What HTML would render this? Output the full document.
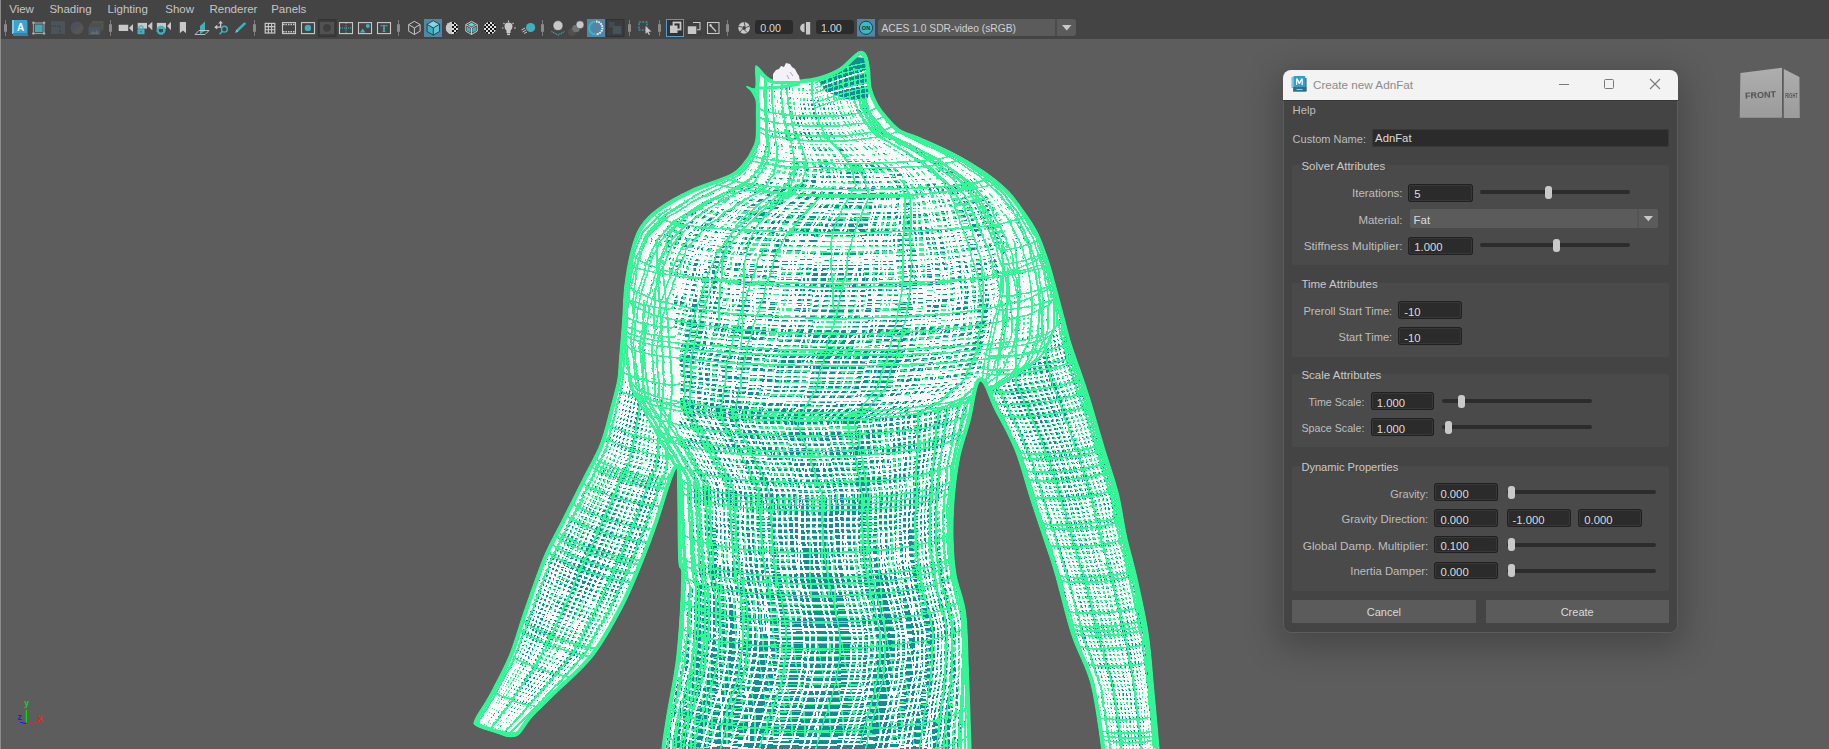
<!DOCTYPE html>
<html><head><meta charset="utf-8"><style>
html,body{margin:0;padding:0;width:1829px;height:749px;overflow:hidden;background:#5d5d5d;}
.b{position:absolute;}
.t{position:absolute;white-space:nowrap;font-family:"Liberation Sans", sans-serif;line-height:1;}
</style></head><body>
<div class="b" style="left:0.0px;top:38.0px;width:1829.0px;height:711.0px;background:#5d5d5d"></div><svg class="b" style="left:0;top:0" width="1829" height="749" viewBox="0 0 1829 749"><defs><clipPath id="bc"><path d="M755.6,88.0 C754.1,91.0 747.6,86.1 746.8,86.5 C746.0,86.9 749.5,88.2 751.0,90.5 C752.5,92.8 755.1,96.4 756.0,100.0 C756.9,103.6 756.4,105.5 756.4,112.0 C756.4,118.5 756.9,132.3 756.0,139.0 C755.1,145.7 752.5,148.5 750.8,152.0 C749.1,155.5 749.2,156.3 746.0,160.0 C742.8,163.7 740.7,169.0 731.5,174.0 C722.3,179.0 702.8,184.3 690.7,190.0 C678.6,195.7 667.3,202.0 659.0,208.0 C650.7,214.0 645.3,219.2 640.8,226.0 C636.2,232.8 634.3,239.0 631.7,248.8 C629.1,258.6 626.5,273.0 625.0,285.0 C623.5,297.0 623.6,308.5 622.7,321.0 C621.8,333.5 620.3,350.2 619.5,360.0 C618.7,369.8 619.3,371.7 617.8,380.0 C616.3,388.3 613.3,398.9 610.4,409.6 C607.5,420.3 605.0,432.5 600.5,444.0 C596.0,455.5 589.9,465.4 583.3,478.5 C576.7,491.6 567.6,509.7 561.0,522.8 C554.4,535.9 550.0,542.5 543.9,557.3 C537.8,572.1 530.0,595.1 524.2,611.5 C518.5,627.9 515.1,641.8 509.4,655.8 C503.6,669.8 495.3,684.7 489.7,695.2 C484.1,705.7 477.6,713.9 475.5,719.0 C473.4,724.1 472.9,723.5 477.0,726.0 C481.1,728.5 494.8,732.2 500.0,734.0 C505.2,735.8 504.9,736.4 508.0,736.5 C511.1,736.6 514.5,737.9 518.5,734.5 C522.5,731.1 526.4,722.9 532.3,716.4 C538.2,709.9 543.6,705.3 553.7,695.2 C563.8,685.1 581.6,670.6 593.1,655.8 C604.6,641.0 614.5,622.2 622.7,606.6 C630.9,591.0 636.6,576.2 642.4,562.2 C648.1,548.2 652.8,535.6 657.2,522.8 C661.7,510.0 665.9,494.6 669.1,485.5 C672.3,476.4 675.2,468.0 676.6,468.0 C678.0,468.0 677.3,470.2 677.7,485.5 C678.1,500.8 678.1,544.8 678.8,560.0 C679.5,575.2 682.1,561.0 681.8,577.0 C681.5,593.0 679.4,632.8 676.9,655.8 C674.4,678.8 669.5,699.4 667.0,714.9 C664.5,730.4 662.8,741.5 662.0,749.0 C661.2,756.5 610.5,758.2 662.0,760.0 C713.5,761.8 919.5,761.8 971.0,760.0 C1022.5,758.2 971.5,764.5 971.0,749.0 C970.5,733.5 969.1,690.0 968.2,667.3 C967.3,644.6 967.5,628.1 965.5,612.7 C963.5,597.3 958.1,587.1 956.0,575.0 C953.9,562.9 953.3,552.5 953.0,540.0 C952.7,527.5 952.9,513.8 954.0,500.0 C955.1,486.2 957.0,470.2 959.7,457.0 C962.4,443.8 966.6,433.5 970.0,420.8 C973.4,408.1 975.9,382.9 980.0,381.0 C984.1,379.1 989.0,397.8 994.9,409.4 C1000.8,420.9 1009.3,435.2 1015.3,450.3 C1021.3,465.4 1025.9,484.2 1031.0,500.0 C1036.1,515.8 1041.9,532.6 1046.0,545.0 C1050.1,557.4 1051.2,559.6 1055.5,574.5 C1059.8,589.4 1065.9,616.3 1071.8,634.5 C1077.7,652.7 1086.0,664.5 1091.0,683.6 C1096.0,702.7 1100.0,736.3 1101.8,749.0 C1103.6,761.7 1092.5,758.2 1102.0,760.0 C1111.5,761.8 1149.5,761.8 1159.0,760.0 C1168.5,758.2 1159.9,760.8 1159.0,749.0 C1158.1,737.2 1155.4,708.1 1153.6,689.0 C1151.8,669.9 1150.9,652.7 1148.2,634.5 C1145.5,616.3 1140.9,596.4 1137.3,580.0 C1133.7,563.6 1129.6,550.9 1126.4,536.4 C1123.2,521.9 1121.7,507.3 1118.0,492.7 C1114.3,478.1 1109.2,464.4 1104.5,449.0 C1099.8,433.6 1094.1,413.2 1090.0,400.0 C1085.9,386.8 1083.2,379.3 1080.0,370.0 C1076.8,360.7 1073.7,352.7 1071.0,344.0 C1068.3,335.3 1066.5,327.3 1064.0,318.0 C1061.5,308.7 1058.7,297.7 1056.0,288.0 C1053.3,278.3 1051.2,269.3 1048.0,260.0 C1044.8,250.7 1041.5,240.8 1037.0,232.0 C1032.5,223.2 1025.7,214.0 1020.7,207.0 C1015.7,200.0 1013.0,195.8 1007.0,190.0 C1001.0,184.2 993.7,178.0 985.0,172.0 C976.3,166.0 965.8,159.7 955.0,154.0 C944.2,148.3 929.7,142.1 920.5,138.0 C911.3,133.9 905.6,133.2 900.0,129.7 C894.4,126.2 890.8,121.3 887.0,117.0 C883.2,112.7 880.1,108.8 877.4,104.0 C874.7,99.2 872.3,93.9 871.0,88.0 C869.7,82.1 870.2,74.3 869.4,68.8 C868.6,63.3 867.8,58.1 866.2,55.2 C864.6,52.3 862.2,51.1 859.8,51.5 C857.4,51.9 855.3,54.7 851.8,57.6 C848.3,60.5 844.4,65.6 839.0,68.8 C833.6,72.0 826.1,75.0 819.7,76.9 C813.3,78.8 808.4,79.5 800.5,80.0 C792.6,80.5 779.6,82.1 772.5,80.0 C765.4,77.9 760.8,69.1 758.0,67.2 C755.2,65.3 756.0,65.3 755.6,68.8 C755.2,72.3 757.1,85.0 755.6,88.0 Z"/></clipPath><linearGradient id="vg" x1="0" y1="0" x2="0" y2="1" gradientUnits="userSpaceOnUse" x2b="0"></linearGradient></defs><g clip-path="url(#bc)"><rect x="450" y="40" width="750" height="720" fill="#108e96"/><g shape-rendering="crispEdges" fill="none"><path d="M758 50l2-2 5-3 8-1 11-2 12-1 13 0 13 0 12 1 11 2 8 1 5 3 2 2 M758 64l2-3 5-2 9-2 12-2 13-1 14 0 14 0 14 1 11 2 9 2 5 2 2 3 M758 68l2-2 5-3 9-2 12-1 13-1 15-1 14 1 13 1 12 1 9 2 5 3 2 2 M756 105l2-3 6-2 10-3 13-1 14-1 16-1 16 1 15 1 12 1 10 3 6 2 2 3 M756 110l2-3 7-3 10-2 13-2 15-1 16 0 16 0 15 1 13 2 10 2 7 3 2 3 M756 133l3-4 7-3 12-3 16-2 18-1 20-1 19 1 19 1 15 2 13 3 7 3 3 4 M731 174l4-6 13-5 20-5 27-4 31-2 33-1 34 1 31 2 26 4 21 5 12 5 5 6 M707 184l5-7 15-7 23-5 30-4 35-3 38-1 38 1 35 3 30 4 24 5 14 7 5 7 M695 188l5-7 16-7 24-5 32-5 38-3 40-1 40 1 37 3 33 5 24 5 16 7 5 7 M660 207l7-8 18-8 28-7 38-5 43-3 47-1 46 1 44 3 37 5 29 7 18 8 6 8 M630 260l7-9 21-9 33-8 43-6 51-4 54-1 54 1 50 4 44 6 33 8 21 9 7 9 M625 295l7-10 21-9 35-8 45-6 52-4 56-1 55 1 52 4 45 6 35 8 21 9 7 10 M624 300l8-10 21-9 35-8 44-6 53-4 56-1 56 1 52 4 44 6 35 8 21 9 8 10 M624 306l7-11 22-9 34-8 45-6 53-4 56-1 56 1 52 4 45 6 34 8 22 9 7 11 M624 316l7-10 22-10 34-8 45-6 53-4 56-1 56 1 52 4 45 6 35 8 21 10 8 10 M624 337l7-10 21-10 34-8 45-6 51-4 55-1 56 1 51 4 44 6 34 8 22 10 7 10 M625 342l7-10 21-9 34-8 44-6 51-4 55-1 54 1 52 4 43 6 34 8 21 9 8 10 M682 578l4-7 14-6 22-5 28-4 34-2 35-1 36 1 33 2 28 4 22 5 14 6 5 7 M681 597l4-7 14-6 23-5 29-4 34-2 36-1 36 1 34 2 29 4 23 5 14 6 5 7 M677 656l5-7 14-6 23-6 31-4 35-2 37-1 38 1 35 2 30 4 23 6 15 6 5 7 M667 718l5-7 15-7 24-6 31-4 37-3 39-1 39 1 37 3 31 4 24 6 15 7 6 7 M662 767l6-7 15-7 24-6 32-4 38-3 40-1 40 1 37 3 32 4 24 6 16 7 5 7 M927 139l10 4 10 5 9 4 8 5 7 4 8 5 7 4 5 5 6 4 5 4 5 5 4 5 3 4 4 5 3 5 3 4 4 5 3 5 3 5 3 5 1 5 3 5 2 5 2 5 2 5 1 5 2 6 1 5 2 5 1 5 2 6 0 5 1 5 0 6 0 5 1 6 0 5-3 5-2 6-2 5-3 5-2 5-4 6-8 5-7 5-8 5-7 6-11 5-10 5-11 6-2 5-2 5-2 5-2 6-1 5-2 6-2 5-2 6-2 5-1 6-2 5-1 6-2 6 0 5-1 6-1 6-1 6 0 6-1 5 0 6-1 6 0 6 0 6-1 6 0 6 0 6 0 6 1 6 0 6 0 6 1 6 1 7 1 6 2 6 1 6 2 7 1 6 1 7 0 6 1 7 0 6 0 7 1 7 1 7 0 7 1 7 1 7 0 7 0 7 1 7 0 8 0 7 1 7 0 7 0 8 1 7 0 7 0 7 0 7 0 7 M939 153l5 4 3 3 3 4 3 3 2 4 2 4 2 4 3 4 1 4 3 5 2 4 2 4 3 5 2 5 3 4 2 5 2 5 3 5 2 5 2 5 3 5 2 5 2 5 2 5 2 5 2 5 1 6 1 5 1 5 1 6 1 5-2 5-1 6-2 5-1 6-3 5-4 6-6 5-7 6-7 6-7 6-10 5-10 6-9 6-3 6-2 6-2 5-1 6-3 6-2 5-1 6-2 6-1 6-2 6-1 6-2 6 0 6-1 6-1 5-1 6-1 6-1 6-1 6 0 6-1 6 0 6-1 6 0 6-1 6 0 6 0 6-1 6 1 6-1 6 1 7 0 6 0 6 1 6 1 6 1 6 1 7 1 6 0 7 1 6 0 7 1 7 1 6 1 7 1 7 2 7 1 7 1 7 1 7 2 7 1 7 2 7 0 7 2 7 1 7 0 7 1 7 0 7 1 7 0 7 M838 43l4 4 2 4 0 5 1 4 0 5 1 4 0 5 0 4 1 5 2 4 1 5 2 4 3 5 2 4 4 4 4 5 3 4 8 4 9 3 8 4 8 4 7 4 7 4 6 3 5 4 5 4 5 4 2 3 3 4 2 3 2 4 1 4 2 3 2 4 1 5 2 4 2 4 3 4 3 5 2 5 2 4 2 5 2 5 3 5 2 5 3 5 1 5 3 5 2 5 3 5 1 5 2 5 2 5 0 6 2 5 1 5 0 5-1 6-1 5-1 6-2 5-2 6-4 5-7 6-6 6-7 6-7 5-9 6-10 6-10 7-2 5-1 6-2 6-2 5-2 6-2 6-2 6-1 5-2 6-1 6-1 6-2 6 0 6-1 6-1 6-1 6-1 6-1 6 0 6-1 6 0 5-1 6-1 6 0 6-1 7 0 6 0 6-1 6 0 6 0 6 0 6 1 6 0 7 1 6 1 6 1 6 1 7 0 6 0 6 1 7 1 7 1 6 0 7 2 7 1 6 1 7 2 7 1 7 1 7 2 7 1 7 1 7 1 7 1 7 1 8 1 7 1 7 0 7 1 7 0 7 M935 192l3 4 2 4 2 5 2 5 2 4 2 5 3 5 2 5 2 5 2 5 3 5 2 5 2 5 3 5 1 5 1 5 2 5 1 6 1 5 1 5-1 6-2 5-1 6-1 5-2 5-4 6-6 6-6 6-6 6-7 6-9 6-9 6-9 6-2 6-2 5-2 6-1 6-2 6-2 6-1 5-2 6-1 6-1 6-1 6-1 6-1 6 0 6-1 6-1 6-1 6-1 6 0 6-2 6 0 6-1 6 0 6 0 6-1 6-1 6 0 6 0 6-1 6 0 6 1 7 0 6 0 6 1 6 0 6 M916 167l0 3 1 4 1 4 1 4 1 4 1 4 2 5 2 4 2 5 2 4 2 5 2 5 2 4 3 5 2 5 2 5 2 5 3 5 3 5 1 5 2 5 1 5 2 6 1 5 2 5 0 5-1 6-1 5-1 6-1 5-2 6-4 5-5 6-6 6-7 6-6 6-8 6-10 6-8 7-2 5-2 6-1 6-2 6-2 5-1 6-2 6-1 6-1 6-1 6-1 6-1 6 0 6 0 6-1 6-1 6-1 6-1 6-1 6-1 6 0 6-1 6 0 6-1 6 0 6-1 6 0 6 0 6-1 6 0 6 0 7 0 6 1 6 0 6 1 6 1 7 0 6 0 6 1 7 0 6 1 7 1 7 1 6 1 7 2 7 1 6 1 7 1 7 2 7 1 7 2 7 1 7 2 7 1 7 1 7 1 7 0 7 1 7 0 7 1 7 M860 127l5 3 6 4 5 3 3 4 3 4 3 3 2 4-1 3-1 3-1 3 0 4-1 3 0 4-1 4 0 4 1 4 1 4 0 4 3 4 1 5 1 5 2 4 2 5 2 4 2 5 3 5 2 5 2 5 2 5 2 5 2 5 2 5 2 5 2 5 1 5 1 5 1 6-1 5-1 5-1 6-1 5-1 6-3 6-5 6-6 6-5 6-6 6-7 6-8 6-8 7-1 5-1 6-2 6-1 6-1 6-1 6-2 6-1 6 0 6-1 6-1 6 0 6 0 6 0 6-1 6-1 6 0 6-1 6-1 6 0 6-1 6-1 6 0 6-1 6-1 6 0 6-1 6 0 7 0 6-1 6 1 6 0 7 0 6 0 6 1 6 0 6 1 7 0 6 0 6 1 7 0 6 1 7 1 7 1 6 1 7 2 7 1 6 2 7 1 7 1 7 2 7 1 7 1 7 1 7 2 7 1 7 1 7 0 7 0 7 0 7 M850 164l-2 3-2 4-1 4-1 4 0 4 0 4 0 4 1 4 2 5 1 4 1 5 2 4 2 5 1 5 2 5 3 4 1 5 3 5 2 5 2 5 2 5 1 5 2 5 1 5 1 5 1 5 0 6-1 5 0 6-1 5-1 6-2 5-5 6-5 7-4 6-6 6-6 6-7 6-6 7-1 6-1 6-1 6 0 6-1 6-1 6 0 6-1 6 0 6-1 6 0 6 0 6 0 6 1 6-1 6 0 6-1 6-1 6 0 6-1 6-1 6 0 6-1 6-1 6 0 7-1 6 0 6-1 6 M845 151l-5 3-3 3-4 4-3 3-3 4-3 3-2 4-1 4-1 4 0 4-1 4 1 4 1 5 1 4 1 5 2 4 1 5 2 5 2 4 2 5 2 5 1 5 2 5 3 5 1 5 2 5 1 5 2 5 1 5 1 5 0 5-1 6 0 5 0 6-1 5-3 6-4 6-4 6-4 6-5 6-5 7-7 6-5 7 0 6-1 6 0 6-1 5-1 7 0 6 0 6 0 6 0 6 0 6 0 6 0 6 1 6 0 7 0 5-1 6 0 6-1 6-1 6-1 6 0 6 0 6-1 7-1 6-1 6 0 6 0 6-1 6 0 6-1 7 1 6 0 6 0 7 0 6 0 6-1 6 1 7 0 6 0 6 0 7 1 6 1 7 1 6 1 7 1 7 1 6 1 7 1 7 2 6 0 7 2 7 1 7 2 7 1 6 1 7 1 7 0 7 1 7 0 7 0 7 M789 42l2 4 1 4 0 5 0 4 0 5 0 4-1 5 0 4 1 5 0 4 1 5 1 4 1 4 1 5 1 4 2 4 2 4 2 4 4 4 2 3 3 4 2 4 1 3 0 4 0 4-1 3-1 4-6 3-6 3-6 3-5 4-4 3-4 4-4 4-2 4-2 4-1 4-2 4 0 4 1 5 0 4 1 5 0 4 2 5 2 4 1 5 1 5 2 4 2 5 1 5 2 5 1 5 2 5 1 5 2 5 1 5 1 5 0 5 0 5 0 6 0 5-1 6-2 6-3 6-2 6-4 6-3 6-4 6-6 7-3 7 0 6 0 5 0 6 0 7 0 6 0 6 1 6 0 6 1 6 1 6 0 6 1 6 2 7 1 6 0 6-1 6-1 6 0 6-1 6 0 6-1 6 0 6-1 6 0 6-1 6 0 6-1 7 0 6 0 6-1 6 0 7 1 6-1 6 0 6 0 7 0 6 0 6 0 7 0 6 0 7 0 6 1 7 1 6 0 7 2 6 0 7 1 6 1 7 1 7 1 6 1 7 1 7 1 7 1 6 1 7 1 7 0 7 1 7 0 7-1 7 M782 158l-8 4-8 3-6 3-5 4-6 4-5 4-3 4-2 4-3 4-2 4 0 5 0 4 0 4 0 5 0 4 1 5 1 5 2 4 0 5 2 4 1 5 1 5 2 5 1 5 1 4 2 5 1 5 1 5 1 5 0 6 0 5 0 5 0 6 0 5-1 6-2 6-3 6-2 6-2 6-4 7-3 6-2 7 1 6 0 6 0 6 1 6 1 6 0 6 2 6 1 6 1 6 1 6 1 6 2 7 2 6 1 6 0 6-1 6 0 6-1 6 0 6 0 6-1 6 0 6-1 6 0 6 0 7-1 6-1 6 0 6 0 6 0 7 0 6 1 7-1 6 0 6-1 6 0 7 0 6 0 6 0 7 0 6 0 7 0 6 1 7 1 6 0 7 0 6 1 7 1 6 0 7 2 7 0 6 1 7 0 7 1 7 1 6 1 7 0 7 0 7 0 7 0 7 M720 202l0 5 0 4 0 5 0 4 0 5 1 4 1 5 1 4 1 5 2 5 1 4 1 5 1 5 1 5 2 5 1 5 1 5 1 5 0 5 0 5 0 6 0 5 0 6-1 5-1 6-2 6-3 7-1 6-3 6-3 6-2 7 1 6 1 6 0 6 1 6 1 6 1 6 1 6 2 6 1 6 2 7 1 6 2 6 2 6 1 6 0 6-1 6 0 6 0 6-1 6 0 6 0 6-1 6 0 6-1 7 0 6-1 6 1 6-1 6-1 7 1 6 0 6 0 7 0 6 0 6-1 7 M779 139l0 4-2 3-2 4-3 4-4 4-9 3-9 4-10 4-6 3-7 4-6 4-6 4-4 4-3 4-3 5-3 4-1 4-1 5 0 4 0 4-1 5 1 5 0 4 2 5 0 4 1 5 1 5 0 4 2 5 1 5 1 5 1 5 1 5 1 4 1 6 0 5 0 5 1 5-1 6 1 5-1 6-1 6-1 6-2 6-2 6-2 6-2 7-1 6 1 6 1 6 2 6 1 6 1 6 1 6 2 6 1 6 2 6 2 7 1 6 2 6 3 6 2 6-1 6 0 6 0 6-1 6 0 6 0 6 0 6-1 6 0 6 0 7-1 6 0 6 0 6-1 6-1 7 1 6 1 7 0 6-1 6 0 7-1 6 0 6-1 7 0 6 0 6 0 7 0 6 1 7 0 6 0 7 0 6 1 7 0 6 0 7 1 6 0 7 0 7 1 6 1 7 0 7 1 6 0 7 0 7 0 7 0 7 0 7 M761 47l0 4 0 5 0 5 0 4-1 5 0 4-1 5 0 4 0 5 0 5 0 4 1 5 0 4 0 5 0 4 0 4 0 5 0 4 1 4-1 5-1 4-1 4-3 4-2 4-5 5-4 4-5 4-11 4-11 4-11 4-10 4-8 5-7 4-8 4-5 5-4 4-5 4-3 5-2 4-1 5-1 4-2 5-1 5 0 4 0 5-1 4 0 5 0 4 0 5 1 5 0 4 1 5 0 5 0 5 1 5 1 5 0 5 0 5 0 5 1 5 1 6 0 5 0 6 0 5 0 6 0 6-1 6 0 6 0 6 1 6 2 6 2 6 3 6 2 6 2 6 3 6 2 6 3 6 2 6 3 6 2 6 3 6 3 6 2 6 1 6-1 6 1 6 0 6-1 6 0 6 0 6 0 6 0 6 0 6 0 6 0 7-1 6 0 6 0 6 1 7 1 6 0 7 0 6-1 7 0 6-1 6 0 7 0 6-1 7 0 6 0 7 0 6 0 7 0 6-1 7-1 6 0 6 0 7-1 6 0 7-1 7 0 6 0 7 0 7 0 6 0 7-1 7 0 7 0 7-1 7 M759 48l0 5 0 5 0 4 0 5-1 4 0 5-1 5 0 4 0 5 0 4 0 5 0 4 0 5 0 4 0 5 0 4 0 5 1 4 0 5-1 4-2 4-2 5-3 4-2 5-5 4-5 4-5 5-12 4-11 4-12 5-9 4-9 5-7 4-8 4-6 5-4 4-5 5-4 4-2 5-2 5-1 4-2 5-1 4-1 5 0 5-1 4 0 5 0 4-1 5 0 5 0 4 0 5 1 5 0 5 0 5 0 5 0 5 1 5 0 5 1 5 0 5 1 6 0 5 0 6 1 5 0 6 0 6 0 6 0 6 2 6 3 6 2 5 3 6 2 6 3 6 3 6 3 6 2 6 3 6 3 6 3 6 3 6 3 6 3 6 0 6 1 6 0 6-1 6 0 6 0 6 0 6 1 6-1 6 0 6 0 6 0 7 0 6 0 6 0 6 1 7 1 6 0 7 0 6 0 7-1 6 0 7 0 6-1 6 0 7-1 6 0 7 0 6 0 7-1 6 0 7-2 6 0 7-1 6 0 7-1 6-1 7-1 6 0 7 0 7-1 7 0 6 0 7 0 7-1 7-1 7 M758 71l2-2 5-1 9-1 12-1 13-1 15 0 14 0 14 1 11 1 9 1 6 1 2 2 M757 80l2-2 5-1 9-1 12-1 14-1 15 0 14 0 14 1 12 1 9 1 5 1 2 2 M754 144l3-2 9-2 14-2 19-2 22 0 23-1 23 1 22 0 19 2 14 2 9 2 3 2 M752 149l3-3 10-2 15-2 20-1 23-1 25-1 25 1 23 1 20 1 15 2 10 2 3 3 M725 177l4-4 14-3 21-3 27-2 32-1 35-1 34 1 32 1 28 2 21 3 13 3 5 4 M681 195l6-4 16-4 27-3 34-3 40-2 42 0 43 0 40 2 34 3 26 3 17 4 5 4 M657 210l7-5 18-5 29-3 38-3 44-2 47-1 47 1 44 2 38 3 29 3 18 5 6 5 M643 224l7-5 19-5 31-4 40-3 47-2 50-1 51 1 47 2 40 3 31 4 19 5 7 5 M626 278l8-6 21-5 34-4 44-4 51-2 56-1 55 1 51 2 45 4 33 4 22 5 7 6 M625 293l7-6 22-5 34-4 45-4 52-2 55-1 56 1 52 2 45 4 34 4 22 5 7 6 M628 366l6-5 20-5 31-4 41-3 48-2 51-1 51 1 48 2 41 3 32 4 19 5 7 5 M860 52l7 5 1 4 1 5 0 5 1 4 1 5 0 4 1 5 2 5 1 4 2 5 3 4 4 5 3 4 4 5 5 5 6 4 11 5 11 4 10 5 10 5 10 4 8 5 8 4 7 5 8 5 6 4 6 5 5 4 5 5 4 5 4 5 4 4 3 5 4 5 3 5 2 4 4 5 3 5 1 5 3 5 1 4 2 5 2 5 1 5 2 5 2 5 1 5 2 5 1 5 0 5 0 5 M861 52l5 4 1 5 2 5 0 4 1 5 0 4 0 5 1 5 2 4 2 5 2 4 3 5 3 5 3 4 5 5 5 4 6 5 11 4 11 5 10 4 9 5 10 5 8 4 8 5 8 4 7 5 6 4 6 5 5 5 6 4 4 5 3 4 4 5 3 5 3 5 4 4 3 5 3 5 3 5 1 4 2 5 2 5 2 5 2 5 2 5 1 5 2 5 1 5 1 5 2 5 0 5 1 5 0 5 1 5 0 5 M860 51l6 5 1 5 1 4 1 5 0 4 1 5 0 5 0 4 3 5 1 4 2 5 3 5 3 4 4 5 5 4 4 5 6 4 11 5 11 4 10 5 10 4 10 5 7 4 8 5 8 4 7 5 6 5 6 4 5 5 5 4 5 5 3 4 4 5 3 5 3 4 3 5 3 5 4 5 2 4 2 5 2 5 2 5 2 5 2 5 1 5 2 5 1 4 1 5 2 5 2 5-1 5 1 6 M858 51l7 4 0 5 1 5 1 4 1 5 0 4 1 5 0 4 2 5 2 5 2 4 3 5 3 4 3 5 4 4 5 5 6 4 12 5 10 4 9 5 10 4 10 5 8 4 7 5 8 4 7 4 5 5 6 4 5 5 5 4 4 5 3 4 4 5 3 4 3 5 3 5 3 4 3 5 3 5 2 5 1 5 2 4 2 5 2 5 2 5 1 5 1 5 2 5 1 5 1 5 1 5 0 5 0 5 1 5 0 5 0 5-1 6-2 5-3 5 M856 50l6 5 1 4 1 5 1 4 0 5 0 5 1 4 1 5 1 4 2 5 2 5 3 4 3 5 3 4 5 5 5 4 5 5 11 4 10 4 10 5 9 4 9 4 8 5 7 4 7 5 8 4 5 4 5 5 5 4 4 4 4 5 3 4 4 5 2 4 3 5 3 5 3 4 3 5 2 5 2 4 2 5 2 5 1 5 2 5 1 5 2 4 1 5 2 5 1 5 1 5 1 5 0 5 0 5 0 6 M851 49l6 5 1 4 1 5 1 5 0 4 0 5 1 4 0 5 2 4 2 5 1 5 3 4 4 5 3 4 4 5 4 4 6 4 10 5 9 4 9 4 10 5 8 4 7 4 7 4 7 5 6 4 5 4 4 4 4 5 4 4 3 4 3 4 2 5 3 4 2 5 2 4 3 5 2 5 3 4 2 5 1 5 1 5 3 4 1 5 2 5 1 5 1 5 1 5 1 5 2 5 0 5 0 5 M850 49l5 5 1 4 1 5 1 4 0 5 1 4 0 5 0 5 2 4 2 5 2 4 2 5 3 4 3 5 5 4 3 5 6 4 10 4 10 5 8 4 9 4 9 4 6 5 7 4 6 4 7 4 4 4 4 5 3 4 4 4 2 4 3 5 3 4 2 4 3 5 2 4 2 5 2 5 2 4 2 5 2 5 1 5 2 4 1 5 2 5 1 5 1 5 1 5 2 5 M843 48l5 5 1 4 1 5 1 5 0 4 0 5 0 4 1 5 2 4 1 5 2 4 2 5 3 4 2 5 4 4 5 5 4 4 10 4 9 4 7 5 9 4 7 4 7 4 5 4 6 4 6 5 3 4 2 4 3 4 3 4 1 4 2 4 2 5 1 4 2 4 2 5 2 4 2 5 2 5 1 4 1 5 2 5 1 4 1 5 2 5 0 5 2 5 1 5 1 5 1 5 0 5 1 5 0 5 0 5 0 5 0 5-1 5-2 6 M781 48l1 4 0 5 0 5 0 4 0 5 0 4-1 5 1 4 0 5 0 4 1 5 0 4 1 5 1 4 1 5 1 4 1 4 2 5 2 4 1 4 1 4 1 4-1 4-1 4-2 4-3 5-5 4-8 4-8 4-8 4-5 4-6 4-6 4-5 4-3 5-3 4-3 5-2 4-1 5-1 5-1 4-1 5 0 5-1 5 0 5-1 4 0 5 0 5 0 5-1 5 0 5 0 5 0 5 0 5 0 5 0 5-1 6-1 5 M775 48l2 5 0 4 0 5 0 5-1 4 0 5 0 4 0 5 0 4 0 5 1 4 0 5 1 4 0 5 1 4 1 5 1 4 2 4 1 4 1 5-1 4 1 4-2 4-1 4-3 4-3 5-6 4-9 4-9 4-9 4-6 4-6 4-6 5-6 4-3 4-4 5-3 4-2 5-2 5-1 4-1 5-1 5-1 4 0 5-1 5 0 5-1 5 0 5-1 5 0 5-1 5 0 5 M771 49l0 4 0 5 1 4-1 5 0 5 0 4 0 5 0 4 0 5 0 4 0 5 1 4 0 5 1 4 0 5 1 4 0 5 2 4 1 4 0 4-1 5 0 4-2 4-3 4-3 4-3 5-7 4-10 4-10 4-9 4-6 4-7 5-7 4-6 4-4 5-4 5-3 4-3 5-1 4-2 5-1 5-2 5-1 4 0 5-1 5 0 5-1 5-1 5 0 5 0 5-1 5 0 5 0 5 0 5 0 5 0 5-1 5 M760 51l0 4 0 5 0 5 0 4-1 5 0 4-1 5 0 4 0 5 0 5 1 4 0 5 0 4 0 5 0 4 0 5 0 4 0 5 0 4-2 5-1 4-2 5-3 4-3 5-5 4-5 4-8 5-12 4-11 5-11 4-8 5-8 4-8 5-7 4-5 5-5 5-4 4-4 5-1 5-2 5-2 5-2 4-1 5 0 5-2 5 0 5-1 5-1 5-1 5 0 5-1 5 0 5 0 5-1 5 0 5 0 5 M759 51l0 5 0 4 1 5-1 4-1 5 0 5 0 4 0 5 0 4-1 5 1 5 0 4 0 5 0 4 0 5 0 4 0 5 0 4 0 5-2 4-2 5-1 4-3 5-4 4-5 5-5 4-8 5-12 4-11 5-12 4-8 5-8 4-8 5-7 5-5 4-5 5-4 5-3 4-3 5-1 5-2 5-2 5-1 5-1 4-1 5-1 5-1 5 0 5-2 5 0 5 0 5 0 5-1 5 0 5 M634 243l1-1 1 0 3 0 3 1 4 1 4 1 4 1 4 1 3 1 2 1 1 1 1 1 M625 287l1 0 2-1 4 0 5 1 6 1 6 1 6 2 6 1 4 2 4 2 2 1 1 1 M624 301l1-1 3 0 4 0 5 1 6 1 6 1 7 2 6 1 5 2 3 2 3 1 0 1 M624 306l1-1 2-1 5 1 5 0 6 1 7 2 6 1 6 2 5 2 4 1 2 2 1 1 M623 315l1-1 3 0 4 0 6 0 6 1 7 2 6 1 7 2 5 2 4 2 2 1 1 1 M622 328l1-1 3 0 5 0 5 1 7 1 7 1 7 2 6 2 6 2 4 2 2 1 1 2 M621 342l1-1 3 0 5 0 6 0 7 2 7 1 7 2 7 2 6 2 4 2 3 2 0 1 M616 387l1-1 4 0 5 0 7 1 7 1 9 2 8 2 7 2 6 3 5 2 3 2 1 1 M610 409l2-1 4 0 5 0 7 1 9 2 8 2 9 2 8 3 7 2 5 3 3 2 1 1 M604 431l2-1 4 0 6 0 8 1 9 2 9 2 9 3 9 3 7 2 6 3 3 2 1 2 M600 444l2-1 4 0 7 0 8 1 9 2 10 3 10 2 9 3 8 3 5 3 4 2 1 2 M594 456l2-1 4 0 7 0 8 2 10 2 10 2 10 3 9 3 8 3 6 3 4 3 0 2 M590 465l2-2 4 0 7 1 8 1 10 2 10 3 10 3 10 3 7 3 6 3 4 3 1 2 M582 481l2-1 4-1 7 1 9 2 10 2 10 3 11 3 9 3 8 4 6 3 4 3 1 2 M576 493l2-1 4 0 7 0 9 2 10 2 11 3 11 4 10 4 8 3 6 4 4 2 1 2 M566 513l2-1 4 0 8 1 9 2 10 2 11 4 11 3 10 4 9 4 6 4 4 3 0 2 M560 526l2-2 4 0 8 1 9 2 10 3 12 3 11 4 10 4 8 4 7 4 4 3 0 2 M549 546l3-1 4 0 8 1 9 2 11 3 11 4 11 4 11 4 8 4 7 4 3 3 1 2 M547 550l3-1 4 0 8 1 9 2 11 3 11 4 11 4 11 4 8 4 7 4 3 3 1 2 M544 558l2-1 4 0 8 1 9 2 11 3 11 4 11 4 11 5 8 4 7 4 4 3 0 2 M540 567l2-1 5 0 8 1 9 2 11 3 11 4 11 4 10 4 9 5 6 4 4 3 1 2 M533 588l2-1 4 0 7 1 9 3 10 3 11 3 11 4 10 5 8 4 6 4 4 3 0 2 M525 610l2-1 4 0 7 1 8 2 10 3 10 4 10 4 9 4 8 4 6 3 3 3 1 2 M523 614l2-1 5 0 6 1 9 2 9 3 10 4 10 4 9 4 8 4 6 3 3 3 1 2 M515 640l1-1 4 0 6 1 7 2 9 3 9 3 9 3 8 4 7 3 5 3 3 3 0 2 M513 644l2-1 4 0 5 1 8 2 8 3 8 3 9 3 8 4 6 3 5 3 3 2 1 2 M488 698l1-1 3 0 4 0 5 1 6 2 6 2 6 2 6 2 5 2 3 2 2 2 1 1 M479 713l1 0 2 0 4 0 5 1 5 1 6 1 5 2 5 2 5 2 3 2 2 1 0 1 M666 260l1 5 1 4 0 5 1 5 1 4 1 5 0 5 1 5 0 4 1 5 0 5 1 4 0 5 0 5 1 5 1 4 0 5 0 5 1 5 1 4 0 5 0 5 1 5 1 4 0 5 0 5-1 5 0 4 0 5 0 5-1 5 0 4 0 5 0 5 0 5-1 4 0 5 0 5 0 5 0 4 0 5-1 5 0 5 0 4-2 5-2 4-1 4-2 5-1 4-2 5-2 4-1 5-2 4-1 5-2 5-1 4-2 4-1 5-2 4-1 5-2 4-2 5-1 4-2 5-2 4-2 4-2 5-2 4-2 5-2 4-1 4-2 5-2 4-2 4-3 5-2 4-2 4-3 4-2 4-3 4-2 4-2 4-3 4-2 5-3 4-2 4-3 4-3 3-3 4-4 3-3 3-4 4-3 3-3 4-3 3-4 3-4 4-3 3-3 3-3 4-4 3-3 4-3 3-4 3-4 4-3 3-3 3-4 4-3 3-4 3-3 4 M656 260l1 4 0 5 0 4 0 5 1 4 0 5 0 5 1 4 0 5 0 4 0 5 1 5 0 4 0 5 1 5-1 4 1 5 0 4 1 5-1 5 1 4 0 5 0 5 0 4 0 5 0 5 0 4-1 5 0 4 0 5-1 5-1 4 0 5 0 4-1 5 0 5-1 4 0 5-1 4 0 5-1 4 0 5-1 4-2 5-1 4-3 4-2 4-1 5-1 4-2 5-2 4-1 4-2 5-2 4-1 4-2 5-2 4-2 4-1 5-2 4-2 4-2 5-1 4-2 4-2 4-2 5-2 4-2 4-2 5-1 4-3 4-1 5-2 4-2 4-2 4-2 5-2 4-3 4-2 4-2 5-2 4-2 4-3 4-2 4-2 5-2 4-3 4-3 3-3 4-3 4-2 4-3 4-3 3-3 4-3 4-3 3-3 4-3 4-3 3-4 4-2 4-4 3-3 4-2 4-4 3-3 4-3 3-3 4-3 4-2 4 M656 295l0 5 0 5 1 4 0 5 0 5 0 4 1 5 0 4 0 5 0 5 0 4 0 5 0 4 1 5 0 5 0 4 0 5 0 5 0 4-1 5 0 4-1 5-1 5 0 4-1 5 0 4-1 5 0 4-1 5 0 4-1 5 0 5 0 4-1 5-1 4-2 4-2 5-2 4-2 4-2 4-1 5-2 4-1 4-2 5-2 4-1 4-2 5-2 4-1 4-2 5-2 4-2 4-2 4-1 5-2 4-2 4-1 5-3 4-2 4-1 4-2 5-2 4-2 4-2 5-2 4-2 4-2 5-2 4-2 4-2 4-2 4-2 5-3 4-2 4-2 4-2 5-2 4-2 4-3 4-3 4-2 4-3 3-3 4-2 4-3 4-3 4-3 3-3 4-3 4-3 4-3 3-3 4-3 4-3 3-3 4-3 4-3 3-3 4-3 3-3 4-3 4-2 4 M644 261l-1 5 0 4 0 4 0 5-1 4 0 5 0 4 1 5-1 4 0 5 0 5 0 4 0 5 0 4 0 5 0 4 0 5 0 4 0 5 0 5 0 4 0 5 0 4 0 5-1 4 0 5 0 5-2 4 0 5-1 4-1 4-1 5 0 4-1 5-1 4-1 5-1 4-1 5 0 4-1 4-1 5-1 4-2 4-3 4-1 5-2 4-2 4-2 4-2 4-1 5-2 4-2 4-2 4-2 4-2 5-1 4-2 4-2 4-2 4-2 4-2 5-2 4-2 4-1 4-2 4-3 5-2 4-2 4-1 4-2 4-2 5-2 4-1 4-2 5-2 4-2 4-1 5-2 4-2 4-2 4-2 5-2 4-2 4-1 5-2 4-3 4-2 4-2 4-2 4-2 4-3 5-2 4-2 4-3 3-3 4-2 4-3 4-2 4-3 4-3 4-2 4-3 4-2 3-3 4-3 4-3 4-3 4-1 4-1 4 M633 255l-1 5-1 4-1 5 0 4-1 4-1 5-1 4 1 5 0 4-1 5-1 5 0 4 0 5 0 4 0 5-1 4 0 5 0 4-1 5 0 4 0 5-1 4 0 5 0 4-1 5 0 4 0 5-1 4-1 5-1 4-1 5-1 4-1 4-1 5-1 4-2 5-1 4-1 4-1 5-1 4-2 4-1 5-2 4-2 4-2 4-2 4-2 4-2 4-2 4-2 4-2 4-2 5-2 4-2 4-2 4-2 4-2 4-2 4-2 4-2 4-2 4-2 4-2 4-2 4-2 5-2 4-2 4-2 4-2 4-2 4-1 4-2 5-2 4-1 4-2 5-1 4-2 4-2 4-1 5-2 4-1 4-2 5-2 4-1 4-2 5-1 4-2 4-1 5-2 4-1 4-2 5-2 4-1 4-2 4-2 4-3 4-2 5-2 4-2 4-2 4-2 4-2 4-3 4-2 4-3 4-2 4-2 4-3 4 0 4 0 4 M632 255l-1 5-1 4 0 5-2 4 0 5-1 4 0 5-1 4 0 5 0 4 0 5-1 4 0 5-1 4 0 5 0 4 0 5-1 4 0 5 0 4 0 5-1 4-1 5 0 4 0 5 0 5-1 4-1 5-1 4-1 4-1 5-1 4-1 5-1 4-1 4-2 5-1 4-1 4-1 5-1 4-1 5-2 4-2 4-2 4-2 4-2 4-2 4-2 4-2 4-2 4-2 5-2 4-2 4-2 4-2 4-2 4-2 4-2 4-2 4-2 4-2 4-2 4-2 4-2 4-2 5-2 4-2 4-2 4-2 4-2 4-1 4-2 5-2 4-1 4-2 5-1 4-2 4-2 4-1 5-2 4-1 4-2 5-1 4-2 4-2 5-1 4-2 4-1 5-2 4-1 4-2 5-1 4-2 4-2 4-2 4-2 4-2 5-2 4-2 4-2 4-3 4-2 4-2 4-2 4-3 4-2 4-2 4-3 4 0 4 0 4 M1040 239l-1-1-2 0-4 0-4 1-5 1-5 1-5 1-5 2-4 1-3 2-2 1 0 1 M1054 283l-1-1-3-1-4 1-6 0-7 1-7 2-7 1-7 2-6 2-4 2-3 2 0 1 M1056 287l-1-1-4 0-4 0-7 0-7 2-7 1-8 2-7 2-6 2-4 1-3 2 0 2 M1058 296l-1-1-4 0-5 0-6 0-8 1-8 2-8 1-8 2-6 2-5 2-3 2-1 1 M1064 319l-1-2-4 0-6-1-8 1-9 1-10 1-10 2-8 2-8 2-6 2-3 2-1 2 M1067 327l-2-1-4-1-7 0-8 0-10 1-10 2-10 2-10 2-8 2-6 2-3 2-1 2 M1079 367l-2-1-5-2-8 0-11 0-12 1-12 2-13 2-12 2-10 3-8 2-5 3-1 2 M1083 380l-1-1-5-1-8-1-11 0-11 1-13 1-13 2-11 3-10 2-8 3-4 2-2 2 M1089 398l-1-2-5-1-8 0-10 0-11 0-13 2-12 1-11 2-10 3-7 2-5 2-1 2 M1091 403l-2-2-5-1-8-1-9 0-12 1-12 1-12 2-11 2-10 2-7 2-5 3-1 2 M1099 429l-2-1-5-2-7 0-9 0-11 0-12 1-11 1-11 2-9 2-7 2-4 2-2 2 M1101 438l-1-1-5-2-7 0-9 0-11 0-11 1-12 1-10 2-9 2-7 2-4 2-2 2 M1107 456l-2-2-5-1-7-1-9 0-10 1-11 0-12 2-10 1-9 2-7 2-4 2-1 2 M1111 469l-2-1-4-2-7 0-10 0-10 0-11 1-12 1-10 2-9 1-7 2-4 2-1 2 M1122 514l-1-1-5-2-7 0-8-1-11 1-10 0-11 1-10 2-9 2-7 2-4 1-1 2 M1125 528l-2-2-4-1-7-1-8 0-10 0-11 1-11 1-9 1-9 2-6 2-4 2-2 1 M1132 559l-1-1-4-1-7-1-8 0-10 0-10 0-10 1-10 1-8 2-6 2-4 1-2 2 M1133 564l-1-2-4-1-7-1-8 0-10 0-10 1-10 1-10 1-8 1-6 2-4 2-1 1 M1140 596l-1-2-4-1-6-1-8 0-10 0-10 0-10 1-9 1-8 2-6 1-4 2-1 2 M1145 618l-1-1-4-1-6-1-8-1-10 0-10 1-9 1-10 1-7 1-6 2-4 1-1 2 M1149 646l-1-2-4-1-5-1-8 0-9 0-9 0-9 1-9 1-7 1-6 1-3 2-1 1 M1150 650l-1-1-4-1-6-1-7 0-9-1-9 1-9 0-8 1-8 1-5 2-4 1-1 1 M1151 664l-1-1-3-1-6-1-7-1-8 0-8 0-9 1-8 0-7 1-5 2-4 1-1 1 M1161 766l-1-1-3-1-5-1-5-1-7 0-8-1-7 1-7 0-6 1-5 1-3 1-1 1 M1162 775l-1-1-3-1-4-1-6-1-7 0-8 0-8 0-7 0-6 1-4 1-3 1-1 1 M1001 252l0 5 0 4 0 5 0 4 0 5 0 5 0 4 0 5-1 4-1 5-1 4-1 4-1 5-1 4-1 5-1 4-1 5-2 4 0 4-1 5-2 4 0 5-1 4-1 5 0 4-1 5-1 4 0 5 1 4 3 4 2 4 2 4 2 4 3 5 2 4 1 4 2 4 2 4 2 4 2 4 3 5 2 4 2 4 2 4 2 4 1 5 2 4 1 5 2 4 1 4 1 5 2 4 1 5 1 4 2 4 1 5 1 4 2 5 1 4 2 4 2 5 1 4 1 5 2 4 1 4 2 5 1 4 1 5 2 4 2 4 1 5 1 4 1 5 2 4 1 5 1 4 1 5 2 4 1 4 1 5 1 4 1 5 2 4 1 5 1 4 1 5 2 4 1 5 2 4 2 4 1 5 2 4 2 4 1 5 2 4 1 4 2 5 2 4 1 5 1 4 0 5 1 4 1 5 0 4 1 5 1 5 0 4 1 5 1 4 1 5 1 4 0 5 1 5 0 4 1 5 0 4 0 5 1 5 M1005 232l0 4 0 5 0 4 1 5 0 4 1 5 0 4 0 5 0 4 0 5 1 4 0 5-1 4-1 4-1 5-1 4 0 4-1 5-1 4 0 5-1 4-1 4-1 5 0 4-1 4-1 5 0 4-1 5 0 4 0 4-1 5 0 4 2 4 2 5 2 4 2 4 2 4 2 4 2 4 2 5 2 4 2 4 2 4 2 5 2 4 2 4 2 4 2 4 2 5 1 4 1 5 2 4 1 4 1 5 2 4 1 5 2 4 1 4 2 5 1 4 1 5 2 4 1 5 1 4 2 4 2 5 0 4 2 5 1 4 2 5 1 4 2 5 1 4 1 4 2 5 1 4 2 5 1 4 1 5 1 4 1 5 2 4 0 5 2 4 1 5 1 4 1 5 1 4 1 5 2 4 1 4 2 5 1 4 2 5 1 4 2 5 1 4 2 4 1 5 2 4 1 5 2 4 0 5 1 4 1 5 0 4 1 5 1 5 1 4 0 5 1 4 1 5 0 4 1 5 1 5 0 4 1 5 1 4 0 5 0 5 1 4 0 5 M1030 261l1 5 1 4 0 4 1 5 1 4 0 4 0 5 1 4 0 4 1 5 0 4 0 4 1 5 0 4 0 4 1 5 0 4 1 4 0 5 1 4 1 4 0 4 1 5 1 4 2 4 1 5 2 4 1 4 2 5 2 4 2 4 1 5 2 4 2 4 1 5 2 4 2 5 1 4 2 4 2 5 1 4 2 5 0 4 2 5 2 4 1 4 1 5 1 4 2 5 1 4 1 4 2 5 1 4 1 5 1 4 2 5 0 5 2 4 1 5 1 4 1 5 1 4 1 5 2 4 1 5 1 4 1 5 2 4 1 5 1 4 1 5 1 4 1 5 1 4 2 5 0 4 1 5 2 4 0 5 2 4 1 5 0 5 1 4 2 5 1 4 1 5 1 4 0 5 1 5 1 4 1 5 1 4 1 5 1 5 0 4 1 5 1 4 0 5 0 5 1 4 1 5 0 5 1 4 0 5 1 4 0 5 1 5 0 4 1 5 1 4 0 5 0 5 1 4 0 5 M1021 207l2 4 3 4 2 3 3 4 2 4 3 4 2 4 2 4 1 5 2 4 1 4 2 5 2 4 1 4 2 5 1 4 1 5 1 4 1 5 2 4 1 5 1 4 1 5 2 4 0 4 1 5 2 4 1 5 1 4 2 5 1 4 1 5 1 4 2 4 2 5 1 4 2 4 1 5 1 4 2 5 1 4 2 4 2 5 1 4 1 5 2 4 1 5 1 4 1 5 2 4 1 4 2 5 1 4 2 5 0 4 2 5 1 4 2 5 1 4 1 4 2 5 1 4 2 5 1 4 1 5 1 4 1 5 1 4 1 5 1 4 0 5 1 4 2 5 0 5 1 4 1 5 1 4 2 5 1 4 1 5 1 4 1 5 1 4 1 5 1 4 1 5 1 4 1 5 1 4 1 5 1 5 1 4 1 5 1 4 1 5 0 4 1 5 0 4 1 5 1 5 0 4 1 5 0 5 1 4 0 5 0 4 1 5 0 5 1 4 0 5 0 5 1 4 0 5 1 4 0 5 0 5 1 4 0 5 1 5 0 4 1 5 0 4 1 5 0 5 1 4 0 5 1 4" stroke="#fafafb" stroke-width="1.6"/><path d="M758 55l2-3 5-2 9-2 11-2 13-1 14 0 13 0 13 1 11 2 9 2 5 2 2 3 M758 59l2-2 5-3 9-2 11-1 13-1 15-1 14 1 13 1 11 1 9 2 5 3 2 2 M757 73l2-3 6-2 9-2 12-2 13-1 15 0 14 0 14 1 11 2 9 2 6 2 2 3 M757 78l2-3 6-2 9-3 11-1 14-1 15-1 14 1 14 1 12 1 9 3 5 2 2 3 M757 82l1-2 6-3 9-2 12-2 14-1 15 0 14 0 14 1 12 2 9 2 6 3 2 2 M756 87l2-3 6-2 9-3 12-1 14-1 15-1 14 1 14 1 12 1 9 3 6 2 2 3 M756 91l2-2 6-3 9-2 12-2 14-1 15 0 15 0 14 1 12 2 10 2 5 3 2 2 M756 96l2-3 6-2 9-3 13-1 14-1 15-1 15 1 15 1 12 1 9 3 6 2 2 3 M756 101l2-3 6-3 10-2 12-2 15-1 15 0 16 0 14 1 12 2 10 2 6 3 2 3 M756 114l3-3 6-2 10-3 14-2 15-1 17 0 16 0 16 1 13 2 10 3 7 2 2 3 M756 119l3-3 6-3 11-2 13-2 16-2 18 0 17 0 16 2 14 2 10 2 7 3 2 3 M756 124l3-4 6-3 11-2 15-2 16-1 18-1 18 1 16 1 15 2 11 2 6 3 3 4 M756 128l3-3 7-3 11-3 15-2 17-1 18-1 19 1 17 1 15 2 11 3 7 3 2 3 M756 137l3-3 8-4 13-3 17-2 19-2 22 0 21 0 19 2 17 2 13 3 8 4 3 3 M755 142l3-4 8-4 14-3 18-3 21-1 23-1 23 1 21 1 18 3 13 3 9 4 3 4 M753 147l3-5 9-4 15-3 19-3 23-2 24 0 24 0 23 2 19 3 15 3 9 4 3 5 M751 151l3-4 10-5 16-3 21-3 23-2 26-1 26 1 24 2 20 3 16 3 10 5 3 4 M749 156l3-5 11-5 16-4 22-3 25-1 27-1 27 1 26 1 21 3 17 4 10 5 4 5 M746 160l3-5 11-4 18-5 23-3 26-2 29 0 28 0 27 2 22 3 18 5 11 4 4 5 M741 165l4-5 11-5 19-5 24-3 28-2 30-1 30 1 28 2 24 3 19 5 11 5 4 5 M736 170l4-6 12-5 20-5 25-3 30-3 32 0 31 0 30 3 25 3 20 5 12 5 4 6 M719 179l5-6 13-6 22-6 29-3 33-3 35-1 36 1 33 3 28 3 22 6 14 6 5 6 M685 193l6-8 16-7 26-6 33-4 39-3 42-1 42 1 39 3 34 4 26 6 16 7 5 8 M677 198l6-8 17-7 26-7 35-4 41-4 43-1 44 1 40 4 35 4 27 7 16 7 6 8 M669 202l6-8 17-7 28-7 36-5 42-3 45-1 45 1 42 3 36 5 28 7 17 7 6 8 M655 212l6-9 19-8 29-7 38-5 45-3 47-1 48 1 45 3 38 5 29 7 19 8 6 9 M650 217l7-9 18-8 30-7 39-6 46-3 49-1 48 1 46 3 39 6 30 7 19 8 6 9 M645 221l7-8 19-9 31-7 40-5 46-4 50-1 50 1 46 4 40 5 30 7 20 9 6 8 M641 226l6-9 20-8 31-8 41-5 47-4 51-1 51 1 47 4 41 5 31 8 20 8 6 9 M639 231l7-9 19-9 32-7 41-6 48-3 52-2 51 2 48 3 41 6 32 7 20 9 6 9 M637 236l7-9 20-9 32-8 41-5 49-4 52-1 52 1 48 4 42 5 32 8 20 9 7 9 M635 241l7-10 20-8 32-8 42-6 49-3 53-2 52 2 49 3 42 6 32 8 21 8 6 10 M633 246l7-10 20-9 33-7 42-6 50-4 53-1 53 1 49 4 42 6 33 7 20 9 7 10 M631 251l7-10 21-9 33-8 43-6 49-3 54-2 53 2 50 3 43 6 33 8 20 9 7 10 M630 255l8-9 20-9 33-8 43-6 51-4 53-1 54 1 50 4 43 6 33 8 21 9 7 9 M629 265l7-9 21-10 33-7 44-6 51-4 54-2 55 2 50 4 44 6 33 7 21 10 8 9 M628 270l7-10 21-9 34-8 44-6 51-3 54-2 55 2 51 3 44 6 34 8 21 9 7 10 M627 275l7-10 21-9 34-8 44-6 52-4 55-1 55 1 51 4 44 6 34 8 21 9 7 10 M626 280l7-10 22-9 34-8 44-6 51-4 56-1 55 1 52 4 44 6 34 8 22 9 7 10 M625 285l7-10 22-9 34-8 45-6 51-4 56-1 56 1 52 4 44 6 34 8 22 9 7 10 M625 290l7-10 22-9 34-8 45-6 52-4 55-1 56 1 52 4 45 6 34 8 22 9 7 10 M624 311l7-10 22-10 34-8 45-6 53-4 56-1 56 1 52 4 45 6 34 8 22 10 7 10 M623 321l8-10 21-10 35-8 45-6 52-4 56-1 57 1 52 4 45 6 34 8 22 10 8 10 M623 326l8-10 21-9 34-8 45-7 52-3 56-2 56 2 52 3 45 7 34 8 22 9 7 10 M623 331l7-10 22-9 34-8 45-6 51-4 56-1 56 1 52 4 44 6 34 8 22 9 7 10 M625 347l7-10 21-9 34-8 43-6 51-4 55-1 54 1 51 4 44 6 33 8 21 9 7 10 M626 352l7-9 21-9 33-8 43-6 50-4 54-1 54 1 50 4 43 6 33 8 21 9 7 9 M627 358l6-10 21-9 32-7 42-6 50-4 52-1 53 1 49 4 43 6 32 7 20 9 7 10 M627 363l7-9 20-9 32-7 41-6 48-4 52-1 52 1 48 4 41 6 32 7 20 9 7 9 M628 368l7-9 19-8 31-8 41-5 47-4 51-1 50 1 47 4 41 5 31 8 20 8 6 9 M629 374l6-9 19-9 31-7 39-5 47-4 49-1 50 1 46 4 40 5 30 7 19 9 7 9 M629 379l7-9 18-8 30-7 38-5 45-3 49-1 48 1 45 3 38 5 30 7 18 8 7 9 M630 385l6-9 18-8 29-6 37-6 44-3 46-1 47 1 44 3 37 6 29 6 18 8 6 9 M633 390l6-8 17-8 28-6 36-5 41-3 45-1 45 1 42 3 36 5 28 6 17 8 6 8 M636 395l6-8 17-7 27-6 35-5 42-3 44-1 44 1 42 3 35 5 27 6 17 7 6 8 M639 401l6-8 16-7 27-7 35-4 41-3 44-1 43 1 41 3 35 4 27 7 17 7 5 8 M642 406l6-7 16-8 27-6 34-4 40-3 43-1 43 1 40 3 35 4 26 6 17 8 6 7 M645 412l6-8 16-7 26-6 34-5 40-3 42-1 42 1 40 3 34 5 26 6 16 7 6 8 M648 418l6-8 16-7 25-6 34-5 39-3 42-1 41 1 39 3 34 5 25 6 17 7 5 8 M651 423l6-7 16-7 25-6 33-5 38-3 41 0 41 0 39 3 33 5 25 6 16 7 5 7 M654 429l6-8 15-6 25-6 33-5 37-2 41-1 41 1 37 2 33 5 25 6 15 6 6 8 M658 434l5-7 15-6 25-6 32-5 37-2 40-1 40 1 37 2 32 5 24 6 16 6 5 7 M661 440l5-7 15-7 24-5 32-5 36-2 40-1 39 1 37 2 31 5 24 5 15 7 6 7 M664 446l5-7 15-7 24-5 31-5 36-2 38-1 39 1 36 2 31 5 24 5 15 7 5 7 M667 451l5-6 15-7 23-5 31-4 35-3 38-1 38 1 36 3 30 4 24 5 14 7 5 6 M670 457l5-7 15-6 23-5 30-4 35-3 37-1 37 1 35 3 30 4 23 5 15 6 5 7 M674 463l5-7 14-6 23-5 29-4 34-3 37-1 37 1 35 3 29 4 23 5 14 6 5 7 M677 469l4-7 15-6 22-5 29-4 34-3 36-1 37 1 34 3 29 4 22 5 14 6 5 7 M677 475l5-7 14-6 22-5 29-4 34-3 36-1 36 1 34 3 29 4 23 5 14 6 4 7 M677 480l5-6 14-6 22-5 29-4 34-3 36-1 36 1 34 3 29 4 22 5 14 6 5 6 M678 486l4-6 14-6 22-5 29-4 34-3 36-1 36 1 33 3 29 4 22 5 14 6 5 6 M678 492l5-6 13-6 22-5 29-4 34-3 35-1 36 1 34 3 28 4 22 5 14 6 5 6 M678 498l5-6 13-6 22-5 29-4 33-3 36-1 36 1 33 3 29 4 22 5 14 6 4 6 M678 504l5-6 13-6 22-5 29-4 33-3 36-1 36 1 33 3 28 4 22 5 14 6 5 6 M678 510l5-6 14-6 21-5 29-4 33-3 36-1 36 1 33 3 28 4 22 5 14 6 5 6 M678 516l5-6 14-6 21-5 29-4 33-3 36-1 36 1 33 3 28 4 22 5 14 6 5 6 M678 522l5-6 14-6 22-5 28-4 33-3 36-1 35 1 34 3 28 4 22 5 14 6 4 6 M678 528l5-6 14-6 22-5 28-4 33-3 36-1 35 1 34 3 28 4 22 5 14 6 4 6 M678 534l5-6 14-6 22-5 28-4 33-3 36 0 35 0 33 3 29 4 22 5 13 6 5 6 M679 540l4-6 14-6 22-5 28-4 33-2 36-1 35 1 33 2 29 4 22 5 13 6 5 6 M679 547l4-7 14-6 22-5 28-4 34-2 35-1 36 1 33 2 28 4 22 5 14 6 5 7 M679 553l4-7 14-6 22-5 29-4 33-2 35-1 36 1 33 2 29 4 22 5 13 6 5 7 M679 559l4-6 14-6 22-6 29-3 33-3 36-1 35 1 34 3 28 3 22 6 14 6 5 6 M680 565l4-6 14-6 22-5 29-4 33-3 35-1 36 1 33 3 29 4 22 5 13 6 5 6 M681 572l5-7 13-6 22-5 29-4 33-2 35-1 36 1 33 2 28 4 22 5 14 6 5 7 M681 584l5-6 14-6 22-5 29-4 33-3 36-1 36 1 33 3 29 4 22 5 14 6 4 6 M681 591l5-7 14-6 22-5 29-4 33-3 36-1 37 1 33 3 29 4 22 5 14 6 5 7 M680 603l5-6 14-6 23-6 29-4 34-2 37-1 36 1 34 2 30 4 22 6 14 6 5 6 M680 610l5-7 14-6 22-5 30-4 34-3 37-1 37 1 35 3 29 4 23 5 14 6 5 7 M679 616l5-6 15-7 22-5 30-4 34-3 38 0 37 0 34 3 30 4 22 5 15 7 5 6 M679 623l5-7 14-6 23-5 30-5 34-2 37-1 38 1 34 2 30 5 23 5 14 6 5 7 M679 629l4-6 15-7 23-5 29-4 35-3 37 0 38 0 34 3 30 4 23 5 14 7 5 6 M678 636l5-7 14-6 23-5 30-4 35-3 37-1 38 1 35 3 29 4 23 5 15 6 5 7 M678 643l5-7 14-6 23-6 30-4 35-3 37 0 38 0 35 3 30 4 23 6 14 6 5 7 M677 649l5-6 15-7 23-5 30-4 35-3 37-1 38 1 35 3 30 4 23 5 14 7 5 6 M676 663l5-7 14-6 24-6 30-4 35-3 38-1 38 1 35 3 30 4 23 6 15 6 5 7 M675 669l5-6 14-7 24-5 30-4 35-3 38-1 38 1 36 3 30 4 24 5 14 7 5 6 M673 676l5-7 15-6 24-6 30-4 36-2 38-1 38 1 36 2 30 4 24 6 14 6 5 7 M672 683l5-7 15-6 24-6 30-4 36-3 38-1 39 1 36 3 30 4 24 6 15 6 5 7 M671 690l5-7 15-6 24-6 31-4 35-3 39-1 39 1 35 3 31 4 24 6 15 6 5 7 M670 697l5-7 15-7 24-5 31-4 36-3 39-1 38 1 36 3 31 4 24 5 15 7 5 7 M669 704l5-7 15-7 24-5 31-5 36-2 39-1 39 1 36 2 31 5 24 5 15 7 5 7 M668 711l5-7 15-7 24-5 31-5 36-2 40-1 39 1 36 2 31 5 24 5 15 7 5 7 M666 725l5-7 15-7 25-6 31-4 37-3 39-1 39 1 37 3 31 4 24 6 16 7 5 7 M665 732l6-7 15-7 24-6 32-4 36-3 40-1 39 1 37 3 31 4 25 6 15 7 5 7 M665 739l5-7 15-7 25-6 31-4 37-3 39-1 40 1 37 3 31 4 25 6 15 7 5 7 M664 746l5-7 16-7 24-6 32-4 37-3 39-1 40 1 37 3 32 4 24 6 15 7 5 7 M664 753l5-7 15-7 25-6 31-4 37-3 40-1 40 1 37 3 32 4 24 6 15 7 6 7 M663 760l5-7 16-7 24-6 32-4 37-3 40-1 40 1 37 3 32 4 24 6 15 7 6 7 M758 51l0 4 0 5 0 5 0 4-1 5 0 5 0 4-1 5 0 4 0 5 1 5 0 4-1 5 0 4 0 5 0 5 0 4 0 5 0 4-1 5-2 5-2 4-2 5-3 5-5 4-5 5-5 5-12 4-12 5-12 5-9 4-9 5-8 5-8 5-6 4-4 5-5 5-5 4-2 5-2 5-2 4-2 5-1 5-2 4 0 5-1 5-1 4-1 5-1 5-1 4 0 5 0 5 0 5 0 4 0 5 0 5-1 5 0 5 0 5 1 5 1 6 1 5 0 5 1 6 1 5 0 6 1 5 0 6 1 6 2 6 3 5 3 6 3 6 3 6 4 5 3 6 2 6 4 6 3 6 3 5 3 6 3 6 4 6 3 6 0 6 1 6 0 6 0 6 0 6 0 6 0 6 0 6 0 6 0 6 0 6 1 7 0 6 0 6 0 7 1 6 1 6 1 7 0 6-1 7 0 6 0 7 0 6-1 7 0 6-1 7 0 6-1 7 0 6-1 7-1 6-1 7-1 6-2 7-1 6-1 7-1 7-1 6-1 7-1 7 0 6-1 7-1 7 0 7-1 7 0 7 M678 200l-8 5-9 5-5 5-5 4-5 5-5 5-2 4-2 5-2 5-2 5-1 4-1 5-1 5-1 4-1 5-1 5-1 4-1 5 0 5 0 4 0 5-1 5 0 5 0 5 0 5 0 5 0 5 0 5 1 5 1 6 1 5 0 5 1 6 0 5 1 6 0 5 1 6 3 6 3 6 3 5 3 6 3 6 3 6 3 5 4 6 2 6 4 6 3 6 3 5 4 6 3 6 3 6 0 6 1 6 0 6 0 6 0 6 0 6 0 6 1 6 0 6 0 6 0 7 0 6 0 6 1 6 0 7 1 6 1 7 1 6 0 6-1 7 0 6-1 7 0 6 0 7 0 7-1 6-1 6 0 7-1 6 0 7-2 6-1 7-1 6-2 7-1 6-1 7-1 7-1 6-1 7-1 7-1 7 0 6-1 7-1 7 0 7-1 7 M749 158l-2 5-5 5-5 5-5 4-12 5-12 5-12 5-9 5-8 5-9 4-8 5-6 5-5 5-4 4-5 5-2 5-2 5-2 4-2 5-2 5-1 4-1 5-1 5-1 4-1 5-1 5-1 5 0 4 0 5-1 5 0 5 0 5 0 4 0 5-1 5 0 6 1 5 1 5 0 5 1 5 0 6 1 5 1 6 0 5 1 6 1 5 3 6 3 6 3 6 3 5 3 6 3 6 3 6 4 5 3 6 3 6 3 6 4 6 3 5 3 6 3 6 1 6 0 6 0 6 0 6 1 6 0 6 0 6 0 6 0 6 0 6 1 7 0 6 0 6 0 6 0 7 1 6 2 7 0 6 1 6-1 7 0 6 0 7-1 7 0 6-1 7 0 6-1 7 0 6-1 7 0 6-2 7-1 6-1 7-2 6-1 7-2 6-1 7-1 6-1 7 0 7-1 7-1 6-1 7 0 7-1 7-1 7 M1017 200l3 5 3 5 3 5 3 4 4 5 2 5 2 5 2 5 2 5 2 5 3 6 1 5 2 5 1 5 2 5 2 6 1 5 0 5 1 6 0 5 1 6 0 5 0 5-2 6-2 5-2 5-3 6-2 5-5 5-7 5-8 6-7 5-8 5-10 6-11 5-10 5-2 6-3 5-2 5-1 6-2 5-2 5-1 6-3 5-1 6-2 6-2 5-1 6-1 6-1 5-1 6-1 6 0 6-1 6-1 5 0 6-1 6 0 6 0 6-1 6 0 6 M858 47l5 5 2 4 1 5 1 4 0 5 0 5 1 4 1 5 1 4 2 5 1 4 2 5 4 5 4 4 4 5 4 4 4 5 10 4 11 4 10 5 10 4 9 4 9 5 8 4 7 5 8 4 7 4 5 5 5 4 6 4 4 5 4 4 4 5 3 4 3 5 3 4 4 5 3 5 3 5 2 5 3 5 1 5 3 5 2 5 2 5 2 5 1 5 2 6 2 5 2 5 1 6 0 5 1 5 0 6 1 5 0 5 0 6-2 5-2 5-2 6-3 5-2 5-4 6-8 5-8 5-7 6-8 5-9 5-11 6-11 5-3 5-1 6-2 5-2 5-2 6-2 5-2 6-2 5-2 6-1 5-2 6-2 6 0 6-1 5-1 6-1 6-1 6 0 6-1 5-1 6 0 6-1 6 0 6 0 6 0 6 0 6 0 6 0 6 0 6 1 6 0 6 1 7 1 6 1 6 2 6 2 7 1 6 1 6 0 7 1 7 0 6 1 7 0 7 1 7 0 7 1 7 1 7 0 7 1 7 1 7 0 7 1 8 0 7 0 7 1 7 1 8-1 7 1 7 0 7 0 7 M982 167l5 5 6 4 5 4 4 4 4 5 4 4 3 5 3 4 4 5 2 5 4 5 3 4 2 5 2 5 2 5 3 5 2 5 2 5 2 6 1 5 3 5 1 5 2 6 1 5 1 5 0 6 1 5 0 5 1 6 0 5-2 5-2 6-2 5-3 5-2 6-4 5-8 5-8 6-7 5-8 5-10 6-11 5-10 6-2 5-2 5-2 6-2 5-2 6-2 5-2 6-2 5-1 6-2 5-2 6-2 6-1 6-1 5 0 6-1 6-1 6-1 6-1 5 0 6-1 6 0 6 0 6 0 6-1 6 0 6 0 6 0 6 1 6 0 6 0 6 1 7 1 6 2 6 1 6 2 7 1 6 1 6 0 7 0 7 1 6 1 7 1 7 0 7 1 7 1 7 0 7 1 7 0 7 1 7 1 7 0 8 1 7 0 7 M959 154l7 4 8 4 6 4 5 5 6 4 5 4 4 4 4 5 3 4 4 5 3 4 3 5 3 4 3 5 3 5 3 5 2 5 2 5 2 5 3 5 2 5 1 5 3 5 1 5 2 6 2 5 2 5 0 6 1 5 0 5 1 6 0 5 1 5-2 6-3 5-2 5-2 6-2 5-5 5-7 6-8 5-7 6-8 5-10 5-11 6-11 5-2 6-2 5-2 5-2 6-2 5-2 6-2 5-2 6-1 6-2 5-2 6-2 6 0 5-1 6-1 6-1 6-1 6-1 6-1 5 0 6-1 6 1 6-1 6-1 6 0 6 0 6 0 6 1 6 0 6 0 6 0 7 1 6 2 6 0 6 2 6 1 7 2 6 1 6 0 7 0 7 1 6 1 7 0 7 1 7 1 7 1 7 0 7 1 7 1 7 0 7 1 7 1 7 0 8 1 7 1 7 0 7 0 7 0 8 1 7 0 7 M994 178l4 4 3 4 4 5 3 4 3 5 3 4 3 5 3 5 4 5 2 4 2 5 2 5 3 5 2 5 2 5 2 6 2 5 2 5 2 5 2 5 1 6 1 5 0 5 1 6 1 5 0 5 0 6-2 5-2 6-1 5-3 5-2 6-5 5-7 5-8 6-7 5-8 6-10 5-11 6-10 5-3 5-2 6-2 5-2 6-2 5-2 6-1 5-2 6-2 6-2 5-2 6-1 6-1 5-1 6-1 6-1 6-1 6-1 6-1 5 0 6 0 6-1 6 0 6-1 6 0 6 0 6 0 6 0 6 0 6 1 6 0 7 1 6 1 6 1 6 1 6 2 7 2 6 1 6 0 7 0 7 0 6 1 7 1 7 1 7 0 7 1 7 1 7 1 7 1 7 0 7 1 7 1 7 1 8 0 7 1 7 M855 46l4 4 2 5 1 4 1 5 1 4 0 5 0 5 1 4 1 5 2 4 2 5 2 4 3 5 3 4 4 5 5 4 5 5 8 4 11 4 10 4 9 4 9 5 9 4 7 4 8 4 7 4 6 5 5 4 5 4 5 4 4 4 3 4 4 5 4 4 2 5 3 4 3 5 3 4 4 5 2 5 2 5 2 5 3 5 2 5 2 5 3 5 1 5 2 5 2 6 2 5 1 5 1 6 1 5 1 5 0 6 1 5 0 5-2 6-2 5-2 5-2 6-2 5-5 5-7 6-8 5-7 6-8 5-10 6-11 5-11 6-2 5-2 6-2 5-2 6-2 5-2 6-2 5-2 6-1 5-2 6-2 6-1 6-1 5-1 6-1 6-1 6-1 6-1 6-1 5 0 6 0 6-1 6 0 6-1 6 0 6-1 6 1 6 0 6 0 6 0 6 1 7 0 6 1 6 2 6 1 6 2 7 1 6 0 6 1 7 1 7 0 6 1 7 0 7 2 7 0 7 1 6 1 8 1 7 0 7 1 7 1 7 1 7 1 8 0 7 1 7 0 7 1 7 0 7 1 7 0 7 M1008 202l3 4 3 5 3 5 3 5 2 5 2 4 2 5 2 5 3 5 2 6 2 5 2 5 2 5 2 5 1 6 1 5 1 5 1 6 1 5 0 5 0 6-2 5-1 5-2 6-3 5-2 6-4 5-7 5-8 6-8 5-7 6-10 5-11 6-11 6-2 5-2 5-2 6-2 5-2 6-2 5-2 6-2 6-2 5-1 6-2 6-2 6 0 5-1 6-2 6 0 6-1 6-1 6-1 5-1 6 0 6 0 6-1 6 0 6 0 6-1 6 0 6 1 6-1 6 M908 130l9 4 10 4 9 4 8 4 7 5 7 4 7 4 6 4 5 4 5 4 4 4 4 4 3 4 3 4 3 5 3 4 4 5 2 4 3 5 3 4 3 5 2 5 2 5 3 5 2 5 3 5 2 5 1 5 3 5 1 6 3 5 1 5 1 5 1 6 1 5 0 5 1 6 0 5-1 5-3 6-1 5-3 6-2 5-4 5-7 6-7 5-8 6-8 5-10 6-11 6-10 5-2 6-3 5-1 6-3 5-2 6-2 5-2 6-1 6-2 5-2 6-2 6-1 6-1 5-1 6-1 6-1 6-1 6-1 6-1 6 0 5-1 6 0 6 0 6 0 6-1 6-1 6 1 6 0 6 0 6 0 7 0 6 1 6 1 6 1 6 1 7 2 6 1 6 0 7 1 6 1 7 0 6 1 7 1 7 0 7 1 7 1 7 2 7 1 7 0 7 1 7 1 7 1 7 1 7 0 8 1 7 1 7 0 7 1 7 0 7 0 7 M982 174l3 4 3 4 4 4 3 4 3 5 2 4 3 5 3 4 3 5 3 5 2 5 2 5 3 5 2 5 3 5 2 5 1 5 2 5 3 5 1 5 2 6 1 5 1 5 1 6 1 5 1 5 0 6-2 5-2 5-2 6-2 5-2 6-4 5-8 6-7 5-7 6-8 5-10 6-10 5-11 6-2 6-2 5-3 6-2 5-2 6-1 5-2 6-2 6-2 5-2 6-2 6-1 6-1 6-1 5-1 6-1 6 0 6-2 6-1 6 0 6 0 5-1 6 0 6-1 6 0 6 0 6 0 6 0 7 0 6 0 6 0 6 1 6 1 6 1 6 1 7 1 6 1 6 1 7 1 6 0 7 1 6 1 7 0 7 1 7 1 7 1 7 2 7 0 7 1 7 1 7 2 7 0 7 1 7 1 8 1 7 0 7 1 7 M850 45l5 4 2 4 0 5 1 4 1 5 0 5 0 4 1 5 1 4 2 5 1 4 3 5 3 4 3 5 4 4 4 4 4 5 9 4 10 4 9 4 9 4 9 4 9 4 7 4 6 4 7 4 6 4 4 4 4 4 4 4 4 4 3 4 3 4 3 4 2 5 3 4 3 5 3 4 3 5 2 5 2 4 3 5 2 5 2 5 3 5 2 5 2 5 3 6 1 5 3 5 1 5 1 5 1 6 1 5 1 5 1 6 0 5-1 5-2 6-2 5-2 6-2 5-5 6-7 5-7 6-8 5-7 6-10 5-10 6-11 6-3 5-2 6-2 5-1 6-3 6-2 5-1 6-2 6-2 5-2 6-1 6-2 6-1 6-1 5-1 6-1 6-1 6-1 6-1 6 0 6 0 6-1 6 0 6-1 6 0 6-1 6 1 6-1 6 0 6 1 6 0 6 0 6 1 6 2 7 1 6 1 6 1 6 1 7 0 6 1 7 1 7 0 6 1 7 1 7 1 7 1 7 1 7 1 7 1 7 1 7 1 7 1 7 1 7 1 8 1 7 1 7 0 7 0 7 1 7 0 7 M978 176l3 4 3 4 3 4 2 5 3 4 2 4 3 5 4 5 2 4 2 5 2 5 3 5 2 5 2 5 3 5 2 5 2 5 2 5 2 6 2 5 1 5 1 5 1 6 1 5 1 5 0 6-2 5-2 5-1 6-2 5-2 6-4 5-8 6-7 5-8 6-7 5-10 6-10 6-11 6-2 5-2 6-2 5-2 6-2 6-2 5-2 6-2 6-2 5-1 6-2 6-2 6 0 6-1 6-1 5-1 6-1 6-1 6-1 6 0 6 M959 160l4 3 4 4 4 4 3 4 2 4 3 4 3 4 2 4 3 5 2 4 4 5 2 4 3 5 2 5 3 5 1 5 3 5 3 5 2 5 2 5 2 5 2 5 2 5 2 5 2 6 0 5 1 5 1 6 1 5 1 5-2 6-2 5-1 5-3 6-2 5-4 6-7 5-7 6-7 6-7 5-11 6-10 6-11 6-2 5-1 6-3 5-2 6-2 6-2 5-2 6-1 6-2 5-2 6-1 6-2 6-1 6-1 6-1 6-1 5-1 6-1 6 0 6-1 6 0 6-1 6 0 6 0 6-1 6-1 6 1 6-1 6 0 6 0 6 0 6 1 7 1 6 1 6 1 6 2 6 1 7 1 6 0 7 0 6 1 7 0 7 2 6 0 7 1 7 2 7 1 7 1 7 1 7 1 7 1 7 1 7 1 7 1 8 1 7 1 7 0 7 1 7 0 7 1 7 M950 155l6 4 3 4 4 3 4 4 3 4 2 4 3 4 2 4 2 4 3 5 3 4 2 5 3 4 3 5 2 5 2 5 3 4 2 5 3 5 2 5 2 5 2 6 2 5 2 5 2 5 1 5 2 6 1 5 1 5 1 5 0 6-2 5-1 6-2 5-2 5-2 6-4 5-7 6-7 6-8 5-7 6-10 6-10 6-10 6-2 5-2 6-3 5-2 6-1 6-3 5-1 6-2 6-2 5-2 6-1 6-2 6 0 6-1 6-1 6-1 6-1 5-1 6-1 6 0 6 0 6-1 6-1 6 0 6-1 6 0 6 0 6-1 6 1 6 0 6 0 7 0 6 1 6 1 6 1 6 1 7 2 6 0 6 0 7 M845 43l4 5 2 4 1 5 1 4-1 5 1 4 0 5 0 4 2 5 1 4 2 5 2 4 3 5 3 4 4 5 3 4 4 4 9 4 9 4 9 4 9 4 8 4 7 4 6 4 7 3 6 4 5 4 3 4 4 3 3 4 3 4 2 4 3 4 2 4 2 4 3 5 2 4 3 4 3 5 2 5 3 5 2 4 2 5 3 5 2 5 2 5 2 5 3 5 2 5 2 6 2 5 1 5 1 5 1 6 1 5 1 5 1 5-2 6-1 5-2 6-2 5-2 6-4 5-7 6-7 5-7 6-8 6-9 6-11 5-10 6-1 6-3 6-2 5-2 6-2 6-2 5-1 6-2 6-2 6-1 5-2 6-2 6 0 6-1 6-1 6-1 6-1 6-1 6 0 5-1 6-1 6 0 6 0 6-1 6-1 6 0 6 0 6 0 6 0 7 0 6 0 6 0 6 1 6 1 6 1 7 1 6 1 6 1 7 0 6 1 7 0 6 1 7 1 7 1 7 2 6 1 7 1 7 1 7 1 7 1 7 1 7 2 7 1 8 1 7 1 7 0 7 1 7 0 7 1 7 1 7 M974 197l2 4 3 5 3 5 2 4 2 5 2 5 3 5 2 5 3 5 1 5 2 5 3 5 2 5 2 5 1 6 2 5 1 5 1 6 1 5 1 5-2 6-1 5-2 5-2 6-2 5-4 6-7 6-7 5-7 6-7 6-10 5-10 6-10 6-2 6-2 6-2 5-2 6-2 6-2 5-2 6-1 6-2 6-1 6-2 5-2 6 0 6-1 6-1 6-1 6-1 6-1 6 0 6-1 6-1 6 0 6 M956 182l1 4 3 5 2 4 2 4 3 5 2 5 2 4 3 5 2 5 2 5 3 5 2 5 2 5 2 5 3 5 2 5 2 5 2 5 1 6 1 5 1 5 1 5 1 6-2 5-1 5-2 6-1 5-2 6-4 5-7 6-7 6-6 6-7 5-10 6-10 6-10 6-1 6-3 6-1 5-2 6-2 6-2 6-2 5-1 6-2 6-1 6-2 6-1 6 0 6-1 6-1 6-1 6-1 5-1 6-1 6 0 6-1 6 0 6 M949 193l2 5 3 4 2 5 2 4 2 5 3 5 2 5 2 5 3 5 2 5 2 5 3 5 1 5 3 5 1 5 2 5 1 6 1 5 2 5 0 5-1 6-1 5-2 6-2 5-1 6-5 5-6 6-6 6-7 6-7 5-9 6-10 6-9 7-2 5-2 6-1 6-2 5-2 6-2 6-1 6-2 6-2 6-1 6-1 5-1 6-1 6-1 6-1 6 0 6-1 6-1 6-1 6-1 6 0 6-1 6 0 6-1 6 0 6-1 6 0 6 0 6-1 6 0 6 0 7 1 6 0 6 1 6 M923 151l4 4 2 3 1 3 2 4 1 3 2 4 1 4 1 4 2 4 2 4 1 4 3 5 2 4 2 5 2 5 2 4 2 5 3 5 3 5 2 5 2 5 2 5 3 5 2 5 2 5 1 5 2 5 1 5 1 6 2 5 0 5-1 6-1 5-2 6-1 5-2 5-4 6-6 6-7 6-6 6-7 5-9 6-9 7-9 6-2 5-2 6-2 6-2 6-1 5-3 6-1 6-1 6-2 6-1 6-1 6-1 6-1 6 0 6-1 6-1 6-1 6-1 5-1 6 0 6-1 6-1 6 0 6-1 6 0 6-1 6 0 7 0 6-1 6 1 6-1 6 1 6 1 7 0 6 0 6 1 6 2 6 0 7 0 6 1 7 0 6 1 7 1 7 2 6 1 7 1 7 1 7 2 7 1 7 2 7 1 7 1 7 2 7 0 7 2 7 1 7 0 7 1 7 0 7 1 7 M831 42l3 4 2 4 0 5 1 4 0 5 1 4 0 5 0 4 1 5 1 4 1 5 2 4 3 5 3 4 2 4 4 4 4 5 6 4 8 3 8 4 7 4 6 3 6 4 5 4 4 3 5 4 3 4 2 3 1 3 1 4 0 3 2 4 0 4 1 3 1 5 2 4 2 4 1 4 3 5 2 4 2 5 2 5 2 4 2 5 3 5 2 5 2 5 3 5 2 5 2 5 2 5 2 5 1 5 2 5 1 6 1 5 1 5-1 6-2 5-1 6-1 5-2 6-3 5-7 6-5 6-7 6-6 6-9 6-9 6-9 6-2 6-1 6-2 5-2 6-2 6-1 6-2 6-1 6-2 6-1 6-1 6-1 6 0 6 0 6-1 6-1 5-1 6-1 6-1 6 0 6-1 6 0 6-1 6-1 6 0 6-1 6 0 6 0 7-1 6 0 6 1 6 0 6 0 7 1 6 0 6 1 6 1 6 0 7 1 6 0 7 1 6 1 7 1 7 1 6 1 7 1 7 2 7 1 7 1 7 2 7 1 6 2 8 1 7 1 7 1 7 1 7 1 7 1 7 0 7 0 7 M887 135l5 3 4 4 5 4 3 3 4 4 0 3 1 3 0 4 0 3 1 4 0 4 1 3 0 4 2 5 1 4 2 4 2 4 2 5 1 5 2 4 2 5 3 5 3 5 1 4 3 5 2 5 2 5 2 5 2 5 2 5 2 6 1 5 1 5 2 5 0 5 0 6-2 5 0 6-2 5-1 6-4 5-6 6-5 6-7 6-6 6-8 6-9 6-9 7-1 6-2 5-1 6-2 6-1 6-2 6-1 6-1 6-2 6-1 6-1 6 0 6 0 6 0 6-2 6 0 6-1 5-2 6 0 6-1 6-1 6 0 6 0 6-1 6-1 6 0 7 0 6-1 6 0 6 0 6 0 6 0 7 1 6 0 6 0 6 1 6 0 7 1 6 0 6 1 7 1 7 0 6 2 7 0 7 2 6 1 7 1 7 2 7 1 7 2 6 1 7 2 7 1 7 1 8 1 7 1 7 1 7 1 7 0 7 0 7 M903 153l0 3 0 3 0 3 0 4 0 3 0 4 0 4 1 4 2 4 0 4 2 4 2 5 2 4 2 5 2 5 2 4 2 5 2 5 3 5 2 5 2 5 2 4 2 5 2 5 2 6 2 5 1 5 2 5 1 5 1 6-1 5-1 5-1 6-2 5-1 6-3 6-6 6-6 5-6 6-6 6-8 7-9 6-8 6-1 6-2 6-2 6-1 5-1 6-2 6-1 6-1 6-1 6-1 6-1 6-1 6 0 6 0 6-1 6-1 6 0 6-2 6 0 6-1 6 0 6-1 6-1 6 0 6-1 6-1 6 0 6-1 6 0 7 0 6 0 6 0 6 1 6 0 7 1 6 0 6 1 6 0 7 0 6 1 7 1 6 1 7 0 6 2 7 1 7 1 7 2 6 1 7 2 7 1 7 2 7 1 7 M823 41l3 4 2 5 0 4 1 5-1 4 1 5 0 4-1 5 2 4 1 5 1 4 1 5 3 4 2 4 3 5 3 4 3 4 6 4 8 3 6 4 6 4 6 3 5 4 4 3 4 4 3 4 3 3-1 3 0 4 0 3 0 3-1 4 1 4-1 3 1 4 1 5 1 4 1 4 2 4 2 5 2 4 2 5 2 5 2 4 2 5 2 5 2 5 3 5 2 5 2 5 2 5 2 5 2 5 1 5 2 5 1 6 1 5-1 5-1 6-1 5-1 6-2 5-3 6-5 6-6 6-6 6-6 6-8 6-9 6-8 7-1 5-1 6-2 6-1 6-2 6-1 6-1 6-1 6-1 6-1 6-1 6-1 6 0 6 0 6 0 6-1 6-1 6-1 6-1 6-1 6 0 6-1 6 0 6-1 6-1 6 0 6 0 6-1 6 0 6 0 6 0 7 0 6 0 6 1 6 0 6 0 7 1 6 1 6 0 7 0 6 1 7 1 7 1 6 1 7 1 7 2 6 1 7 1 7 2 7 1 7 1 7 2 6 2 8 1 7 1 7 1 7 0 7 1 7 0 7 1 6 M890 172l-1 4 1 4 0 4 2 4 1 4 1 5 2 4 2 5 1 5 2 4 3 5 2 5 2 5 2 4 2 5 3 5 2 5 2 5 2 5 1 5 2 6 1 5 1 5 1 5-1 6 0 5-1 6-2 5-1 6-3 5-5 6-6 6-6 6-6 6-7 6-8 7-8 6-2 6-1 6-1 6-1 5-2 6-1 6-1 6-1 6-1 6-1 6 0 6-1 6 0 7 0 6-1 6-1 5-1 6 0 6-1 6-1 6-1 6 0 6-1 6 M881 155l-2 3-1 3-1 3-1 4-1 4 0 3 0 4 0 4 1 5 1 4 1 4 2 5 1 4 2 5 2 4 2 5 2 5 2 5 2 4 3 5 2 5 2 5 2 5 2 5 1 5 2 5 1 6 2 5 0 5 0 5-1 6-1 5-1 6-1 5-3 6-5 6-5 6-6 6-5 6-7 6-9 7-7 6-1 6-1 6-1 6-1 6-2 6-1 6-1 6-1 6 0 6-1 6-1 6 0 6 1 6 0 6-1 6-1 6-1 6 M815 41l2 4 2 4 0 5 0 4 0 5 0 4 0 5 0 5 1 4 1 4 1 5 1 4 3 5 2 4 2 4 3 4 2 4 6 4 6 4 5 3 6 4 5 4 4 3 3 4 2 3 3 4 1 3-1 3-2 4-2 3-1 3-1 4-1 3-1 4 0 4 0 4 1 4 0 4 2 5 2 4 1 5 1 4 2 5 2 5 2 4 3 5 2 5 2 5 2 5 2 5 2 5 2 5 1 5 2 5 2 5 1 5 1 5-1 6-1 5 0 6-2 5 0 6-3 6-5 6-5 6-6 6-5 6-7 6-8 6-7 7-1 6-1 6-1 5-1 6-1 6-1 6-1 6-1 6 0 6-1 6-1 7 0 6 1 6 0 6-1 6-1 6 0 6-2 6 0 6-1 6 0 6-1 6 0 6-1 6-1 6-1 6 0 6 0 6-1 6 0 7 1 6 0 6-1 6 1 7 0 6 0 6 1 6 0 7 0 6 0 7 1 6 1 7 1 6 1 7 1 7 2 6 1 7 2 7 0 7 2 6 2 7 1 7 1 7 1 7 2 7 0 7 1 7 1 7 0 7 0 7 M870 148l1 3-2 3-2 3-2 4-1 3-2 4-1 3-1 4-1 4 1 4 0 4 0 4 2 5 1 4 2 5 1 4 2 5 2 4 2 5 2 5 2 5 2 5 2 4 2 5 2 5 2 5 2 5 2 6 1 5 1 5 1 5 0 5-1 6-1 5-1 6-1 5-3 6-5 6-5 6-5 6-5 6-7 7-7 6-7 7-1 5-1 6-1 6-1 6-1 6-1 6 0 6-1 6-1 6 0 6-1 6 0 6 1 7 0 6-1 6-1 6 0 5-1 6-1 6-1 6 0 6-1 6-1 7 0 6 0 6-2 6 1 6-1 6 0 6-1 7 0 6 1 6 0 6 0 6 0 7 0 6 1 6 0 7 0 6 M835 119l5 4 5 3 5 4 4 3 4 4 3 4 2 3 2 4 1 3-2 3-3 3-2 3-2 4-2 4-1 3-2 4-1 4 1 4 0 4 0 4 1 4 2 5 1 4 2 5 1 5 2 4 2 5 2 5 2 5 2 4 3 5 1 5 3 5 1 5 2 5 2 5 1 5 2 5 0 6-1 5 0 6-1 5-1 6-1 5-2 6-5 6-5 6-4 6-5 6-7 6-7 7-7 6-1 6-1 6-1 6 0 6-1 6-1 6-1 6 0 6-1 6 0 6-1 6 0 6 0 6 1 7-1 5-1 6-1 6 0 6-1 6-1 6 0 6 0 6-1 6-1 7 0 6-1 6 0 6-1 6-1 6 1 6 0 7 0 6 0 6 0 6 0 7 0 6 1 6 0 7 0 6 1 7 0 6 1 7 1 6 1 7 1 6 2 7 0 7 2 6 1 7 2 7 1 7 2 7 1 7 1 7 1 7 1 7 1 7 0 7 1 6 0 7 M806 41l3 4 0 4 1 5 0 4 0 5 0 4-1 5 0 4 1 5 1 4 1 5 1 4 2 5 2 4 2 4 2 4 3 4 4 4 6 4 4 3 4 4 4 3 3 4 2 4 2 3 1 4 1 3-3 3-3 3-3 3-3 4-2 3-2 4-2 4-1 4 0 4 0 4-1 4 2 4 1 5 1 4 1 5 2 4 2 5 2 5 2 4 1 5 2 5 3 5 1 5 3 5 2 5 1 5 2 5 1 5 1 5 1 5 0 6-1 5-1 5 0 6-1 5-3 6-4 6-4 6-5 6-4 6-7 7-6 6-6 7-1 6-1 6-1 6 0 6-1 6-1 6 0 6 0 6-1 6 0 6 0 6 0 6 1 6 0 6-1 6 0 6-1 6-1 6-1 6 0 6 0 6-1 6 0 6-1 6-1 7 0 6-1 6 0 6-1 6 0 6 0 7 0 6 0 6 0 6 0 7 0 6 1 6 0 7 0 6 0 7 1 6 1 7 1 6 1 7 1 6 1 7 2 7 1 6 1 7 1 7 2 7 1 7 1 7 1 6 2 7 0 7 1 7 0 7 1 7 0 7 M850 148l0 3-4 3-4 3-3 3-3 4-2 4-2 3-3 4-1 4 0 4 0 4-1 4 2 4 1 5 1 4 1 5 1 4 2 5 2 5 2 4 2 5 1 5 3 5 2 5 2 5 1 5 2 5 2 5 1 5 1 5 1 5 0 5-1 6 0 5-1 6-1 5-2 6-4 6-4 6-5 6-4 6-7 7-6 6-5 7-1 6-1 6 0 6-1 6-1 6-1 6 0 6 0 6 0 6 0 6 0 6 0 6 1 6 0 6 0 6-1 6-1 6 0 6-1 6-1 6 M812 183l-1 4 0 4 1 5 1 4 1 5 1 4 1 5 2 4 2 5 1 5 2 4 2 5 1 5 2 5 3 5 1 5 2 5 1 5 2 5 1 5 1 5-1 5 0 6 0 5 0 6-1 5-2 6-4 6-4 6-4 6-5 6-5 7-6 6-5 7-1 6 0 6-1 6 0 6 0 6-1 6 0 6 0 6 0 6 0 6 1 6 0 6 1 6 1 7-1 6-1 5 0 6-1 6-1 6 0 6-1 7 0 6-1 6 0 6-1 6-1 6 0 6 M798 41l2 4 0 5 0 4 1 5-1 4 0 5 0 4 0 5 0 4 1 5 1 4 1 5 2 4 1 4 2 4 2 5 2 4 3 3 5 4 4 4 3 3 3 4 2 3 1 4 1 4 0 3 0 4-5 3-5 3-4 3-4 3-3 4-3 4-3 3-1 4-1 4-1 4-1 5 1 4 0 4 1 5 1 4 2 5 1 4 2 5 1 5 2 4 2 5 2 5 2 5 2 5 1 5 2 5 1 5 2 5 1 5 1 5 0 5-1 6 0 5 0 6-1 5-2 6-4 6-4 6-3 6-5 6-5 7-5 6-5 7 0 6-1 6-1 6 0 6 0 6 0 6 0 6 0 6 0 6 0 6 1 6 0 6 1 7 0 6 0 6-1 6 0 6-1 6 0 6-1 6 0 6-1 6 0 6-1 6-1 6 0 6-1 6 0 7-1 6 1 6 0 6 0 7 0 6-1 6 0 6 0 7 0 6 0 6 0 7 1 6 0 7 1 6 1 7 1 6 1 7 1 7 1 6 1 7 1 7 1 6 2 7 1 7 1 7 1 7 1 6 1 7 0 7 1 7 0 7 0 7 M829 148l-1 4-5 3-4 3-6 3-4 4-3 3-3 4-4 4-1 4-1 4-1 4-1 4 1 4 0 5 1 4 1 5 1 4 1 5 2 4 2 5 2 5 1 4 2 5 2 5 2 5 1 5 2 5 2 5 1 5 1 5 1 5-1 5 0 6 0 5 0 6-1 5-2 6-3 6-4 6-4 6-3 6-6 7-5 6-5 7 0 6 0 6-1 6 1 6-1 6 0 6 0 6 0 6 1 6 0 6 1 6 0 7 1 6 1 6-1 6-1 6 0 6 0 6-1 6 0 6-1 6 0 6-1 6 0 6-1 6-1 6 0 7-1 6 M814 123l2 4 3 4 2 3 3 4 0 3 0 4 0 3-1 4-5 3-5 3-6 3-4 4-3 4-4 3-4 4-1 4-2 4-1 4-1 4 1 4 0 5 1 4 0 5 1 4 2 5 1 5 2 4 1 5 2 5 2 4 2 5 2 5 1 5 2 5 1 5 2 5 1 5 1 5 0 6-1 5 0 5 0 6-1 5-2 6-2 6-4 6-4 6-3 7-6 6-4 6-5 7 0 6 0 6 0 6 0 6-1 6 1 6-1 6 1 6 0 6 1 7 0 6 1 6 1 6 1 6 0 6-1 6 0 6-1 6-1 6 0 6-1 6 0 6-1 6 0 6-1 7 0 6-1 6-1 6 0 6 0 7 0 6 1 6-1 7 0 6 0 6 0 6 0 7 0 6 0 6 0 7 1 6 0 7 1 6 1 7 1 7 1 6 1 7 1 6 1 7 1 7 1 6 1 7 1 7 1 7 1 7 1 7 0 7 1 6 0 7 1 7 M819 149l-1 3-5 4-6 3-6 3-4 3-5 4-3 4-4 3-2 4-1 4-2 4-1 5 0 4 1 4 1 5 0 4 1 5 1 4 2 5 2 5 1 4 1 5 2 5 2 5 2 4 1 5 2 5 2 5 0 5 2 5 1 5 0 6-1 5 0 6 0 5 0 6-2 5-3 6-4 7-3 6-3 6-5 6-5 7-4 6 0 6 0 6 0 6 0 6 0 6 0 6 1 6-1 6 1 7 1 6 0 6 1 6 2 6 1 6-1 6 0 6-1 6-1 6 0 6-1 6 0 6-1 6 0 7-1 6 0 6-1 6 0 6-1 6 0 7 0 6 0 6 0 7 0 6-1 6 0 6 0 7 0 6 0 6 0 7 1 6 0 7 1 6 1 7 0 6 1 7 1 6 1 7 0 7 2 6 1 7 1 7 1 6 1 7 1 7 1 7 1 7 M768 181l-1 4-2 4-2 5 1 4 0 4 0 5 1 4 1 5 1 4 1 5 1 5 2 4 1 5 2 5 2 4 1 5 2 5 1 5 2 5 1 5 1 5 1 5 0 5 0 6 0 5-1 6 0 5-1 6-3 6-3 6-3 6-3 6-4 7-5 6-3 7 0 6 1 6-1 6 0 6 1 6 0 6 1 6 0 6 1 6 1 6 1 7 1 6 1 6 2 6-1 6 0 6-1 6 0 6-1 6-1 6 0 6 0 6-1 6-1 6 0 7-1 6 0 6 0 6-1 6 0 7 0 6 1 6-1 7 0 6-1 6 1 7-1 6 0 6 0 7 1 6 0 7 0 6 1 7 1 6 1 7 0 6 1 7 1 6 1 7 1 7 1 6 1 7 1 7 1 7 1 7 0 6 1 7 0 7 0 7 1 7 M806 146l-1 4-2 3-7 4-6 3-7 3-5 4-5 3-4 4-5 4-2 4-2 4-3 4-1 4 0 4 0 5 0 4 1 5 1 4 1 5 1 4 1 5 2 5 1 4 1 5 2 5 2 5 1 5 2 5 1 5 1 5 1 5 1 5 0 5 0 5 0 6 0 5 0 6-2 5-2 7-3 6-3 6-3 6-3 6-5 7-3 6 0 6 0 6 1 6 0 6 0 6 1 6 0 6 1 7 1 6 1 6 1 6 1 6 2 6 1 7-1 5 0 6-1 6 0 6-1 6 0 6 0 7-1 6 0 6-1 6 0 6-1 6 0 6-1 7-1 6 1 6 0 7 0 6 0 6-1 6 0 7 0 6 0 6 0 7 0 6 0 7 0 6 1 7 1 6 1 7 0 6 1 7 0 6 1 7 1 6 1 7 1 7 1 6 1 7 1 7 1 7 0 7 1 7 0 7 0 7 0 6 M784 160l-7 4-6 3-4 4-5 4-5 3-2 4-3 5-2 4-2 4 0 4 1 5 0 4 0 4 0 5 2 5 1 4 1 5 1 4 2 5 1 5 2 4 1 5 2 5 1 5 2 5 1 5 1 5 1 5-1 5 0 6 1 5 0 6-1 5-1 6-2 6-2 6-3 6-3 6-4 7-4 6-3 7 1 6 0 6 0 6 1 6 0 6 1 6 0 6 2 6 0 6 1 6 1 6 1 7 2 6 1 6 0 6 0 6-1 6-1 6 0 6 0 6-1 6 0 6 0 6-1 6-1 6 M782 42l1 4 0 5 1 4 0 5-1 4 0 5 0 5-1 4 1 5 0 4 1 5 1 4 1 4 1 5 1 4 1 4 1 4 2 4 3 4 1 4 2 3 1 4 1 4-1 3-1 4-2 4-3 3-6 4-8 3-7 3-7 4-5 4-5 3-4 4-3 4-2 4-3 4-2 4 0 5 0 4 0 5 0 4 1 5 1 4 1 5 1 4 2 5 1 5 1 4 1 5 2 5 1 5 2 5 1 5 1 5 2 5 0 5 0 5 0 5 1 6-1 5 0 6-1 6-2 6-3 6-2 6-3 6-3 6-4 7-2 6 0 6 0 6 1 6 1 6 0 6 1 6 0 6 2 7 0 6 1 6 2 6 1 6 2 6 1 6 0 6-1 6 0 6 0 6-1 6 0 6-1 6 0 7 0 6-1 6-1 6 0 6 0 6-1 7 0 6 0 6 0 7 0 6 0 6-1 6 0 7 0 6 0 6 0 7-1 6 1 7 0 6 0 7 1 6 1 7 0 6 1 7 1 6 1 7 0 6 1 7 1 7 0 6 1 7 1 7 1 7 1 7 0 7 0 6 0 7 0 7 M791 133l1 4 0 4-1 3-2 4-2 4-2 3-8 4-8 3-8 4-7 3-6 4-5 4-5 4-3 4-3 4-2 4-3 4 0 4 0 5-1 4 1 5 0 4 1 5 1 4 1 5 1 5 1 4 1 5 1 5 2 4 1 5 1 5 1 5 2 5 1 5 1 5 0 5 0 6 0 5 0 6 0 5-1 6-2 6-2 6-2 6-3 6-2 6-4 7-2 6 1 6 1 6 0 6 1 6 1 6 1 6 1 7 1 6 1 6 2 6 1 6 1 6 3 6 1 6 0 6 0 6-1 6 0 6-1 6 0 7-1 6 0 6 0 6-1 6 0 6-1 6 0 6-1 7 0 6 0 6 1 7 0 6-1 6 0 7 0 6-1 6 0 7 0 6 0 7 0 6 0 6 1 7 0 6 1 7 0 6 0 7 1 6 1 7 1 7 0 6 1 7 1 7 0 6 1 7 1 7 0 7 1 7-1 6 1 7-1 7 M775 43l1 4 0 5 0 4 0 5 0 5-1 4 0 5 0 4 0 5 1 4 0 5 0 4 1 4 1 5 0 4 1 4 1 5 2 4 2 3 1 4 0 4 0 4 0 3-1 4-2 4-3 4-3 4-8 3-9 4-9 3-7 4-6 3-5 4-6 4-3 4-4 4-2 5-3 4 0 4-1 5 0 4 0 5 0 4 1 5 0 4 1 5 1 4 1 5 1 5 1 4 1 5 1 5 2 5 1 5 1 5 1 5 1 5 0 5 0 5 0 6 1 5-1 6 0 5-2 6-1 6-3 6-1 6-3 7-3 6-2 7 2 6 1 6 1 6 1 6 1 6 1 6 1 6 2 6 1 6 1 6 2 6 1 6 3 7 1 6 0 6 0 6 0 6-1 6 0 6 0 6-1 6 0 6-1 6 0 6 0 6-1 7 0 6-1 6 0 6 0 7 1 6 0 6-1 7 0 6 0 6 0 7-1 6 0 6 0 7 0 6 0 7 0 6 1 7 0 6 1 7 0 6 0 7 1 6 0 7 1 6 0 7 1 7 1 7 0 6 1 7 0 7 0 7 1 7 0 7-1 6 M726 179l-6 4-3 4-3 4-4 5-2 4-1 4-1 5 0 4 0 4 0 5 1 5 1 4 0 5 1 4 1 5 0 5 2 4 1 5 1 5 2 5 0 5 1 5 1 5 1 5 0 5 0 5 0 5 1 6 0 5 0 6-2 6-2 6-1 6-2 6-3 6-2 7-2 6 2 6 1 6 1 6 1 6 1 6 2 6 1 7 1 6 1 6 2 6 2 6 2 6 2 6 2 6 0 6 0 6-1 6 0 6-1 6 0 6 0 6 0 7-1 6 0 6-1 6 0 6-1 6 0 7 0 6 0 6 0 7 1 6-1 6 0 7-1 6 0 6 0 7-1 6 1 7 0 6-1 7 1 6 0 7 1 6 0 7 0 6 0 6 1 7 1 7 0 6 0 7 1 6 0 7 1 7 1 7 0 7 0 6 0 7 0 7 0 7 M722 177l-6 4-6 4-4 4-4 4-3 5-3 4-1 4-1 5 0 4 0 5-1 4 0 5 1 4 1 5 0 4 1 5 1 5 0 4 2 5 1 5 1 5 1 5 1 5 1 4 0 6 1 5 0 5 0 5 1 6-1 5 0 6-1 6-1 6-2 6-1 6-2 6-3 6 0 7 2 6 0 6 2 6 2 6 1 6 1 6 2 6 1 6 2 6 2 6 2 6 2 7 2 6 2 6 0 6 0 6-1 6 0 6 M769 44l1 5 0 4 0 5 0 4-1 5 0 4 0 5-1 4 0 5 1 4 0 5 0 4 1 5 0 4 1 5 0 4 1 4 1 4 2 4 0 4 0 4-1 4-1 4-2 4-3 4-3 3-4 4-10 4-10 4-9 3-8 4-6 4-7 4-7 4-4 4-3 4-4 5-3 4-1 4 0 5-1 4-1 5 0 4 1 5 0 4 0 5 1 4 1 5 0 5 1 4 1 5 1 5 1 5 1 5 1 5 1 5 1 5 0 5 0 5 0 5 1 6 0 5 0 6-2 6-1 6-1 6-1 6-2 6-2 6-1 7 2 6 1 6 2 6 1 6 2 6 2 6 1 6 2 6 1 6 2 6 2 6 3 6 2 6 2 7 0 6 0 6 0 6-1 6 0 6 0 6-1 6 0 6 0 6 0 6-1 6 0 6 0 7-1 6 0 6 0 7 1 6 0 6 0 7-1 6 0 7-1 6 0 6 0 7 0 6 0 7 0 6 0 7 0 6 0 6 1 7-1 6 1 7 0 6 0 7 0 6 1 7 0 7 0 6 0 7 1 7 0 7 0 7 1 7-1 6 0 7 M762 156l-5 4-9 4-10 3-10 4-8 4-7 4-7 4-6 4-5 4-3 4-4 5-3 4-1 4-1 5 0 4-1 5-1 4 1 5 0 4 0 5 1 5 0 4 1 5 1 5 1 4 0 5 2 5 0 5 2 5 0 5 1 5 0 5 0 5 0 5 1 6 0 5 0 6-1 6-1 6-1 6-1 6-2 6-1 6-1 7 2 6 1 6 2 6 2 6 1 6 2 6 2 6 2 6 1 6 2 6 3 6 2 6 2 6 2 6 0 6 0 6 0 6-1 6 0 6 0 6 0 6 0 7-1 6 0 6-1 6 1 6-1 7 0 6 0 6 0 6 0 7 1 6-1 7 0 6-1 6 0 7 0 6-1 7 0 6 0 6 0 7 0 6 0 7 1 6 0 7-1 6 1 7 0 6 0 7 0 6 0 7 1 7-1 6 1 7 0 7 1 7 0 6 0 7-1 7 0 7 M762 153l-3 4-5 4-10 4-10 3-10 4-8 4-7 4-7 4-7 4-4 4-4 5-4 4-3 4-1 5-1 4-1 5-1 4 0 5 0 4 1 5 0 4 0 5 1 4 0 5 0 5 2 4 0 5 1 5 2 5 0 5 1 5 0 5 0 5 1 5 0 6 1 5 0 5 0 6-1 6-1 6 0 6-2 6-1 6-2 6 1 7 1 6 2 6 1 6 2 6 1 6 2 6 2 6 2 6 2 6 2 6 3 6 2 6 2 6 3 6-1 6 0 6 0 6 0 6 0 6 0 6-1 6 0 6 0 7-1 6 1 6-1 6-1 6 0 7 0 6 0 6 1 7 0 6 0 6-1 7 0 6 0 7-1 6 0 6-1 7 1 6-1 7 1 6 0 7 0 6 0 7 0 6 0 7 0 6 0 7 0 6 0 7 0 6 0 7 1 7 0 7 1 6 0 7 0 7-1 7 0 7 M679 202l-4 4-1 5-1 4-1 5-1 4 0 5 0 4 0 5 0 4 0 5 1 5 0 4 1 5 0 5 2 4 1 5 0 5 1 5 0 5 1 5 0 5 0 5 1 6 1 5 0 6 0 5-1 6 0 6-1 6-1 6-2 6-1 6 1 7 1 6 2 6 2 5 1 6 2 6 2 6 2 7 2 6 2 6 2 6 3 6 2 6 2 6 3 6 0 6 0 6 0 6 0 6-1 6 0 6 0 6 0 6-1 6 0 7 0 6-1 6 1 6-1 7 0 6 0 6 1 7 1 6-1 6 M765 46l0 4 0 4 0 5 0 5-1 4 0 5-1 4 0 5 0 4 0 5 1 4 0 5 0 4 0 5 1 4 0 5 1 4 0 4 1 4-1 4-1 4-1 4-2 4-2 4-3 4-4 4-4 5-11 3-10 4-11 4-9 4-7 4-7 4-7 4-5 5-4 4-4 4-4 5-1 4 0 5-2 4-1 5 0 4 0 5 0 4 0 5 1 4-1 5 1 5 0 4 1 5 1 5 0 5 2 4 0 5 1 5 0 5 0 5 1 6 0 5 1 5 0 6 0 5 0 6-1 6 0 6-2 6-1 6-1 6 1 7 2 6 2 6 1 5 2 6 2 6 2 6 2 6 2 7 3 6 2 6 2 6 3 6 2 6 2 6 0 6 0 6 1 6-1 6 0 6 0 6 0 6 0 6-1 6 0 6 0 7 0 6-1 6 0 6 0 7 0 6 1 7 1 6-1 6 0 7-1 6-1 6 0 7 0 6 0 7 0 6-1 7 0 6 0 7 1 6-1 7 0 6 0 6 0 7 0 6 0 7 0 7-1 6 1 7 0 7 0 6 0 7 0 7 0 7 0 7 0 7 M678 196l-4 4-4 5-4 4-1 4-1 5-1 4-1 5-1 4 0 5 0 4 0 5 1 5 0 4 0 5 0 5 1 4 1 5 1 5 0 5 1 5 0 5 1 5 0 5 0 5 0 5 1 6 1 5-1 6 0 5 0 6-1 6-1 6 0 6-2 6 2 7 1 6 2 6 2 5 2 6 2 6 2 6 2 6 3 6 2 7 2 6 3 6 2 6 3 6 2 6 1 6-1 6 1 6-1 6 0 6 0 6 0 6 0 6-1 6 0 6 0 7 0 6 0 6-1 6 0 7 1 6 0 6 1 7 0 6-1 7-1 6 0 6 0 7-1 6 0 7 0 6-1 7 0 6 0 7 1 6-1 6 0 7 0 6 0 7 0 6-1 7 0 7 0 6 0 7 0 7 1 6 0 7-1 7 0 7 0 7 0 7 M752 156l-4 4-5 4-10 4-11 4-11 4-9 4-7 4-8 5-8 4-4 4-4 4-5 5-4 4-1 5-1 4-1 5-1 4-1 5 0 4 0 5-1 4 1 5 0 5 0 4 0 5 1 5 1 4 0 5 1 5 0 5 1 5 0 5 0 5 1 5 0 6 1 5 1 5-1 6 0 6 0 5-1 6 0 6-1 6 0 7 1 6 1 6 2 6 2 6 2 5 3 6 2 6 2 6 2 6 3 7 2 6 3 6 2 6 3 6 3 6 0 6 0 6-1 6 1 6 0 6-1 6 0 6 0 6 0 6 0 6 0 6-1 7 0 6 0 6-1 7 1 6 1 6 1 7-1 6-1 7 0 6-1 6 0 7 0 6-1 7 0 6 0 7 0 6 0 7 0 6 0 6 0 7-1 6 0 7 0 6-1 7 0 7 0 6 0 7 0 7 0 6 0 7 0 7 0 7-1 7 0 7 M746 161l-5 4-11 4-11 4-11 4-9 4-7 5-8 4-8 4-5 4-4 5-4 4-4 4-2 5-1 4-1 5-2 5 0 4 0 5 0 4 0 5-1 4 1 5-1 5 1 4 0 5 1 5 0 5 1 4 1 5 0 5 0 5 0 5 1 6 0 5 1 5 1 6 0 5 0 6 0 6-1 6-1 5 0 7-1 6 1 6 3 6 2 6 2 6 2 6 2 6 2 6 3 5 2 6 3 7 2 6 3 6 3 6 2 6 3 6 0 6 0 6 0 6 0 6 0 6 0 6 0 6-1 6 1 6-1 6 0 6 0 7 0 6 0 6 0 7 0 6 0 6 M651 219l-2 4-1 5-1 4-1 5-1 5 0 4 0 5 0 4 0 5-1 5 1 4 0 5 0 5 1 5 0 4 1 5 0 5 1 5-1 5 1 5 1 6 0 5 0 5 1 6 0 6 0 5 0 6 0 6-1 6 0 6 2 6 2 6 2 6 2 6 3 6 2 6 2 6 3 6 3 6 2 6 3 6 3 6 3 6 3 6 2 6 0 6 0 6 0 6 0 6 0 6 0 6 0 6 0 6 0 6 0 6 0 6 0 7 0 6-1 6 0 6 1 7 1 6 0 7 0 6-1 7 0 6-1 6 0 7 0 6 0 7-1 6 0 7 0 6 0 7 0 6-1 7-1 6 0 6 0 7-1 6-1 7 0 7-1 6 0 7 0 7 0 6 M752 151l-2 4-4 4-5 5-5 4-12 4-11 4-12 4-9 5-8 4-8 4-8 5-5 4-4 5-5 4-4 5-1 4-2 5-1 4-2 5-1 4 0 5-1 5-1 4 1 5-1 4 0 5 0 5 0 4 1 5 0 5 1 5 0 5 0 5 0 5 0 5 1 5 1 5 0 5 1 6 0 5 0 6 0 6 0 5 0 6 0 6 0 6 2 6 2 6 2 6 3 6 2 6 3 6 2 6 2 6 3 6 3 6 3 6 3 6 3 6 2 6 3 6 0 6 1 6 0 6-1 6 1 6-1 6 0 6 1 6-1 6 0 6 0 6 0 7 0 6 0 6-1 6 1 7 2 6 0 7 0 6-1 7-1 6 0 6-1 7 0 6 0 7-1 6 1 7-1 6 0 7 0 6-1 7 0 6-1 7-1 6 0 7-1 6 0 7-1 6 0 7 0 7 0 6-1 7 0 7 0 7 0 7-1 7 M646 222l-2 4-1 5-2 4-1 5 0 4 0 5-1 5-1 4 0 5 0 5 0 4 0 5 0 5 1 4 0 5 0 5 1 5 0 5 0 5 0 5 1 6 1 5 0 5 0 6 1 5-1 6 1 6 0 6 0 6-1 6 3 6 2 5 2 6 3 6 2 6 3 6 3 6 3 6 2 6 3 6 3 6 3 6 3 6 3 6 2 6 0 6 1 6 0 6 0 6 0 6 0 6 0 6 0 6 0 6 0 6 0 6-1 7 1 6-1 6 0 6 1 7 1 6 M663 202l-5 4-5 5-5 4-4 5-2 5-1 4-2 5-2 4-1 5-1 5 0 4-1 5 0 4-1 5-1 5 0 4 1 5 0 5 0 5 0 4 0 5 1 5-1 5 1 5 0 5 1 6 0 5 1 5 0 6 1 5 0 6 0 6 0 5 1 6 0 6 2 6 2 6 3 6 3 6 2 5 3 6 3 6 3 6 2 6 4 6 3 6 2 6 4 6 3 6 2 6 1 6 0 6 0 6 1 6-1 6 0 6 0 6 1 6-1 6 0 6 0 6 0 7 0 6 0 6 0 7 1 6 1 6 1 7-1 6 0 7-1 6 0 7-1 6 0 7 0 6-1 7 0 6 0 6 0 7-1 6 0 7-1 6-1 7-1 6-1 7-1 6-1 7 0 7-1 6 M746 158l-4 5-5 4-5 5-12 4-12 5-12 4-10 5-8 4-8 5-8 4-5 5-5 4-5 5-4 4-2 5-2 5-2 4-1 5-2 4-1 5 0 5-1 4 0 5-1 5-1 4 0 5 0 5 1 4 0 5 0 5 0 5 0 5 0 5 0 5 0 5 1 5 1 5 0 6 1 5 0 6 1 5 0 6 0 6 1 6 0 5 2 6 3 6 3 6 2 6 3 6 2 5 3 6 4 6 2 6 4 6 2 6 3 6 3 6 3 6 4 6 0 6 0 6 0 6 0 6 0 6 0 6 1 6-1 6 0 6 0 6 0 6 0 7 0 6 1 6 0 7 0 6 2 6 0 7 0 6-1 7 0 6-1 7 0 6-1 7 0 6 0 7 0 6-1 7 0 6 0 6-2 7 0 6-1 7-1 6-1 7-1 6-1 7 0 7-1 6 0 7-1 7-1 7 1 6-1 7-1 7 0 7 M646 218l-5 5-1 4-2 5-2 5-1 4-2 5-1 5-1 4 0 5-1 4 0 5-1 5-1 4 0 5 1 5 0 5 0 5 0 4 0 5 0 5 0 5 0 5 0 6 1 5 1 5 1 6 0 5 1 6 0 5 0 6 0 6 1 6 3 6 2 5 3 6 3 6 3 6 3 6 2 6 3 5 3 6 3 6 3 6 3 6 4 6 3 6 2 6 1 6 0 6 0 6 0 6 1 6 0 6 0 6 0 6 0 6 0 6 0 6 0 7 0 6 0 6 0 7 1 6 1 6 1 7 0 6-1 7-1 6 0 7 0 6 0 7-1 6 0 7-1 6 0 7-1 6 0 7 M758 50l0 5 0 4 0 5 0 4-1 5 0 5 0 4-1 5 0 4 0 5 0 5 0 4 0 5 0 4 0 5 0 4 0 5 0 5 0 4-1 5-2 4-2 5-3 4-3 5-4 4-5 5-5 5-12 4-12 5-12 4-9 5-9 5-8 4-8 5-6 4-5 5-4 5-5 4-2 5-1 5-3 4-2 5-1 5-1 4-1 5-1 4 0 5-1 5 0 4-1 5 0 5 0 5 0 4 0 5 0 5 0 5 0 5 0 5 0 5 1 5 0 5 1 6 1 5 0 6 1 5 0 6 1 6 0 5 0 6 3 6 3 6 3 5 2 6 4 6 2 6 4 6 2 6 3 5 3 6 4 6 3 6 3 6 3 6 3 6 0 6 0 6 1 6 0 6 0 6 0 6 0 6 1 6-1 6 0 6 1 6 0 7 0 6 0 6 0 7 1 6 1 6 1 7-1 6 0 7 0 6-1 7 0 6 0 7-1 6-1 7 0 6 0 7-1 6 0 7-1 6-1 7-2 6 0 7-1 6-2 7-1 6-1 7-1 7 0 6 0 7 0 7-1 7-1 7 0 6-1 7 M677 198l-8 4-8 5-6 5-5 4-5 5-4 5-2 4-2 5-2 5-2 4-1 5-1 5-1 4-1 5-1 5 0 4-2 5 0 5 0 4 0 5 0 5 0 5 0 5 0 5 0 5-1 5 0 5 1 5 1 5 0 5 1 6 1 5 0 6 1 5 0 6 1 6 0 5 3 6 3 6 3 6 3 5 3 6 3 6 3 6 2 6 4 6 3 5 3 6 3 6 4 6 3 6 2 6 1 6 0 6 1 6 0 6 0 6 0 6 0 6 0 6 0 6 0 6 1 6-1 7 1 6 0 6 0 7 1 6 1 6 1 7-1 6 0 7 0 6-1 7 0 6 0 7-1 6 0 7-1 6 0 7 0 6-1 7-1 6-2 7 0 6-2 7-1 6-1 7-1 6-1 7-1 7 0 6-1 7 0 7-1 7-1 7 0 7-1 7 M758 52l2-1 5-1 8-1 11-1 12-1 13 0 14 0 12 1 11 1 8 1 5 1 2 1 M758 57l2-2 5-1 9-1 11-1 13 0 14-1 14 1 13 0 12 1 8 1 6 1 2 2 M758 62l2-2 5-1 9-1 11-1 14-1 14 0 14 0 13 1 12 1 8 1 6 1 2 2 M758 66l2-1 5-2 9-1 12-1 13 0 14 0 15 0 13 0 12 1 8 1 6 2 2 1 M757 75l2-1 6-2 9-1 11-1 14 0 15 0 14 0 14 0 11 1 9 1 6 2 2 1 M756 89l2-1 6-2 9-1 12-1 14 0 15-1 15 1 14 0 12 1 9 1 5 2 2 1 M756 121l3-1 6-2 11-1 14-2 16 0 18 0 17 0 17 0 14 2 10 1 7 2 2 1 M756 135l3-2 8-2 12-1 16-2 19 0 21-1 20 1 19 0 16 2 13 1 8 2 2 2 M750 154l3-3 11-3 16-2 21-1 25-1 26-1 26 1 25 1 21 1 16 2 10 3 4 3 M747 158l4-3 11-2 17-2 22-2 26-1 27-1 28 1 26 1 22 2 17 2 11 2 4 3 M738 167l4-3 12-3 19-2 25-2 29-1 31-1 31 1 29 1 24 2 19 2 12 3 4 3 M734 172l4-3 12-3 20-3 26-2 31-1 32-1 33 1 30 1 26 2 20 3 13 3 4 3 M713 181l5-3 14-4 22-3 30-2 34-1 37-1 36 1 34 1 30 2 22 3 15 4 4 3 M701 186l5-4 15-4 24-3 31-2 37-2 39 0 38 0 37 2 31 2 24 3 15 4 5 4 M653 214l6-5 19-4 29-4 39-3 45-2 48 0 48 0 45 2 39 3 29 4 19 4 6 5 M648 219l6-5 19-4 31-4 39-3 46-2 49-1 49 1 46 2 40 3 30 4 19 4 7 5 M640 229l6-5 20-5 32-4 41-3 47-2 51-1 51 1 48 2 41 3 31 4 20 5 7 5 M636 238l7-5 20-5 32-4 42-3 48-2 53-1 52 1 49 2 41 3 32 4 21 5 7 5 M634 243l7-5 20-5 33-4 42-3 49-2 53-1 52 1 50 2 42 3 32 4 20 5 7 5 M629 263l7-6 21-5 34-4 43-3 51-2 54-1 54 1 51 2 43 3 34 4 21 5 7 6 M628 268l7-6 21-5 34-4 44-3 51-3 54 0 55 0 51 3 43 3 34 4 21 5 7 6 M627 273l7-6 22-5 33-4 44-4 52-2 54 0 55 0 52 2 44 4 33 4 21 5 8 6 M624 298l8-6 21-5 35-4 44-4 53-2 56-1 55 1 53 2 44 4 35 4 21 5 8 6 M624 303l8-6 21-5 35-4 44-4 53-2 56-1 56 1 52 2 45 4 34 4 22 5 7 6 M623 324l8-6 21-5 35-5 45-3 52-2 56-1 56 1 52 2 45 3 34 5 22 5 7 6 M623 329l7-6 22-5 34-4 45-4 52-2 56-1 55 1 52 2 45 4 34 4 22 5 7 6 M624 334l7-6 21-5 34-4 45-4 51-2 56 0 55 0 52 2 44 4 34 4 22 5 7 6 M625 344l7-5 21-5 34-5 43-3 51-2 55-1 55 1 51 2 44 3 33 5 21 5 7 5 M626 355l7-5 21-5 32-5 43-3 50-2 53-1 53 1 50 2 43 3 32 5 21 5 7 5 M630 382l6-5 18-4 29-4 38-3 45-2 47-1 47 1 45 2 38 3 29 4 18 4 6 5 M662 443l5-4 16-4 23-3 32-2 36-2 39 0 39 0 36 2 32 2 24 3 15 4 5 4 M860 51l5 5 1 4 1 5 1 4 1 5 0 5 0 4 1 5 2 4 2 5 2 5 2 4 4 5 3 4 5 5 5 4 5 5 12 4 10 5 10 4 10 5 10 4 7 5 8 4 7 5 8 4 6 5 5 4 6 5 5 4 4 5 3 4 4 5 3 5 3 4 3 5 3 5 3 4 3 5 2 5 1 5 3 5 1 5 2 4 2 5 1 5 2 5 1 5 1 5 2 5 0 5 0 5 1 5 0 5 M857 51l6 4 2 5 0 4 1 5 1 4 0 5 1 5 0 4 2 5 1 4 2 5 3 4 3 5 4 4 4 5 5 5 6 4 11 4 10 5 9 4 10 5 10 4 8 4 7 5 7 4 8 5 5 4 5 4 5 5 5 4 4 5 3 4 4 5 3 4 2 5 3 5 3 4 3 5 3 5 2 5 2 4 1 5 2 5 2 5 1 5 2 5 1 5 1 5 2 5 1 5 M855 50l6 4 1 5 1 5 1 4 0 5 0 4 1 5 0 4 2 5 2 5 2 4 2 5 3 4 4 5 4 4 5 5 5 4 11 5 10 4 9 4 10 5 9 4 7 4 7 5 7 4 7 4 5 5 5 4 5 4 4 4 4 5 2 4 4 5 3 4 2 5 3 4 3 5 2 5 3 4 1 5 2 5 2 5 2 5 1 4 2 5 1 5 2 5 1 5 1 5 1 5 1 5 M853 50l6 4 1 5 1 4 1 5 0 4 1 5 0 5 1 4 1 5 2 4 1 5 3 4 3 5 4 4 4 5 5 4 5 5 10 4 11 4 9 5 9 4 9 4 7 5 7 4 6 4 7 5 5 4 4 4 5 4 4 5 4 4 2 4 3 5 3 4 3 5 2 4 3 5 3 5 2 4 1 5 2 5 2 5 1 4 2 5 2 5 1 5 1 5 1 5 2 5 1 5 0 5 M848 49l5 4 1 5 1 4 1 5 0 5 0 4 1 5 0 4 2 5 1 4 2 5 3 4 3 5 3 4 3 5 5 4 5 5 10 4 9 4 9 4 8 5 9 4 6 4 6 4 6 4 6 5 4 4 4 4 4 4 3 4 2 4 3 5 2 4 2 4 2 5 2 5 2 4 3 5 2 4 1 5 1 5 2 5 2 4 1 5 2 5 1 5 1 5 1 5 1 5 1 5 0 5 0 5 M845 49l5 4 2 5 1 4 0 5 0 4 1 5 0 4 1 5 1 5 2 4 1 5 3 4 3 5 3 4 4 5 3 4 6 4 9 5 9 4 9 4 8 4 8 4 6 5 6 4 6 4 6 4 4 4 3 4 3 4 3 4 2 5 2 4 2 4 2 5 2 4 2 5 2 4 2 5 2 4 2 5 1 5 1 5 2 4 1 5 1 5 2 5 0 5 1 5 2 5 1 5 0 5 0 5 1 5 0 5 0 5 0 5 M841 48l5 5 0 4 2 5 0 4 0 5 0 4 1 5 0 5 2 4 1 5 2 4 2 5 3 4 3 5 3 4 4 4 5 5 9 4 9 4 7 4 8 4 7 4 6 5 6 4 5 4 5 4 3 4 3 4 2 4 2 4 1 4 2 5 1 4 2 4 1 5 2 4 1 5 3 4 1 5 1 4 2 5 1 5 1 5 1 4 2 5 1 5 1 5 1 5 0 5 1 5 1 5 0 5 0 5 0 5 1 5 M838 48l5 4 1 5 0 5 1 4 0 5 1 4 0 5 0 4 2 5 1 4 1 5 3 4 2 5 3 4 4 5 3 4 5 4 9 5 8 4 8 4 7 4 8 4 5 4 5 4 5 4 5 5 3 4 1 4 2 4 2 4 1 4 1 4 1 4 1 4 2 5 1 4 2 5 2 4 1 5 1 5 1 4 1 5 2 5 1 5 1 5 1 4 1 5 1 5 1 5 1 5 0 5 0 5 0 5 1 5-1 5 M836 48l4 4 1 5 0 4 1 5 0 4 1 5 0 5 0 4 1 5 2 4 2 5 2 4 2 5 3 4 3 4 3 5 5 4 9 4 8 4 7 5 7 4 7 4 5 4 5 4 5 4 4 4 3 4 1 4 1 4 1 4 2 4 0 4 1 5 1 4 1 4 1 5 1 4 2 5 1 4 1 5 2 5 0 4 1 5 2 5 1 5 0 5 1 5 1 4 1 5 1 5 1 5 0 5 M832 48l5 4 1 5 0 4 1 5 0 4 0 5 1 4 0 5 1 4 2 5 1 5 2 4 3 4 2 5 4 4 3 5 4 4 8 4 8 4 7 4 7 4 6 4 5 5 5 4 4 4 5 4 1 4 1 4 1 4 1 3 0 5 1 4 0 4 1 4 1 5 1 4 1 5 1 4 2 5 0 4 1 5 1 5 1 5 1 4 1 5 1 5 1 5 0 5 1 5 M829 48l5 4 1 4 0 5 1 5 0 4 0 5 0 4 1 5 1 4 1 5 2 4 2 5 2 4 3 5 3 4 3 4 4 5 8 4 7 4 7 4 6 4 7 4 4 4 4 4 4 4 4 4 1 4 1 4 0 4 1 4 0 4 0 4 0 5 0 4 1 4 1 5 1 4 1 5 1 4 1 5 0 5 1 4 1 5 1 5 2 5 0 4 1 5 0 5 1 5 1 5 0 5 M827 47l4 5 0 4 1 5 0 4 1 5 0 5 0 4 0 5 2 4 1 5 1 4 2 5 3 4 1 5 4 4 3 4 4 5 7 4 8 4 6 4 5 4 7 4 4 4 4 4 3 4 4 4 1 4-1 4 1 4 0 4-1 4 0 4 0 4 0 4 0 5 1 4 0 5 1 4 1 5 1 4 0 5 2 5 0 5 1 4 1 5 1 5 0 5 1 5 1 5 1 5 0 5 0 5 M824 47l3 5 1 4 1 5 0 4 0 5 1 4-1 5 1 5 1 4 1 5 2 4 1 5 3 4 2 4 3 5 3 4 3 4 8 5 6 4 6 4 6 4 5 4 4 4 4 4 3 4 3 4 1 4-1 4 0 4-1 3-1 5-1 4 0 4 0 4 0 4 0 5 1 4 1 5 0 4 1 5 0 5 1 4 1 5 1 5 0 5 1 5 0 4 1 5 1 5 0 5 1 5 M821 47l3 5 1 4 1 5 0 4 0 5 0 4 0 5 0 4 1 5 1 4 2 5 1 4 3 5 2 4 3 5 3 4 3 4 7 4 6 4 6 5 5 4 5 4 4 4 3 4 3 4 3 4 0 4-1 3-2 4-1 4-1 4-1 4-1 5-1 4 1 4 0 5-1 4 1 4 1 5 0 5 1 4 0 5 1 5 1 5 1 4 0 5 1 5 0 5 1 5 1 5-1 5 1 5 0 5 0 5 0 5 0 5-1 5-1 6-2 5 M817 47l4 5 0 4 1 5 0 4 1 5 0 4-1 5 1 4 1 5 1 4 1 5 2 4 2 5 2 4 2 5 3 4 3 4 7 4 6 4 5 4 5 4 5 4 3 5 3 4 3 4 2 4-1 4-1 3-2 4-1 4-2 4-1 4-1 4-1 5-1 4 0 4 0 5 0 4 1 5 0 4 0 5 1 5 1 5 0 4 0 5 1 5 1 5 0 5 0 5 1 5 0 5 0 5 0 5 0 5 1 5 M814 47l4 4 0 5 0 5 1 4 0 5 0 4 0 5 0 4 1 5 1 4 1 5 2 4 2 5 2 4 2 5 3 4 3 4 6 4 6 4 4 4 5 4 5 4 3 4 2 4 2 4 2 4-1 4-2 4-3 4-2 4-1 4-2 4-2 4-1 4 0 5-1 4 0 5 0 4 1 5 0 4 0 5 0 5 0 4 1 5 1 5 0 5 0 5 1 5 0 4 1 5 M811 47l3 4 0 5 1 5 0 4 0 5 0 4 0 5 1 4 1 5 0 4 1 5 2 4 2 5 1 4 3 5 2 4 4 4 5 4 5 4 5 4 4 4 4 4 3 4 2 4 2 4 1 4-1 4-3 4-2 4-3 4-2 4-2 4-3 4-1 4-1 5-1 4 0 4 0 5 0 5 0 4 0 5 0 5 1 4 0 5 0 5 1 5 0 5 0 4 1 5 0 5 0 5 0 5 0 5 0 5 1 6 0 5 M808 47l2 4 1 5 1 5 0 4 0 5 0 4 0 5 0 4 1 5 1 4 1 5 1 4 2 5 2 4 2 5 2 4 3 4 5 4 5 4 4 4 4 4 4 4 2 4 2 4 1 4 1 4-2 4-3 4-3 4-4 4-2 4-3 4-2 4-2 4-1 5-1 4-1 4 0 5 0 5 0 4 1 5-1 5 1 4 0 5 0 5 1 5 0 5 0 4 0 5 1 5 0 5 0 5 0 5 0 5 0 6 0 5-1 5-1 5 M804 47l3 4 1 5 0 5 1 4-1 5 0 4 0 5 0 4 1 5 1 4 1 5 2 4 1 5 1 4 2 5 2 4 3 4 6 4 4 4 4 4 3 4 3 4 2 4 2 4 1 4 0 4-2 4-4 4-4 4-3 4-3 4-3 4-3 4-2 4-2 5-1 4-1 5-1 4 1 5 0 4 0 5-1 5 1 4 0 5 0 5 0 5 1 5 0 5 0 4 0 5 0 5 0 5 0 5 0 6 0 5 0 5-1 5-1 5 M802 47l2 5 0 4 1 5 0 4 0 5-1 4 0 5 1 4 0 5 1 4 1 5 2 4 1 5 1 4 2 5 2 4 2 4 6 4 4 4 3 4 3 4 3 4 1 5 2 4 0 4 1 4-3 4-5 3-4 4-5 4-3 4-3 4-3 4-3 5-1 4-1 4-2 5-1 4 0 5 0 4 0 5-1 5 1 5 0 4 0 5 0 5 0 5 1 5-1 5 M798 47l3 5 0 4 1 5 0 4-1 5 0 4 0 5 0 4 1 5 1 4 0 5 1 4 2 5 1 4 2 5 2 4 2 4 4 4 4 4 3 5 3 4 2 4 2 4 0 4 1 4 0 4-3 4-5 3-5 4-5 4-4 4-3 4-4 5-3 4-2 4-1 5-2 4-1 4 0 5 0 5-1 4 0 5 0 5 0 5 0 4 0 5 0 5 0 5 0 5 0 5 1 5-1 5 0 5 M795 47l2 5 0 4 1 5 0 4 0 5-1 4 1 5 0 5 1 4 0 5 1 4 1 5 1 4 2 4 1 5 1 4 2 4 5 5 3 4 3 4 2 4 3 4 0 4 1 4-1 4 0 4-3 4-6 4-6 4-5 3-4 5-4 4-3 4-4 4-2 4-2 5-2 4-1 5 0 4-1 5 0 5-1 4 0 5 0 5 0 5 0 5 0 4 0 5 0 5 0 5 0 5 0 5 0 5 0 5 0 5 0 6 M792 47l2 5 0 4 1 5 0 4-1 5 0 5 0 4 0 5 1 4 0 5 1 4 1 5 1 4 2 5 1 4 1 4 2 5 4 4 4 4 1 4 3 4 1 4 1 4 0 4 0 4-1 4-5 4-6 4-5 4-6 4-5 4-4 4-4 4-4 4-2 5-3 4-2 5-1 4 0 5-1 4-1 5 0 5 0 5 0 4 0 5 0 5-1 5 0 5 0 5 0 5 M789 48l2 4 0 4 0 5 0 5 0 4 0 5 0 4 0 5 1 4 0 5 1 4 1 5 0 4 1 5 2 4 1 4 2 5 4 4 2 4 2 4 2 4 2 4 0 4-1 4-1 4-1 4-4 4-7 4-6 4-6 4-5 4-5 4-5 5-4 4-2 4-2 5-3 4-1 5-1 4 0 5-1 5-1 4 0 5 0 5-1 5 1 4-1 5 0 5 0 5 0 5 0 5 0 5 0 5-1 5 1 5 0 5-1 6-1 5-1 5 M786 48l2 4 0 5 0 4 0 5 0 4 0 5-1 4 0 5 1 4 1 5 0 5 1 4 1 4 1 5 1 4 1 5 2 4 3 4 3 4 1 4 1 4 2 4 0 5-1 4-1 4-2 4-5 4-7 4-7 4-7 3-5 5-5 4-5 4-4 4-2 5-3 4-3 5-1 4-1 5-1 4-1 5-1 5 0 5 0 4 0 5 0 5-1 5 0 5-1 5 1 5 0 5-1 5 0 5 0 5 M783 48l1 4 1 5 0 4 0 5 0 4-1 5 1 5-1 4 1 5 0 4 1 5 0 4 2 5 0 4 1 4 2 5 1 4 3 4 2 4 1 5 1 4 1 4 0 4-1 4-2 4-2 4-5 4-7 4-8 4-8 4-5 4-5 4-5 5-5 4-3 4-3 5-3 4-1 5-1 4-1 5-1 5-1 4 0 5 0 5-1 5 0 5 0 5-1 4 0 5 0 5 0 5 0 5 M778 48l1 5 0 4 0 5 1 4-1 5 0 4-1 5 1 5 0 4 0 5 0 4 1 5 1 4 0 5 1 4 1 4 1 5 3 4 2 4 0 4 0 4 0 4-1 5-1 4-3 4-2 4-6 4-8 4-9 4-8 4-6 4-6 5-6 4-5 4-3 5-4 4-3 5-2 4-1 5-1 4-1 5-1 5-1 5 0 4-1 5 0 5 0 5 M773 49l1 4 0 5 0 4 0 5 0 4-1 5 0 4 0 5 0 5 1 4 0 5 0 4 1 5 0 4 1 5 1 4 1 4 1 5 1 4 0 4 0 4 0 4-2 5-2 4-3 4-3 4-6 4-9 4-10 4-9 4-6 5-7 4-6 4-6 5-4 4-4 5-3 4-2 5-1 4-2 5-1 5-1 5-2 4 0 5 0 5-1 5 0 5-1 5-1 5 0 5 M769 49l0 5 1 4-1 5 0 4 0 5 0 4 0 5-1 5 1 4 0 5 0 4 0 5 1 4 0 5 0 4 1 5 0 4 2 4 1 5-1 4-1 4-1 4-1 5-3 4-4 4-3 4-8 4-9 5-11 4-9 4-7 4-7 5-7 4-6 4-4 5-4 4-4 5-3 5-1 4-2 5-1 5-2 5-1 4 0 5-1 5 0 5-1 5-1 5-1 5 0 5 0 5 0 5 0 5-1 5 0 5 0 5 M767 49l0 5 0 4 1 5-1 5 0 4-1 5 0 4 0 5 0 4 1 5 0 5 0 4 0 5 1 4 0 5 0 4 1 4 0 5 1 4 0 4-1 5-1 4-2 4-3 4-4 5-4 4-7 4-11 4-10 5-10 4-7 4-7 4-8 5-6 4-4 5-4 4-4 5-3 5-1 4-2 5-2 5-1 5-1 4-1 5 0 5-1 5-1 5-1 5 0 5-1 5 0 5-1 5 1 5-1 5 0 5 M765 50l0 4 1 5 0 4 0 5-1 4 0 5-1 5 0 4 0 5 1 4 0 5 0 4 0 5 1 4 0 5 0 4 0 5 1 4 0 4-1 5-1 4-1 4-2 5-3 4-4 4-4 5-8 4-10 4-11 4-11 5-7 4-7 4-8 5-6 4-5 5-4 4-4 5-3 5-1 4-2 5-2 5-1 5-1 4-1 5-1 5-1 5 0 5-1 5-1 5 0 5 0 5 0 5 M764 50l0 4 0 5 0 5 0 4-1 5 0 4 0 5-1 4 0 5 0 5 1 4 0 5 0 4 1 5 0 4 0 5 0 4 1 5 0 4-1 4-2 5-1 4-2 4-3 5-5 4-4 4-8 5-11 4-11 4-10 4-8 5-8 4-7 5-7 4-4 5-4 4-5 5-2 5-2 4-2 5-2 5-2 5 0 5-1 4-1 5-1 5-1 5-1 5 0 5 0 5 M762 50l1 5 0 4 0 5-1 4 0 5-1 5 0 4-1 5 1 4 0 5 0 5 0 4 1 5 0 4 0 5 0 4 0 5 1 4 0 4-2 5-1 4-2 4-2 5-3 4-5 5-4 4-8 4-12 5-11 4-11 4-7 5-8 4-8 5-7 4-4 5-5 5-4 4-3 5-2 5-1 4-2 5-2 5-1 5-1 5-1 5-1 4-1 5 0 5-1 5 0 5-1 5 0 5 0 5 0 6 M761 51l0 4 0 5 0 4 0 5 0 4-1 5 0 5-1 4 1 5 0 4 0 5 0 4 0 5 0 4 0 5 0 5 0 4 1 4-1 5-1 4-1 5-2 4-2 4-4 5-4 4-5 5-9 4-11 4-11 5-11 4-8 5-8 4-8 5-7 4-4 5-5 5-5 4-3 5-2 5-2 5-1 4-2 5-1 5 0 5-2 5 0 5-1 5-1 5-1 5-1 5 1 5-1 5 0 5 0 5-1 5 1 5 M759 51l0 5 0 5-1 4 1 5-1 4 0 5-1 5 0 4 0 5 0 4 0 5 0 5 0 4 0 5 0 4 0 5 0 4 0 5 0 4-2 5-2 4-2 5-2 4-5 5-4 4-5 5-8 5-12 4-12 5-11 4-9 5-8 4-8 5-7 5-5 4-5 5-4 5-4 5-2 4-2 5-2 5-1 5-2 5-1 5 0 5-1 5-1 4-1 5-1 5-1 5 0 5 0 6 0 5 0 5 0 5-1 5 0 5 M759 52l-1 4 0 5 0 5 0 4-1 5 0 4 0 5-1 5 0 4 0 5 0 4 1 5 0 5 0 4-1 5 0 4 0 5 1 4-1 5-1 4-3 5-2 5-3 4-3 5-5 4-5 5-8 4-12 5-12 5-12 4-8 5-8 4-9 5-7 5-5 5-5 4-4 5-3 5-2 5-2 4-2 5-2 5-1 5-1 5-1 5-1 5-1 5-1 5-1 5 0 5 0 5 M758 52l0 5 0 4 0 5 0 5-1 4 0 5-1 4 0 5 0 5 0 4 0 5 0 4 0 5 0 4 0 5 0 5 0 4 0 5 0 4-2 5-2 5-2 4-3 5-3 4-5 5-5 5-9 4-12 5-12 4-11 5-9 5-8 5-8 4-7 5-5 5-5 5-5 4-3 5-2 5-2 5-2 5-2 4-1 5-1 5-1 5-1 5 0 5-2 5 0 5-1 5 0 5 0 5 0 5-1 5 0 6-1 5 M636 239l0-1 2 0 2 0 3 1 4 0 3 1 4 1 3 1 3 2 2 1 2 0 0 1 M632 247l1 0 2-1 3 1 3 0 4 1 5 1 4 1 4 1 3 2 3 1 1 1 0 1 M630 256l1-1 2 0 3 0 4 1 5 1 4 1 5 1 4 1 4 2 3 1 1 1 1 1 M630 260l0 0 2 0 4 0 4 0 4 1 5 1 5 2 5 1 3 1 3 2 2 1 1 1 M629 265l1-1 2 0 3 0 4 1 5 1 5 1 5 1 5 1 4 2 3 1 2 2 0 0 M628 269l1 0 2 0 3 0 5 0 5 1 5 1 5 2 5 1 4 2 4 1 1 1 1 1 M627 274l1-1 2 0 4 0 4 1 6 1 5 1 6 1 5 2 4 1 3 2 2 1 1 1 M625 283l1-1 3 0 4 0 4 1 6 0 6 2 6 1 5 2 5 1 3 2 2 1 1 1 M625 292l1-1 2 0 4 0 5 1 6 0 6 2 6 1 6 2 5 2 3 1 3 2 0 1 M624 296l1 0 3-1 4 1 5 0 6 1 6 1 7 2 5 2 5 1 4 2 2 1 1 1 M623 310l1-1 3 0 4 0 6 1 6 1 7 1 6 2 6 2 5 1 4 2 3 2 0 1 M623 319l1-1 3 0 4 0 6 1 6 1 7 1 7 2 6 2 5 2 4 1 2 2 1 1 M622 324l2-1 2 0 5 0 6 0 6 1 7 2 7 2 6 1 5 2 4 2 3 2 1 1 M622 333l1-1 3 0 4 0 6 0 7 2 7 1 7 2 7 2 5 2 4 2 3 1 1 1 M621 337l2 0 3-1 4 0 6 1 7 1 7 2 7 1 7 2 6 2 4 2 2 2 1 1 M621 346l1 0 3-1 5 0 6 1 7 1 7 2 8 2 6 2 6 2 5 2 2 1 1 2 M620 351l1-1 4 0 4 0 7 1 7 1 7 1 8 2 7 2 6 2 4 2 3 2 0 1 M620 356l1-1 3-1 5 0 7 1 7 1 7 2 8 2 7 2 6 2 4 2 3 2 1 1 M619 360l2-1 3 0 5 0 6 1 8 1 7 1 8 2 7 3 6 2 5 2 3 1 0 2 M619 365l1-1 4-1 5 0 6 1 8 1 8 2 7 2 8 2 6 2 4 2 3 2 1 2 M619 369l1-1 3 0 5 0 7 1 7 1 8 2 8 2 7 2 7 2 4 2 3 2 1 1 M618 374l2-1 3-1 5 1 7 0 7 2 8 1 8 2 7 3 6 2 5 2 3 2 1 1 M618 378l1-1 4 0 5 0 6 1 8 1 8 2 8 2 7 2 6 2 5 3 3 1 0 2 M617 383l1-1 4-1 5 1 7 0 7 2 8 2 8 2 8 2 6 2 5 2 2 2 1 2 M615 392l1-1 4-1 5 0 7 1 8 2 8 2 8 2 8 2 6 2 5 3 3 2 1 1 M614 396l1-1 4 0 5 0 7 1 8 1 8 2 9 2 7 3 7 2 5 2 3 2 0 2 M613 400l1-1 4 0 5 0 7 1 8 2 9 2 8 2 8 2 6 3 5 2 3 2 1 2 M612 405l1-1 4-1 5 1 7 1 8 1 9 2 9 2 7 3 7 2 5 3 3 2 1 1 M609 414l2-1 3-1 6 1 7 0 9 2 9 2 8 3 9 2 6 3 6 2 3 2 0 2 M608 418l2-1 3 0 6 0 7 1 9 2 9 2 9 2 8 3 7 2 5 3 3 2 1 2 M607 422l1-1 4 0 6 0 7 1 9 2 9 2 9 3 9 2 7 3 5 3 3 2 1 1 M605 427l2-1 4-1 6 1 8 1 8 1 10 3 9 2 8 3 7 3 6 2 3 3 1 1 M603 435l2-1 4 0 6 0 8 1 9 2 9 3 10 2 9 3 7 3 6 3 3 2 1 2 M602 440l1-1 4-1 7 1 8 1 9 2 10 2 9 3 9 3 8 3 5 2 4 3 1 2 M598 448l2-1 4 0 7 0 8 1 10 2 10 3 10 3 9 3 8 3 6 3 3 2 1 2 M596 452l2-1 4 0 7 0 8 2 10 1 10 3 10 3 9 3 8 3 6 3 3 2 1 2 M592 461l2-2 4 0 7 1 8 1 10 2 10 2 10 3 9 4 8 3 6 3 4 2 1 2 M588 469l2-1 4-1 7 1 8 1 10 2 10 3 11 3 9 3 8 4 6 3 3 2 1 2 M586 473l2-1 4-1 7 1 9 1 9 2 11 3 10 3 9 4 8 3 6 3 4 3 1 2 M584 477l2-1 4-1 7 1 9 1 10 3 10 2 10 4 10 3 8 3 6 4 4 2 0 2 M580 485l2-1 4 0 7 0 9 2 10 2 11 3 10 3 10 4 8 3 6 4 4 2 1 2 M578 489l2-1 4 0 7 0 9 2 10 2 11 3 10 4 10 3 8 4 7 3 3 3 1 2 M574 497l2-1 4 0 7 1 9 1 11 3 10 3 11 3 10 4 8 4 7 3 3 3 1 2 M572 501l2-1 4 0 7 1 9 1 11 3 11 3 10 4 10 3 9 4 6 3 4 3 1 2 M570 505l2-1 4 0 8 1 9 1 10 3 11 3 11 4 10 4 8 3 6 4 4 3 1 2 M568 509l2-1 4 0 8 1 9 2 10 2 11 3 11 4 10 4 8 4 7 3 3 3 1 2 M564 518l2-2 4 0 8 1 9 2 10 3 11 3 11 4 10 4 9 4 6 3 4 3 1 2 M562 522l2-2 4 0 8 1 9 2 10 3 11 3 11 4 11 4 8 4 6 4 4 2 1 3 M558 530l2-1 4-1 8 1 9 2 11 3 11 4 11 4 10 4 9 4 6 3 4 3 1 3 M556 534l2-1 4 0 8 0 9 2 11 3 11 4 11 4 10 4 9 4 6 4 4 3 1 2 M554 538l2-1 4 0 8 1 9 2 11 3 11 3 11 4 10 4 9 4 6 4 4 3 1 2 M551 542l3-1 4 0 8 1 9 2 11 3 11 3 11 4 10 5 9 4 6 3 4 3 1 3 M545 554l3-1 4 0 8 1 9 2 11 3 11 4 11 4 11 4 8 5 7 3 4 4 0 2 M542 563l2-2 5 0 7 2 10 2 10 3 12 4 11 4 10 4 8 4 7 4 4 3 1 2 M539 571l2-1 5 0 7 1 9 2 11 3 11 4 11 4 10 5 9 4 6 4 4 3 1 2 M537 575l2-1 5 0 7 1 10 3 10 3 11 4 11 4 10 4 9 4 6 4 4 3 1 3 M536 580l2-1 5 0 7 1 9 2 10 3 11 4 11 4 10 4 9 5 6 3 3 3 1 3 M534 584l2-1 5 0 7 1 9 2 10 3 11 4 11 4 10 5 8 4 6 4 4 3 1 2 M531 593l2-1 5 0 7 1 8 2 11 3 10 4 11 4 9 4 9 4 6 4 3 3 1 2 M530 597l1-1 5 0 7 1 9 2 10 3 10 4 11 4 9 4 8 4 6 4 4 3 0 2 M528 601l2-1 4 0 7 1 9 2 10 3 10 4 11 4 9 4 8 4 6 4 3 3 1 2 M526 605l2-1 5 0 7 2 8 2 10 3 10 3 10 4 10 5 8 4 5 3 4 3 1 2 M522 618l2-1 4 0 7 2 8 2 9 3 10 3 10 4 9 4 8 4 5 4 3 2 1 2 M520 623l2-1 5 0 6 1 8 2 9 3 10 3 10 4 9 4 7 4 6 4 3 3 1 1 M519 627l2-1 4 0 6 1 8 2 10 3 9 4 10 4 9 4 7 3 5 4 4 3 0 2 M518 631l1-1 4 0 7 2 7 2 9 2 10 4 9 3 9 4 7 4 5 3 3 3 1 2 M516 636l2-1 4 0 6 1 7 2 9 2 9 4 9 3 9 4 7 4 5 3 3 3 1 1 M512 649l1-1 4 0 6 1 7 1 8 3 8 3 8 3 8 3 6 4 5 2 3 3 0 1 M510 653l2-1 3 0 6 1 7 2 7 2 8 3 9 3 7 3 6 3 5 3 2 2 1 2 M509 657l1-1 4 0 5 1 6 2 8 2 8 3 8 3 7 3 6 3 4 2 3 3 1 1 M507 661l1-1 3 0 6 1 6 2 7 2 8 2 8 3 7 3 6 3 4 3 3 2 0 2 M505 665l1 0 3-1 5 1 7 2 7 2 7 2 8 3 7 3 6 3 4 2 2 2 1 2 M503 669l1 0 3 0 5 0 6 2 7 2 8 2 7 3 7 3 5 2 5 3 2 2 1 1 M501 673l1 0 3 0 5 0 6 2 7 2 7 2 7 2 7 3 5 3 4 2 3 2 0 2 M499 678l1-1 3 0 4 0 6 2 7 1 7 3 7 2 6 3 6 2 4 3 2 2 1 1 M497 682l1-1 3 0 4 0 6 2 6 1 7 3 7 2 6 2 6 3 4 2 2 2 0 1 M494 686l2-1 3 0 4 0 5 2 7 1 7 2 6 3 6 2 5 2 4 3 3 1 0 2 M492 690l2-1 2 0 5 0 5 2 6 1 7 2 6 2 6 3 5 2 4 2 2 2 1 1 M490 694l2-1 2 0 4 0 6 2 6 1 6 2 6 2 6 2 5 3 4 2 2 1 0 1 M486 702l1-1 3 0 3 0 5 1 6 2 6 1 6 2 6 2 4 3 4 1 2 2 1 1 M484 706l1-1 2 0 4 0 5 1 5 1 6 2 6 2 6 2 4 2 4 2 2 1 0 1 M481 710l1-1 3 0 3 0 5 1 6 1 5 2 6 2 5 2 5 1 3 2 2 2 1 1 M476 717l1 0 3 0 3 0 5 1 5 1 6 1 5 2 5 2 4 1 3 2 2 1 1 1 M476 722l1-1 2 0 3 0 5 1 4 1 6 1 5 2 4 1 4 2 3 1 2 2 0 1 M477 726l1-1 2 0 3 1 3 0 5 1 4 1 5 2 4 1 3 2 3 1 2 1 0 1 M663 236l0 5 1 5 0 4 1 5 1 5 1 4 0 5 1 5 0 4 1 5 1 5 0 4 1 5 1 5 0 4 1 5 0 5 0 5 1 4 0 5 1 5 1 5 0 4 0 5 1 5 0 4 1 5 0 5 1 5 0 4 0 5 0 5 0 5-1 4 0 5 0 5 0 5 0 4-1 5 0 5 0 5-1 4 0 5 0 5 0 4 0 5 0 5 0 5 0 4-2 5-2 4-2 4-2 5-2 4-1 5-1 4-2 5-1 4-1 5-2 5-2 4-1 5-2 4-1 4-2 5-2 4-1 5-2 4-2 5-2 4-2 4-1 5-3 4-1 4-2 5-2 4-2 5-2 4-2 4-2 5-2 4-3 4-2 4-3 4-2 4-2 4-3 4-2 4-3 5-2 4-3 4-2 4-4 3-3 4-3 3-4 4-3 3-4 3-3 4-3 3-3 4-4 3-3 3-4 4-3 3-3 4-3 3-4 3-4 4-3 3-3 3-4 4-3 3-4 3-3 4-3 3 M664 250l1 4 0 5 1 5 1 4 0 5 1 5 1 4 1 5 0 5 0 4 1 5 0 5 1 5 0 4 1 5 0 5 1 4 0 5 1 5 0 5 1 4 0 5 1 5 0 4 1 5 0 5 1 5-1 4 0 5 0 5 0 5-1 4 0 5 0 5 0 5 0 4-1 5 0 5 0 4-1 5 0 5 0 5 0 4 0 5 0 5-1 4-1 5-3 4-1 4-2 5-1 4-2 5-1 4-2 5-1 4-2 5-1 4-2 5-1 4-2 5-2 4-1 5-2 4-2 5-1 4-2 4-2 5-2 4-1 5-2 4-2 4-2 5-2 4-2 4-2 5-2 4-2 4-2 5-3 4-2 4-3 4-2 4-3 4-2 4-3 4-2 4-2 5-3 4-2 4-4 3-3 4-3 3-4 4-3 3-3 4-4 3-3 3-3 4-4 3-3 4-3 3-3 3-4 4-3 3-4 4-3 3-4 4-3 3-4 3-3 4-3 3-3 3-4 4 M665 259l0 4 1 5 0 5 1 4 1 5 0 5 1 4 1 5 0 5 1 4 0 5 1 5 0 4 0 5 1 5 0 4 1 5 0 5 0 5 1 4 0 5 1 5 0 4 1 5 0 5 0 5 0 4-1 5 1 5-1 4 0 5-1 5 0 5 0 4 0 5 0 5-1 4 0 5 0 5-1 5 0 4 1 5 0 5-1 4-2 5-2 4-2 4-2 5-1 4-2 5-1 4-1 5-2 4-1 5-2 4-2 5-1 4-2 5-2 4-1 4-2 5-1 4-2 5-2 4-2 5-2 4-2 4-1 5-2 4-2 4-2 5-2 4-2 4-2 5-2 4-2 4-3 4-2 4-2 5-3 4-2 4-3 4-2 4-3 4-2 4-3 4-2 5-3 3-3 4-3 3-4 4-3 3-3 3-4 4-3 3-4 4-3 3-3 4-3 3-4 4-3 3-4 4-3 3-3 3-3 4-4 3-3 4-4 3-3 3-3 4-4 3 M664 263l1 4 0 5 1 5 1 4 0 5 1 5 1 4 0 5 0 5 1 4 0 5 1 5 0 4 0 5 1 5 0 4 0 5 1 5 0 4 1 5 0 5 0 5 1 4 1 5-1 5 0 4 0 5 0 5 0 5-1 4 0 5-1 5 0 4 0 5-1 5 0 4 0 5 0 5-1 4 0 5 0 5 0 4-1 5-1 4-2 5-2 4-2 4-1 5-2 4-1 5-2 4-1 5-2 4-1 5-2 4-2 5-1 4-2 5-1 4-2 4-1 5-3 4-1 5-2 4-2 4-1 5-3 4-2 4-2 5-1 4-2 4-2 5-2 4-2 4-2 5-3 4-2 4-2 4-3 4-2 4-3 4-2 5-3 4-2 4-2 4-3 4-3 4-3 3-4 4-3 3-3 4-3 3-3 4-4 3-3 4-3 3-3 4-4 3-3 4-4 3-3 4-3 3-3 4-4 3-3 3-3 4-4 3-3 4-3 3-3 4 M667 299l1 5 0 5 0 4 1 5 0 5 1 4 0 5 0 5 0 4 1 5 0 5 1 4 0 5 1 5 0 4 1 5 0 5-1 4 0 5 0 5-1 5 0 4 0 5-1 5 0 4 0 5-1 5 0 4 0 5 0 5-1 4 0 5 0 5 0 4-1 5-2 4-2 4-2 5-2 4-1 5-1 4-2 5-1 4-2 4-1 5-2 4-1 5-2 4-2 5-2 4-1 4-2 5-2 4-1 5-2 4-2 4-1 5-3 4-2 4-1 5-2 4-2 4-2 5-2 4-2 4-2 5-2 4-2 4-3 4-2 4-3 5-2 4-2 4-3 4-2 4-3 4-1 4-3 5-3 3-3 4-4 3-3 4-3 4-3 3-4 4-3 3-3 4-3 3-3 4-4 3-3 4-3 3-3 4-4 3-3 4-3 3-3 4-4 3-3 3-3 4-3 3-4 4 M665 294l0 4 1 5 0 5 1 4 0 5 0 5 0 4 1 5 0 5 0 4 1 5 0 5 1 4 0 5 0 5 1 4 0 5 0 5 0 5 0 4-1 5 0 5 0 4-1 5 0 5-1 4 0 5 0 5-1 4 0 5-1 4 0 5 0 5 0 4 0 5-1 4-2 5-2 4-1 4-2 5-2 4-2 5-1 4-1 5-2 4-1 4-2 5-2 4-1 5-2 4-1 4-3 5-1 4-2 5-2 4-1 4-2 5-2 4-2 4-1 5-3 4-1 4-3 5-1 4-2 4-2 5-2 4-2 4-3 4-2 4-2 5-3 4-2 4-2 4-2 4-3 4-2 5-3 4-2 4-3 4-3 3-3 4-3 4-3 3-4 4-3 3-3 4-3 3-3 4-4 4-3 3-3 4-3 3-3 4-4 3-3 4-3 3-3 4-4 3-3 4-3 3-3 4-3 4 M662 288l1 5 1 5 0 4 0 5 0 5 1 4 0 5 1 5 0 4 0 5 0 5 1 4 0 5 0 5 0 4 1 5 0 4 0 5 0 5 0 5 0 4 0 5-1 5 0 4-1 5 0 4-1 5 0 5 0 4-1 5 0 5 0 4-1 5 0 4 0 5-1 5 0 4-2 4-2 5-2 4-2 4-1 5-2 4-1 5-2 4-1 4-2 5-2 4-1 5-2 4-1 4-2 5-2 4-1 4-2 5-2 4-2 5-2 4-1 4-2 4-2 5-2 4-2 4-2 5-2 4-2 4-2 5-1 4-3 4-2 4-2 5-3 4-2 4-2 4-3 4-2 5-2 4-2 4-3 4-2 4-3 4-3 4-3 3-3 4-3 4-3 3-3 4-3 4-3 3-4 4-3 3-3 4-3 4-3 3-3 4-4 3-3 4-3 3-4 4-3 3-3 4-3 3-3 4-3 4 M658 242l0 5 0 4 0 5 0 4 1 5 0 4 0 5 1 5 0 4 1 5 0 4 0 5 0 5 1 4 0 5 0 5 0 4 1 5 0 4 0 5 1 5 0 4 0 5 1 5 0 4 0 5 0 5 1 4-1 5 0 5 0 4-1 5 0 4 0 5-1 5 0 4 0 5-1 5-1 4 0 5 0 4-1 5 0 5 0 4-1 5 0 4-1 5-2 4-2 4-1 5-3 4-1 4-2 5-1 4-1 4-2 5-2 4-1 5-2 4-2 4-2 5-1 4-2 4-2 5-2 4-1 4-2 5-2 4-2 4-2 5-1 4-3 4-1 4-2 5-2 4-2 4-2 5-2 4-2 4-2 5-2 4-3 4-2 4-2 4-3 5-2 4-2 4-2 4-2 4-3 5-2 3-3 4-3 4-3 4-3 3-3 4-3 4-3 3-3 4-3 4-3 3-4 4-2 3-4 4-3 4-3 3-3 4-3 3-4 4-2 4-4 3-3 4-3 3-2 4 M654 228l0 4-1 5 0 4 0 4-1 5 0 4 1 5-1 4 1 5-1 4 1 5 0 4 0 5 0 4 1 5-1 4 0 5 1 5 0 4 0 5 1 4 0 5 0 5 0 4 0 5 0 4 1 5 0 5 0 4 0 5 0 4 0 5-1 5 0 4-1 5 0 4-1 5 0 5-1 4 0 5-1 4 0 5-1 4 0 5-1 4 0 5-1 4-1 5-1 4 0 5-3 4-1 4-2 4-2 5-2 4-1 4-2 5-2 4-1 4-2 4-2 5-2 4-1 4-2 5-2 4-1 4-2 4-2 5-2 4-2 4-2 5-2 4-1 4-2 4-3 4-1 5-2 4-2 4-2 5-1 4-2 4-3 5-1 4-3 4-2 4-2 5-2 4-2 4-2 4-2 4-2 5-2 4-2 4-3 4-2 4-3 4-3 4-2 4-3 4-3 4-3 3-3 4-2 4-3 4-3 3-3 4-3 4-3 4-3 3-3 4-3 4-3 3-3 4-2 4-4 3-2 4-2 4 M650 267l1 5 0 4-1 4 0 5 0 5 1 4 0 5 0 4 0 5 0 4 0 5 0 5 1 4 0 5 0 4-1 5 1 5 0 4 0 5 0 4 0 5 0 4 0 5 0 5 0 4-1 5 0 4-1 5-1 5-1 4 0 5-1 4-1 5 0 4 0 5-1 4-1 5-1 4 0 5 0 4-2 4-2 5-2 4-1 4-2 4-2 5-2 4-2 4-1 4-2 5-2 4-1 4-2 5-2 4-1 4-3 4-2 5-1 4-2 4-2 4-2 5-1 4-2 4-2 4-2 4-2 5-2 4-2 4-2 4-2 5-1 4-2 5-2 4-2 4-2 4-3 4-1 5-2 4-3 4-1 4-3 5-1 4-3 4-2 5-2 4-3 3-2 4-3 4-2 4-3 4-2 4-3 4-3 4-3 4-3 3-3 4-2 4-3 4-3 4-2 3-4 4-3 4-2 4-3 3-3 4-3 4-2 3-2 5 M648 293l0 5 0 5 0 4 0 5 0 4 1 5-1 5 1 4-1 5 0 4 1 5 0 4-1 5 1 5 0 4 0 5-1 4 0 5 0 5-1 4 0 5-1 4-1 5-1 4 0 5-1 4-1 5 0 4-1 5-1 4 0 5-1 4-1 4 0 5-2 4-2 4-1 5-2 4-2 4-2 4-1 5-3 4-1 4-2 4-2 5-1 4-2 4-2 4-1 4-3 5-2 4-1 4-2 4-2 5-2 4-2 4-2 4-1 4-3 5-1 4-2 4-2 4-2 5-2 4-1 4-2 5-2 4-2 4-2 4-2 5-2 4-2 4-2 4-2 5-2 4-2 4-2 5-2 4-2 4-3 4-2 4-3 4-2 4-2 4-3 4-3 4-2 4-3 3-3 4-3 4-2 4-3 4-3 4-2 3-3 4-3 4-3 4-3 3-3 4-3 4-1 4-2 4 M650 227l-1 4 0 4-1 5-1 4-1 4 0 5 0 4 0 4 0 5-1 4 1 5-1 4 0 5 0 4 0 5 0 4 0 5 0 5 0 4 0 5 0 4 0 5 0 4 0 5 0 5 0 4 0 5 1 4-1 5 0 4 0 5 0 5-1 4 1 5-1 4-1 5 0 4-1 5-1 4 0 5-1 4-1 5-1 4-1 5-1 4 0 5-1 4-1 4-1 5-1 4-2 4-2 4-2 5-2 4-2 4-1 4-2 5-2 4-1 4-2 4-2 4-2 5-2 4-1 4-2 4-2 4-2 5-2 4-2 4-2 4-1 4-2 5-2 4-2 4-2 4-3 4-1 5-2 4-2 4-1 5-2 4-2 4-2 5-2 4-2 4-2 4-2 5-2 4-2 4-2 4-1 5-3 4-1 4-2 4-3 4-2 5-2 4-3 4-2 4-2 4-3 4-3 3-2 4-3 4-3 4-2 4-3 4-3 4-2 4-3 3-3 4-3 4-3 4-2 3-3 4-2 4-1 5 M646 235l-1 4-1 4-1 4-1 5 0 4 0 5-1 4 0 5 0 4 0 4-1 5 0 4 0 5 0 4 0 5-1 5 1 4-1 5 0 4 1 5-1 4 0 5 0 4 0 5 0 4 0 5 0 5-1 4 0 5 0 4 0 5 0 4-1 5-1 4-1 5-1 4 0 5-1 4-1 5-1 4-1 5-1 4-1 4 0 5-1 4-1 5-1 4-2 4-2 4-2 4-2 5-1 4-2 4-2 4-2 4-2 5-1 4-3 4-1 4-2 4-2 4-2 5-2 4-2 4-2 4-2 4-2 4-2 4-1 5-2 4-2 4-2 4-2 4-2 4-2 5-2 4-1 4-2 5-1 4-3 4-2 5-1 4-2 4-2 4-2 5-2 4-1 4-2 5-2 4-2 4-1 4-2 5-3 4-2 4-2 4-2 4-2 4-2 5-3 4-3 3-2 4-2 4-3 4-2 4-3 4-2 4-3 4-2 4-3 4-3 4-3 3-2 4-3 4-1 4-1 5 M637 283l0 4 0 5 0 4 0 5 0 4 0 5 0 4 0 5 0 4-1 5 0 4 0 5 0 4 0 5 0 5-1 4 0 5 0 4 0 5-1 4 0 5-1 4-1 5 0 4-1 5-1 4-1 5-1 4 0 4-2 5-1 4-1 5 0 4-2 4 0 5-1 4-2 4-2 5-2 4-2 4-2 4-2 4-1 4-2 4-2 5-2 4-2 4-2 4-2 4-2 4-1 4-2 5-3 4-1 4-2 4-2 4-2 4-2 4-2 5-2 4-2 4-2 4-2 4-2 4-1 5-2 4-1 4-2 5-2 4-2 4-2 5-2 4-2 4-1 4-2 5-2 4-1 4-2 5-2 4-2 4-2 5-1 4-2 4-3 4-1 4-3 5-2 4-2 4-3 4-2 4-3 4-1 4-3 4-3 4-2 4-3 4-2 3-2 4-3 4-3 4-2 4-3 4-1 4-1 4 M638 256l0 4-1 4 0 5-1 4-1 5 0 4 0 5 0 4 0 5-1 4 1 5-1 4 0 5 0 4 0 5 0 5-1 4 1 5-1 4 0 5 0 4 0 5 0 4-1 5 0 4-1 5 0 4 0 5-1 4-2 5 0 4-1 5-1 4-1 5-1 4-1 4-1 5-1 4-1 5-1 4-1 4-1 5-2 4-2 4-2 4-2 4-2 4-2 4-1 5-2 4-2 4-2 4-2 4-2 4-2 4-2 4-2 5-1 4-3 4-1 4-3 4-1 4-2 4-2 4-2 5-2 4-2 4-2 4-2 4-2 4-2 5-2 4-1 4-2 5-1 4-2 4-2 4-2 5-1 4-2 4-2 5-1 4-2 4-2 5-2 4-2 4-1 5-2 4-2 4-2 4-2 4-1 5-3 4-2 4-2 4-2 4-3 4-2 4-3 4-2 4-2 4-3 4-2 4-3 4-2 4-3 3-2 4-3 4-1 4-1 5 M633 287l0 4-1 5 0 4 0 5 0 4 0 5 0 4 0 5-1 4 0 5 0 4-1 5 0 4 0 5 0 4 0 5-1 4 0 5 0 5-1 4 0 5-1 4-1 5-1 4-1 4-1 5-1 4-1 5-1 4-1 4-1 5-1 4-1 4-2 5 0 4-2 4-2 4-2 5-2 4-2 4-2 4-2 4-2 4-2 4-2 4-2 4-2 5-2 4-2 4-1 4-3 4-2 4-1 4-3 4-1 4-3 5-1 4-2 4-2 4-3 4-1 4-2 4-2 4-2 5-1 4-2 4-2 5-1 4-2 4-1 5-2 4-2 4-2 4-2 5-1 4-2 4-1 5-2 4-2 4-1 5-3 4-1 4-2 5-2 4-2 4-1 4-3 4-2 4-2 4-2 4-3 4-2 4-3 5-2 4-2 4-3 4-2 3-2 4-3 4-3 4-2 4-1 4 0 5 M633 269l-1 4 0 4-1 5 0 4 0 5 0 4-1 5 0 4 0 5 0 5 0 4 0 5-1 4 0 5-1 4 0 5 0 4 0 5-1 4 0 5 0 4 0 5-1 4 0 5-1 4-1 5-1 4-1 5-1 4-1 5-1 4-1 4-1 5-1 4-2 4 0 5-2 4-1 5 0 4-2 4-3 4-1 4-3 4-1 4-2 4-2 5-2 4-3 4-1 4-2 4-2 4-2 4-2 4-2 4-2 4-2 5-2 4-2 4-2 4-2 4-2 4-2 4-2 4-2 4-2 4-2 5-2 4-1 4-2 4-2 5-1 4-2 4-1 5-2 4-2 4-1 4-2 5-2 4-1 4-2 5-2 4-1 4-2 5-2 4-1 4-2 5-2 4-2 4-1 5-2 4-2 4-2 4-3 4-2 4-2 4-2 4-3 4-2 4-2 4-2 4-3 4-2 4-3 4-3 4-2 4-1 4 1 4 M643 226l-1 4-2 4-1 4-2 4-2 4-1 5 0 4-1 5-1 4 0 5-1 4 0 4-1 5-1 4 0 5 0 4 0 5-1 4 0 5 0 5 0 4-1 5 0 4 0 5-1 4 0 5 0 4-1 5 0 4 0 5 0 4-1 5 0 4-1 5 0 4-1 5-1 4-1 5-2 4 0 4-1 5-1 4-1 5-1 4-2 4-1 5-1 4-1 4-1 5-3 4-2 4-2 4-1 4-2 4-2 4-2 4-2 4-3 5-2 4-1 4-2 4-2 4-2 4-2 4-2 4-2 4-2 4-2 4-2 4-2 5-2 4-2 4-2 4-2 4-2 4-2 4-2 4-2 5-1 4-2 4-2 5-1 4-2 4-2 4-1 5-1 4-2 4-2 5-1 4-2 4-2 5-1 4-2 4-2 5-1 4-2 4-1 5-2 4-1 4-3 4-2 5-2 4-2 4-2 4-2 4-2 4-3 4-2 4-2 4-3 4-2 4-2 4-3 4-2 4-3 4 0 4 0 4 M625 291l0 5 0 4 0 5-1 4 0 5-1 4 0 5 0 5 0 4-1 5 0 4-1 5 0 4 0 5 0 4-1 5 0 4-1 5 0 4-1 5-1 4-1 5-1 4-1 4-1 5-1 4-1 5-2 4-1 4-1 5-1 4-2 4-1 5-1 4-2 4-2 4-2 4-2 4-2 5-2 4-2 4-3 4-1 4-2 4-3 4-1 4-2 4-2 4-2 4-2 4-3 4-1 4-3 4-2 5-2 4-2 4-2 4-2 4-2 4-2 4-2 4-2 4-1 5-2 4-2 4-1 4-1 5-2 4-2 4-1 5-2 4-1 4-2 4-1 5-2 4-1 4-2 5-2 4-1 4-1 5-2 4-1 4-2 5-1 4-2 4-2 4-2 5-3 4-2 4-1 4-3 4-1 4-3 4-2 4-2 4-2 4-3 4-2 4-2 4-3 4 0 4 1 5 M625 287l0 5-1 4 0 5 0 4 0 5 0 4-1 5 0 4-1 5 0 4 0 5 0 4-1 5 0 5-1 4 0 5 0 4-1 5 0 4-1 5-1 4 0 5-2 4-1 4-1 5-1 4-1 5-1 4-1 4-2 5-1 4-2 5-1 4-1 4-1 5-2 4-2 4-2 4-2 4-3 4-1 4-3 4-2 4-2 4-2 4-1 4-3 4-1 5-3 4-2 4-2 4-2 4-2 4-2 4-2 4-2 4-2 4-2 4-2 4-2 4-2 4-2 5-2 4-2 4-1 4-1 5-2 4-2 4-1 4-2 5-1 4-2 4-1 5-2 4-2 4-1 4-2 5-1 4-1 4-2 5-1 4-2 4-2 5-1 4-1 4-2 5-2 4-2 4-2 4-2 4-2 4-2 4-2 4-2 4-2 4-3 4-2 4-2 4-3 4-2 4-2 4-1 4 1 5 M1023 211l0 0-2-1-1 0-3 1-3 0-3 1-3 1-3 1-2 1-2 0-1 1 0 1 M1045 252l-1-1-3 0-3 0-5 1-6 1-5 1-6 1-6 2-4 2-3 1-2 2-1 1 M1048 260l-1 0-3-1-4 1-5 0-6 1-6 2-6 1-6 2-5 2-3 1-2 2-1 1 M1049 265l-1-1-2 0-4 0-6 1-6 1-6 1-7 2-5 2-5 1-4 2-2 2-1 1 M1051 269l-1 0-3-1-4 0-6 1-6 1-7 2-6 1-6 2-5 2-4 2-2 1-1 1 M1052 274l-1-1-3 0-4 0-6 0-6 2-7 1-7 2-6 2-5 1-4 2-2 2-1 1 M1053 278l-1-1-3 0-4 0-6 1-6 1-7 1-7 2-7 2-5 2-4 2-2 1-1 2 M1057 292l-1-1-4-1-5 0-6 1-7 1-8 1-8 2-7 2-6 2-5 2-3 2 0 1 M1059 301l-1-1-3-1-6 0-7 0-8 1-8 2-9 2-7 2-7 2-5 2-3 1-1 2 M1061 305l-2-1-3-1-6 0-7 1-8 1-9 1-9 2-8 2-7 2-5 2-3 2-1 1 M1062 310l-2-2-3 0-6 0-7 0-9 1-9 2-9 1-8 2-7 2-6 2-3 2-1 2 M1063 314l-2-1-3-1-6 0-8 0-9 1-9 2-9 2-9 2-7 2-6 2-3 2-1 1 M1065 323l-1-1-4-1-7 0-8 0-9 1-10 1-10 2-9 2-8 2-6 3-3 2-1 1 M1068 332l-2-1-4-1-7-1-8 1-10 1-11 1-10 2-10 2-8 2-7 2-3 3-2 1 M1069 336l-2-1-4-1-7 0-9 0-10 1-11 1-11 2-10 2-8 3-7 2-4 2-1 2 M1070 341l-2-2-4 0-7-1-9 0-10 1-12 2-11 2-10 2-9 2-6 2-4 2-2 2 M1071 345l-1-1-5-1-7 0-9 0-11 1-11 1-12 2-10 2-9 2-7 3-4 2-1 2 M1073 350l-2-2-5-1-7 0-9 0-11 1-12 1-12 2-10 2-10 3-6 2-5 3-1 1 M1075 354l-2-1-5-1-8-1-9 0-12 1-12 2-11 2-12 2-9 2-7 3-4 2-2 2 M1076 359l-2-2-5-1-8-1-9 1-12 1-12 1-12 2-12 2-9 3-8 2-4 3-1 2 M1078 363l-2-2-5-1-8 0-11 0-11 1-13 1-12 2-12 3-10 2-7 3-5 2-1 2 M1081 372l-2-2-6-1-8-1-10 1-12 0-13 2-12 2-12 2-10 3-8 2-5 3-1 2 M1082 376l-2-2-5-1-8 0-10 0-12 1-13 1-13 2-11 2-10 3-8 2-4 3-2 2 M1085 385l-2-2-5-1-8 0-10 0-12 0-12 2-13 2-11 2-10 2-8 3-4 2-2 2 M1086 389l-1-1-5-2-8 0-10 0-12 1-12 1-13 2-11 2-10 2-7 3-5 2-1 2 M1088 394l-2-2-5-1-8-1-10 0-11 1-13 1-12 2-11 2-10 3-7 2-5 2-1 2 M1092 407l-2-2-5-1-7 0-10 0-11 0-12 1-12 2-11 2-10 2-7 2-5 3-1 2 M1093 411l-1-1-5-1-8-1-9 0-12 1-12 1-11 1-12 2-9 2-7 3-5 2-1 2 M1095 416l-2-2-5-1-7-1-10 0-11 1-12 1-12 2-11 1-9 3-7 2-4 2-2 2 M1096 420l-2-1-4-1-8-1-9 0-11 0-12 1-12 2-11 2-9 2-7 2-4 2-2 2 M1097 425l-1-2-5-1-7-1-10 0-11 1-11 1-12 1-11 2-9 2-7 2-4 2-2 2 M1100 434l-2-2-4-1-7-1-10 0-11 1-11 0-11 2-11 2-9 1-7 3-4 2-2 1 M1103 443l-2-2-5-1-7-1-9 0-10 0-12 1-11 1-10 2-9 2-7 2-4 2-2 2 M1104 447l-2-2-4-1-7 0-9-1-11 1-11 1-11 1-11 1-9 2-7 2-4 2-1 2 M1105 451l-1-1-5-1-7-1-9 0-11 0-11 1-11 1-11 2-8 2-7 2-4 2-2 2 M1108 460l-2-1-4-1-7-1-9 0-11 0-11 1-11 1-11 2-9 2-6 2-5 2-1 1 M1109 465l-1-2-5-1-7-1-9 0-10 0-12 1-11 2-10 1-9 2-7 2-4 2-2 2 M1112 474l-2-2-4-1-7-1-9 0-11 0-11 1-11 1-11 2-9 2-6 2-4 2-2 2 M1113 478l-1-2-5-1-7 0-9-1-10 1-12 1-11 1-10 1-9 2-7 2-4 2-1 2 M1115 482l-2-1-4-1-7-1-9 0-11 0-11 1-11 1-11 2-9 2-7 2-4 2-1 1 M1116 487l-1-2-5-1-7-1-9 0-11 1-11 0-11 2-10 1-9 2-7 2-4 2-2 2 M1118 491l-2-1-5-1-7-1-9 0-10 0-11 1-12 1-10 2-9 1-7 2-4 2-1 2 M1119 496l-2-2-4-1-7-1-9 0-11 0-11 1-11 1-11 2-9 2-6 2-4 2-2 2 M1119 500l-1-1-5-1-6-1-9 0-11 0-11 1-11 1-10 2-9 1-7 2-4 2-1 2 M1120 505l-1-2-5-1-7 0-8-1-11 1-11 0-11 1-10 2-9 2-6 2-5 2-1 1 M1121 510l-1-2-5-1-7-1-8 0-11 0-11 1-11 1-10 1-8 2-7 2-4 2-1 2 M1123 519l-2-2-4-1-7-1-8 0-10 0-11 1-11 1-10 1-9 2-6 2-4 2-1 2 M1124 523l-2-1-4-1-7-1-8-1-10 1-11 0-11 1-10 2-8 2-7 1-4 2-1 2 M1126 532l-2-1-4-1-7-1-8 0-10 0-11 0-10 1-10 2-8 1-7 2-4 2-1 2 M1127 537l-2-2-4-1-7-1-8 0-10 0-11 1-10 1-10 1-8 2-6 2-4 1-2 2 M1128 541l-2-1-4-1-7-1-8 0-10 0-10 0-11 1-9 2-9 1-6 2-4 2-1 1 M1129 546l-2-2-4-1-6-1-9 0-10 0-10 1-10 1-10 1-8 2-7 1-4 2-1 2 M1130 550l-2-1-4-1-6-1-9 0-9 0-11 0-10 1-10 2-8 1-6 2-4 2-1 1 M1131 555l-1-2-5-1-6-1-8 0-10 0-10 1-11 1-9 1-9 2-6 1-4 2-1 2 M1134 568l-1-1-4-1-6-1-9 0-9 0-11 0-10 1-9 1-8 2-7 2-3 1-2 2 M1136 573l-2-2-4-1-6-1-9 0-9 0-10 1-11 1-9 1-8 1-6 2-4 2-1 1 M1137 577l-2-1-4-1-6-1-8 0-10 0-10 0-10 1-10 1-8 2-6 1-4 2-1 2 M1138 582l-2-2-4-1-6-1-8 0-10 0-10 1-10 1-10 1-8 1-6 2-4 2-1 1 M1139 586l-2-1-4-1-6-1-8 0-10 0-10 0-10 1-10 1-8 2-6 1-4 2-1 2 M1139 591l-1-1-4-2-6 0-8-1-10 0-10 1-10 1-9 1-8 1-7 2-3 2-2 1 M1141 600l-1-1-4-2-6 0-8-1-10 0-10 1-10 1-9 1-8 1-6 2-4 1-1 2 M1142 605l-1-2-4-1-6-1-8 0-10 0-10 0-10 1-9 1-8 2-6 1-4 2-1 2 M1143 609l-1-1-4-1-6-1-8-1-10 0-10 1-10 1-9 1-8 1-6 2-4 1-1 2 M1144 614l-1-2-4-1-6-1-8 0-10 0-10 0-10 1-9 1-8 2-6 1-3 2-2 1 M1146 623l-2-2-3-1-7-1-7 0-10 0-9 0-10 1-9 1-8 2-6 1-4 2-1 1 M1147 627l-2-1-3-1-7-1-7 0-10 0-9 0-10 1-9 1-8 1-6 2-4 1-1 2 M1148 632l-2-1-4-2-6 0-7-1-10 0-9 0-10 1-9 1-8 2-6 1-3 2-2 1 M1148 636l-1-1-4-1-6-1-7 0-9 0-10 0-10 1-9 1-7 1-6 1-4 2-1 2 M1149 641l-1-1-4-1-6-1-8-1-8 0-10 0-9 1-9 1-8 1-5 2-4 1-1 2 M1150 655l-1-1-4-1-5-1-7-1-9 0-9 0-9 1-8 1-7 1-6 1-3 1-1 2 M1151 660l-2-2-3-1-5-1-8 0-8 0-9 0-8 0-9 1-7 1-5 1-3 2-1 1 M1152 669l-2-1-3-2-5 0-7-1-8 0-8 0-9 0-8 1-7 1-5 1-3 1-1 2 M1152 673l-1-1-3-1-5-1-7 0-8-1-8 0-9 1-7 0-7 1-5 1-3 2-1 1 M1153 678l-2-1-3-1-5-1-6-1-8 0-8 0-8 0-8 1-7 1-5 1-3 1-1 1 M1153 683l-1-2-3-1-5 0-7-1-7 0-8-1-8 1-8 0-6 1-5 1-3 1-1 2 M1153 687l-1-1-3-1-5-1-6-1-7 0-8 0-8 0-8 1-6 1-5 1-3 1-1 1 M1154 692l-1-1-3-1-5-1-7-1-7 0-8 0-8 0-7 0-7 1-4 1-3 1-2 2 M1154 697l-1-2-3-1-5-1-6 0-7-1-8 0-8 1-8 0-6 1-5 1-3 1-1 1 M1155 701l-1-1-3-1-5-1-7-1-7 0-8 0-8 0-7 1-6 0-5 1-3 2-1 1 M1155 706l-1-1-3-1-5-1-6-1-7 0-8 0-8 0-7 0-6 1-5 1-3 1-1 1 M1156 710l-2-1-3-1-4-1-7 0-7-1-8 0-7 0-8 1-6 1-4 1-3 1-1 1 M1156 715l-1-1-3-1-5-1-6-1-7 0-8 0-8 0-7 0-6 1-5 1-3 1-1 1 M1156 720l-1-2-3-1-4 0-7-1-7-1-7 0-8 1-7 0-6 1-5 1-3 1-1 1 M1157 724l-1-1-3-1-5-1-6-1-7 0-8 0-7 0-8 1-6 0-4 1-3 1-1 2 M1157 729l-1-1-3-1-4-1-6-1-8 0-7 0-8 0-7 0-6 1-5 1-2 1-1 1 M1158 733l-1-1-3-1-5-1-6 0-7-1-8 0-7 0-7 1-6 1-5 1-3 1-1 1 M1158 738l-1-1-3-1-4-1-6-1-7 0-8 0-7 0-7 0-6 1-5 1-3 1-1 1 M1158 743l-1-1-2-1-5-1-6-1-7 0-7-1-8 1-7 0-6 1-4 1-3 1-1 1 M1159 747l-1-1-3-1-5-1-5 0-7-1-8 0-7 0-7 1-6 0-5 1-2 1-1 1 M1159 752l-1-1-2-1-5-1-6-1-7 0-7 0-8 0-7 0-6 1-4 1-3 1-1 1 M1160 757l-1-2-3-1-5 0-5-1-7-1-8 0-7 0-7 1-6 1-5 0-3 1-1 2 M1160 761l-1-1-2-1-5-1-6-1-7 0-7 0-8 0-7 0-6 1-4 1-3 1-1 1 M1161 770l-1-1-2-1-5-1-6 0-7-1-7 0-8 0-7 1-6 0-5 1-2 1-1 1 M1000 226l0 4 0 5 0 4 0 5 0 5 0 4 0 5 0 4 0 5 0 5 0 4 0 5 0 4 0 5-1 4-1 5-2 4-1 5-1 4-1 5-1 4-1 5-1 4-1 5-1 4-1 5-2 4 0 5-1 4-1 5-1 4 0 5-1 4-1 5 2 4 2 4 3 4 2 4 2 4 2 4 2 5 2 4 2 4 2 4 2 4 3 4 1 4 2 5 3 4 1 4 3 4 1 4 2 5 1 4 1 5 2 4 1 4 2 5 1 4 1 5 1 4 2 4 1 5 2 4 1 5 2 4 1 4 2 5 1 4 2 5 1 4 2 4 1 5 1 4 2 5 2 4 1 4 1 5 2 4 1 5 1 4 1 5 1 4 2 4 1 5 1 4 1 5 2 4 0 5 2 4 1 5 1 4 2 5 1 4 2 4 2 5 1 4 2 4 2 4 1 5 2 4 2 4 1 5 2 4 1 5 0 4 1 5 1 4 1 5 1 4 0 5 1 5 1 4 0 5 2 4 0 5 1 4 1 5 0 4 0 5 1 5 1 4 0 5 0 4 M1001 225l0 5 0 4-1 5 0 5 1 4-1 5 0 4 0 5 1 4 0 5 0 5-1 4 0 5 0 4-1 5-1 4-1 5-1 4-1 5-1 4-1 5-1 4-2 4 0 5-2 4-1 5-1 4-1 5-1 4 0 5-1 4-1 5 0 4-1 5 2 4 2 4 2 4 2 4 3 4 2 5 2 4 2 4 2 4 2 4 2 4 2 4 2 5 2 4 2 4 3 4 2 4 1 5 1 4 2 4 1 5 1 4 2 5 1 4 2 4 1 5 1 4 2 5 2 4 1 4 1 5 2 4 1 5 1 4 2 4 2 5 1 4 1 5 2 4 1 4 2 5 1 4 2 5 1 4 1 4 2 5 1 4 1 5 1 4 2 5 0 4 2 5 1 4 1 5 1 4 2 5 1 4 1 4 2 5 1 4 1 5 2 4 2 4 2 5 2 4 1 4 2 4 2 5 1 4 2 4 1 5 1 5 0 4 1 5 1 4 0 5 1 4 1 5 0 5 1 4 1 5 1 4 0 5 1 4 1 5 0 5 0 4 1 5 0 4 1 5 M1002 243l0 4 0 5 0 4 0 5 0 4 0 5 0 4 0 5 1 5-1 4-1 4 0 5-2 4-1 5-1 4 0 5-1 4-1 4-2 5-1 4-1 5-1 4-1 4 0 5-1 4-1 5 0 4-1 5 0 4-1 5 2 4 2 4 2 4 2 4 3 4 2 4 2 5 2 4 2 4 1 4 3 4 2 4 2 5 2 4 2 4 2 4 2 4 1 5 1 4 2 5 2 4 1 4 1 5 2 4 1 5 1 4 2 4 1 5 1 4 2 5 1 4 2 5 1 4 2 4 1 5 1 4 2 5 2 4 1 4 2 5 0 4 2 5 2 4 1 4 1 5 2 4 1 5 1 4 1 5 2 4 1 5 1 4 1 5 1 4 1 5 2 4 1 5 1 4 1 4 2 5 1 4 2 5 2 4 1 4 2 5 2 4 1 4 2 5 1 4 2 4 1 5 1 5 1 4 0 5 1 4 0 5 1 4 1 5 1 5 0 4 1 5 1 4 1 5 1 4 0 5 0 5 1 4 0 5 1 4 0 5 M1004 265l0 4 0 5 0 4 0 5 0 4-1 5-1 4-1 4-1 5-1 4-1 5-1 4-1 4-1 5-1 4-1 5 0 4-1 4-1 5 0 4-1 5 0 4-1 5-1 4 0 5 1 4 3 4 2 4 2 4 2 4 2 4 2 5 2 4 2 4 2 4 2 4 2 5 2 4 2 4 2 4 2 4 2 5 2 4 1 4 2 5 1 4 1 5 2 4 1 4 1 5 2 4 1 5 1 4 2 4 1 5 2 4 1 5 2 4 1 5 1 4 2 4 2 5 1 4 1 5 2 4 1 4 1 5 2 4 1 5 2 4 1 5 1 4 1 5 1 4 2 5 1 4 1 4 1 5 1 4 2 5 0 4 2 5 1 4 2 5 1 4 2 5 2 4 1 4 1 5 2 4 2 4 2 5 1 4 2 5 1 4 1 5 1 4 0 5 1 4 1 5 0 4 1 5 1 5 0 4 1 5 1 4 1 5 0 4 2 5 0 5 0 4 0 5 1 4 0 5 1 5 M1005 273l1 4 0 5-1 5 0 4-1 4-1 5-1 4-1 4 0 5-1 4-1 4-1 5-1 4-1 5-1 4-1 4 0 5 0 4-1 5-1 4 0 5 0 4-1 4 2 5 2 4 2 4 2 4 2 4 2 4 3 5 2 4 1 4 2 4 2 4 2 5 2 4 2 4 2 4 2 4 2 5 2 4 1 4 2 5 1 4 1 5 2 4 1 4 2 5 1 4 1 5 2 4 1 5 1 4 2 4 1 5 1 4 2 5 1 4 2 5 1 4 2 4 1 5 1 4 2 5 1 4 2 5 1 4 2 4 1 5 0 4 2 5 1 4 1 5 1 4 2 5 1 4 1 5 1 4 1 5 2 4 1 5 1 4 2 4 1 5 2 4 1 5 2 4 2 4 1 5 1 4 2 5 1 4 2 4 1 5 1 5 0 4 1 5 1 4 0 5 1 5 1 4 1 5 1 4 0 5 1 4 1 5 0 5 1 4 0 5 1 4 0 5 0 5 1 4 M1007 240l0 5 1 4 0 4 1 5-1 4 1 5 0 4 1 5 0 4 0 5-1 4 0 5-1 4-1 4 0 5-1 4-1 4 0 5-1 4-1 4 0 5-1 4-1 4 0 5 0 4-1 4 0 5 0 4 0 5-1 4 2 4 2 4 2 5 2 4 2 4 2 4 2 4 2 5 2 4 2 4 2 4 2 5 2 4 2 4 2 4 2 5 1 4 2 4 1 5 2 4 1 5 2 4 1 4 1 5 2 4 1 5 1 4 2 4 1 5 1 4 2 5 1 4 1 5 2 4 1 5 2 4 1 4 1 5 2 4 1 5 1 4 2 5 1 4 2 5 1 4 1 4 2 5 1 4 1 5 1 4 1 5 1 4 1 5 1 4 1 5 2 4 1 5 1 4 1 5 2 4 1 5 2 4 1 5 1 4 2 4 1 5 2 4 2 5 1 4 1 5 1 4 1 5 0 4 1 5 1 5 0 4 1 5 1 4 1 5 0 5 1 4 1 5 0 4 1 5 0 5 1 4 1 5 0 4 0 5 1 5 M1009 248l1 5 0 4 1 5 0 4 1 5 0 4 0 5 0 4 0 4-1 5 0 4-1 4 0 5-1 4 0 4-1 5 0 4-1 4 0 5-1 4 0 4-1 5 0 4 0 4-1 5 1 4-1 5 0 4 2 4 2 4 2 5 2 4 2 4 2 4 2 4 2 5 2 4 1 4 2 4 2 5 2 4 2 4 2 5 2 4 2 4 1 4 2 5 1 4 1 5 1 4 2 5 1 4 2 4 1 5 2 4 1 5 1 4 2 5 1 4 1 4 2 5 1 4 1 5 1 4 2 5 1 4 2 5 1 4 1 5 2 4 1 4 2 5 1 4 1 5 1 4 1 5 1 4 2 5 1 4 1 5 1 4 1 5 1 4 1 5 2 4 1 5 1 4 1 5 2 4 1 5 2 4 1 5 2 4 1 4 1 5 1 4 2 5 2 4 0 5 1 4 0 5 1 5 1 4 0 5 1 4 1 5 0 5 1 4 1 5 0 4 1 5 1 5 1 4 0 5 0 4 1 5 0 5 0 4 M1011 243l0 5 1 4 1 4 0 5 1 4 0 5 1 4 0 5 0 4 0 4-1 5 0 4-1 4 0 5-1 4 0 4 0 5-1 4 0 4 0 5-1 4 0 4 0 5 0 4-1 4 0 5 0 4 0 4 0 5 2 4 2 4 2 5 2 4 2 4 2 4 1 4 3 5 1 4 2 4 2 5 2 4 2 4 2 4 2 5 1 4 2 4 1 5 2 4 1 5 2 4 1 4 2 5 1 4 1 5 2 4 1 4 1 5 2 4 1 5 2 4 1 5 1 4 1 5 1 4 2 5 1 4 2 5 1 4 1 5 2 4 1 4 1 5 2 4 1 5 1 4 1 5 1 4 2 5 0 4 2 5 1 4 1 5 1 4 1 5 2 4 1 5 1 4 1 5 1 4 2 5 1 4 1 5 1 4 2 5 1 4 2 5 1 4 2 5 1 4 0 5 1 4 1 5 0 4 1 5 1 5 0 4 1 5 0 4 1 5 1 5 0 4 1 5 1 4 0 5 1 5 0 4 1 5 0 4 0 5 M1017 269l0 4 1 5 0 4 0 5-1 4 0 4 0 5 0 4-1 4 0 4 0 5-1 4 0 4 0 5 0 4-1 4 0 5 0 4 0 4 1 5-1 4 0 4 1 5 1 4 2 4 2 5 2 4 2 4 2 4 2 5 2 4 1 4 2 4 2 5 2 4 2 4 1 5 2 4 2 4 2 5 2 4 1 4 1 5 1 4 2 5 1 4 1 5 2 4 1 4 2 5 1 4 2 5 1 4 1 5 1 4 1 5 2 4 1 5 1 4 1 5 2 4 1 4 1 5 2 4 1 5 1 4 2 5 1 4 1 5 2 4 0 5 2 4 1 5 1 4 1 5 1 4 1 5 1 4 2 5 1 4 0 5 2 4 1 5 2 4 1 5 1 4 2 5 1 4 1 5 1 4 1 5 2 4 1 5 1 4 1 5 0 5 1 4 0 5 1 4 1 5 0 5 1 4 1 5 0 4 1 5 1 5 0 4 0 5 1 4 1 5 0 5 0 4 1 5 M1019 264l1 4 0 5 1 4 0 5 0 4-1 4 1 4 0 5-1 4 0 4 0 5 0 4-1 4 0 5 1 4-1 4 0 5 0 4 0 4 1 5-1 4 1 4 0 5 0 4 2 4 2 4 1 5 3 4 1 4 2 4 2 5 2 4 2 4 2 5 1 4 2 4 2 5 2 4 1 4 2 5 2 4 1 4 2 5 1 4 1 5 2 4 1 4 1 5 2 4 1 5 2 4 1 5 1 4 1 5 2 4 1 5 1 4 1 5 2 4 1 5 1 4 1 5 2 4 1 4 1 5 2 4 1 5 1 4 1 5 2 4 1 5 1 4 1 5 1 4 1 5 2 4 1 5 1 4 1 5 1 4 1 5 1 4 1 5 2 4 1 5 1 4 1 5 1 4 1 5 2 5 1 4 1 5 1 4 2 5 0 4 1 5 0 4 1 5 1 5 0 4 1 5 0 4 1 5 1 5 1 4 0 5 1 5 0 4 0 5 1 4 1 5 0 5 1 4 0 5 M1022 263l1 4 0 5 1 4 0 5 0 4 0 4 0 5 0 4 0 4 0 5 0 4 0 4 0 4 0 5 0 4 0 4 0 5 0 4 0 4 1 5 0 4 0 4 1 5 0 4 1 4 2 5 2 4 2 4 2 4 2 5 2 4 2 4 1 5 2 4 2 4 1 5 2 4 2 4 1 5 2 4 2 4 1 5 2 4 1 5 1 4 2 4 1 5 2 4 1 5 1 4 2 5 1 4 1 4 1 5 2 5 1 4 1 5 1 4 2 5 1 4 1 5 1 4 1 5 2 4 1 4 1 5 1 4 2 5 1 4 1 5 1 4 2 5 1 4 1 5 1 4 1 5 1 4 1 5 1 4 1 5 1 5 2 4 1 5 1 4 1 5 1 4 1 5 1 4 2 5 0 4 1 5 2 4 1 5 1 4 1 5 0 5 1 4 0 5 1 5 1 4 0 5 1 4 1 5 0 5 1 4 0 5 1 4 1 5 0 5 1 4 0 5 0 4 1 5 0 5 M1026 271l1 5 0 4 0 4 0 5 1 4 0 4 0 5 0 4 0 4 0 4 0 5 1 4 0 4 0 5 0 4 0 4 0 5 1 4 0 4 1 5 0 4 0 4 2 4 2 5 2 4 2 4 2 5 1 4 2 4 1 5 3 4 1 4 2 5 2 4 1 4 2 5 1 4 3 5 1 4 1 4 2 5 1 4 1 5 2 4 1 4 2 5 1 4 1 5 2 4 1 5 1 4 1 5 2 4 1 5 1 4 1 5 1 4 2 5 1 4 1 5 1 4 1 5 2 4 1 5 1 4 1 5 2 4 1 5 1 4 1 5 1 4 1 5 2 4 0 5 1 4 2 5 0 4 2 5 1 4 1 5 1 4 1 5 1 4 1 5 1 5 2 4 0 5 2 4 1 5 1 4 0 5 1 4 1 5 1 5 0 4 1 5 1 5 0 4 1 5 0 4 1 5 1 5 0 4 1 5 0 4 1 5 1 5 0 4 0 5 1 4 1 5 0 5 M1015 216l1 4 2 4 1 4 1 4 1 4 1 4 2 4 1 5 1 4 0 4 2 5 0 4 1 5 1 4 0 4 0 5 1 4 0 4 0 5 0 4 1 4 0 5 0 4 0 4 1 4 0 5 0 4 1 4 0 5 0 4 1 4 0 5 1 4 0 4 1 5 2 4 1 4 2 4 2 5 2 4 2 4 1 5 2 4 2 5 2 4 1 4 2 5 1 4 2 4 2 5 2 4 1 5 1 4 1 4 2 5 1 4 2 5 1 4 1 4 2 5 2 4 1 5 1 4 1 5 2 4 0 5 2 4 1 5 1 4 1 5 1 4 1 5 2 4 1 5 1 4 2 5 1 4 1 5 1 4 1 5 1 4 2 5 1 4 1 5 1 4 1 5 1 4 1 5 1 4 1 5 1 5 1 4 1 5 1 4 1 5 1 4 1 5 1 4 1 5 1 5 2 4 0 5 1 4 1 5 1 4 1 5 0 5 1 4 0 5 1 5 0 4 1 5 1 4 1 5 0 5 0 4 1 5 0 5 1 4 1 5 0 4 0 5 1 5 1 4 0 5 M1029 248l1 4 2 4 1 5 1 4 1 4 0 5 1 4 1 5 0 4 1 4 0 5 1 4 0 4 1 4 1 5 0 4 0 4 1 5 0 4 1 4 1 5 0 4 1 4 1 5 0 4 1 4 1 5 2 4 2 4 1 5 2 4 2 4 2 5 1 4 2 4 1 5 2 4 2 5 1 4 2 4 1 5 2 4 1 5 2 4 1 4 1 5 2 4 1 5 2 4 1 5 2 4 1 4 1 5 1 4 2 5 1 4 1 5 1 4 1 5 1 4 1 5 2 5 1 4 0 5 2 4 1 5 1 4 1 5 1 4 2 5 1 4 1 5 1 4 2 5 0 4 1 5 1 4 2 5 1 4 1 5 1 4 1 5 0 4 2 5 1 4 1 5 1 5 1 4 0 5 1 4 1 5 1 5 1 4 1 5 0 4 2 5 0 5 1 4 0 5 1 5 0 4 1 5 0 4 1 5 0 5 1 4 0 5 1 5 0 4 1 5 0 4 1 5 1 5 0 4 0 5 1 4 0 5 M1019 215l2 4 2 4 2 3 1 4 2 4 1 5 2 4 0 4 2 5 1 4 1 4 1 5 1 4 1 4 1 5 1 4 0 4 1 5 0 4 1 4 1 5 0 4 1 4 1 5 0 4 1 4 1 5 0 4 1 4 1 5 0 4 2 4 1 5 1 4 0 4 2 5 2 4 1 4 2 5 2 4 1 4 2 5 1 4 2 5 2 4 1 4 2 5 1 4 2 5 1 4 2 5 1 4 2 4 1 5 2 4 1 5 1 4 2 5 1 4 1 4 2 5 1 4 2 5 0 4 2 5 1 4 1 5 1 4 1 5 0 4 2 5 1 5 1 4 1 5 1 4 2 5 0 4 2 5 1 4 1 5 2 4 0 5 2 4 1 5 0 4 2 5 1 4 1 5 1 4 1 5 1 4 0 5 1 5 2 4 0 5 1 4 1 5 1 5 1 4 1 5 0 4 1 5 1 5 0 4 1 5 1 4 0 5 1 5 0 4 1 5 0 5 1 4 0 5 1 4 0 5 1 5 0 4 1 5 1 5 0 4 0 5 1 4 0 5 1 5 0 4 M1040 273l2 4 0 5 1 4 1 4 1 5 1 4 0 4 1 5 1 4 0 5 1 4 1 4 1 5 0 4 1 4 1 5 1 4 1 4 1 4 1 5 1 4 2 4 1 5 2 4 2 5 1 4 2 4 1 5 2 4 2 5 1 4 1 4 2 5 2 4 1 5 1 4 2 5 1 4 2 4 1 5 2 4 1 5 2 4 1 5 1 4 1 4 2 5 1 4 2 5 1 4 1 5 1 4 1 5 0 4 2 5 1 5 1 4 1 5 1 4 1 5 1 4 1 5 2 4 1 5 1 4 1 5 1 4 1 5 1 4 2 5 1 4 1 5 1 4 0 5 1 5 1 4 1 5 1 4 1 5 2 4 0 5 1 4 0 5 1 5 1 4 1 5 0 5 1 4 1 5 1 4 1 5 0 5 0 4 1 5 1 5 0 4 0 5 1 5 0 4 1 5 0 4 1 5 0 5 1 4 0 5 1 5 0 4 1 5 1 4 0 5 1 5 M1038 255l2 5 1 4 1 4 1 5 1 4 1 5 1 4 1 4 1 5 0 4 1 4 1 5 1 4 1 4 1 5 1 4 0 4 1 5 1 4 1 5 1 4 1 4 1 4 1 5 1 4 2 4 2 5 2 4 1 5 2 4 1 4 2 5 1 4 2 5 1 4 2 4 1 5 2 4 1 5 2 4 1 5 2 4 1 5 1 4 1 4 2 5 1 4 2 5 1 4 1 5 2 4 1 4 2 5 1 4 1 5 0 4 1 5 1 5 2 4 1 5 1 4 0 5 2 4 0 5 2 4 1 5 1 4 1 5 1 4 2 5 1 4 1 5 1 4 1 5 1 5 1 4 1 5 1 4 1 5 1 4 1 5 1 4 1 5 1 4 1 5 0 5 1 4 1 5 0 5 1 4 1 5 0 5 1 4 0 5 1 4 1 5 0 5 1 4 0 5 0 5 1 4 1 5 0 4 1 5 0 5 1 4 0 5 0 5 1 4 0 5 1 4 1 5 0 5 0 4 1 5 M1045 273l2 4 1 4 1 5 0 4 1 5 1 4 1 4 1 5 1 4 1 4 1 5 1 4 1 4 1 5 1 4 1 5 1 4 1 4 1 4 1 5 2 4 1 4 2 5 1 4 2 5 1 4 2 4 2 5 1 4 2 5 1 4 2 5 1 4 1 5 2 4 1 4 2 5 1 4 1 5 2 4 1 5 1 4 2 4 1 5 1 4 2 5 2 4 1 5 1 4 1 5 1 4 1 5 1 4 1 5 1 4 1 5 1 5 1 4 1 5 1 4 1 5 1 4 1 5 2 4 1 5 1 4 1 5 1 4 1 5 1 4 1 5 1 4 1 5 1 4 1 5 1 5 1 4 1 5 1 4 1 5 1 4 0 5 1 5 0 4 1 5 1 5 0 4 1 5 0 4 1 5 0 5 1 4 1 5 0 5 1 4 0 5 0 5 1 4 0 5 1 4 0 5 1 5 0 4 1 5 0 5 0 4 1 5 1 4 0 5 1 5 0 4 M1045 264l1 4 1 5 1 4 1 4 1 5 2 4 1 5 1 4 0 4 2 5 1 4 1 4 1 5 0 4 2 5 1 4 1 4 1 5 1 4 1 4 1 5 2 4 1 4 2 5 2 4 1 5 2 4 1 4 1 5 2 4 2 5 1 4 1 4 2 5 1 4 2 5 1 4 1 5 2 4 1 5 1 4 2 5 1 4 1 4 2 5 2 4 1 5 1 4 1 5 2 4 1 4 1 5 1 4 1 5 1 5 1 4 1 5 1 4 1 5 0 4 2 5 0 5 2 4 1 5 1 4 1 5 2 4 0 5 2 4 1 5 1 4 1 5 1 4 1 5 1 4 1 5 1 4 0 5 1 5 1 4 1 5 1 4 1 5 1 4 0 5 1 5 0 4 1 5 1 5 0 4 0 5 1 5 1 4 0 5 1 4 0 5 1 5 0 4 0 5 1 5 0 4 1 5 0 4 1 5 0 5 1 4 0 5 0 5 1 4 0 5 1 4 1 5 0 5 M1034 230l1 4 2 4 2 4 1 5 2 4 2 4 1 4 1 5 2 4 1 5 1 4 1 4 1 5 2 4 0 5 1 4 2 4 0 5 2 4 1 5 1 4 1 4 1 5 1 4 1 5 1 4 2 4 1 5 1 4 2 4 1 5 2 4 1 4 2 5 1 4 2 5 1 4 2 5 1 4 2 4 1 5 2 4 1 5 1 4 2 5 1 4 2 5 1 4 1 4 1 5 2 4 1 5 2 4 1 5 1 4 1 5 2 4 1 4 1 5 2 4 1 5 1 4 1 5 0 5 2 4 0 5 1 4 1 5 1 4 1 5 1 4 1 5 2 4 0 5 2 4 1 5 1 4 1 5 2 5 0 4 1 5 1 4 1 5 1 4 1 5 1 4 1 5 1 4 1 5 1 5 0 4 1 5 0 4 1 5 1 5 0 4 0 5 1 5 1 4 0 5 0 5 1 4 0 5 1 4 1 5 0 5 0 4 1 5 0 5 1 4 0 5 0 5 1 4 0 5 1 4 0 5 1 5 0 4 1 5 0 4 1 5 M1047 264l2 4 1 5 1 4 2 5 0 4 2 4 1 5 1 4 1 5 1 4 1 5 2 4 0 4 2 5 1 4 1 5 1 4 2 4 1 5 1 4 2 4 2 5 0 4 3 5 1 4 1 4 2 5 1 4 2 5 1 4 2 4 1 5 1 4 2 5 1 4 2 5 0 4 2 5 2 4 1 5 1 4 2 4 1 5 1 4 1 5 2 4 1 5 1 4 2 4 2 5 1 4 1 5 1 4 1 5 0 5 2 4 0 5 1 4 1 5 1 4 1 5 1 4 1 5 2 4 0 5 1 4 2 5 1 4 1 5 1 4 1 5 1 5 1 4 1 5 1 4 1 5 1 4 1 5 0 4 1 5 1 5 2 4 0 5 1 4 0 5 0 5 1 4 0 5 1 5 1 4 0 5 0 4 1 5 1 5 0 4 0 5 1 5 0 4 1 5 0 4 1 5 0 5 1 4 0 5 0 5 1 4 0 5 1 4 0 5 0 5 1 4 1 5 0 5 M1033 226l2 4 2 4 2 4 2 5 1 4 2 4 1 4 2 5 1 4 2 5 1 4 2 4 0 5 2 4 1 5 1 4 1 5 1 4 1 5 1 4 2 4 1 5 1 4 1 5 2 4 1 5 1 4 1 4 2 5 2 4 1 4 1 5 2 4 1 5 2 4 1 4 2 5 1 4 2 5 2 4 1 4 1 5 1 4 2 5 1 4 1 5 2 4 1 5 1 4 1 5 2 4 1 4 2 5 1 4 2 5 1 4 1 5 1 4 2 4 2 5 0 4 1 5 1 5 1 4 1 5 1 4 0 5 1 4 2 5 0 5 1 4 1 5 2 4 1 5 1 4 1 5 1 4 1 5 2 4 0 5 1 4 2 5 0 4 1 5 1 4 1 5 1 4 1 5 0 5 2 4 1 5 1 4 0 5 0 5 1 4 0 5 1 4 0 5 1 5 0 4 1 5 0 5 1 4 0 5 0 4 1 5 1 5 0 4 0 5 1 5 0 4 0 5 1 4 0 5 1 5 0 4 1 5 0 5 1 4 0 5 1 4 0 5" stroke="#34f696" stroke-width="1.5"/><path d="M758 55l2 2 5 2 9 2 11 2 13 1 14 0 13 0 13-1 11-2 9-2 5-2 2-2 M758 68l2 3 5 2 9 2 12 2 13 1 15 0 14 0 13-1 12-2 9-2 5-2 2-3 M757 73l2 3 6 2 9 2 12 2 13 1 15 0 14 0 14-1 11-2 9-2 6-2 2-3 M757 78l2 2 6 3 9 2 11 1 14 1 15 1 14-1 14-1 12-1 9-2 5-3 2-2 M757 82l1 3 6 2 9 2 12 2 14 1 15 0 14 0 14-1 12-2 9-2 6-2 2-3 M756 87l2 2 6 3 9 2 12 2 14 1 15 0 14 0 14-1 12-2 9-2 6-3 2-2 M756 91l2 3 6 3 9 2 12 1 14 2 15 0 15 0 14-2 12-1 10-2 5-3 2-3 M756 96l2 3 6 2 9 3 13 1 14 1 15 1 15-1 15-1 12-1 9-3 6-2 2-3 M756 101l2 2 6 3 10 2 12 2 15 1 15 0 16 0 14-1 12-2 10-2 6-3 2-2 M756 110l2 3 7 2 10 3 13 2 15 1 16 0 16 0 15-1 13-2 10-3 7-2 2-3 M756 119l3 3 6 3 11 2 13 2 16 2 18 0 17 0 16-2 14-2 10-2 7-3 2-3 M756 133l3 3 7 4 12 2 16 3 18 1 20 0 19 0 19-1 15-3 13-2 7-4 3-3 M756 137l3 4 8 4 13 3 17 2 19 2 22 0 21 0 19-2 17-2 13-3 8-4 3-4 M755 142l3 4 8 4 14 3 18 3 21 1 23 1 23-1 21-1 18-3 13-3 9-4 3-4 M753 147l3 4 9 4 15 3 19 3 23 2 24 0 24 0 23-2 19-3 15-3 9-4 3-4 M751 151l3 5 10 4 16 4 21 3 23 1 26 1 26-1 24-1 20-3 16-4 10-4 3-5 M749 156l3 5 11 4 16 4 22 3 25 2 27 1 27-1 26-2 21-3 17-4 10-4 4-5 M746 160l3 6 11 4 18 4 23 4 26 2 29 0 28 0 27-2 22-4 18-4 11-4 4-6 M741 165l4 5 11 5 19 5 24 3 28 2 30 1 30-1 28-2 24-3 19-5 11-5 4-5 M736 170l4 5 12 6 20 4 25 4 30 2 32 1 31-1 30-2 25-4 20-4 12-6 4-5 M719 179l5 6 13 6 22 5 29 4 33 3 35 1 36-1 33-3 28-4 22-5 14-6 5-6 M707 184l5 6 15 7 23 5 30 4 35 3 38 1 38-1 35-3 30-4 24-5 14-7 5-6 M695 188l5 8 16 6 24 6 32 4 38 3 40 1 40-1 37-3 33-4 24-6 16-6 5-8 M685 193l6 8 16 7 26 6 33 4 39 3 42 1 42-1 39-3 34-4 26-6 16-7 5-8 M677 198l6 8 17 7 26 6 35 5 41 3 43 1 44-1 40-3 35-5 27-6 16-7 6-8 M669 202l6 9 17 7 28 7 36 5 42 3 45 1 45-1 42-3 36-5 28-7 17-7 6-9 M660 207l7 9 18 7 28 7 38 5 43 4 47 1 46-1 44-4 37-5 29-7 18-7 6-9 M655 212l6 9 19 8 29 6 38 6 45 3 47 1 48-1 45-3 38-6 29-6 19-8 6-9 M650 217l7 8 18 9 30 7 39 5 46 3 49 2 48-2 46-3 39-5 30-7 19-9 6-8 M645 221l7 9 19 9 31 7 40 5 46 4 50 1 50-1 46-4 40-5 30-7 20-9 6-9 M641 226l6 9 20 9 31 7 41 6 47 3 51 2 51-2 47-3 41-6 31-7 20-9 6-9 M639 231l7 9 19 9 32 7 41 6 48 4 52 1 51-1 48-4 41-6 32-7 20-9 6-9 M637 236l7 9 20 9 32 8 41 5 49 4 52 1 52-1 48-4 42-5 32-8 20-9 7-9 M635 241l7 9 20 9 32 8 42 5 49 4 53 1 52-1 49-4 42-5 32-8 21-9 6-9 M633 246l7 9 20 9 33 8 42 6 50 3 53 2 53-2 49-3 42-6 33-8 20-9 7-9 M630 255l8 10 20 9 33 8 43 6 51 4 53 1 54-1 50-4 43-6 33-8 21-9 7-10 M630 260l7 10 21 9 33 8 43 6 51 4 54 1 54-1 50-4 44-6 33-8 21-9 7-10 M629 265l7 10 21 9 33 8 44 6 51 4 54 1 55-1 50-4 44-6 33-8 21-9 8-10 M628 270l7 10 21 9 34 8 44 6 51 4 54 1 55-1 51-4 44-6 34-8 21-9 7-10 M627 275l7 10 21 9 34 8 44 6 52 4 55 2 55-2 51-4 44-6 34-8 21-9 7-10 M625 285l7 10 22 10 34 8 45 6 51 4 56 1 56-1 52-4 44-6 34-8 22-10 7-10 M625 290l7 10 22 10 34 8 45 6 52 4 55 1 56-1 52-4 45-6 34-8 22-10 7-10 M624 300l8 11 21 9 35 8 44 6 53 4 56 1 56-1 52-4 44-6 35-8 21-9 8-11 M624 306l7 10 22 9 34 8 45 6 53 4 56 2 56-2 52-4 45-6 34-8 22-9 7-10 M624 311l7 10 22 9 34 8 45 6 53 4 56 2 56-2 52-4 45-6 34-8 22-9 7-10 M624 316l7 10 22 9 34 8 45 7 53 4 56 1 56-1 52-4 45-7 35-8 21-9 8-10 M623 321l8 10 21 10 35 8 45 6 52 4 56 1 57-1 52-4 45-6 34-8 22-10 8-10 M623 326l8 10 21 10 34 8 45 6 52 4 56 1 56-1 52-4 45-6 34-8 22-10 7-10 M623 331l7 10 22 10 34 8 45 6 51 4 56 1 56-1 52-4 44-6 34-8 22-10 7-10 M624 337l7 10 21 9 34 8 45 6 51 4 55 1 56-1 51-4 44-6 34-8 22-9 7-10 M625 342l7 10 21 9 34 8 44 6 51 4 55 1 54-1 52-4 43-6 34-8 21-9 8-10 M625 347l7 10 21 9 34 8 43 6 51 4 55 1 54-1 51-4 44-6 33-8 21-9 7-10 M626 352l7 10 21 9 33 8 43 6 50 4 54 1 54-1 50-4 43-6 33-8 21-9 7-10 M627 358l6 9 21 9 32 8 42 5 50 4 52 1 53-1 49-4 43-5 32-8 20-9 7-9 M627 363l7 9 20 9 32 7 41 6 48 4 52 1 52-1 48-4 41-6 32-7 20-9 7-9 M628 368l7 9 19 9 31 7 41 6 47 3 51 2 50-2 47-3 41-6 31-7 20-9 6-9 M629 374l6 9 19 8 31 7 39 6 47 3 49 1 50-1 46-3 40-6 30-7 19-8 7-9 M636 395l6 8 17 8 27 6 35 5 42 3 44 1 44-1 42-3 35-5 27-6 17-8 6-8 M639 401l6 8 16 7 27 6 35 5 41 3 44 1 43-1 41-3 35-5 27-6 17-7 5-8 M645 412l6 8 16 7 26 6 34 5 40 3 42 1 42-1 40-3 34-5 26-6 16-7 6-8 M648 418l6 7 16 7 25 6 34 5 39 3 42 1 41-1 39-3 34-5 25-6 17-7 5-7 M658 434l5 8 15 6 25 6 32 4 37 3 40 1 40-1 37-3 32-4 24-6 16-6 5-8 M661 440l5 7 15 7 24 5 32 5 36 2 40 1 39-1 37-2 31-5 24-5 15-7 6-7 M664 446l5 7 15 6 24 6 31 4 36 3 38 1 39-1 36-3 31-4 24-6 15-6 5-7 M667 451l5 7 15 7 23 5 31 4 35 3 38 1 38-1 36-3 30-4 24-5 14-7 5-7 M674 463l5 7 14 6 23 5 29 4 34 3 37 1 37-1 35-3 29-4 23-5 14-6 5-7 M677 469l4 6 15 6 22 6 29 4 34 2 36 1 37-1 34-2 29-4 22-6 14-6 5-6 M678 492l5 7 13 6 22 5 29 4 34 2 35 1 36-1 34-2 28-4 22-5 14-6 5-7 M678 498l5 7 13 6 22 5 29 4 33 2 36 1 36-1 33-2 29-4 22-5 14-6 4-7 M678 504l5 7 13 6 22 5 29 4 33 2 36 1 36-1 33-2 28-4 22-5 14-6 5-7 M678 510l5 7 14 5 21 6 29 4 33 2 36 1 36-1 33-2 28-4 22-6 14-5 5-7 M678 516l5 7 14 6 21 5 29 4 33 2 36 1 36-1 33-2 28-4 22-5 14-6 5-7 M678 522l5 7 14 6 22 5 28 4 33 2 36 1 35-1 34-2 28-4 22-5 14-6 4-7 M678 534l5 7 14 6 22 5 28 4 33 2 36 1 35-1 33-2 29-4 22-5 13-6 5-7 M679 540l4 7 14 6 22 5 28 4 33 2 36 1 35-1 33-2 29-4 22-5 13-6 5-7 M679 547l4 6 14 6 22 5 28 4 34 3 35 0 36 0 33-3 28-4 22-5 14-6 5-6 M680 565l4 7 14 6 22 5 29 4 33 2 35 1 36-1 33-2 29-4 22-5 13-6 5-7 M682 578l4 6 14 6 22 5 28 4 34 3 35 1 36-1 33-3 28-4 22-5 14-6 5-6 M681 584l5 7 14 6 22 5 29 4 33 2 36 1 36-1 33-2 29-4 22-5 14-6 4-7 M681 591l5 6 14 6 22 5 29 4 33 3 36 1 37-1 33-3 29-4 22-5 14-6 5-6 M680 603l5 7 14 6 23 5 29 4 34 3 37 1 36-1 34-3 30-4 22-5 14-6 5-7 M680 610l5 6 14 7 22 5 30 4 34 3 37 0 37 0 35-3 29-4 23-5 14-7 5-6 M679 616l5 7 15 6 22 6 30 4 34 2 38 1 37-1 34-2 30-4 22-6 15-6 5-7 M679 629l4 7 15 6 23 6 29 4 35 2 37 1 38-1 34-2 30-4 23-6 14-6 5-7 M678 636l5 7 14 6 23 5 30 4 35 3 37 1 38-1 35-3 29-4 23-5 15-6 5-7 M678 643l5 6 14 7 23 5 30 4 35 3 37 1 38-1 35-3 30-4 23-5 14-7 5-6 M677 649l5 7 15 6 23 6 30 4 35 2 37 1 38-1 35-2 30-4 23-6 14-6 5-7 M677 656l5 7 14 6 23 5 31 5 35 2 37 1 38-1 35-2 30-5 23-5 15-6 5-7 M676 663l5 7 14 6 24 5 30 4 35 3 38 1 38-1 35-3 30-4 23-5 15-6 5-7 M675 669l5 7 14 7 24 5 30 4 35 3 38 1 38-1 36-3 30-4 24-5 14-7 5-7 M673 676l5 7 15 7 24 5 30 4 36 3 38 1 38-1 36-3 30-4 24-5 14-7 5-7 M672 683l5 7 15 6 24 6 30 4 36 3 38 1 39-1 36-3 30-4 24-6 15-6 5-7 M671 690l5 7 15 6 24 6 31 4 35 3 39 1 39-1 35-3 31-4 24-6 15-6 5-7 M670 697l5 7 15 6 24 6 31 4 36 3 39 1 38-1 36-3 31-4 24-6 15-6 5-7 M668 711l5 7 15 6 24 6 31 4 36 3 40 1 39-1 36-3 31-4 24-6 15-6 5-7 M667 718l5 7 15 6 24 6 31 4 37 3 39 1 39-1 37-3 31-4 24-6 15-6 6-7 M666 725l5 7 15 6 25 6 31 4 37 3 39 1 39-1 37-3 31-4 24-6 16-6 5-7 M665 739l5 7 15 6 25 6 31 5 37 2 39 1 40-1 37-2 31-5 25-6 15-6 5-7 M664 746l5 7 16 7 24 5 32 5 37 2 39 1 40-1 37-2 32-5 24-5 15-7 5-7 M664 753l5 7 15 7 25 5 31 5 37 2 40 1 40-1 37-2 32-5 24-5 15-7 6-7 M663 760l5 7 16 7 24 5 32 5 37 2 40 1 40-1 37-2 32-5 24-5 15-7 6-7 M662 767l6 7 15 7 24 5 32 5 38 3 40 1 40-1 37-3 32-5 24-5 16-7 5-7 M760 52l-1 5 1 5 0 4 0 5-1 5 0 4-1 5 0 4 0 5 0 5 0 4 0 5 0 5 1 4-1 5 0 5 0 4 0 5 0 5-1 5-2 4-1 5-3 5-3 5-4 5-5 5-5 4-12 5-12 5-11 5-10 5-8 5-9 5-7 5-6 5-5 5-5 4-5 5-1 5-3 5-2 4-2 5-2 5-1 5-1 4-1 5-1 5-1 4-1 5-1 5-1 5 0 4-1 5 0 5 0 5-1 5 0 5-1 5 0 5 1 5 1 5 1 5 0 6 1 5 1 5 0 6 1 5 1 6 0 5 4 6 3 5 3 6 3 6 3 5 3 6 3 6 4 6 3 5 4 6 3 6 3 6 3 6 4 5 3 6 0 6 1 6 0 6 0 6 0 6 0 6 1 6 0 6 0 6 1 6 0 7 0 6 0 6 0 6 1 7 1 6 1 7 1 6 0 7 0 6-1 7 0 6 0 7 0 6-1 7 0 6-1 7-1 6-1 7 0 6-1 7-2 6-2 7-1 6-2 7-1 6-1 7-2 7-1 6-1 7 0 7-1 7-1 7-1 7 0 6-1 7 M704 198l-9 5-9 5-7 5-9 5-5 5-5 5-5 5-4 4-2 5-3 5-2 5-2 5-1 4-2 5-1 5-2 5-1 4-1 5-1 5-2 5 0 4-1 5 0 5-1 5 0 5-1 5-1 5 0 5 0 5 1 5 0 5 0 5 1 5 1 5 0 6 1 5 1 5 1 6 1 5 3 6 3 5 3 6 4 5 3 6 3 6 3 5 4 6 3 6 4 6 3 5 3 6 4 6 3 6 3 5 0 6 1 6 1 6 0 6 0 6 0 6 1 6-1 6 1 6 0 6 0 7 1 6 0 6 1 6 0 7 1 6 1 7 1 6 M762 54l0 4 1 5 0 5 0 5 0 4-1 5 0 4-1 5 0 5 0 4 0 5 1 5 0 4 0 5 0 5 0 5 0 4 0 5 1 5-2 5-1 5-1 5-2 5-3 5-4 5-5 5-5 5-11 5-11 6-11 5-10 5-8 5-8 5-8 5-5 5-5 5-5 5-4 5-2 5-3 4-2 5-2 5-2 5-2 5-1 4-1 5-1 5-2 5-1 4-1 5-1 5 0 5-1 5-1 4 0 5-1 5-1 5 0 5 0 5 0 5 1 5 1 6 0 5 1 5 0 5 1 6 1 5 1 5 1 6 2 5 4 5 3 6 4 6 3 5 3 6 3 6 3 5 4 6 3 6 4 5 3 6 4 6 3 6 3 5 1 6 0 6 0 6 0 6 0 6 1 6 0 6 0 6 1 6 0 6 1 7 0 6 0 6 1 6 0 7 1 6 1 6 2 7 0 6-1 7 0 7 0 6 0 7 0 6-1 7 0 6-1 7-1 6 0 7-1 6-2 7-2 6-1 7-2 7-2 6-2 7-1 6-2 7-1 7-1 7-2 6 0 7-1 7-1 7-1 7-1 7 M664 243l-2 5-3 5-2 4-2 5-2 5-1 5-2 5-2 5-1 4-1 5-2 5-1 5-1 5-1 4-1 5-1 5 0 5-1 5-1 5 0 5 0 5 0 5 1 5 0 5 1 5 0 5 1 6 0 5 1 5 1 5 1 5 2 6 4 5 3 6 3 5 3 6 4 5 4 6 3 6 3 5 4 6 3 5 3 6 4 6 3 5 3 6 0 6 1 6 0 6 0 6 1 6 0 6 1 6 0 6 0 6 1 6 0 6 0 7 1 6 0 6 1 7 1 6 1 6 M771 162l-1 5-2 5-4 6-4 5-4 5-10 6-11 5-10 6-8 5-7 6-8 5-7 5-5 5-5 5-4 6-4 5-2 5-2 5-3 4-2 5-2 5-1 5-2 5-2 5-1 5-2 4-1 5-2 5-1 5-1 5-1 5-1 4 0 5-2 5 0 5-1 5-1 5 1 5 0 5 0 5 1 6 0 5 1 5 1 5 0 5 1 5 0 5 2 5 4 6 3 5 4 6 3 5 3 6 4 5 3 6 3 5 4 6 3 5 3 6 4 6 3 5 3 6 0 6 1 6 0 6 0 5 1 6 0 6 0 6 1 7 0 6 1 6 0 6 1 6 0 6 1 7 0 6 2 6 1 7 2 6 0 7 0 6 0 7 0 7 0 6 0 7 0 6-1 7-1 6-1 7-1 6-1 7-2 7-2 6-1 7-2 6-3 7-2 7-2 7-2 6-1 7-2 7-1 7-1 7-1 7-1 6-1 7-1 7 M704 235l-4 5-4 5-4 5-2 5-2 5-2 5-2 5-2 5-1 5-2 5-2 5-2 4-1 5-2 5-2 5-1 5-1 5-1 5-1 5-1 5-1 4-1 5-1 5 0 5-1 5 1 5 0 6 0 5 1 5 0 5 1 5 0 5 0 5 0 5 2 4 4 6 3 5 3 6 3 5 4 6 3 5 3 6 4 5 3 6 3 5 3 6 3 5 4 6 3 5 0 6 1 6 0 6 1 6 0 6 0 6 0 6 M782 159l0 5 0 6-2 5-3 5-3 6-3 5-10 6-9 6-10 5-8 6-6 5-6 6-8 5-4 6-4 5-4 5-4 5-2 5-2 5-2 5-3 5-2 5-1 5-2 5-1 5-2 5-2 5-1 4-2 5-1 5-1 5-2 5-1 5-1 5 0 5-1 5-1 5-1 5 0 5 0 5 1 5-1 5 1 5 0 5 0 5 1 5 0 5 0 5 2 5 3 5 3 5 4 6 3 5 3 6 4 5 3 5 3 6 3 5 3 6 4 5 3 6 3 6 2 5 1 6 0 6 1 6 1 6 0 6 0 6 1 6 0 6 0 6 1 6 0 6 0 6 2 7 0 6 1 6 1 7 2 6 1 6 1 7 0 6 0 7 1 7 0 6-1 7 0 6 0 7-1 6-1 7-1 7-1 6-2 7-2 7-2 6-3 7-2 7-2 6-3 7-1 7-2 7-2 7-2 6 0 7-1 7-2 7-1 7 0 7 M733 220l-6 6-7 5-4 6-4 5-4 5-5 5-1 5-2 5-2 5-2 5-2 5-2 5-1 5-2 5-2 5-1 5-3 5-1 5-2 4-1 5-1 5-1 5-1 5-1 5-1 5-1 5-1 5 0 5 1 5 0 5 0 5 0 5 0 5 0 5 1 5 0 5 0 5 2 5 3 5 3 5 3 6 4 5 3 5 3 6 3 5 4 6 3 5 3 6 3 5 3 6 3 5 3 6 0 6 1 6 0 6 1 5 0 6 0 6 1 6 0 6 0 6 1 7 1 6 0 6 1 6 0 7 1 6 2 6 1 7 2 6 0 6 M778 57l1 5 0 5 1 5 0 4 0 5 0 5-1 4 0 5 0 5 0 4 1 5 0 5 1 5 1 5 0 4 1 5 1 5 1 6 2 5 1 5 0 6 1 5-1 6-1 5-3 5-3 6-2 5-9 6-9 6-9 6-7 6-6 5-7 6-6 5-5 5-3 6-4 5-4 5-2 5-2 5-2 5-2 5-2 5-1 5-2 5-2 5-2 5-2 5-1 5-2 5-1 5-1 4-2 5-1 5-1 5-1 5-1 5-1 5-1 5 0 5 0 5 0 5 1 5-1 5 1 5 0 5 0 5 0 5 0 5 2 4 2 6 4 5 3 6 3 5 4 5 2 6 4 5 3 6 3 5 3 6 3 5 3 6 3 5 3 6 0 6 1 5 1 6 0 6 0 6 0 6 1 6 0 6 1 6 0 6 1 6 0 7 1 6 1 6 0 7 2 6 2 6 1 7 1 6 0 7 0 6 1 7 0 7 0 6-1 7 0 6-1 7-1 6-1 7-1 7-2 6-2 7-2 7-2 6-3 7-2 7-3 7-2 7-1 6-2 7-2 7-1 7-1 7-1 7-1 7 0 7 M744 235l-4 5-4 5-3 6-4 5-1 5-2 5-2 5-2 5-2 5-1 5-2 5-2 5-1 5-2 5-1 5-3 5-1 5-1 5-2 5-1 5-1 5-1 5-1 5-2 5-1 5 1 5-1 5 1 5-1 5 0 4-1 5 0 5 0 5 0 5-1 5 1 4 3 5 4 6 3 5 3 5 3 6 3 5 3 5 3 6 3 5 3 6 3 5 3 6 3 5 2 6 1 5 0 6 0 6 1 6 0 6 0 6 1 6 0 6 1 6 0 6 1 6 1 6 0 7 1 6 1 6 1 7 2 6 1 6 1 7 1 6 0 7 1 7 0 6 0 7 0 6-1 7-1 7-1 6-1 7-1 6-2 7 M785 58l2 5 0 5 1 5 0 4 0 5 0 5 0 4-1 5 0 5 1 4 0 5 1 5 1 5 0 5 2 5 1 5 0 4 3 6 2 5 2 6 1 5 1 6 1 5-1 6-2 5-1 6-3 5-7 6-8 7-7 6-7 5-6 6-5 6-6 5-3 6-4 5-3 5-3 6-2 5-2 5-2 5-2 5-1 5-2 5-1 5-2 5-2 5-2 5-2 5-1 5-2 5-1 5-1 5-2 5-1 5-1 5-1 5-1 5-1 5-1 5 0 5 0 5 0 5 0 4-1 5 0 5-1 5 0 5-1 4 1 5 3 5 3 5 3 6 3 5 3 5 3 6 3 5 3 6 3 5 3 5 3 6 3 5 2 6 3 5 0 6 1 6 1 6 0 6 0 5 0 6 0 6 1 6 1 7 0 6 1 6 0 6 1 6 1 7 1 6 1 6 2 6 2 7 0 6 1 7 0 7 1 6 1 7 0 6-1 7 0 7-1 6-1 7-1 6-2 7-1 7-3 6-2 7-2 7-3 7-2 7-3 6-2 7-2 7-2 7-1 7-1 7-2 7-1 7 0 7-1 7 M773 219l-5 6-5 5-6 6-4 5-3 6-3 5-3 5-2 6-1 5-2 5-2 5-2 5-2 5-1 5-2 5-2 5-1 5-2 5-2 5-1 5-1 5-2 5-1 5-2 5-1 5-1 5-1 5-2 5 0 5 0 5 0 5 0 5-1 4 0 5-1 5 0 5-1 5-1 4 1 5 3 5 3 5 3 5 3 6 3 5 3 5 3 6 2 5 3 6 3 5 3 5 2 6 3 5 3 6 1 6 0 5 0 6 1 6 0 6 0 6 1 6 0 6 0 6 1 6 1 6 0 6 1 7 1 6 1 6 2 7 1 6 2 6 1 7 1 6 0 7 1 7 0 6 M802 145l3 6 2 5 1 6 2 5 0 6 1 5-2 6-1 6-2 5-7 6-7 7-7 6-6 5-5 6-5 6-5 6-3 5-3 5-4 6-3 5-1 5-2 5-2 5-2 5-2 6-1 5-1 5-2 5-1 5-3 5-1 5-2 5-1 5-2 5-2 5-1 5-1 5-1 5-1 5-2 5-1 5 0 5-1 5 1 5-1 4-1 5-1 5 0 5 0 5-2 4-1 5 1 4 3 6 3 5 3 5 3 5 3 6 3 5 2 5 4 6 2 5 3 5 3 6 2 5 3 6 2 5 1 6 0 6 1 6 0 6 0 5 0 6 1 6 0 6 1 7 0 6 1 6 1 6 0 6 2 6 0 7 2 6 1 6 2 7 1 6 1 7 1 6 0 7 0 7 0 6 0 7 0 6-1 7-1 7-1 6-2 7-2 7-2 6-2 7-3 7-2 7-2 7-2 7-3 7-2 6-2 7-2 7-1 7-1 7-1 7-1 7 0 7 M793 59l2 5 1 5 0 4 1 5 0 5-1 4 0 5 0 5 1 4 0 5 1 5 0 5 1 5 2 4 1 5 1 5 1 5 3 6 4 5 2 6 3 5 2 6 1 6 0 5-1 6-1 5-1 6-6 6-7 6-6 7-5 5-5 6-4 6-5 6-4 5-2 5-3 6-3 5-1 5-2 6-1 5-2 5-2 5-1 5-2 5-1 5-2 5-2 5-2 5-1 5-2 5-1 5-2 5-1 5-1 5-2 5-1 5-1 5-1 5-1 5-1 5 0 5 0 5-2 5 0 5-1 4 0 5-2 5-1 4 0 5 2 5 3 5 3 5 3 6 2 5 3 5 3 5 3 6 3 5 2 5 2 6 3 5 3 6 2 5 0 6 1 6 0 6 0 5 1 6 0 6 1 6 0 6 1 6 0 6 1 7 0 6 1 6 1 6 1 6 2 7 1 6 2 6 1 7 1 6 1 7 0 7 0 6 1 7-1 7 0 6-1 7-1 6-1 7-2 7-1 7-2 6-3 7-2 7-3 7-2 7-3 7-2 7-2 7-1 6-2 7-1 7-2 7-1 7-1 7 0 8 M828 180l-1 5 0 6-1 6-5 6-6 6-6 6-4 6-4 6-4 6-5 5-3 6-2 5-3 6-3 5 0 5-2 6-1 5-2 5-2 5-1 5-1 5-2 5-2 5-1 5-2 5-2 5-1 5-2 5-1 5-2 6-1 5-1 5-1 5-2 5-1 5-1 5-1 5 0 5-1 4-1 5-1 5-1 5-1 4-2 5-2 4 0 5 3 5 2 5 3 5 2 6 3 5 3 5 2 5 3 6 2 5 2 5 3 6 2 5 3 5 2 6 0 6 1 5 0 6 1 6 0 6 0 6 0 6 1 6 1 6 0 6 1 6 0 6 1 7 1 6 1 6 2 6 1 7 2 6 1 6 1 7 1 7 0 6 1 7 0 7 0 6 0 7-2 6-1 7-1 7-1 6-2 7-2 7-2 7-3 7-2 7-2 6-3 7-2 7-2 7-2 7-1 7-2 7-1 7-1 7-1 7-1 7 M803 233l-4 6-3 5-2 6-2 5-2 6-2 5-1 5-1 5-2 5-2 5 0 5-2 6-1 5-2 5-2 5-1 5-2 5-1 5-2 5-2 5-1 5-1 5-2 5-1 5-2 5-1 5-1 5 0 5-1 5 0 5-2 5-1 4-2 5-1 5-2 4-2 5 0 4 2 5 3 6 3 5 2 5 2 5 3 5 2 6 3 5 2 5 3 6 2 5 2 5 3 6 1 5 1 6 0 6 1 6 0 5 0 6 1 6 0 6 1 6 0 6 1 6 0 6 1 7 1 6 1 6 1 6 1 7 2 6 1 6 1 7 2 6 0 7 M801 59l3 5 0 5 1 5 1 4 0 5 0 5-1 4 1 5 0 5 1 5 0 4 1 5 2 5 1 5 2 5 2 5 1 5 4 5 4 6 4 5 2 6 4 6 2 5 1 6 0 6 0 5 0 6-5 6-5 7-5 6-4 6-4 5-3 6-4 6-3 6-2 5-2 5-2 6-1 5-1 5-2 5-2 6-1 5-1 5-1 5-2 5-1 5-2 5-2 5-2 5-1 6-2 5-1 5-1 5-2 5-1 5-1 5-2 5-2 5-1 5 0 5-1 5 0 5-2 4-1 5-2 5-1 4-2 5-2 4-1 5 2 5 3 5 2 5 3 5 2 6 2 5 3 5 2 5 2 6 3 5 2 5 2 6 2 5 3 5 0 6 0 6 1 6-1 6 1 5 0 6 1 6 0 6 0 6 1 7 1 6 0 6 1 6 1 6 1 7 2 6 2 6 1 6 1 7 2 6 0 7 1 7 1 6 0 7 0 6-1 7-1 7 0 6-2 7-1 7-1 7-3 6-2 7-3 7-2 7-2 7-2 7-3 7-2 7-2 7-1 7-2 7-1 7-1 7-1 7-1 7 M812 245l-2 5-2 6-3 5 0 5-1 6-1 5-2 5-1 5-2 5-1 5-2 5-1 6-2 5-1 5-2 5-1 5-2 5-1 5-2 5-1 5-2 5-1 5-2 5-1 5-1 5-1 5 0 5-1 5-2 5-2 4-1 5-1 5-3 4-2 5-2 4 3 5 2 5 2 5 3 6 3 5 2 5 2 5 2 6 3 5 2 5 2 5 2 6 2 5 2 6 0 5 1 6 0 6 0 6 1 6 0 6 0 6 1 6 0 6 1 6 0 6 1 6 1 6 1 6 1 7 2 6 2 6 1 6 1 7 1 7 1 6 1 7 1 6 0 7 0 7-1 6-1 7 0 7-2 6-1 7-1 7-3 7-2 7-2 6 M838 163l4 6 2 6 2 5 0 6 1 6 0 5-4 7-4 6-4 6-4 6-3 6-3 6-3 5-3 6-1 5-2 6-2 5-1 6-1 5-1 5-2 5-1 5-1 5-1 6-2 5-2 5-1 5-1 5-2 5-2 5-1 5-2 5-1 6-1 5-2 5-1 5-2 5-1 5-1 5-1 5 0 5-1 5-2 4-3 5-2 5-1 4-2 5-3 4-2 4 3 6 2 5 3 5 2 5 2 5 2 5 2 6 3 5 2 5 2 5 2 6 2 5 2 5 2 6 0 6 0 5 1 6 0 6 0 6 1 6 0 6 0 6 1 6 1 6 0 6 1 6 1 6 1 6 1 7 1 6 2 6 2 7 1 6 1 7 1 6 1 7 1 6 0 7 0 7-1 6 0 7-1 7-1 6-1 7-3 7-2 7-2 7-2 7-3 6-2 7-2 7-2 8-3 7-1 7-2 7-1 7-2 7-1 7 0 7-1 7 M824 256l-2 6-1 5-1 5-1 5-1 5-1 6-2 5-1 5-1 5-1 5-2 5-2 5-2 6-1 5-1 5-2 5-1 5-2 5-1 5-1 5-2 5-2 5-1 5 0 5-1 5-1 5-3 5-2 4-1 5-2 5-3 4-2 4-2 5 2 5 2 5 2 5 3 5 2 5 2 6 2 5 2 5 2 5 2 5 2 6 2 5 2 6 2 5 0 6 1 5 0 6 0 6 0 6 0 6 1 6 0 6 1 6 M810 59l3 5 1 5 1 5 0 4 0 5 0 5 0 4 0 5 1 5 1 5 0 4 1 5 2 5 2 5 2 5 2 5 2 5 4 5 6 6 4 6 4 5 4 6 3 6 2 5 1 6 2 6 0 5-3 7-4 6-3 6-3 6-3 6-2 6-3 6-2 5-1 6-2 5-2 6 0 5-1 5-1 5-2 5-1 6-1 5-1 5-1 5-2 5-1 5-2 6-1 5-2 5-2 5-1 5-1 5-2 5-1 5-1 6-2 5-2 4-1 5 0 5-1 5-1 5-3 5-2 4-2 5-2 5-3 4-3 5-2 4 2 5 2 5 2 5 2 5 3 5 2 6 1 5 2 5 2 5 3 6 1 5 2 5 2 6 2 5 0 6 0 6 0 5 1 6 0 6 0 6 0 6 1 6 1 6 0 6 1 6 0 6 1 6 1 7 2 6 1 6 1 6 2 7 1 6 2 7 1 6 1 7 1 6 0 7 0 7-1 6 0 7-1 7-1 6-1 7-3 7-2 7-1 7-3 7-2 7-3 7-2 7-2 7-2 7-2 7-1 7-1 7-2 7-1 7-1 7 0 7 M843 245l-2 6-1 5-2 6 0 5-1 5-1 5-1 6-1 5-1 5-1 5-2 5-1 5-2 6-1 5-2 5 0 5-2 5-2 5-1 5-2 5-1 6-1 5-2 5-2 5-1 5-1 5 0 5-2 4-3 5-2 5-2 4-2 5-4 4-3 5-2 4 2 5 2 5 2 5 2 5 2 6 2 5 2 5 2 5 2 5 2 6 1 5 2 5 2 6 1 5 1 6 0 6 0 5 1 6 0 6 0 6 1 6 0 6 0 6 1 6 0 6 1 6 1 6 1 7 1 6 1 6 2 6 2 7 1 6 1 7 2 6 1 7 1 6 0 7 0 7-1 6 0 7-1 7-1 6-1 7-2 7-2 7-2 7-2 7-3 7-2 7-3 7-2 7-2 7-1 7-2 7-1 7-1 7-2 7 0 7-1 7 M855 267l-1 5-1 5-1 5-1 6 0 5-2 5-1 5-1 5-2 6-1 5-1 5-2 5-2 5-1 5-1 6-2 5-1 5-1 5-2 5-2 5-2 5 0 5-1 5-2 5-2 4-3 5-3 5-2 4-4 5-4 4-2 4 2 5 1 5 2 5 2 6 2 5 2 5 2 5 1 5 2 5 1 6 1 5 2 5 2 6 1 5 1 6 0 5 0 6 0 6 0 6 0 6 1 6 0 6 1 6 0 6 1 6 1 6 0 6 2 6 1 7 2 6 1 6 M818 59l3 5 2 5 1 5 0 4 1 5 0 5 0 4 0 5 0 5 2 4 0 5 1 5 3 5 2 5 2 5 2 5 3 5 5 5 6 6 6 5 5 6 5 6 3 5 3 6 3 6 2 5 1 6-1 6-2 7-2 6-2 6-2 6-2 5-1 6-1 6-1 5-1 6-1 5 0 6-1 5 0 5-2 5 0 6-1 5-1 5-1 5-1 5-2 5-1 6-1 5-2 5-1 5-2 5-1 6-2 5 0 5-2 5-2 5-2 5-1 5-1 5-1 5-2 5-3 4-3 5-2 5-3 4-4 5-4 4-3 4 2 5 1 5 2 5 2 5 1 6 2 5 2 5 1 5 2 5 2 6 1 5 1 5 2 5 1 6 0 6 1 5 0 6 0 6 0 6 0 6 0 6 1 6 0 6 1 6 1 6 0 6 1 6 1 6 2 6 1 7 2 6 1 6 1 7 2 6 1 7 1 6 2 7 0 7-1 6 0 7 0 6-1 7-1 7-1 7-2 7-2 7-2 7-2 7-2 7-2 7-2 7-3 7-2 7-1 7-2 7-1 7-1 7-1 7-1 7 0 8 M880 216l-2 6-1 5-1 6-2 6 0 6-1 5-1 6-1 5 0 5 0 6-1 5-1 5-1 5-1 6 0 5-1 5-1 5-1 5-2 6-1 5-1 5-2 5-2 5-1 5-1 6-1 5-2 5-2 5-2 5-1 5-2 5-1 5-1 5-4 4-3 5-3 5-2 4-4 5-5 4-3 4 2 5 2 5 1 5 2 5 1 5 2 6 1 5 2 5 2 5 1 5 1 6 1 5 2 5 1 6 0 6 1 5 0 6-1 6 1 6 0 6 1 6 0 5 0 6 0 7 1 6 1 6 1 6 1 6 1 6 1 6 2 7 2 6 1 6 2 7 1 6 1 7 1 7 1 6-1 7 0 7 0 6-1 7-1 7-1 7 M879 174l3 6 3 5 3 6 2 6-1 6-2 6-1 6 0 6-2 6-1 6-1 6-1 5-1 6 0 5-1 6 0 5 0 5-1 6 0 5-1 5 0 5-1 5-2 6-1 5-1 5-1 5-1 6-1 5-2 5-2 5-1 5-1 5-1 6-2 5-2 5-2 5-1 5-1 5-2 5-1 5-4 4-3 5-4 4-2 5-4 4-5 5-4 4 2 5 1 5 2 5 1 5 2 5 1 5 2 6 1 5 2 5 1 5 1 5 1 6 2 5 1 6 0 5 0 6 0 6 0 6 0 5 0 6 1 6 0 6 1 6 0 6 1 6 1 6 0 7 2 6 1 6 1 6 2 6 1 7 2 6 1 7 2 6 1 7 1 6 0 7 0 7 0 6-1 7 0 7-1 6-1 7-2 7-2 7-2 7-2 7-2 7-2 7-2 7-2 8-2 7-2 7-1 7-1 7-2 7-1 7 0 7-1 7 M893 191l2 6 0 6-1 6-1 6-1 6-1 6-1 6-1 5-1 6 0 5 0 6-1 5 1 6-1 5 0 5-1 5-1 6 0 5-1 5-1 5-1 6-1 5-2 5-1 5-1 6-1 5-2 5-1 5-1 5-1 6-2 5-2 5-2 5-2 5-1 5-1 5-2 5-3 4-4 5-3 4-3 5-5 4-5 5-4 4 2 5 1 5 2 5 1 5 1 5 2 5 1 5 2 6 1 5 1 5 1 5 1 6 2 5 0 5 1 6 0 6 0 6 0 5 0 6 0 6 1 6 0 6 0 6 1 6 0 6 1 6 1 6 1 7 1 6 2 6 1 6 2 6 1 7 2 6 2 7 0 6 2 7 0 7 0 6 0 7-1 7-1 6 0 7-1 7-2 7-2 7-2 7-2 7-2 7-2 7-2 7-2 7-2 7 M827 59l3 5 1 4 1 5 1 5 0 4 0 5 1 5 0 4 1 5 1 5 1 5 2 4 2 5 2 5 2 5 3 5 3 5 6 6 8 5 6 6 6 5 6 6 4 6 4 5 4 6 3 6 3 5-1 6 0 7-1 6-1 6 0 5-1 6-1 6 0 6 0 5-1 6 0 5 1 5-1 6 0 5-1 5 0 5-1 6 0 5-1 5-2 5 0 6-1 5-2 5-1 5-2 5-1 6-1 5-2 5-1 5-1 5-2 5-2 5-2 5-1 5-1 5-2 5-4 5-3 4-4 5-3 5-5 4-5 4-4 5 1 5 1 5 2 5 1 5 1 5 2 5 1 5 1 5 1 6 1 5 1 5 1 5 1 6 1 5 0 6 1 6 0 5 0 6-1 6 1 6 0 6 0 6 1 6 0 6 1 6 0 6 2 6 1 6 1 6 1 7 1 6 2 6 2 6 1 7 2 7 1 6 1 7 1 6 0 7 0 7-1 6-1 7-1 7-1 7-2 7-1 7-2 7-2 7-2 7-2 7-2 7-2 7-2 7-1 7-1 7-2 8-1 7-1 7 0 7-1 7 M912 190l3 5 1 6 1 6 0 6 0 6 0 6 0 6 1 6 0 5 0 5 0 6 0 5 1 6 0 5 0 5 0 6-1 5 0 5-1 5 0 6-1 5-1 5-1 5-1 6-1 5-1 5-1 5-2 6-1 5-1 5-1 5-3 5-2 5-2 5-1 5-2 5-2 5-4 5-4 4-4 5-4 5-5 4-6 4-5 5 1 5 1 5 1 5 1 5 0 5 2 5 0 5 1 5 1 5 1 6 1 5 0 5 1 6 1 5 0 6 0 5 0 6 0 6 M834 58l4 5 2 5 1 4 0 5 1 5 0 4 0 5 0 5 1 4 2 5 1 5 2 5 2 5 3 4 3 5 3 5 3 5 7 6 8 5 7 6 7 5 7 6 6 5 4 6 5 5 4 6 3 6 1 6 1 6 0 6 1 6 1 5 0 6 0 6 0 5 1 6 0 5 1 6 0 5 0 5 0 6 0 5 0 5 0 5 0 6-1 5-1 5 0 5-2 6 0 5-2 5-1 6-1 5-1 5-1 5-1 6-2 5-2 5-2 5-2 5-1 5-2 5-3 5-4 4-4 5-5 5-3 4-6 5-6 4-5 4 0 5 2 5 1 5 0 5 1 5 0 5 2 6 1 5 0 5 1 5 0 5 0 6 1 5 1 6 0 5 0 6 0 6 0 6 0 5 0 6 1 6 0 6 0 6 1 6 0 6 1 6 0 6 2 7 1 6 1 6 2 6 1 6 2 7 1 6 2 7 1 6 2 7 0 6 0 7 0 7 0 6-1 7-1 7 0 7-2 7-2 7-1 7-2 7-1 7-3 7-1 7-2 8-2 7-1 7-1 7-1 7-1 7-1 7 0 8-1 7 M921 189l4 5 1 6 1 6 1 6 1 6 1 6 0 6 0 5 1 6 1 5 1 6 0 5 1 5 0 6 0 5 0 5 0 5 0 6-1 5 0 5-1 6-1 5 0 5-1 5-1 6-1 5-2 5-1 5-1 6-1 5-1 5-3 5-2 5-1 5-2 5-2 5-3 5-4 5-4 4-5 5-4 5-6 4-6 5-6 4 1 5 1 5 0 5 1 5 1 5 1 5 0 5 1 5 1 6 0 5 1 5 0 5 1 6 1 5 0 6 0 6-1 5 0 6 0 6 0 6 1 6 0 6 0 6 1 6 0 6 1 6 1 6 1 6 1 6 1 6 1 6 2 7 2 6 2 7 1 6 1 7 1 6 1 7 0 6 0 7 0 7-1 7-1 6 0 7-1 7-2 7-2 7-1 7-2 7-2 8-2 7-2 7-1 7-1 7-2 8 0 7-1 7-1 7-1 7 0 7 M890 155l7 6 8 5 6 6 5 5 5 6 5 5 3 6 2 6 1 6 2 6 1 6 1 5 0 6 1 6 1 5 1 5 0 6 1 5 1 6 0 5 1 5-1 5 0 6 1 5-1 5 0 6-1 5 0 5-1 5-1 6-1 5-1 5-1 6-2 5-1 5-1 5-1 6-2 5-3 5-2 5-1 5-2 5-2 5-5 4-4 5-5 4-4 5-6 5-7 4-6 4 1 5 1 5 0 5 1 5 0 5 1 5 0 6 1 5 0 5 1 5 0 5 1 6 0 5 1 6 0 5 0 6-1 6 0 6 0 5 0 6 1 6 0 6 0 6 1 6 0 6 0 6 2 6 1 6 0 7 2 6 1 6 2 6 2 7 1 6 2 7 1 6 1 7 1 6 0 7 0 6 0 7-1 7-1 7 0 7-2 7-1 7-2 7-1 7-2 7-1 7-2 7-2 8-1 7-2 7-1 7-1 7 0 7-1 8-1 7 0 7 M934 193l2 6 2 6 2 6 1 6 1 5 1 6 0 6 1 5 1 6 1 5 1 6 1 5 1 5 0 5 0 6 0 5 0 5 0 5 0 6-1 5-1 5-1 6 0 5-1 5-1 6-2 5-1 5-1 5 0 6-2 5-2 5-2 5-2 5-2 5-2 5-3 5-5 5-4 4-4 5-5 4-6 5-7 4-6 5 0 5 0 5 1 5 0 5 1 5 1 5 0 5 0 5 1 5 0 6 1 5-1 5 1 6 1 5 0 6-1 5 0 6 0 6 0 6 0 6 0 6 1 6 0 6 0 6 1 6 0 6 1 6 1 6 1 6 2 6 1 6 M841 57l5 5 1 5 1 4 1 5 1 5 0 4 0 5 0 5 1 4 2 5 1 5 2 5 3 5 3 4 2 5 4 5 4 5 8 5 8 6 9 5 7 6 8 5 6 6 5 5 6 6 5 5 4 6 2 6 2 5 3 6 1 6 1 6 1 5 2 6 0 5 2 6 1 5 1 6 1 5 0 5 1 5 0 6 0 5 0 5 0 6 0 5-1 5 0 5-1 6 0 5-1 5-1 6-1 5-2 5 0 6-1 5-2 5-2 5-2 5-3 5-1 5-2 5-3 5-5 5-5 5-4 4-5 5-7 4-7 5-6 4 0 5 1 5 0 5 1 5 0 5 1 5 0 5 0 6 0 5 0 5 1 5 0 6 0 5 0 5 1 6-1 6 0 6 0 5 0 6 0 6 0 6 0 6 0 6 1 6 0 6 1 6 1 6 1 6 1 6 1 7 1 6 2 6 2 6 2 7 1 6 2 7 1 6 1 7 0 6 0 7-1 7 0 7-1 6 0 7-2 7-1 7-1 7-1 8-2 7-2 7-1 7-2 7-1 8-2 7 0 7-2 7 0 7-1 7 0 8-1 7 M945 198l2 6 3 6 1 5 2 6 1 6 1 5 1 6 2 5 1 5 1 6 2 5 0 5 0 6 1 5 0 5 0 5 1 6-1 5 0 5-1 6-1 5 0 5-1 6-1 5-1 5-1 5-1 6 0 5-2 5-2 5-3 5-2 5-1 6-2 5-3 4-5 5-6 5-4 4-5 5-7 5-7 4-7 4 1 5 0 5 0 5 0 5 1 5 0 6 0 5 0 5 0 5 0 5 0 6 0 5 1 5 1 6-1 6 0 5 0 6 0 6-1 6 0 5 0 6 1 6 0 6 1 6 0 6 0 6 1 6 1 7 1 6 2 6 1 6 1 6 2 7 2 6 1 6 2 7 2 7 0 6 0 7 0 6 0 7-1 7 0 7-1 7-1 7-1 7-1 7-2 7-1 7-2 7-1 7-2 8-1 7-1 7-2 7 0 8-1 7-1 7 0 7 0 7 M917 164l8 6 6 5 5 5 6 6 4 5 3 6 3 6 3 6 2 6 1 5 2 6 1 5 1 6 2 5 1 5 1 6 2 5 1 5 0 6 1 5-1 5 1 5 1 6-1 5-1 5 0 6 0 5-1 5 0 6-1 5-1 5-1 5-1 6-1 5-1 5-2 5-3 6-2 5-2 5-2 5-3 5-5 4-5 5-5 5-5 4-7 5-8 4-7 5 0 5 0 5 1 5 0 5 0 5 0 5 0 5 1 5 0 5 0 6-1 5 0 5 1 6 0 5 0 6-1 6 0 5 0 6 0 6 0 6 0 6 0 6 0 6 1 6 0 6 1 6 1 6 1 6 1 6 1 6 1 6 2 6 2 7 1 6 1 7 2 6 2 7 1 6 0 7-1 7 0 6 0 7 0 7-1 7-1 7-1 7-2 7-1 7-2 7-1 8-1 7-2 7-1 7-1 7-1 8-1 7 0 7-1 7-1 7 0 7 M972 252l2 5 1 5 0 6 1 5 0 5 1 5 0 6 0 5 0 5-1 6 0 5 0 5-1 6-1 5-1 5-1 6-1 5-1 5-1 5-2 6-2 5-3 5-2 5-1 5-4 5-5 4-6 5-4 5-6 4-7 5-8 4-7 5 0 5 0 5 1 5-1 5 0 5 0 5 1 5-1 5 0 6 0 5 0 5 0 6 0 5 0 5 0 6 0 6 0 6 0 5-1 6 0 6 0 6 M980 239l2 5 2 6 2 5 1 5 1 5 0 6 1 5 0 5 0 6 1 5 0 5 0 5-1 6 0 5 0 6-1 5-1 5-1 5-1 6-1 5-1 5-2 6-3 5-2 5-1 5-2 5-4 5-6 4-5 5-6 5-5 5-8 4-8 5-8 4 0 5 0 5 0 5-1 5 0 5 0 5 0 6 0 5 0 5-1 5 0 6-1 5 1 5 0 6 0 6-1 5 0 6 0 6-1 6 0 6 0 6 1 5-1 6 1 6 0 6 1 6 1 6 0 7 1 6 1 6 2 6 1 6 2 7 1 6 2 6 2 7 2 6 0 7 0 7 0 6 0 7 0 7-1 7 0 6-1 7-1 8-1 7-1 7-1 7-1 7-1 7-1 8-1 7-2 7-1 7 0 8-1 7-1 7 0 7 0 7 M903 146l8 5 9 6 8 5 9 5 6 5 6 6 6 5 6 5 4 6 3 6 4 5 3 6 2 5 3 6 2 5 2 6 2 5 2 5 1 6 2 5 1 5 1 5 1 6 1 5 0 5 1 5 0 6 0 5-1 5 1 6-1 5 0 5-1 6-1 5-1 5 0 6-1 5-1 5-2 5-3 6-2 5-2 5-2 5-3 5-6 4-6 5-6 5-6 5-7 4-8 5-8 4-1 5 0 5 0 5-1 5 0 5 0 6 0 5 0 5-1 5-1 6 0 5 0 5 0 6-1 5 0 6 0 6 0 5-1 6 0 6 0 6 0 6 0 6 0 6 1 6 0 6 0 6 1 6 1 6 1 6 1 6 1 6 2 6 1 7 2 6 2 7 2 6 1 7 1 6 0 7 0 6 0 7-1 7 0 7 0 7-1 7-1 7-1 7-1 7-1 7-1 7-1 8-1 7-2 7 0 7-1 8-1 7 0 7-1 7 0 7 0 7 M976 205l3 5 2 5 3 6 2 5 2 6 2 5 2 5 2 5 3 6 0 5 1 5 1 5 1 6 0 5 1 5 0 5 1 6 0 5 0 5 0 6-1 5-1 6 0 5-1 5-1 5 0 6-1 5-3 5-2 5-2 6-2 5-2 5-4 5-6 4-6 5-6 5-6 5-8 4-8 5-9 4 0 5 0 5-1 5 0 5 0 6-1 5 0 5 0 5-1 5 0 6-1 5-1 5 0 6 1 5-1 6 0 6-1 6 0 5-1 6 0 6 1 6-1 6 1 6 0 6 0 6 1 6 0 6 1 6 2 6 0 6 1 6 2 7 2 6 1 6 2 7 2 6 1 7 1 6 1 7-1 6 0 7 0 7 0 7 0 7-1 7-1 7-1 7-1 7-1 7-1 7-1 8 M999 234l2 6 2 5 3 5 1 5 1 6 1 5 1 5 1 5 0 6 1 5 1 5 0 6 0 5 0 5 0 6-1 5 0 5-1 6-1 5 0 5-1 6-3 5-2 5-3 5-2 5-2 5-4 5-6 5-6 5-6 5-6 4-8 5-9 5-9 4-1 5 0 5-1 5 0 6-1 5 0 5-1 5 0 5-1 6-1 5-1 5 0 6-1 5 0 6 0 5-1 6 0 6-1 6 0 5 0 6 0 6 0 6 0 6 0 6 1 6 0 6 1 6 1 6 1 6 0 6 2 7 0 6 2 6 3 6 1 7 2 6 1 7 1 6 0 7 1 7 0 6-1 7 0 7 0 7-1 7 0 7-1 7-1 7-1 7-1 8-1 7 0 7-1 8-1 7-1 7 0 7-1 7 0 8-1 7 1 7 M1002 222l3 5 2 5 2 5 3 5 2 6 2 5 1 5 1 5 1 5 1 6 1 5 1 5 0 6 0 5 1 5 0 6 0 5-1 5 0 6-1 5 0 5-1 6 0 5-3 5-2 5-3 6-2 5-2 5-4 5-6 5-7 5-7 4-6 5-8 5-9 5-10 4 0 5-1 5-1 5-1 6-1 5 0 5-1 5-1 5-1 6-1 5-1 5 0 6 0 5-1 6 0 5-1 6 0 6-1 6-1 6 M856 53l5 5 3 5 0 4 1 5 1 5 0 4 0 5 1 5 1 4 2 5 2 5 2 4 3 5 3 5 4 4 5 5 4 5 9 5 11 5 10 5 9 5 9 5 9 5 7 5 7 5 7 5 6 5 5 6 5 5 5 5 4 6 3 5 3 5 3 5 3 6 3 5 2 5 2 5 3 5 1 5 1 6 2 5 1 5 1 5 1 6 1 5 0 5 1 5 0 6 0 5 1 6-1 5-1 5 0 6-1 5 0 5-1 6-2 5-2 5-3 5-2 5-2 6-4 5-7 4-6 5-7 5-6 5-9 5-9 4-10 5-1 5 0 5-1 5-1 5-1 6-1 5-1 5-1 5 0 6-1 5-1 5-2 6 0 5 0 6 0 6-1 5-1 6 0 6-1 6 0 6 0 5 0 6 1 6-1 6 0 6 1 6 0 6 1 6 1 6 1 7 1 6 1 6 2 6 2 7 1 6 2 6 2 7 1 6 0 7 0 7 0 6 0 7 0 7 0 7 0 7-1 7-1 7 0 7-1 7 0 8-1 7-1 7-1 8 0 7 0 7-1 7 0 8-1 7 1 7-1 7 M975 177l6 5 5 5 5 5 6 5 4 5 3 6 3 5 4 5 3 5 2 5 3 5 2 5 3 5 2 6 1 5 2 5 1 5 1 5 1 6 1 5 1 5 0 6 1 5 1 5 0 6-1 5 0 5 0 6-1 5 0 5 0 6-3 5-2 5-3 5-2 6-2 5-5 5-6 5-7 5-6 5-7 4-9 5-10 5-9 5-2 5-1 5-1 5-1 5-1 5-1 6-1 5-1 5-1 6-1 5-1 5-2 6 0 5 0 6-1 6-1 5 0 6-1 6 0 6 0 6 0 6-1 5 1 6 0 6 0 6 0 6 1 6 0 6 1 7 1 6 1 6 1 6 2 6 1 7 2 6 2 6 1 7 1 6 1 7 0 7 0 6 0 7 0 7 0 7 0 7-1 7 0 7 0 7-1 7 0 8-1 7-1 7 0 8 0 7-1 7 0 7 0 7 0 8-1 7 1 7 M991 184l5 5 6 5 4 5 4 5 4 5 3 5 3 5 3 5 2 5 4 5 3 5 1 5 2 5 1 6 2 5 1 5 2 5 1 5 1 6 1 5 1 5 0 6 1 5-1 6 1 5-1 5 0 6 0 5 0 5-3 6-2 5-3 5-2 5-2 5-5 6-7 5-7 5-7 4-7 5-9 5-11 5-9 5-2 5-1 5-1 6-2 5-1 5-1 5-2 6 0 5-2 5-1 6-2 5-1 6 0 5-1 6 0 6-2 5 0 6-1 6-1 6 1 6-1 6 0 5 1 6 0 6-1 6 1 6 0 6 1 6 0 7 1 6 1 6 1 6 2 6 1 6 2 7 2 6 1 7 1 6 0 7 0 6 1 7 0 7 0 7 0 7 0 7 0 7 0 7 0 7-1 7 0 7 0 8 0 7-1 7 0 8 0 7 0 7 0 7 0 7 0 7 0 8 M1031 231l3 5 2 5 2 5 2 6 1 5 2 5 2 5 1 5 1 6 1 5 1 5 1 6 1 5 0 5-1 6 0 5 0 5 1 6-1 5-2 5-3 6-2 5-2 5-3 5-4 6-8 5-7 5-7 5-7 5-9 5-11 5-10 5-2 5-1 5-2 5-1 5-1 6-2 5-1 5-2 6-1 5-2 6-1 5-1 6-1 5 0 6-2 6 0 5-1 6-1 6 0 6 0 6-1 5 1 6-1 6 0 6 0 6 0 6 1 6 1 6 0 6 1 7 0 6 1 6 2 6 2 6 1 7 2 6 1 7 1 6 1 7 0 6 0 7 0 7 1 7 0 6 0 7 1 8-1 7 0 7 0 7 0 7 0 8 0 7 0 7 0 7-1 8 0 7 0 7 M860 50l5 5 2 5 1 4 2 5 0 4 0 5 0 5 1 4 1 5 2 4 2 5 2 5 4 4 3 5 4 5 5 4 4 5 10 5 11 4 10 5 10 5 10 4 9 5 7 5 8 4 8 5 6 5 6 5 6 5 5 4 5 5 4 5 4 5 3 5 3 5 3 5 3 5 3 5 3 5 3 5 1 5 2 5 2 5 1 5 2 6 1 5 2 5 1 5 1 6 1 5 0 5 1 6-1 5 1 6-1 5 0 5 0 6-2 5-3 5-2 5-2 6-3 5-4 5-7 5-8 5-7 5-7 5-10 5-10 5-11 5-1 6-2 5-1 5-1 5-2 5-1 6-2 5-2 6-1 5-2 5-1 6-2 5 0 6-1 6-1 5 0 6-1 6 0 6-1 6-1 6 0 5 0 6 0 6 0 6 0 6 0 6 0 6 1 6 0 6 1 7 1 6 1 6 1 6 2 6 2 7 1 6 2 6 0 7 1 7 0 6 0 7 1 7 0 6 1 7 0 7 0 7 0 8 0 7 0 7 0 7 0 7 0 8 0 7 0 7 0 8 0 7 0 7 0 7 0 7 0 7 M919 137l10 5 10 4 10 5 9 4 8 5 8 5 7 4 7 5 5 5 6 4 6 5 5 5 3 5 4 4 4 5 3 5 3 5 3 5 3 5 3 5 2 5 2 5 2 5 2 5 2 5 2 5 1 6 1 5 2 5 1 6 1 5 1 5 0 6 0 5 1 5 0 6 0 5-1 5-2 6-2 5-3 5-2 6-2 5-5 5-7 5-8 5-6 5-8 5-10 6-11 5-10 5-2 5-2 5-1 5-2 6-2 5-1 5-1 6-2 5-2 6-1 5-2 6-2 5 0 6-1 6-1 5 0 6-1 6-1 6-1 6 0 5 0 6 0 6 0 6-1 6 0 6 0 6 0 6 1 6 1 6 0 6 1 7 0 6 2 6 2 6 1 7 2 6 2 6 0 7 1 6 0 7 0 7 1 6 0 7 0 7 1 7 0 7 1 7-1 7 1 8 0 7 0 7 0 7 0 8 0 7 0 7 1 7 0 8-1 7 0 7 1 7 M859 49l6 4 2 5 1 5 1 4 1 5 0 4 0 5 1 4 1 5 2 5 1 4 3 5 3 4 4 5 4 5 5 4 4 5 9 4 12 5 10 4 10 5 9 4 9 5 8 4 8 5 8 5 6 4 6 5 6 4 5 5 5 4 4 5 3 5 4 4 4 5 2 5 4 5 3 5 3 5 2 5 2 5 2 5 2 5 2 5 2 5 2 5 1 6 2 5 1 5 1 6 1 5 1 5 0 6 0 5 0 5 0 6 0 5-2 5-2 6-3 5-2 5-2 6-5 5-7 5-8 5-7 5-7 6-10 5-11 5-11 5-2 5-2 6-1 5-2 5-2 6-2 5-1 5-2 6-2 5-1 6-2 6-1 5-1 6-1 6-1 5 0 6-2 6-1 6 0 6 0 5-1 6 0 6 0 6 0 6-1 6 1 6 0 6 0 6 1 6 0 6 1 7 0 6 2 6 2 6 1 6 2 7 1 6 1 7 1 6 0 7 1 7 0 6 1 7 0 7 0 7 1 7 0 7 0 7 1 7 0 8 0 7 0 7 0 7 1 8 0 7 0 7 0 7 0 7 1 8 0 7 M1008 189l4 5 4 4 3 5 4 5 3 5 3 4 3 5 3 5 2 5 3 5 2 5 2 5 2 6 2 5 1 5 2 5 1 5 2 6 1 5 1 5 0 6 1 5 0 5 0 6 1 5 0 6-3 5-2 5-2 5-2 6-3 5-4 5-8 6-7 5-8 5-7 5-10 5-11 6-11 5-2 5-2 5-1 6-2 5-2 5-2 6-2 5-1 6-2 5-1 6-2 5-2 6-1 6 0 5-1 6-1 6-1 6-1 6-1 5 0 6 0 6 0 6-1 6 0 6 0 6 0 6 0 6 1 6 0 6 M758 52l2 2 5 1 8 1 11 1 12 0 13 0 14 0 12 0 11-1 8-1 5-1 2-2 M758 62l2 1 5 1 9 1 11 1 14 1 14 0 14 0 13-1 12-1 8-1 6-1 2-1 M758 66l2 2 5 1 9 1 12 1 13 0 14 1 15-1 13 0 12-1 8-1 6-1 2-2 M758 71l2 1 5 1 9 2 12 1 13 0 15 0 14 0 14 0 11-1 9-2 6-1 2-1 M757 75l2 2 6 1 9 1 11 1 14 1 15 0 14 0 14-1 11-1 9-1 6-1 2-2 M757 80l2 1 5 2 9 1 12 1 14 0 15 1 14-1 14 0 12-1 9-1 5-2 2-1 M756 89l2 2 6 1 9 1 12 1 14 1 15 0 15 0 14-1 12-1 9-1 5-1 2-2 M756 121l3 2 6 2 11 1 14 1 16 1 18 0 17 0 17-1 14-1 10-1 7-2 2-2 M756 135l3 2 8 2 12 2 16 1 19 1 21 0 20 0 19-1 16-1 13-2 8-2 2-2 M754 144l3 3 9 2 14 2 19 1 22 1 23 0 23 0 22-1 19-1 14-2 9-2 3-3 M752 149l3 2 10 3 15 2 20 1 23 1 25 0 25 0 23-1 20-1 15-2 10-3 3-2 M738 167l4 3 12 3 19 3 25 2 29 1 31 0 31 0 29-1 24-2 19-3 12-3 4-3 M734 172l4 3 12 3 20 3 26 2 31 1 32 1 33-1 30-1 26-2 20-3 13-3 4-3 M701 186l5 4 15 3 24 4 31 2 37 2 39 0 38 0 37-2 31-2 24-4 15-3 5-4 M681 195l6 5 16 4 27 3 34 3 40 1 42 1 43-1 40-1 34-3 26-3 17-4 5-5 M657 210l7 4 18 5 29 3 38 3 44 2 47 1 47-1 44-2 38-3 29-3 18-5 6-4 M648 219l6 5 19 5 31 4 39 3 46 1 49 1 49-1 46-1 40-3 30-4 19-5 7-5 M643 224l7 5 19 5 31 4 40 3 47 2 50 0 51 0 47-2 40-3 31-4 19-5 7-5 M640 229l6 5 20 5 32 4 41 3 47 2 51 0 51 0 48-2 41-3 31-4 20-5 7-5 M636 238l7 6 20 4 32 5 42 3 48 2 53 1 52-1 49-2 41-3 32-5 21-4 7-6 M634 243l7 6 20 4 33 5 42 3 49 2 53 1 52-1 50-2 42-3 32-5 20-4 7-6 M628 268l7 5 21 5 34 5 44 3 51 2 54 1 55-1 51-2 43-3 34-5 21-5 7-5 M627 273l7 5 22 5 33 5 44 3 52 2 54 1 55-1 52-2 44-3 33-5 21-5 8-5 M626 278l8 5 21 5 34 5 44 3 51 2 56 1 55-1 51-2 45-3 33-5 22-5 7-5 M625 293l7 5 22 6 34 4 45 4 52 2 55 0 56 0 52-2 45-4 34-4 22-6 7-5 M624 298l8 6 21 5 35 4 44 4 53 2 56 1 55-1 53-2 44-4 35-4 21-5 8-6 M624 303l8 6 21 5 35 4 44 4 53 2 56 1 56-1 52-2 45-4 34-4 22-5 7-6 M623 324l8 5 21 5 35 5 45 3 52 2 56 1 56-1 52-2 45-3 34-5 22-5 7-5 M626 355l7 5 21 5 32 5 43 3 50 2 53 1 53-1 50-2 43-3 32-5 21-5 7-5 M628 366l6 5 20 5 31 4 41 3 48 2 51 0 51 0 48-2 41-3 32-4 19-5 7-5 M630 382l6 5 18 4 29 4 38 3 45 2 47 0 47 0 45-2 38-3 29-4 18-4 6-5 M662 443l5 4 16 3 23 4 32 2 36 1 39 1 39-1 36-1 32-2 24-4 15-3 5-4 M758 53l0 4 0 5 0 5 0 4 0 5-1 4 0 5-1 5 0 4 0 5 1 4-1 5 0 5 1 4-1 5 0 5 0 4 1 5-1 4-2 5-2 5-2 4-2 5-4 5-5 4-5 5-8 5-13 5-12 4-11 5-8 5-8 5-9 4-7 5-4 5-6 5-4 5-4 5-1 4-2 5-2 5-2 5-1 5-1 5-1 5-1 5-1 5-1 5 0 5-1 5-1 5 0 5 0 5 M759 53l-1 5 1 4 0 5-1 5 0 4 0 5-1 4-1 5 1 5 0 4 0 5 0 4 0 5 0 5 0 4 0 5 0 5 0 4 0 5-2 5-2 4-2 5-2 5-5 4-4 5-5 5-8 5-12 5-12 4-11 5-9 5-8 5-8 5-8 4-4 5-5 5-5 5-3 5-2 5-2 5-2 4-2 5-1 5-1 5 0 5-1 5-1 5-1 5-1 5 0 5-1 5 M759 53l0 5 0 5 0 4 0 5 0 5-1 4 0 5-1 4 0 5 0 5 1 4 0 5 0 4 0 5 0 5 0 4 0 5 0 5 0 5-2 4-2 5-2 5-3 4-3 5-5 5-5 5-8 5-12 4-12 5-10 5-9 5-8 5-8 5-7 5-5 4-4 5-6 5-3 5-1 5-2 5-2 5-2 5-1 5-1 4-1 5-1 5 0 5-2 5 0 5-1 6 0 5 0 5-1 5 0 5 0 5 M761 54l0 5 0 4 0 5 0 5 0 4-1 5 0 4 0 5 0 5-1 4 1 5 0 5 0 4 0 5 0 5 0 4 0 5 1 5 0 5-2 4-2 5-1 5-2 5-4 5-5 4-4 5-9 5-11 5-11 5-11 5-8 5-8 5-8 5-7 5-4 5-5 5-5 4-3 5-1 5-2 5-2 5-2 5-1 5 0 5-2 5 0 5-1 5-1 5-1 5 0 5-1 5 0 5 0 5 0 5 0 6-1 5 M762 54l1 5 0 5 0 4-1 5 0 5-1 4 0 5 0 4 0 5 0 5 0 4 1 5 0 5 0 4 0 5 0 5 0 4 0 5 1 5-2 5-1 5-2 5-2 4-4 5-4 5-4 5-8 5-11 5-12 5-11 5-7 5-8 5-8 5-6 5-5 5-5 5-4 5-3 5-2 4-2 5-1 5-2 5-1 5-1 5-1 5-1 5 0 5-1 5-1 5-1 5 0 5 0 6 0 5 0 5 0 5 M764 55l0 4 0 5 0 5 0 4-1 5 0 4 0 5-1 5 1 4 0 5 0 5 0 4 1 5-1 5 1 4 0 5 0 5 0 5 1 5-1 4-2 5-1 5-2 5-4 5-3 5-5 5-8 5-11 5-11 5-10 5-8 5-7 5-8 5-7 5-4 5-4 5-5 5-3 5-1 5-2 5-2 4-2 5-1 5 0 5-1 5-1 5-1 5-1 5 0 6-1 5 0 5 0 5 0 5-1 5 0 5 0 5 0 5 0 6 0 5 0 5 M767 55l1 5 0 5 0 4-1 5 0 4 0 5 0 5-1 4 0 5 0 5 1 4 0 5 1 5-1 4 1 5 0 5 1 5 1 5 1 4-1 5-1 5-2 5-2 5-2 5-4 5-3 5-8 5-11 5-10 5-10 6-7 5-7 5-8 5-6 5-4 5-4 5-4 5-3 5-2 5-1 5-2 5-1 5-1 5-1 5-1 5 0 5-1 5-1 5 0 5-1 5 0 5 0 5-1 5 M769 55l0 5 0 5 0 4 1 5-1 5 0 4-1 5 0 5 0 4 0 5 1 5 1 4 0 5 0 5 1 4 0 5 0 5 2 5 0 5 0 5-1 5-1 5-1 5-3 5-4 5-3 5-8 5-10 5-9 5-10 5-7 5-7 6-7 5-6 5-4 5-4 5-5 5-2 5-1 5-2 5-2 5-1 5-1 5 0 5-1 5-1 5 0 5-1 5-1 5 0 5 0 5 M771 56l1 4 0 5 0 5 0 4-1 5 0 5 0 4 0 5 0 5 0 4 1 5 0 5 0 4 0 5 1 5 0 5 1 4 2 5 1 5-1 5 0 5 0 5-2 5-3 5-3 5-3 5-7 5-9 6-10 5-10 5-6 5-7 5-7 6-6 5-4 5-4 5-4 5-2 5-1 5-2 5-1 5-2 5-1 5 0 5 0 5-1 5-1 5 0 5-1 5 0 5-1 5 M773 56l1 5 0 4 0 5 0 5 0 4-1 5 0 5 0 4 0 5 1 5 0 4 0 5 1 5 1 4 0 5 1 5 1 5 1 5 1 5 0 5 0 5 0 5-1 5-3 5-2 5-4 5-6 5-9 5-10 6-9 5-7 5-6 5-6 5-6 5-4 6-4 5-3 5-2 5-2 5-1 5-2 5-1 5 0 5-1 5-1 5 0 5-1 5 0 5-1 5 0 5 0 5 M775 56l1 5 1 5 0 4 0 5 0 5-1 4-1 5 1 4 0 5 0 5 1 4 0 5 1 5 0 5 1 4 1 5 1 5 1 5 2 5 0 5 1 5 0 5-1 5-2 5-3 5-3 5-6 6-9 5-9 5-8 6-7 5-6 5-6 5-6 5-4 5-2 5-4 5-3 6-1 5-1 5-1 5-1 5-1 5 0 5-1 5 0 5-1 5 0 5-1 5 0 5 0 5-1 5 0 5 1 5-1 6 0 5 M778 56l1 5 0 5 0 4 1 5-1 5-1 4 0 5 1 5 0 4 0 5 0 5 1 4 1 5 1 5 1 5 0 4 1 5 2 5 2 5 1 5 0 5 0 6 0 5-2 5-2 5-3 5-6 5-8 5-9 6-8 5-6 5-6 6-6 5-5 5-3 5-4 5-3 5-2 5-1 5-1 5-1 5-1 5-1 5 0 5-1 5 0 5-1 6 0 5 0 5-1 5 0 5 0 5 0 5 0 5 0 5 0 6 M783 57l2 5 0 4 0 5 0 5 0 4 0 5-1 4 0 5 1 5 0 4 1 5 1 5 1 5 1 4 1 5 1 5 1 5 3 5 2 5 1 5 1 5 1 5 0 5-1 5-2 6-2 5-5 5-7 5-8 6-8 5-5 6-5 5-6 5-4 5-3 5-3 5-2 6-2 5-1 5-1 5-1 5-1 5 0 5-1 5 0 5 0 5-1 5 0 5 0 5 0 5 0 5 0 6 0 5-1 5 0 5 M789 57l2 5 0 5 1 4-1 5 0 4 0 5 0 5 0 4 1 5 0 5 1 4 1 5 1 5 1 5 1 5 1 4 2 5 4 5 2 5 2 6 2 5 1 5 1 5-1 5-1 5-1 6-4 5-7 5-6 6-7 5-4 6-5 5-5 5-4 5-2 5-2 6-3 5-1 5-1 5 0 5-1 5-1 5 0 5 0 5-1 5 1 5-1 5 0 5 0 5 0 6 0 5 0 5 0 5-1 5 1 5 0 5 M792 57l2 5 0 5 0 4 1 5 0 5-1 4 0 5 0 5 1 4 1 5 0 5 1 4 1 5 2 5 1 5 1 4 3 5 3 5 3 6 3 5 1 5 2 5 1 5 0 5-1 6 0 5-4 5-6 6-6 5-6 6-5 5-4 5-4 5-4 6-2 5-2 5-3 5 0 5-1 5-1 5-1 5 0 5 0 6 0 5 0 5 0 5 0 5-1 5 0 5 0 5 0 5 0 5 0 5 0 5 0 6 M795 57l2 5 1 5 0 4 0 5 0 5 0 4-1 5 1 5 1 4 0 5 1 5 1 4 1 5 1 5 2 5 2 5 2 5 4 5 3 5 3 5 2 5 2 5 1 5 1 6 0 5-1 5-3 5-6 6-5 5-6 6-4 5-4 6-4 5-3 5-2 5-2 5-2 6-1 5 0 5 0 5-1 5-1 5 0 5 0 5 1 5-1 5 0 5 0 5 0 5 1 6-1 5 0 5 0 5 0 5 0 5 M798 57l3 5 0 5 0 5 0 4 0 5 0 4 0 5 0 5 1 4 0 5 1 5 2 5 1 4 1 5 2 5 2 5 2 5 5 5 4 5 2 5 3 5 3 5 1 6 1 5 0 5 0 5-3 6-5 5-5 6-5 5-4 5-4 6-3 5-3 5-1 6-2 5-2 5-1 5 0 5-1 5 0 5 0 5 0 5 0 5 0 5 0 5 0 5 0 6 0 5 0 5 1 5-1 5 0 5 1 5-1 5 0 6 0 5 M801 57l3 5 0 5 1 5 0 4 0 5-1 5 1 4-1 5 2 4 0 5 1 5 2 5 1 4 1 5 2 5 2 5 3 5 4 5 5 5 3 5 3 5 3 6 2 5 1 5 0 5 1 5-3 6-4 5-5 6-5 5-3 6-3 5-3 5-3 6-1 5-2 5-1 5-1 5 0 5 0 5 0 5-1 5 0 5 1 6 0 5 0 5 1 5-1 5 0 5 1 5 0 5 0 5 0 5 0 6 0 5-1 5 0 5 M804 57l3 5 1 5 0 5 0 4 0 5 0 5 0 4 1 5 0 5 1 4 1 5 1 5 2 4 1 5 2 5 3 5 2 5 5 5 5 5 4 5 3 5 3 6 2 5 1 5 1 5 1 5-2 6-4 5-4 6-3 5-3 6-3 5-3 5-2 6-2 5-1 5-1 5 0 5 0 5-1 5 0 6 0 5 1 5 0 5 0 5 0 5 1 5 0 5 0 5 0 5 0 5 0 5 0 6 M811 57l3 5 0 5 1 5 1 4 0 5-1 5 0 4 0 5 1 5 1 4 2 5 1 5 2 4 2 5 2 5 2 5 3 5 6 5 6 5 4 5 4 5 4 6 3 5 2 5 1 5 2 6-1 5-3 5-3 6-2 6-3 5-2 5-1 6-2 5-1 5-1 5-1 5 1 5 0 6 0 5 0 5 0 5 1 5 0 5 0 5 1 5 0 5 0 5 1 5 0 5 0 5 0 6 0 5 0 5 1 5 0 5 M814 57l3 5 1 5 1 5 0 4 0 5 0 5 0 4 0 5 1 5 1 4 1 5 2 5 2 4 2 5 2 5 3 5 3 5 6 5 6 5 5 5 4 5 5 6 3 5 2 5 2 5 2 5-1 6-2 5-2 6-3 5-1 6-2 5-2 5-1 6 0 5-1 5 0 5 0 5 1 5 0 5 0 6 0 5 1 5 1 5 0 5 0 5 0 5 1 5 0 5 0 5 1 5 0 5 0 6 0 5 0 5 0 5-1 5-1 5 M817 57l3 5 1 5 1 5 1 4-1 5 0 5 0 4 1 5 1 4 1 5 1 5 2 5 2 4 2 5 3 5 2 5 3 5 7 5 6 5 5 5 5 5 5 6 3 5 3 5 2 5 3 5 0 6-2 5-2 6-2 5-1 6-1 5-2 5 0 6-1 5 0 5 0 5 0 5 1 5 0 5 1 5 0 5 0 5 1 6 1 5 0 5 0 5 1 5 0 5 1 5 0 5 0 5 0 5 0 6 1 5 0 5-1 5-2 5-1 5-1 5 M820 57l4 5 1 5 0 5 1 4 0 5 0 4 0 5 0 5 1 4 2 5 1 5 2 5 2 4 2 5 3 5 2 5 4 5 7 5 6 5 6 5 5 5 5 5 4 6 3 5 3 5 3 5-1 6 0 5-1 6-2 5-1 5 0 6-2 5 0 5 0 6 0 5-1 5 1 5 1 5 0 5 1 5 1 5 1 5 0 5 1 5 0 5 1 5 1 6 0 5 M824 57l4 5 0 5 1 4 0 5 0 5 0 4 1 5 0 5 1 4 1 5 2 5 1 4 2 5 3 5 2 5 4 5 3 5 8 5 6 5 6 5 6 5 5 5 5 5 3 6 3 5 3 5 1 5-1 6-1 5 0 6-1 5 0 6-1 5 0 5 0 5 1 5 0 6 1 5 1 5 0 5 0 5 1 5 1 5 1 5 1 5 0 5 1 5 0 5 1 5 M827 57l4 5 0 5 1 4 1 5 0 5 0 4 0 5 0 5 2 4 1 5 1 5 2 4 2 5 2 5 4 5 3 4 4 5 7 5 7 6 7 5 6 5 5 5 5 5 4 5 3 6 4 5 1 5-1 6 1 5-1 6 0 5 0 5 0 5-1 6 1 5 1 5 0 5 1 5 2 5 0 5 1 5 0 5 1 6 1 5 1 5 1 5 1 5 0 5 0 5 2 5-1 5 0 5 1 5 0 5 0 6 0 5 M829 57l5 5 1 5 0 4 1 5 0 4 0 5 0 5 1 4 1 5 1 5 2 4 2 5 2 5 2 5 4 5 3 4 4 5 8 5 7 5 7 6 6 5 6 5 5 5 5 5 3 5 4 6 1 5 1 5 0 6 1 5 0 6 0 5 0 5 0 5 1 5 1 6 0 5 2 5 1 5 1 5 1 5 0 5 1 5 2 5 0 5 1 5 1 5 0 5 1 5 1 6 0 5 0 5 0 5 1 5 0 5 M833 57l4 5 1 4 1 5 0 5 0 4 0 5 1 5 0 4 1 5 2 5 1 4 2 5 2 5 3 5 4 4 3 5 4 5 9 5 7 5 7 5 7 5 6 6 5 5 5 5 4 5 4 5 2 5 1 6 1 5 1 6 0 5 1 5 0 6 1 5 0 5 2 5 0 5 2 5 1 5 2 5 0 5 1 5 1 5 1 6 1 5 1 5 1 5 1 5 0 5 M835 57l5 5 1 4 1 5 0 5 0 4 0 5 1 4 0 5 1 5 2 4 2 5 2 5 2 5 3 4 3 5 4 5 4 5 8 5 9 5 7 5 7 5 7 5 5 5 5 5 4 6 5 5 2 5 1 5 2 6 1 5 1 6 1 5 1 5 1 5 1 5 1 5 1 6 2 5 1 5 1 5 1 5 1 5 2 5 1 5 1 5 0 5 1 5 1 5 1 5 1 5 1 5 0 6-1 5 1 5 0 5 0 5-1 5-2 5-1 5-2 5 M838 57l5 4 1 5 1 5 0 4 0 5 1 5 0 4 0 5 2 5 1 4 2 5 2 5 2 4 3 5 4 5 4 5 4 5 9 5 8 5 8 5 7 5 7 5 6 5 5 5 5 5 5 5 2 6 2 5 2 5 2 6 1 5 1 5 2 5 1 6 1 5 1 5 2 5 2 5 1 5 1 5 1 5 1 5 2 5 1 5 1 5 1 5 1 5 1 5 0 6 2 5 0 5 0 5 0 5 0 5 M841 56l5 5 0 5 1 4 1 5 0 5 0 4 1 5 0 5 1 4 2 5 2 5 2 4 3 5 3 5 3 5 4 4 5 5 9 5 9 5 7 5 8 5 7 6 6 5 5 5 6 5 5 5 3 5 2 5 3 6 2 5 2 5 1 6 1 5 2 5 1 5 2 5 2 5 1 5 2 5 1 5 1 5 1 5 2 5 1 5 1 5 1 5 2 6 1 5 0 5 2 5 0 5 0 5 0 5 0 5 M846 56l5 5 1 4 1 5 0 5 1 4 0 5 0 5 0 4 2 5 1 5 2 4 3 5 3 5 3 4 3 5 4 5 6 5 9 5 9 5 8 5 9 5 8 5 6 5 6 5 6 5 6 5 4 5 3 5 3 6 3 5 2 5 2 5 2 5 2 5 2 6 2 5 2 5 2 5 2 5 2 5 1 5 1 5 1 5 2 5 1 5 2 5 0 5 1 5 2 5 1 5 0 5 0 5 1 5 0 5 0 6 0 5-1 5 M854 55l5 5 1 4 1 5 1 5 0 4 0 5 1 4 0 5 2 5 2 4 1 5 3 5 3 4 3 5 5 5 4 4 6 5 10 5 10 5 10 5 9 5 9 5 7 5 7 4 6 5 7 5 5 5 5 6 4 5 4 5 3 5 3 5 3 5 3 5 3 5 2 5 2 5 3 5 3 5 1 5 2 5 2 5 1 5 2 5 1 5 2 5 1 5 2 5 0 5 M855 55l6 4 1 5 1 5 0 4 1 5 0 4 0 5 1 5 2 4 1 5 2 5 3 4 3 5 4 5 4 4 4 5 6 5 11 5 10 5 9 4 9 5 10 5 7 5 7 5 7 5 7 5 5 5 5 5 4 5 5 5 3 5 3 5 3 5 3 5 3 5 3 5 2 5 3 5 3 5 2 5 1 4 2 5 2 5 1 5 2 5 1 5 1 5 2 5 1 6 1 5 1 5 0 5 M856 54l6 5 1 5 1 4 1 5 0 5 1 4 0 5 1 4 1 5 2 5 2 4 3 5 3 5 4 4 4 5 4 5 6 4 11 5 10 5 10 5 9 5 10 5 7 4 7 5 8 5 7 5 5 5 5 5 5 5 5 5 2 5 4 5 3 5 3 5 3 5 3 5 2 5 4 5 2 4 2 5 2 5 1 5 2 5 2 5 1 5 2 5 1 5 1 5 2 5 1 5 1 5 0 6 0 5 1 5 0 5 0 5 M858 54l6 5 0 4 1 5 1 5 0 4 1 5 0 4 1 5 2 5 2 4 1 5 3 5 3 4 4 5 5 5 4 4 5 5 12 5 10 5 10 4 9 5 10 5 8 5 7 5 7 4 7 5 6 5 5 5 5 5 5 5 3 5 4 5 4 5 3 5 3 5 2 5 3 4 3 5 3 5 1 5 3 5 1 5 2 5 2 5 1 5 2 5 1 5 2 5 1 5 1 5 0 5 M858 54l6 4 2 5 0 5 1 4 0 5 1 4 1 5 0 5 2 4 2 5 1 5 3 4 4 5 3 5 5 4 5 5 5 5 11 4 11 5 10 5 9 5 10 4 8 5 7 5 7 5 8 4 5 5 6 5 5 5 5 5 4 5 3 5 4 5 3 5 3 5 3 4 3 5 3 5 2 5 3 5 1 5 2 5 2 5 2 5 1 5 2 5 1 5 2 5 1 5 1 5 1 5 0 5 0 5 1 5 0 5 0 5 M860 53l6 5 1 4 1 5 1 5 1 4 0 5 0 4 1 5 2 5 1 4 2 5 3 4 4 5 3 5 5 4 4 5 6 5 12 4 10 5 10 5 10 4 10 5 7 5 8 4 8 5 7 5 6 5 6 5 5 4 6 5 3 5 4 5 4 5 3 4 3 5 3 5 3 5 3 5 3 5 2 5 2 4 2 5 2 5 2 5 1 5 1 5 2 5 2 5 1 5 1 5 0 5 1 5 M860 53l6 4 1 5 2 5 0 4 1 5 0 4 0 5 1 5 2 4 2 5 2 4 3 5 3 5 3 4 5 5 5 5 6 4 11 5 11 4 10 5 9 5 11 4 7 5 8 5 8 4 7 5 6 5 6 5 6 4 5 5 3 5 5 5 3 4 3 5 3 5 4 5 3 5 3 5 3 4 2 5 1 5 2 5 2 5 2 5 2 5 1 5 2 5 1 5 2 5 1 5 0 5 M860 52l7 5 1 5 1 4 1 5 0 4 0 5 1 5 0 4 2 5 2 4 2 5 3 5 3 4 4 5 4 5 5 4 6 5 11 4 11 5 10 5 10 4 10 5 8 4 7 5 8 5 8 4 5 5 6 5 6 4 5 5 4 5 4 5 4 4 4 5 3 5 3 5 3 5 3 4 3 5 1 5 2 5 2 5 2 5 2 5 1 5 2 4 2 5 1 5 2 5 1 5 0 6 1 5 0 5 0 5 1 5 0 5-2 5-2 5-2 6-2 5 M636 239l0 0 1 1 2 1 3 1 4 2 3 1 4 0 4 1 3 1 2 0 1 0 1-1 M634 243l0 1 2 1 2 1 3 1 4 1 4 1 4 1 4 1 3 0 2 0 2 0 1 0 M632 247l1 1 1 1 3 1 3 1 4 2 4 1 5 1 4 1 3 0 3 0 2 0 0 0 M630 256l1 1 1 1 3 1 4 2 4 1 5 1 5 1 4 1 4 1 3 0 2 0 1-1 M630 260l0 1 2 2 3 1 3 1 5 2 5 1 5 1 4 1 4 0 4 1 2-1 1 0 M629 265l0 1 2 1 3 1 4 2 5 1 5 2 5 1 5 1 4 0 3 0 2 0 1-1 M628 269l0 1 2 2 3 1 5 2 4 1 6 1 5 2 5 0 4 1 4 0 2 0 1-1 M627 274l1 1 2 1 3 2 4 1 5 2 6 1 5 1 5 1 5 1 3 0 3 0 1-1 M625 283l1 1 2 1 4 2 4 1 6 2 5 2 6 1 6 1 5 0 4 0 2 0 1-1 M625 287l0 1 3 2 3 1 5 2 5 2 6 1 7 1 5 1 5 1 4 0 3 0 1-1 M625 292l0 1 2 1 4 2 5 2 5 1 7 2 6 1 6 1 5 1 4 0 2-1 1 0 M624 301l1 1 2 2 4 1 5 2 5 2 7 1 6 2 6 1 5 0 5 0 2 0 1-1 M624 306l0 1 3 1 3 2 5 2 6 1 7 2 6 1 6 1 6 1 4 0 3 0 1-1 M623 310l1 1 2 2 4 2 5 1 6 2 7 2 7 1 6 1 5 1 4 0 3-1 1 0 M623 319l0 1 3 2 4 2 5 2 6 1 7 2 7 2 6 1 6 0 4 0 3 0 1-1 M622 328l1 2 2 1 4 2 6 2 6 2 7 2 7 1 7 1 6 1 4 0 3 0 1-1 M622 333l0 1 3 2 4 2 6 2 6 1 7 2 7 2 7 1 6 0 4 1 3-1 2-1 M621 337l1 2 3 1 4 2 5 2 7 2 7 2 7 1 7 2 6 0 5 0 3 0 1-1 M621 342l1 1 2 2 5 2 5 2 7 2 7 2 8 1 7 1 6 1 4 0 3 0 1-1 M621 346l0 2 3 1 4 2 6 2 7 2 7 2 8 2 7 1 6 1 5 0 3 0 1-1 M620 351l1 1 3 2 4 2 6 2 7 2 7 2 8 2 7 1 6 1 5 0 3-1 1-1 M620 356l1 1 2 2 5 2 6 2 7 2 7 2 8 1 7 2 7 0 4 0 4 0 1-1 M619 360l1 1 3 2 5 2 6 2 7 3 7 1 8 2 8 1 6 1 5 0 3 0 1-1 M619 365l1 1 3 2 4 2 6 2 8 2 7 2 8 2 8 1 6 1 5 0 4 0 1-1 M618 374l1 1 3 2 5 2 6 2 7 2 8 2 8 2 7 1 7 1 5 0 3 0 2-1 M618 378l1 2 3 2 4 2 6 2 8 2 8 2 8 2 7 1 7 1 5 0 3 0 1-1 M617 383l1 1 3 2 4 2 7 2 7 3 8 2 8 2 8 1 6 1 5 0 4 0 1-1 M615 392l1 1 3 2 4 2 7 3 7 2 9 2 8 2 8 1 6 1 6 0 3 0 2-1 M614 396l1 1 3 2 4 3 7 2 8 3 8 2 8 2 8 1 7 1 5 0 4 0 1-1 M613 400l1 2 2 2 5 2 7 3 8 2 8 2 9 2 8 2 7 1 5 0 4 0 1-1 M612 405l0 1 3 2 5 3 7 2 8 3 9 2 8 2 8 2 7 1 6 0 3-1 2-1 M610 409l1 2 3 2 5 2 7 3 8 2 9 3 9 2 8 1 7 1 6 1 3-1 2-1 M609 414l1 1 3 2 5 3 7 2 8 3 9 2 9 2 8 2 8 1 5 0 4 0 1-1 M608 418l1 2 3 2 5 2 7 3 8 3 9 2 9 2 9 2 7 1 6 0 4 0 1-1 M605 427l1 1 4 3 5 2 7 3 9 3 9 2 9 3 9 1 7 1 6 1 4-1 2-1 M604 431l1 2 3 2 6 3 7 3 9 2 9 3 10 2 8 2 8 1 6 0 4 0 2-1 M602 440l1 2 3 2 6 3 7 3 9 3 10 2 9 3 10 1 8 2 6 0 4 0 2-1 M600 444l1 2 4 2 5 3 8 3 9 3 10 3 10 2 9 2 8 1 7 1 4-1 2-1 M598 448l1 2 4 3 6 2 7 4 10 3 10 2 10 3 9 2 9 1 6 1 4-1 2-1 M596 452l1 2 4 3 6 3 7 3 10 3 10 3 10 2 9 2 9 1 6 1 5 0 1-2 M588 469l1 2 4 2 6 3 8 3 9 4 10 3 10 2 10 3 9 1 6 1 5-1 1-1 M586 473l1 2 4 2 6 3 8 4 9 3 10 3 11 3 9 2 9 1 7 1 4 0 2-1 M584 477l1 2 4 2 6 3 8 4 9 3 11 4 10 2 10 3 8 1 7 1 5-1 1-1 M580 485l1 2 4 3 6 3 8 3 9 4 11 3 11 3 10 2 8 2 7 1 5-1 2-1 M578 489l1 2 4 3 6 3 8 4 10 3 10 4 11 3 10 2 9 1 7 1 4 0 2-1 M576 493l1 2 4 3 6 3 8 4 10 3 10 4 11 3 10 2 9 2 7 1 5-1 2-1 M574 497l1 2 4 3 6 3 8 4 10 4 11 3 10 3 11 3 9 2 7 0 4 0 2-1 M570 505l1 2 3 3 7 4 8 3 10 4 11 4 11 3 10 3 9 1 7 1 5 0 2-1 M568 509l1 2 3 3 7 4 8 4 10 3 11 4 11 3 10 3 9 2 7 1 5-1 2-1 M564 518l1 2 3 3 7 3 8 4 10 4 11 4 11 3 11 3 9 2 7 0 5 0 2-1 M562 522l1 2 3 3 7 3 8 4 10 4 11 4 11 3 11 3 9 2 7 1 5 0 2-1 M560 526l0 2 4 3 7 3 8 4 10 4 11 4 12 4 10 3 9 1 8 1 4 0 2-1 M554 538l0 2 4 3 7 4 8 4 10 4 12 4 11 4 11 3 9 2 7 1 5 0 2-2 M549 546l1 2 4 3 7 4 8 4 10 4 12 5 11 3 11 3 9 2 7 1 5 0 2-1 M545 554l1 2 4 4 7 3 8 4 10 5 12 4 11 4 11 3 9 2 7 1 5 0 2-1 M544 558l0 3 4 3 7 3 8 5 11 4 11 4 11 4 11 3 9 2 7 1 5 0 2-1 M542 563l1 2 4 3 6 4 9 4 10 4 11 5 11 3 11 3 9 3 8 1 4 0 3-2 M540 567l1 2 4 3 6 4 9 4 10 5 11 4 11 4 11 3 9 2 8 1 5 0 2-1 M539 571l1 2 3 3 7 4 8 5 10 4 11 4 12 4 10 3 9 2 8 1 5 0 2-1 M537 575l1 3 4 3 6 4 9 4 10 4 11 4 11 4 10 3 10 3 7 1 5 0 2-1 M536 580l1 2 3 3 6 4 9 4 10 4 11 5 11 3 10 3 9 3 7 1 5 0 2-1 M534 584l1 2 4 3 6 4 8 4 10 4 11 5 11 3 10 3 9 3 7 1 5 0 2-1 M533 588l0 2 4 3 6 4 8 4 10 5 11 4 10 3 11 4 9 2 7 1 4 0 2-1 M531 593l1 2 3 3 6 3 9 4 9 5 11 4 10 4 10 3 9 2 7 1 5 0 2-1 M530 597l0 2 4 3 6 4 8 4 9 4 11 4 10 4 10 3 9 2 7 1 4 0 2-1 M528 601l1 2 3 3 6 4 8 4 9 4 11 4 10 4 10 3 9 2 7 1 4 0 2-1 M526 605l1 2 4 3 5 4 8 4 10 4 10 4 10 4 10 3 8 2 7 1 5 0 2-1 M525 610l1 2 3 3 6 3 7 4 10 4 10 4 10 4 10 3 8 2 7 1 4 0 2-1 M523 614l1 2 3 3 6 3 8 4 9 4 10 4 10 4 9 3 9 2 6 1 5 0 2-1 M520 623l1 2 3 2 6 4 7 4 9 4 10 4 10 3 9 3 8 2 7 1 4 0 2-1 M518 631l0 2 3 3 6 3 7 4 8 4 10 4 9 3 9 3 8 2 6 1 4 0 2-1 M516 636l1 1 3 3 5 3 7 4 8 4 9 3 10 4 8 2 8 2 6 1 4 0 2-1 M515 640l0 2 3 2 5 3 7 4 8 3 9 4 9 3 8 3 8 2 6 1 4 0 1-1 M513 644l1 2 3 2 5 3 6 4 8 3 9 4 8 3 9 2 7 2 5 1 4 0 2-1 M512 649l0 1 3 3 5 2 6 4 8 3 8 3 9 3 8 3 7 1 5 1 4 0 1-1 M509 657l0 2 3 2 4 3 7 3 7 3 8 3 8 2 7 3 7 1 5 1 3 0 2-1 M507 661l0 2 3 2 4 2 6 3 7 3 8 3 8 3 7 2 6 2 6 0 3 0 1 0 M505 665l0 2 3 2 4 2 6 3 7 3 7 3 8 2 7 3 6 1 5 1 4 0 1-1 M503 669l0 2 3 2 4 2 6 3 6 3 8 3 7 2 7 2 6 1 5 1 3 0 2-1 M501 673l0 2 3 2 4 2 5 3 7 3 7 2 7 3 7 1 6 2 5 0 3 0 1 0 M499 678l0 1 2 2 5 2 5 3 6 2 7 3 7 2 7 2 6 1 5 1 3 0 1-1 M497 682l0 1 2 2 4 2 6 2 6 3 7 2 7 3 6 1 6 2 4 0 3 0 1-1 M494 686l1 1 2 2 4 2 5 2 6 3 7 2 7 2 6 2 6 1 4 1 3-1 1 0 M490 694l1 1 2 2 4 2 5 2 5 2 7 2 6 2 6 2 5 1 4 0 3 0 1-1 M488 698l1 1 2 2 3 2 5 2 6 2 6 2 6 2 6 1 5 1 4 1 3-1 1 0 M486 702l0 1 2 1 4 2 5 2 5 2 6 2 6 2 6 2 5 0 4 1 2 0 2-1 M484 706l0 1 2 1 3 2 5 2 5 2 6 2 6 2 6 1 5 1 4 0 2 0 1-1 M481 710l1 1 2 1 3 2 4 2 6 2 5 1 6 2 6 1 4 1 4 1 3-1 1 0 M479 713l0 1 2 2 4 2 4 1 5 2 6 2 5 2 6 1 4 1 4 0 2 0 1-1 M476 717l1 1 2 2 3 1 4 2 5 2 6 2 5 1 5 1 5 1 4 0 2 0 1-1 M477 726l0 1 2 1 3 1 3 2 4 1 5 2 4 1 5 1 3 0 3 1 2 0 1-1 M631 257l-1 4-1 5-1 4-1 5 0 4-1 5-1 4 0 5 0 4-1 5 0 5 0 4-1 5 0 4 0 5 0 4-1 5 0 5 0 4-1 5 0 4 0 5-1 4 0 5-1 4 0 5 0 4-2 5 0 4-1 5-1 4-2 5-1 4-1 5-1 4-1 4-1 5-2 4-1 5-1 4-2 4-1 5-2 4-2 4-2 4-2 4-2 4-2 4-2 4-2 5-2 4-2 4-2 4-2 4-3 4-1 4-3 4-1 4-3 4-1 4-3 4-2 5-2 4-2 4-2 4-2 4-2 4-2 4-2 4-2 4-1 5-2 4-1 4-2 4-2 5-1 4-2 4-2 4-1 5-2 4-1 4-2 4-1 5-1 4-2 4-1 5-2 4-1 4-2 4-1 5-2 4-1 4-2 4-2 5-2 4-2 4-2 4-2 4-2 4-2 4-2 4-2 4-3 4-2 4-2 4-2 3-3 4-2 4 0 4 0 5 M627 284l-1 5-1 4 0 5 0 5 0 4 0 5-1 4 0 5 0 4-1 5 0 5 0 4 0 5-1 4 0 5-1 4 0 5-1 5 0 4 0 5 0 4-1 5-1 4-2 5-1 4-1 5-1 4-1 4-1 5-2 4-1 5-1 4-1 5-1 4-2 4-1 5-2 4-2 4-2 4-2 4-2 4-2 4-2 4-2 5-2 4-2 4-2 4-2 4-2 4-2 4-3 4-1 4-3 4-1 5-3 4-1 4-3 4-2 4-1 4-3 4-2 4-2 4-2 4-2 5-1 4-2 4-1 4-2 5-2 4-1 4-1 4-2 5-2 4-1 4-2 4-1 5-2 4-1 4-2 4-1 5-2 4-1 4-2 4-2 5-1 4-2 4-1 4-2 4-2 4-2 4-2 4-2 4-2 4-3 4-1 5-3 4-2 3-2 4-3 4-2 4-2 4-2 4-1 4 1 4 M631 262l0 5-1 4-1 5-1 4 0 5-1 5 0 4-1 5 0 4 0 5-1 4 0 5 0 5 0 4-1 5 0 4 0 5 0 5-1 4 0 5 0 4-1 5 0 4-1 5 0 5-1 4 0 5-1 4-1 5-1 4-1 4-1 5-2 4 0 5-2 4-1 5-1 4-2 5-1 4-1 4-1 5-2 4-2 4-2 4-2 4-3 4-1 5-2 4-3 4-1 4-3 4-1 4-3 4-1 4-3 4-1 5-3 4-2 4-2 4-2 4-2 4-2 4-2 4-2 4-2 4-2 5-2 4-2 4-2 4-1 4-2 4-2 5-1 4-2 4-1 4-2 5-2 4-1 4-2 4-1 5-2 4-2 4-1 4-2 5-1 4-1 4-2 4-1 5-2 4-1 4-2 4-2 4-2 4-2 4-2 4-2 4-2 4-2 4-2 4-2 4-2 4-3 4-2 4-2 4-3 4-2 4-2 3-1 4 1 5 M631 282l-1 4 0 5 0 5 0 4-1 5 0 4 0 5 0 5-1 4 0 5 0 4-1 5 1 5-1 4 0 5-1 4 0 5 0 5-1 4 0 5 0 4-1 5 0 4-1 5-1 4-1 5-1 4-2 5 0 4-2 5-1 4-1 5-1 4-1 5-1 4-1 5-2 4-1 4-3 5-2 4-2 4-2 4-2 4-1 4-3 4-2 5-2 4-2 4-1 4-2 4-2 4-2 4-2 5-3 4-2 4-2 4-2 4-2 4-2 4-2 5-2 4-2 4-2 4-2 4-2 4-1 4-2 5-1 4-2 4-2 4-2 5-1 4-2 4-1 4-2 5-1 4-2 4-2 4-1 4-2 5-2 4-2 4-1 4-2 4-1 4-2 4-2 5-1 4-2 4-2 4-3 3-2 4-2 4-2 4-3 4-2 4-1 4-3 4-2 4-3 3-2 4-2 4-3 4-1 4 0 4 M632 287l0 5-1 4 0 5 0 4 0 5 0 5-1 4 0 5 0 5 0 4-1 5 0 4 0 5 0 5 0 4-1 5 0 5 0 4-1 5 0 4 0 5-1 4-1 5-1 4-1 5-1 4-1 5-1 5-1 4-1 5-1 4-1 5-1 4-1 5-1 4-2 5-2 4-1 4-2 4-2 4-3 4-2 4-1 5-3 4-2 4-1 4-2 4-3 5-1 4-2 4-2 4-3 4-2 4-2 4-1 5-3 4-2 4-2 4-2 4-1 4-2 4-3 5-2 4-2 4-1 4-1 4-2 5-2 4-2 4-1 4-2 5-2 4-1 4-2 4-2 4-2 5-1 4-2 4-1 4-2 5-1 4-2 4-2 4-2 4-2 4-1 4-2 4-2 4-3 4-2 4-2 3-2 4-2 4-2 4-3 4-2 4-2 4-2 3-3 4-3 4-2 4-2 4-1 3 0 4 M638 255l-1 5-1 5 0 4 0 5-1 4-1 5 0 5-1 4 1 5-1 5 0 4 0 5 0 5 0 4 0 5-1 4 0 5 0 5 0 4-1 5 0 5 0 4 0 5-1 4 0 5 0 5 0 4-1 5 0 4-2 5 0 5-1 4-1 5-1 4-1 5-1 4-1 5-1 4-1 5-1 4-1 5-1 4-2 5-1 4-2 4-2 4-2 5-2 4-2 4-2 4-2 4-2 5-2 4-2 4-2 4-2 4-2 5-2 4-2 4-2 4-2 4-2 4-2 5-2 4-2 4-2 4-2 4-2 4-2 4-2 5-2 4-1 4-2 4-2 5-1 4-2 4-2 4-1 4-2 5-2 4-1 4-3 4-1 4-2 5-2 4-1 4-1 4-3 4-1 4-2 4-2 4-1 4-3 4-2 4-2 4-2 4-2 4-2 4-3 4-2 3-2 4-3 4-2 4-2 4-2 3-3 4-3 4-2 4-3 3-1 4 0 4 M638 270l0 5-1 4-1 5 0 4 0 5 0 5 0 4-1 5 1 5 0 4-1 5 0 5 0 4 0 5 0 5-1 4 0 5 0 4 0 5 0 5-1 4 0 5 0 5 0 4 0 5-1 4-1 5-1 5-1 4-1 5-1 4-1 5-1 4-1 5-1 4-1 5-1 5-1 4-1 5-1 4-1 5-2 4-3 4-1 4-3 4-1 4-2 5-2 4-2 4-2 4-2 5-2 4-2 4-2 4-2 4-2 5-2 4-2 4-2 4-2 4-1 5-2 4-3 4-2 4-2 4-2 4-2 4-2 5-1 4-2 4-2 5-1 4-2 4-2 4-1 4-2 4-3 5-1 4-1 4-2 4-2 4-2 5-2 4-2 4-1 4-2 4-2 4-2 4-2 4-1 4-2 4-3 3-2 4-2 4-2 4-3 4-2 3-3 4-2 4-2 4-3 4-2 3-3 4-3 4-2 3-3 4-1 4 0 4 M640 266l0 5 0 4-1 5 0 5-1 4 0 5 0 4 0 5 0 5 0 4 0 5 0 5 0 4-1 5 1 5 0 4-1 5 0 5 0 4 0 5 0 5-1 4 0 5 0 5 0 4-1 5 0 4-1 5-1 5-1 4 0 5-1 4-2 5 0 5-2 4 0 5-1 4-1 5-1 4-1 5-1 5-2 4-1 4-2 4-3 4-2 5-1 4-2 4-2 4-2 5-2 4-2 4-2 4-2 5-2 4-2 4-2 4-1 5-3 4-2 4-1 4-3 4-1 5-2 4-3 4-1 4-3 4-2 4-2 5-1 4-2 4-1 4-2 5-2 4-2 4-2 4-1 4-2 5-2 4-2 4-2 4-1 4-2 4-2 5-2 4-2 4-2 4-1 3-2 4-2 4-2 4-2 4-3 4-2 4-3 3-2 4-2 4-3 4-2 3-3 4-2 4-3 4-2 3-3 4-2 4-3 3-2 4-2 4 0 3 M643 257l0 5 0 5-1 4 0 5 0 5-1 4 0 5 0 5 0 4 0 5 0 5 0 4-1 5 1 5 0 4 0 5-1 5 0 4 1 5-1 5 0 4 0 5 0 5 0 4 0 5 0 5-1 4 0 5-1 4 0 5-2 5 0 4-1 5-1 4-1 5-1 5-1 4-1 5 0 4-1 5-1 5-1 4-1 5-2 4-2 4-2 5-1 4-2 4-2 4-2 5-2 4-2 4-2 4-2 5-2 4-2 4-1 5-2 4-2 4-2 4-2 4-2 5-2 4-1 4-3 4-1 5-3 4-2 4-2 4-2 4-2 5-1 4-2 4-2 4-1 5-2 4-2 4-2 4-2 4-2 4-1 5-3 4-1 4-2 4-2 4-2 4-1 4-3 4-2 4-2 4-2 4-2 4-2 4-2 3-3 4-2 4-3 4-2 3-2 4-3 4-3 3-2 4-3 4-2 4-3 3-2 4-3 3-3 4-2 4-2 3 0 4 M650 235l-1 5-1 4 0 5-1 5 0 4 0 5 0 5 0 4-1 5 0 5 0 4 0 5 0 5 0 5 0 4 0 5 0 5 1 4 0 5 0 5 0 4-1 5 1 5 0 5-1 4 1 5 0 5 0 4 0 5-1 5 0 4 0 5 0 5-1 4-1 5 0 5-1 4-1 5 0 5-1 4-1 5-1 5 0 4-1 5-1 4 0 5-2 5 0 4-1 5-3 4-2 4-1 5-2 4-2 4-2 4-2 5-1 4-3 4-1 5-2 4-2 4-2 5-1 4-2 4-3 5-2 4-1 4-2 4-2 5-2 4-2 4-2 4-2 5-2 4-2 4-2 4-2 5-1 4-2 4-2 4-2 5-2 4-2 4-2 4-1 4-3 4-2 4-1 4-2 5-3 4-2 4-1 4-2 4-3 3-2 4-2 4-2 4-3 3-2 4-3 4-2 3-3 4-3 4-2 3-3 4-3 4-2 3-3 4-3 3-2 4-3 4-3 3-3 4-3 3-1 4-2 3 M649 287l0 5 0 5 0 4 0 5 0 5 0 4 0 5 0 5 1 4 0 5 0 5 0 5 0 4 0 5 0 5 0 4 0 5 0 5 0 5 0 4 0 5-1 5 0 4-1 5 0 5-1 4-1 5-1 5 0 4-1 5-1 5 0 4-1 5-1 5 0 4-1 5-1 5-1 4-2 4-2 5-2 4-2 4-2 4-1 5-2 4-2 5-2 4-1 4-2 5-2 4-2 4-2 5-2 4-1 4-2 5-2 4-2 4-2 4-2 5-2 4-2 4-2 4-2 5-2 4-1 4-3 4-1 5-2 4-2 4-2 4-2 5-2 4-2 4-2 4-2 4-2 4-2 4-2 4-2 4-2 5-2 4-2 3-2 4-3 4-2 3-3 4-2 4-3 3-2 4-3 4-3 3-2 4-3 3-3 4-2 4-3 3-3 4-3 3-3 4-3 3-2 4-3 3-3 4-2 3-1 4 M652 292l-1 5 1 5 0 5 0 4 0 5 0 5 1 4-1 5 1 5 0 5 0 4 0 5 0 5 1 4-1 5 1 5-1 5 1 4 0 5 0 5-1 4-1 5 0 5-1 4-1 5 0 5-1 4-1 5 0 5-1 4 0 5-1 5 0 5-1 4-1 5 0 5-1 4-2 4-2 5-2 4-2 4-2 5-2 4-1 4-2 5-2 4-2 5-1 4-2 4-2 5-2 4-1 4-2 5-2 4-2 4-2 5-2 4-2 4-2 5-2 4-2 4-2 4-2 5-2 4-2 4-2 4-1 5-2 4-2 4-2 4-2 4-2 4-2 5-2 4-3 4-2 4-1 4-2 4-2 4-3 4-2 4-3 3-2 4-3 4-2 3-2 4-3 4-3 3-3 4-2 3-3 4-3 3-3 4-3 3-2 4-3 4-3 3-3 4-2 3-4 4-2 3-3 4-3 3-1 3 M653 255l0 5 0 4 0 5 0 5 0 5 1 4 0 5 0 5 0 5 1 4 0 5 0 5 0 4 0 5 1 5-1 5 1 4 0 5 0 5 0 5 0 4 0 5 1 5 0 5 0 4 0 5 0 5-1 4 0 5 0 5-1 4 0 5-1 5 0 5-1 4 0 5-1 5-1 4 0 5-1 5 0 4-1 5 0 5-1 5-1 4-2 4-2 5-2 4-2 4-2 5-1 4-2 5-2 4-1 4-2 5-2 4-1 5-2 4-2 4-2 5-2 4-1 4-3 5-1 4-2 4-2 5-2 4-2 4-2 5-2 4-2 4-2 4-1 5-3 4-1 4-2 5-2 4-2 4-2 4-2 4-3 4-2 4-2 4-2 4-2 4-2 4-2 5-2 4-3 3-2 4-3 3-3 4-3 4-2 3-3 4-3 3-2 4-3 3-3 4-3 3-3 4-3 3-2 4-3 3-3 4-3 3-3 4-3 3-3 4-3 3-3 4-1 3 M655 241l0 5 0 5 0 4 0 5 0 5 1 5 0 4 0 5 0 5 0 5 0 4 1 5 0 5 0 4 0 5 1 5 0 5 1 4 0 5 0 5 0 5 0 4 1 5 0 5 0 5 0 4 0 5 0 5 1 5 0 4-1 5 0 5-1 4 0 5-1 5 0 5-1 4 0 5-1 5 0 4-1 5 0 5-1 5 0 4-1 5 0 5-1 4-1 5-2 4-2 5-1 4-3 4-1 5-2 4-2 5-1 4-2 5-2 4-1 4-2 5-2 4-2 5-1 4-2 4-2 5-2 4-1 4-2 5-2 4-2 4-2 5-2 4-2 4-2 5-2 4-2 4-1 4-2 5-2 4-3 4-1 4-3 4-2 4-2 4-2 5-3 4-1 4-3 4-2 4-2 4-2 4-3 4-2 3-3 4-3 3-3 4-2 3-3 4-3 3-3 4-3 3-3 4-3 3-3 4-3 3-3 4-2 3-4 4-2 3-4 3-2 4-4 3-3 4-2 3-2 3 M660 284l1 5 0 5 1 5 0 4 0 5 1 5 0 5 0 4 1 5 0 5 0 5 1 4 0 5 0 5 0 5 1 4 0 5 0 5 0 5 1 4 0 5 0 5-1 5 0 4-1 5 0 5-1 5 0 4-1 5 0 5 0 5-1 4-1 5 1 5-1 5 0 4 0 5-1 5-1 4-2 5-1 4-3 4-1 5-2 4-2 5-1 4-2 5-2 4-1 5-2 4-1 5-2 4-2 4-1 5-2 4-2 5-2 4-1 5-2 4-2 4-2 5-2 4-2 4-2 5-2 4-2 4-2 4-1 5-2 4-2 4-3 4-2 5-2 4-2 4-3 4-2 4-2 4-3 4-2 4-2 4-2 4-2 4-3 4-3 3-3 4-3 3-3 4-3 3-3 3-3 4-3 3-3 4-3 3-3 4-4 3-2 3-4 4-3 3-2 4-3 3-4 3-3 4-3 3-4 4-2 3-3 3 M659 247l0 4 1 5 0 5 1 5 0 4 0 5 1 5 0 5 1 4 1 5 0 5 0 5 1 4 0 5 0 5 1 5 0 4 0 5 1 5 0 5 0 4 0 5 1 5 0 5 1 4 0 5 0 5 0 5 1 4-1 5 0 5-1 5 0 4 0 5-1 5 0 5-1 4 0 5 0 5-1 5 0 4 0 5-1 5 0 5 0 5-1 4 0 5-2 4-2 5-2 4-2 4-2 5-1 4-1 5-2 4-2 5-1 4-2 5-1 4-2 5-2 4-2 5-1 4-2 4-2 5-2 4-1 5-2 4-2 4-2 5-2 4-2 4-2 5-2 4-2 4-1 5-3 4-1 4-3 4-2 4-2 5-2 4-3 4-2 4-2 4-3 4-2 4-2 4-3 4-2 4-3 4-3 3-3 3-3 4-3 3-3 4-3 3-3 3-3 4-3 3-3 4-4 3-3 3-3 4-3 3-3 4-3 3-4 3-3 4-3 3-3 3-3 4-4 3-2 3 M664 271l1 4 0 5 1 5 1 5 0 4 1 5 0 5 1 5 0 4 0 5 1 5 0 5 1 4 0 5 0 5 1 5 0 4 0 5 1 5 0 5 0 4 1 5 0 5 0 5 0 4 0 5-1 5 0 5 0 4-1 5 0 5 0 5-1 5 0 4 0 5-1 5 0 5 0 4 0 5 0 5-1 5 0 4-2 5-2 4-2 5-1 4-2 4-1 5-2 5-2 4-1 5-1 4-2 5-2 4-1 5-2 4-2 4-2 5-1 4-2 5-2 4-1 5-3 4-1 4-2 5-2 4-2 4-2 5-2 4-2 4-2 5-2 4-2 4-2 5-2 4-3 4-2 4-2 4-3 4-2 4-3 4-2 4-2 4-3 4-2 4-3 4-3 3-4 3-2 4-4 3-3 4-3 3-3 3-3 4-4 3-3 3-3 4-4 3-3 3-3 4-4 3-3 4-3 3-3 3-3 4-4 3-3 3-3 3-3 4 M665 266l0 5 1 4 1 5 0 5 1 5 0 4 1 5 0 5 1 5 1 4 0 5 0 5 0 5 1 4 0 5 1 5 0 5 0 4 1 5 1 5 0 5 1 4 0 5 0 5 0 5 0 4 0 5-1 5 0 5 0 4 0 5-1 5 0 5-1 5 0 4 0 5 0 5-1 5 0 4 0 5 0 5 0 5-1 4-1 5-2 4-2 5-2 4-1 5-2 4-2 5-1 4-2 5-1 4-1 5-2 4-2 5-1 4-2 5-2 4-2 5-2 4-1 4-2 5-1 4-3 5-1 4-2 4-2 5-3 4-1 4-2 5-2 4-2 4-2 5-2 4-2 4-3 4-2 4-3 4-2 4-3 4-2 4-3 4-2 4-2 4-3 5-3 3-3 3-3 4-4 3-2 3-4 4-4 3-3 3-3 4-3 3-4 4-3 3-3 3-3 4-4 3-3 3-3 4-4 3-3 3-3 4-4 3-3 3-3 3-3 4 M669 294l1 5 1 5 0 4 0 5 1 5 0 5 1 4 0 5 1 5 0 5 1 4 0 5 1 5 0 5 0 4 1 5 0 5 1 5-1 4 1 5-1 5 0 5 0 5-1 4 0 5 0 5-1 5 0 4 0 5-1 5 0 5 0 5 0 4 0 5 0 5 0 5-1 4-1 5-3 4-1 4-2 5-1 4-2 5-2 5-1 4-1 5-2 4-2 5-1 4-2 5-1 4-2 5-2 4-1 5-2 4-2 4-2 5-1 4-2 5-2 4-2 4-2 5-2 4-2 4-2 5-2 4-2 4-2 5-2 4-3 4-2 4-3 4-2 4-2 4-3 4-2 4-3 4-2 4-2 5-2 4-4 3-3 3-3 4-4 3-3 3-3 4-4 3-3 3-3 4-3 3-4 3-3 4-3 3-4 4-3 3-4 3-3 4-3 3-3 3-4 4-3 3-4 3-3 3-3 4 M667 275l1 5 1 4 0 5 1 5 1 5 1 4 0 5 0 5 1 5 0 4 1 5 0 5 1 5 0 4 1 5 0 5 1 5 0 4 0 5 1 5 1 5 0 4 0 5 0 5-1 5 0 5 0 4 0 5-1 5 0 5 0 4-1 5 0 5 0 5 0 4-1 5 0 5 1 5-1 5 0 4-1 5-1 4-2 5-2 4-2 5-1 4-2 5-1 4-2 5-1 4-1 5-2 4-1 5-2 4-2 5-1 4-2 5-2 4-1 5-2 4-2 5-2 4-2 4-1 5-2 4-3 4-1 5-2 4-2 5-2 4-2 4-2 5-2 4-3 4-2 4-3 4-2 4-3 4-2 4-3 4-2 4-2 4-3 4-3 4-2 4-4 3-3 4-4 3-3 3-3 4-3 3-4 3-3 4-3 3-4 3-3 4-4 3-3 3-3 4-4 3-3 3-3 4-4 3-3 3-4 4-3 3-4 3-3 3 M663 237l0 5 1 4 1 5 0 5 1 5 1 4 0 5 1 5 1 4 1 5 0 5 1 5 0 4 1 5 0 5 1 5 1 4 0 5 0 5 1 5 0 4 1 5 0 5 1 5 0 4 1 5 0 5 1 5 0 4 0 5 0 5 0 5 0 4 0 5-1 5 0 5 0 4 0 5 0 5-1 5 0 4 0 5 0 5 0 5-1 5 0 4 0 5 0 5 0 5-2 4-2 4-2 5-1 4-2 5-2 4-1 5-2 4-1 5-2 4-1 5-1 4-2 5-1 4-3 5-1 4-1 5-3 4-1 5-2 4-1 5-3 4-1 4-2 5-2 4-2 4-2 5-2 4-2 4-2 5-2 4-2 4-2 4-3 4-3 4-2 5-3 4-2 4-3 4-2 4-2 4-3 4-2 4-4 3-3 4-3 3-4 4-3 3-3 3-4 4-3 3-3 3-4 4-3 3-3 3-4 4-3 3-4 3-3 4-4 3-3 3-3 4-4 3-3 3-4 4-3 3-3 3 M665 251l0 5 1 4 1 5 1 5 0 4 1 5 1 5 0 5 1 4 1 5 1 5 0 4 0 5 1 5 0 5 0 4 1 5 0 5 1 5 1 4 0 5 1 5 0 5 0 4 1 5 0 5 1 5 0 4-1 5 0 5 0 5 0 4 0 5 0 5-1 5 0 4 0 5 0 5-1 5 0 4 0 5 0 5 0 5 0 5-1 4 0 5-2 4-2 5-2 4-1 5-1 4-2 5-1 4-2 5-1 4-2 5-1 4-2 5-2 4-1 5-2 4-1 5-2 4-2 5-2 4-1 5-2 4-2 4-2 5-2 4-1 4-2 5-3 4-2 4-1 5-2 4-2 5-3 4-2 4-3 4-2 4-3 4-2 4-2 4-3 4-2 4-3 4-2 4-3 5-3 3-3 3-4 4-3 3-4 3-3 4-3 3-4 4-3 3-3 3-4 4-3 3-3 3-4 4-3 3-4 3-3 4-3 3-4 3-4 4-3 3-3 3-4 4-3 3 M1023 211l0 0-1 1-2 1-2 1-3 1-3 0-3 1-3 1-2 0-2 0-1 0-1 0 M1049 265l0 1-2 1-4 2-5 2-6 2-6 1-7 2-6 1-5 1-4 0-3-1-1 0 M1051 269l-1 1-2 2-4 2-5 2-6 1-7 2-6 2-7 1-5 0-4 0-3 0-1-1 M1052 274l-1 1-2 2-4 1-5 2-6 2-7 2-7 1-6 1-6 1-4 0-3 0-1-1 M1053 278l0 1-3 2-4 2-5 2-7 2-7 1-6 2-7 1-6 1-4 0-3-1-1 0 M1056 287l-1 1-3 2-4 2-6 2-7 2-7 2-8 1-7 1-6 1-5 0-3-1-1 0 M1057 292l-1 1-3 2-4 2-6 2-8 2-7 1-8 2-8 1-6 0-5 0-3 0-1-1 M1059 301l-1 1-3 2-5 2-6 2-8 2-8 2-9 1-8 1-7 1-5 0-3-1-2-1 M1061 305l-1 2-4 1-5 2-6 3-9 2-8 1-9 2-8 1-7 0-6 0-3 0-2-2 M1062 310l-1 1-3 2-6 2-7 2-8 2-9 2-9 1-9 1-7 1-6 0-4-1-1-1 M1063 314l-1 2-3 2-6 2-7 2-9 2-9 2-10 1-8 1-8 0-6 0-4 0-1-2 M1064 319l-1 1-3 2-6 2-8 2-9 2-9 2-10 2-9 1-8 0-6 0-4-1-1-1 M1065 323l-1 2-3 2-6 2-8 2-9 2-10 2-10 1-9 1-8 1-7-1-4 0-1-2 M1067 327l-2 2-3 2-6 2-8 3-10 2-10 2-10 1-10 1-8 0-7 0-4-1-1-1 M1068 332l-1 2-4 2-6 2-9 2-9 2-11 2-11 2-9 1-9 0-7 0-4-1-2-2 M1069 336l-1 2-4 2-7 3-8 2-10 2-11 2-11 1-10 1-9 0-7 0-4-1-2-1 M1071 345l-1 2-4 2-7 3-9 2-10 2-11 2-12 2-11 0-9 1-7-1-5-1-1-1 M1073 350l-1 2-5 2-7 2-9 3-10 2-12 2-12 1-11 1-9 0-8 0-4-1-2-2 M1078 363l-2 2-4 2-8 3-10 2-11 3-13 2-12 1-12 1-10 0-8 0-5-1-2-2 M1079 367l-1 2-5 3-8 2-10 3-12 2-12 2-13 2-12 1-11 0-8 0-5-2-2-1 M1081 372l-2 2-5 2-7 3-10 2-12 3-13 2-13 1-11 1-11 0-8 0-5-1-2-2 M1083 380l-1 3-5 2-7 2-10 3-12 2-12 2-13 1-12 1-10 0-8 0-5-1-2-2 M1085 385l-1 2-5 2-8 3-9 2-12 2-12 2-13 2-12 0-10 0-8 0-5-1-2-2 M1088 394l-2 2-4 2-7 2-10 3-12 2-12 2-12 1-12 1-10 0-7-1-5-1-2-2 M1089 398l-1 2-5 2-7 3-10 2-11 2-12 2-12 1-12 1-10 0-7-1-5-1-2-2 M1092 407l-1 2-5 2-7 2-10 3-11 2-12 1-12 1-11 1-10 0-7-1-5-1-2-1 M1093 411l-1 2-4 3-8 2-9 2-11 2-12 2-12 1-11 0-10 0-7 0-5-2-2-1 M1095 416l-2 2-4 2-7 2-10 2-11 2-11 2-12 1-11 0-10 0-7 0-5-1-2-2 M1096 420l-1 2-5 2-7 3-9 2-11 1-12 2-11 1-11 1-10-1-7 0-5-1-2-2 M1097 425l-1 2-4 2-7 2-10 2-10 2-12 1-12 1-11 1-9 0-7-1-5-1-2-2 M1099 429l-2 2-4 2-7 2-9 2-11 2-11 1-12 1-11 1-9 0-7-1-5-1-2-2 M1100 434l-1 2-5 2-7 2-9 2-10 1-12 2-11 1-11 0-9 0-7-1-5-1-2-2 M1101 438l-1 2-4 2-7 2-9 2-11 2-11 1-11 1-11 0-9 0-7-1-5-1-2-1 M1105 451l-1 2-4 2-7 2-9 2-10 2-12 1-11 1-10 0-10 0-7-1-4-1-2-1 M1107 456l-2 2-4 2-7 2-9 2-10 1-11 1-12 1-10 1-9-1-7 0-5-1-1-2 M1109 465l-1 2-4 2-7 2-9 1-10 2-12 1-11 1-10 0-9 0-7 0-5-2-2-1 M1112 474l-1 1-4 2-7 2-9 2-11 2-11 1-11 1-11 0-9 0-7-1-4-1-2-1 M1113 478l-1 2-4 2-7 2-9 2-10 1-11 2-12 0-10 1-9-1-7 0-5-1-1-2 M1115 482l-1 2-5 2-6 2-9 2-11 2-11 1-11 1-11 0-9 0-7-1-4-1-2-2 M1118 491l-2 2-4 2-7 2-9 2-10 2-11 1-11 1-11 0-9 0-7-1-5-1-1-2 M1119 496l-2 2-4 2-7 2-8 1-11 2-11 1-11 1-11 0-9 0-7-1-4-1-2-1 M1119 500l-1 2-4 2-7 2-8 2-11 1-11 2-11 0-10 1-9-1-7 0-5-1-1-2 M1120 505l-1 2-4 2-7 2-8 1-11 2-11 1-11 1-10 0-9 0-7-1-4-1-2-2 M1121 510l-1 1-4 2-7 2-8 2-11 1-11 1-11 1-10 0-9 0-6-1-5-1-1-1 M1124 523l-1 2-4 2-7 2-8 1-10 2-11 1-11 0-10 1-9-1-6 0-4-2-2-1 M1125 528l-2 1-4 2-6 2-8 2-10 1-11 1-11 1-10 0-8 0-7-1-4-1-2-2 M1126 532l-2 2-4 2-6 2-8 1-10 2-11 1-10 0-10 0-9 0-6-1-5-1-1-1 M1128 541l-2 2-4 2-6 2-8 1-10 1-10 1-11 1-10 0-8 0-7-1-4-1-1-2 M1129 546l-1 2-4 1-7 2-8 2-10 1-10 1-10 0-10 1-9-1-6-1-4-1-2-1 M1130 550l-1 2-4 2-7 1-8 2-9 1-11 1-10 1-10 0-8 0-7-1-4-1-1-2 M1131 555l-1 1-4 2-6 2-9 1-9 2-11 1-10 0-10 0-8 0-6-1-4-1-2-1 M1132 559l-1 2-4 2-6 1-8 2-10 1-10 1-11 1-9 0-9-1-6 0-4-1-2-2 M1133 564l-1 1-4 2-6 2-8 1-10 2-10 1-10 0-10 0-8 0-7-1-4-1-1-2 M1137 577l-2 2-3 2-7 1-8 2-9 1-10 1-11 0-9 1-8-1-7-1-4-1-1-1 M1138 582l-2 1-3 2-7 2-8 1-9 2-10 0-10 1-10 0-8 0-7-1-4-1-1-2 M1139 586l-2 2-3 2-7 1-8 2-9 1-10 1-10 0-10 0-8 0-6-1-4-1-2-1 M1139 591l-1 2-4 1-6 2-8 1-9 2-10 0-10 1-10 0-8 0-6-1-4-1-2-2 M1140 596l-1 1-4 2-6 1-8 2-9 1-10 1-10 0-10 0-8 0-6-1-4-1-1-1 M1141 600l-1 2-4 1-6 2-8 1-9 2-10 0-10 1-9 0-9-1-6 0-4-2-1-1 M1143 609l-1 2-4 1-6 2-8 1-9 2-10 0-10 1-9 0-8-1-6 0-4-2-2-1 M1144 614l-1 1-4 2-6 1-8 2-9 1-10 1-10 0-9 0-8 0-6-1-4-1-2-2 M1148 632l-2 1-3 2-6 2-8 1-9 1-10 1-9 0-9 0-8 0-6-1-4-1-2-2 M1148 636l-1 2-3 2-6 1-8 1-9 1-9 1-10 0-9 0-8 0-6-1-3-1-2-1 M1149 646l-1 1-3 2-6 1-7 1-9 1-9 1-10 0-8 0-8-1-6 0-3-2-1-1 M1150 650l-1 2-4 1-5 2-8 1-8 1-9 0-9 0-9 0-7 0-6-1-4-1-1-2 M1150 655l-1 1-3 2-6 1-7 1-8 1-9 1-9 0-9 0-7-1-5-1-4-1-1-1 M1151 664l-1 2-3 1-6 1-6 1-8 1-9 0-9 0-8 0-7 0-5-1-4-1-1-2 M1152 669l-1 1-4 1-5 2-7 1-8 0-8 1-9 0-8-1-6 0-6-1-3-1-1-1 M1152 673l-1 2-3 1-5 1-7 1-8 1-8 0-8 0-8 0-7-1-5-1-3-1-1-1 M1153 678l-2 1-3 1-5 2-6 0-8 1-8 0-8 0-8 0-6-1-5 0-4-2-1-1 M1153 683l-1 1-3 1-5 1-6 1-8 0-8 1-8 0-7-1-7 0-5-1-3-1-1-1 M1153 687l-1 1-3 2-5 1-6 0-7 1-8 0-8 0-8 0-6-1-5-1-3-1-1-1 M1154 692l-1 1-3 1-5 1-6 1-8 1-8 0-8 0-7-1-6 0-5-1-3-1-2-1 M1154 697l-1 1-3 1-5 1-6 1-7 0-8 0-8 0-7 0-7-1-5-1-3-1-1-1 M1155 701l-1 1-3 1-5 1-6 1-8 1-8 0-7 0-8 0-6-1-5-1-3-1-1-1 M1155 706l-1 1-3 1-5 1-6 1-7 0-8 1-8 0-7-1-6-1-5 0-3-1-1-2 M1156 710l-1 2-3 1-5 1-6 0-8 1-7 0-8 0-7 0-7-1-4-1-3-1-1-1 M1156 720l-1 1-3 1-4 1-6 1-8 0-7 0-8 0-7 0-6-1-5-1-3-1-1-1 M1157 724l-1 1-3 1-5 1-6 1-7 1-8 0-7 0-7-1-7 0-4-1-3-1-1-1 M1158 743l-1 1-2 1-5 1-6 0-7 1-7 0-8 0-7 0-6-1-4-1-3-1-1-1 M1159 747l-1 1-3 1-5 1-5 1-7 1-8 0-7 0-7-1-6-1-5 0-2-1-1-2 M1160 757l-1 1-3 1-5 1-5 0-7 1-8 0-7 0-7-1-6 0-5-1-3-1-1-1 M1160 761l-1 1-2 1-5 1-6 1-7 0-7 0-8 0-7 0-6-1-4-1-3-1-1-1 M1161 766l-1 1-3 1-5 1-5 1-7 0-8 0-7 0-7 0-6-1-5-1-3-1-1-1 M1161 770l-1 2-2 1-5 0-6 1-7 1-7 0-8 0-7-1-6-1-5 0-2-1-1-2 M1162 775l-1 1-3 1-4 1-6 1-7 0-8 0-8 0-7 0-6-1-4-1-3-1-1-1 M1034 226l2 4 2 4 1 5 2 4 2 4 2 5 2 4 1 4 1 5 2 4 1 5 1 4 2 5 1 4 1 5 1 4 1 5 2 4 0 5 2 4 1 5 1 4 2 4 1 5 1 4 1 5 1 4 2 5 1 4 2 5 2 4 1 4 1 5 2 4 2 4 1 5 2 4 1 5 1 4 2 5 1 4 1 4 2 5 1 4 1 5 1 4 2 5 1 4 2 5 1 4 1 4 2 5 1 4 2 5 1 4 1 5 1 4 2 4 1 5 1 4 1 5 1 4 1 5 1 5 1 4 1 5 1 4 1 5 1 4 0 5 2 4 1 5 1 4 1 5 1 4 1 5 1 4 1 5 2 4 1 5 0 4 1 5 1 5 1 4 1 5 1 4 1 5 1 4 1 5 1 4 1 5 0 4 1 5 0 5 1 4 0 5 1 5 0 4 1 5 0 4 1 5 0 5 1 4 0 5 0 5 1 4 0 5 0 4 1 5 0 5 0 4 1 5 1 4 0 5 0 5 1 4 0 5 1 5 0 4 1 5 0 4 1 5 M1047 256l1 5 2 4 0 5 2 4 1 5 2 4 1 5 1 4 1 5 1 4 1 5 2 4 1 5 1 4 1 5 1 4 2 5 1 4 1 5 2 4 1 5 1 4 2 4 1 5 2 4 2 5 1 4 1 4 2 5 1 4 2 5 1 4 2 4 1 5 1 4 1 5 2 4 1 5 1 4 2 4 1 5 1 4 2 5 1 4 2 5 1 4 1 5 1 4 2 4 1 5 1 4 2 5 1 4 1 5 1 4 1 5 1 4 1 5 1 4 0 5 1 4 1 5 1 5 2 4 0 5 2 4 1 5 1 4 1 5 1 4 1 5 1 4 1 5 1 4 1 5 1 4 1 5 1 4 1 5 1 4 1 5 1 4 0 5 2 5 0 4 0 5 1 4 0 5 1 5 0 4 1 5 0 4 1 5 0 5 1 4 0 5 0 4 1 5 0 5 1 4 1 5 0 5 0 4 0 5 1 4 0 5 1 5 0 4 1 5 0 4 1 5 0 5 1 4 0 5 1 5 M1030 223l3 4 2 4 3 4 1 5 2 4 2 4 1 5 2 4 2 4 1 5 1 4 1 5 2 4 1 5 1 4 2 5 0 4 2 5 1 4 1 5 1 4 2 5 1 4 1 5 1 5 1 4 1 5 2 4 1 4 2 5 1 4 1 5 2 4 2 5 1 4 1 4 2 5 1 4 2 4 1 5 2 4 1 5 1 4 2 5 1 4 1 4 2 5 1 4 1 5 2 4 1 5 1 4 2 4 1 5 2 4 1 5 1 4 1 5 2 4 1 5 2 4 1 4 0 5 2 5 0 4 1 5 1 4 1 5 1 4 1 5 1 4 1 5 1 4 1 5 1 4 1 5 1 4 2 5 1 4 0 5 2 4 0 5 2 4 1 5 0 4 1 5 1 5 1 4 1 5 1 4 1 5 1 4 0 5 1 4 0 5 1 5 1 4 0 5 0 4 1 5 0 5 0 4 1 5 1 4 0 5 1 5 0 4 0 5 1 4 0 5 1 5 0 4 0 5 1 4 0 5 0 5 1 4 1 5 0 5 1 4 0 5 1 4 0 5 M1023 217l2 4 3 4 2 4 2 4 2 4 1 5 2 4 1 5 2 4 1 5 2 4 1 5 2 4 0 5 2 4 0 5 1 4 2 5 1 5 0 4 1 5 1 4 1 5 1 5 1 4 1 5 1 4 1 5 1 4 1 5 1 5 2 4 0 5 2 4 1 5 2 4 1 4 2 5 1 4 2 4 1 5 2 4 1 4 2 5 1 4 2 4 1 5 1 4 2 5 1 4 1 4 2 5 1 4 1 5 2 4 1 4 2 5 1 4 1 5 2 4 1 5 1 4 2 4 1 5 1 4 1 5 0 4 1 5 2 4 0 5 2 4 1 5 0 4 1 5 2 4 1 5 1 4 1 5 1 4 1 5 1 4 2 5 0 4 2 5 1 4 1 5 0 4 2 5 0 4 1 5 1 4 1 5 1 5 1 4 1 5 1 4 0 5 1 4 0 5 1 4 0 5 1 4 1 5 0 4 1 5 0 4 0 5 1 5 1 4 0 5 1 4 0 5 0 5 1 4 0 5 1 4 0 5 1 5 0 4 1 5 0 4 1 5 0 5 1 4 0 5 M1042 269l1 5 1 4 1 5 2 5 0 4 1 5 1 4 1 5 1 5 1 4 0 5 1 5 1 4 1 5 1 4 1 5 0 5 2 4 1 5 1 4 1 5 1 4 1 5 2 4 1 4 2 5 1 4 2 4 1 5 2 4 1 4 2 5 1 4 2 4 1 5 2 4 1 5 1 4 2 4 2 5 1 4 1 4 2 5 1 4 1 5 2 4 1 5 1 4 2 4 1 5 1 4 2 5 1 4 0 5 1 4 1 5 1 4 1 5 1 4 1 5 1 4 1 5 1 4 2 5 1 4 1 5 1 4 1 5 1 4 2 5 1 4 0 5 2 4 0 5 1 4 2 5 0 4 1 5 1 4 1 5 1 4 1 5 1 4 1 5 0 4 1 5 1 4 0 5 1 4 1 5 0 4 1 5 0 4 1 5 0 4 0 5 1 5 1 4 0 5 0 4 1 5 0 5 1 4 0 5 1 4 0 5 1 4 0 5 1 5 0 4 1 5 1 5 0 4 M1039 266l1 4 1 5 1 4 1 5 1 5 1 4 0 5 1 4 1 5 1 5 1 4 0 5 1 4 1 5 0 5 1 4 1 5 1 5 0 4 1 5 2 4 1 5 1 4 1 5 2 4 1 5 2 4 1 4 2 4 2 5 1 4 2 4 1 5 1 4 2 4 1 5 2 4 1 4 1 5 2 4 1 4 2 5 1 4 1 5 2 4 1 5 1 4 2 4 1 5 2 4 1 5 1 4 2 5 1 4 1 5 1 4 0 5 2 4 1 5 0 4 2 4 1 5 1 4 1 5 1 4 1 5 1 4 2 5 1 4 1 5 1 4 1 5 1 4 1 5 1 4 1 5 1 4 1 5 1 4 1 5 1 4 1 5 1 4 1 5 0 4 1 5 1 4 1 5 0 4 1 5 1 4 0 5 1 4 0 5 1 4 0 5 1 4 1 5 0 5 0 4 1 5 1 4 0 5 0 4 1 5 0 5 1 4 0 5 1 4 1 5 0 5 0 4 1 5 1 4 M1027 235l2 4 1 5 2 4 1 5 1 4 2 5 1 4 1 5 1 5 1 4 1 5 1 4 0 5 1 5 0 4 1 5 1 5 0 4 0 5 2 4 0 5 1 5 0 4 1 5 1 5 0 4 1 5 1 4 1 5 1 4 1 5 2 4 2 5 1 4 1 4 2 4 2 5 2 4 1 4 1 5 2 4 2 4 1 5 1 4 2 4 2 5 1 4 1 4 2 5 1 4 2 5 1 4 1 4 1 5 2 4 1 5 2 4 1 5 1 4 2 4 0 5 2 4 1 5 1 4 1 5 1 4 1 5 0 4 1 5 2 4 1 5 1 4 1 4 2 5 1 4 1 5 1 4 1 5 1 4 1 5 1 4 1 5 1 4 1 5 1 4 1 5 1 4 1 5 1 4 1 5 1 4 1 5 1 4 1 5 0 4 1 5 1 4 0 5 1 4 1 4 1 5 0 4 0 5 1 5 1 4 0 5 0 4 1 5 1 5 0 4 0 5 1 4 0 5 1 4 1 5 0 5 0 4 1 5 0 5 1 4 1 5 M1025 241l1 4 2 5 1 4 1 5 1 4 1 5 0 5 1 4 1 5 1 4 0 5 1 5 0 4 1 5 0 5 0 4 1 5 0 5 0 4 1 5 0 5 1 4 0 5 0 5 1 4 1 5 1 4 1 5 0 5 1 4 1 4 2 5 2 4 1 4 2 4 2 5 2 4 1 4 2 4 1 5 2 4 2 4 1 5 2 4 1 4 1 4 2 5 1 4 2 5 1 4 2 4 1 5 1 4 2 5 1 4 1 5 2 4 1 4 1 5 1 4 1 5 2 4 1 5 0 4 2 5 1 4 1 4 1 5 1 4 1 5 2 4 1 5 1 4 1 5 2 4 1 4 1 5 1 4 1 5 1 4 1 5 1 4 1 5 1 4 1 5 1 4 1 5 1 4 1 5 1 4 1 5 1 4 1 5 1 4 1 4 0 5 1 4 1 5 1 4 1 4 1 5 0 5 1 4 0 5 0 4 1 5 1 4 0 5 1 5 0 4 1 5 0 4 1 5 1 4 0 5 0 5 1 4 0 5 1 5 1 4 M1017 224l2 4 1 4 2 5 1 4 1 5 1 4 1 5 1 5 1 4 1 5 1 4 0 5 1 5 1 4 0 5 1 5 0 4 0 5 0 4 0 5 1 5 0 4 1 5-1 5 1 4 0 5 0 5 0 4 1 5 1 5 0 4 1 5 1 5 0 4 2 4 2 5 1 4 2 4 2 4 1 5 2 4 2 4 1 4 2 5 2 4 2 4 1 4 2 5 1 4 2 4 1 4 2 5 1 4 1 5 2 4 1 4 2 5 1 4 1 5 1 4 2 5 1 4 2 4 1 5 1 4 1 5 1 4 1 5 1 4 1 5 1 4 1 4 2 5 1 4 1 5 1 4 2 5 1 4 1 4 1 5 1 4 2 5 0 4 2 5 1 4 0 5 2 4 1 5 0 4 2 5 1 4 1 5 1 4 1 5 1 4 1 4 1 5 1 4 1 5 1 4 1 4 1 5 0 4 1 5 1 4 1 5 0 4 0 5 1 4 1 5 1 5 0 4 0 5 1 4 0 5 1 4 1 5 0 5 0 4 1 5 0 4 1 5 1 5 0 4 M1013 215l1 5 2 4 1 5 1 4 2 4 1 5 1 5 1 4 1 5 1 4 0 5 1 4 1 5 1 5 0 4 1 5 0 5 0 4 0 5 1 5 0 4 0 5 0 5 0 4 0 5 0 5 0 4 1 5-1 5 1 4 0 5 1 4 0 5 0 5 1 4 1 5 1 4 2 4 2 5 2 4 1 4 2 4 2 4 2 5 1 4 2 4 1 4 2 5 2 4 1 4 2 4 1 5 2 4 2 4 1 5 2 4 1 5 1 4 2 4 1 5 1 4 1 5 2 4 1 5 2 4 1 4 1 5 1 4 1 5 1 4 1 5 2 4 1 4 1 5 1 4 2 5 0 4 2 5 1 4 1 4 2 5 1 4 1 5 1 4 1 5 1 4 1 5 1 4 1 5 1 4 1 5 1 4 2 5 1 4 1 5 1 4 1 4 1 5 0 4 2 4 1 5 1 4 1 5 1 4 1 4 1 5 1 4 0 5 0 4 1 5 1 5 0 4 1 5 0 4 1 5 1 4 0 5 1 5 0 4 1 5 0 4 1 5 0 4 0 5 1 5 0 4 M1013 220l1 5 1 4 1 5 2 4 1 5 0 4 1 5 1 4 1 5 1 5 1 4 0 5 1 4 0 5 1 5 0 4 0 5 0 5 0 4 0 5 0 5 0 4 0 5 0 5 0 4 0 5-1 5 0 4 1 5 0 5 0 4 1 5 0 5 0 4 1 5 1 4 2 4 2 4 2 5 2 4 1 4 2 4 2 4 1 5 2 4 2 4 2 4 1 4 2 5 2 4 2 4 1 4 1 5 2 4 1 5 1 4 2 5 1 4 1 4 2 5 2 4 1 5 1 4 1 4 2 5 1 4 1 5 1 4 1 5 1 4 2 4 1 5 1 4 1 5 2 4 1 4 1 5 1 4 2 5 1 4 1 5 1 4 1 5 2 4 1 5 1 4 1 5 1 4 1 4 1 5 1 4 1 5 1 4 1 5 2 4 1 5 1 4 1 4 1 5 1 4 1 4 1 5 1 4 1 4 1 5 1 4 0 5 1 4 1 5 0 5 1 4 0 5 1 4 0 5 1 4 1 5 0 5 1 4 1 5 0 4 0 5 1 4 0 5 1 5 0 4 M1018 252l1 5 0 5 1 4 1 5 0 4 1 5 0 5 1 4 0 5 0 5-1 4 0 5 0 5 0 4 0 5 0 5-1 4 0 5 0 5 0 4 0 5 0 5 0 4 0 5 0 5 1 4 0 5 0 4 2 5 2 4 1 4 2 4 2 4 2 5 2 4 1 4 2 4 2 4 2 5 2 4 1 4 2 4 2 4 2 5 1 4 1 4 2 5 1 4 2 4 1 5 1 4 1 5 2 4 1 5 2 4 1 4 2 5 0 4 2 5 1 4 1 4 1 5 2 4 1 5 1 4 1 5 2 4 1 4 1 5 1 4 2 5 1 4 1 4 2 5 1 4 1 5 1 4 1 5 1 4 1 5 1 4 1 5 2 4 0 5 2 4 1 5 1 4 1 4 2 5 1 4 0 4 2 5 1 4 1 4 1 5 1 4 2 4 0 5 1 4 1 5 1 4 0 5 1 5 1 4 0 5 1 4 0 5 1 4 0 5 1 4 1 5 0 5 0 4 1 5 1 4 0 5 1 5 0 4 M1009 226l1 4 1 5 1 4 0 5 1 5 0 4 1 5 0 5 1 4 0 5 1 5 0 4 0 5 1 4-1 5 0 5 0 4-1 5 0 5 0 4-1 5-1 5 0 4 0 5-1 5 0 4-1 5 0 4 0 5 0 5 0 4 0 5 0 5 0 4 2 5 2 4 1 4 2 4 2 4 2 4 2 4 2 5 2 4 2 4 2 4 1 4 2 5 2 4 2 4 2 4 1 4 2 5 1 4 1 5 2 4 1 4 2 5 1 4 1 5 2 4 1 4 1 5 2 4 1 5 1 4 2 4 1 5 1 4 2 5 1 4 1 4 1 5 2 4 1 5 1 4 2 4 1 5 1 4 2 5 1 4 1 5 1 4 1 5 1 4 2 4 0 5 2 4 1 5 1 4 1 5 1 4 1 5 1 4 2 4 1 5 2 4 1 4 1 5 1 4 2 4 1 5 1 4 1 4 2 5 0 4 1 5 1 4 1 5 0 4 1 5 0 4 1 5 0 5 1 4 1 5 1 4 0 5 1 4 0 5 1 5 0 4 1 5 0 4 1 5 M1005 212l1 5 1 4 1 5 0 5 1 4 1 5 0 4 1 5 0 5 1 4 0 5 0 5 1 4 0 5 0 5 1 4 0 5-1 5 0 4 0 5-1 4 0 5-1 5-1 4 0 5-1 5 0 4-1 5 0 5-1 4 0 5-1 4 0 5 0 5 0 4 0 5 0 5 2 4 1 4 2 4 2 4 3 4 1 5 2 4 2 4 2 4 2 4 2 4 2 5 1 4 2 4 2 4 2 4 2 4 1 5 2 4 1 5 2 4 0 4 2 5 1 4 2 5 1 4 2 4 1 5 1 4 2 5 1 4 1 4 2 5 1 4 1 5 2 4 1 4 1 5 1 4 2 5 1 4 2 4 1 5 1 4 1 5 2 4 1 5 1 4 1 4 2 5 1 4 1 5 1 4 1 5 1 4 1 5 1 4 1 5 2 4 1 4 1 5 2 4 1 4 1 5 1 4 2 4 2 4 1 5 1 4 1 4 1 5 1 4 1 5 0 5 1 4 1 5 0 4 1 5 1 4 0 5 1 4 1 5 0 5 1 4 0 5 1 4 0 5 0 5 1 4 0 5 M1009 249l0 5 0 5 1 4 0 5 0 5 1 4 0 5 0 5 1 4-1 5-1 5-1 4 0 5-1 4-1 5 0 5-1 4 0 5-1 4-1 5 0 5-1 4-1 5 0 5 0 4 0 5-1 5 0 4 0 5 2 4 2 4 2 4 1 4 2 5 2 4 3 4 1 4 3 4 1 4 2 4 2 5 2 4 2 4 2 4 2 4 1 4 2 5 1 4 2 5 1 4 2 4 1 5 1 4 2 5 1 4 1 4 2 5 1 4 1 5 2 4 1 4 2 5 1 4 1 5 2 4 1 4 1 5 2 4 1 5 1 4 2 4 1 5 2 4 1 5 1 4 1 4 1 5 1 4 1 5 1 4 2 5 1 4 1 5 1 4 1 5 2 4 1 4 1 5 1 4 2 4 1 5 1 4 2 4 1 5 2 4 1 4 2 5 1 4 1 4 1 5 1 4 1 5 0 4 1 5 1 4 0 5 1 5 1 4 0 5 1 4 1 5 1 4 0 5 1 4 0 5 0 5 1 4 0 5 1 4 M1005 254l0 5 1 5 0 4 0 5 0 5 0 4 1 5-1 5 0 4-1 5-1 4-1 5 0 5-1 4-1 5-1 4-1 5-1 5-1 4 0 5-1 4-1 5 0 5-1 4 0 5-1 5 0 4-1 5 2 4 2 4 3 4 1 4 2 4 2 5 2 4 2 4 2 4 2 4 3 4 1 4 2 4 2 5 2 4 2 4 2 4 1 4 2 5 1 4 2 5 1 4 1 4 2 5 1 4 2 5 1 4 1 5 2 4 1 4 1 5 2 4 1 4 2 5 1 4 2 5 1 4 1 4 2 5 1 4 1 4 1 5 2 4 1 5 2 4 1 4 1 5 1 4 2 5 1 4 1 5 1 4 1 5 1 4 2 5 1 4 1 5 1 4 1 4 2 5 2 4 1 4 2 4 1 5 2 4 1 4 2 5 1 4 2 4 1 4 1 5 1 5 0 4 1 5 1 4 1 5 0 4 1 5 1 4 0 5 1 4 1 5 1 5 0 4 1 5 0 4 1 5 0 5 1 4 0 5 M1004 254l0 5 0 5 1 4-1 5 1 5 0 4-1 5 1 5-1 4-1 5-1 4-1 5-1 5-1 4-1 5-1 4-1 5-1 5-1 4-1 5 0 4-1 5-1 5 0 4-1 5 0 4-1 5 0 5 2 4 2 4 2 4 2 4 2 4 2 4 2 4 2 4 2 5 2 4 2 4 2 4 2 4 2 4 2 4 2 5 2 4 1 4 2 5 1 4 2 4 1 5 1 4 2 5 1 4 1 4 2 5 1 4 1 5 2 4 1 4 2 5 1 4 2 4 1 5 1 4 2 5 1 4 2 4 1 5 2 4 1 4 1 5 2 4 1 5 1 4 2 5 1 4 1 4 1 5 1 4 1 5 1 4 2 5 1 4 1 5 1 4 1 5 2 4 1 4 2 5 1 4 2 4 1 4 2 5 2 4 2 4 1 4 2 5 1 4 1 5 0 4 1 5 1 4 0 5 1 4 1 5 1 4 1 5 1 5 0 4 1 5 0 4 1 5 1 4 0 5 1 5 0 4 0 5 1 4 M1002 259l-1 5 0 4 1 5 0 5 0 4 0 5 0 5-1 4-1 5-1 4-1 5-2 4 0 5-2 4 0 5-2 4-1 5-1 5-1 4-1 5 0 4-1 5-1 4-1 5 0 5-1 4-1 5 2 4 3 4 2 4 2 4 2 4 2 4 2 4 2 5 2 4 2 4 2 4 2 4 2 4 2 4 2 4 2 5 2 4 1 4 2 5 2 4 1 4 1 5 2 4 1 5 1 4 2 4 1 5 2 4 1 5 1 4 2 4 2 5 1 4 1 4 2 5 1 4 2 5 1 4 2 4 1 5 1 4 2 5 1 4 1 4 2 5 1 4 1 5 1 4 2 5 1 4 1 4 2 5 0 4 2 5 1 4 1 5 1 4 1 5 2 4 1 4 2 5 2 4 2 4 1 4 2 5 1 4 2 4 1 5 2 4 2 4 0 5 1 4 1 5 1 4 1 5 0 4 1 5 1 5 0 4 1 5 1 4 1 5 0 4 2 5 0 4 0 5 0 5 1 4 0 5 0 4 M1000 245l0 4 0 5 0 5 0 4 0 5 0 4 1 5-1 5 0 4 0 5-1 4-1 5-1 4-1 5-1 4-2 5-1 4-1 5-1 4-1 5-1 4-1 5-1 5-1 4-1 5 0 4-1 5-1 4-1 5 0 5 1 4 3 4 2 4 2 4 2 4 2 4 2 4 3 4 1 4 3 5 1 4 3 4 2 4 2 4 2 4 2 4 2 5 1 4 1 4 2 5 1 4 2 5 1 4 1 4 2 5 1 4 2 5 1 4 2 4 1 5 1 4 2 4 2 5 1 4 1 5 2 4 1 4 2 5 1 4 2 5 1 4 2 4 1 5 1 4 2 5 1 4 1 4 1 5 2 4 1 5 1 4 1 5 2 4 0 5 2 4 1 5 1 4 2 4 1 5 1 4 2 4 2 5 1 4 2 4 2 5 2 4 1 4 2 5 1 4 2 4 1 5 1 4 1 5 0 4 1 5 1 4 1 5 0 5 1 4 1 5 1 4 0 5 1 4 1 5 0 4 1 5 0 5 1 4 0 5 0 5 M1000 244l0 5 0 5 0 4 0 5 0 4 0 5 0 5 0 4 0 5 0 5-1 4-1 5-1 4-2 4-1 5-1 4-1 5-1 4-1 5-1 4-2 5-1 4-1 5-1 4-1 5 0 4-1 5-1 5 0 4-1 5 2 4 2 4 3 4 1 4 3 4 2 4 2 4 2 5 2 4 2 4 2 4 2 4 3 4 2 4 2 4 2 5 2 4 1 4 1 5 1 4 2 4 2 5 1 4 1 5 1 4 2 4 1 5 2 4 1 5 2 4 1 4 2 5 1 4 2 5 1 4 1 4 2 5 2 4 1 4 1 5 2 4 1 5 2 4 1 4 1 5 1 4 2 5 1 4 1 5 1 4 2 5 1 4 1 5 1 4 1 4 1 5 2 4 1 5 2 4 1 5 2 4 2 4 1 4 2 5 2 4 1 4 2 5 2 4 1 4 2 5 1 4 1 5 0 4 1 5 1 4 0 5 1 4 1 5 1 5 1 4 1 5 0 4 1 5 0 4 1 5 0 5 1 4 0 5 1 4 0 5" stroke="#fafafb" stroke-width="2"/><path d="M758 50l2 2 5 3 8 1 11 2 12 1 13 0 13 0 12-1 11-2 8-1 5-3 2-2 M758 59l2 3 5 2 9 2 11 2 13 1 15 0 14 0 13-1 11-2 9-2 5-2 2-3 M758 64l2 2 5 3 9 2 12 1 13 1 14 1 14-1 14-1 11-1 9-2 5-3 2-2 M756 105l2 3 6 3 10 2 13 2 14 1 16 0 16 0 15-1 12-2 10-2 6-3 2-3 M756 114l3 3 6 3 10 3 14 1 15 2 17 0 16 0 16-2 13-1 10-3 7-3 2-3 M756 124l3 3 6 3 11 2 15 2 16 2 18 0 18 0 16-2 15-2 11-2 6-3 3-3 M756 128l3 4 7 3 11 2 15 2 17 2 18 0 19 0 17-2 15-2 11-2 7-3 2-4 M731 174l4 6 13 6 20 5 27 3 31 3 33 0 34 0 31-3 26-3 21-5 12-6 5-6 M631 251l7 9 21 9 33 8 43 6 49 3 54 2 53-2 50-3 43-6 33-8 20-9 7-9 M626 280l7 10 22 10 34 8 44 6 51 3 56 2 55-2 52-3 44-6 34-8 22-10 7-10 M625 295l7 10 21 10 35 8 45 6 52 4 56 1 55-1 52-4 45-6 35-8 21-10 7-10 M629 379l7 9 18 8 30 7 38 5 45 4 49 1 48-1 45-4 38-5 30-7 18-8 7-9 M630 385l6 8 18 8 29 7 37 5 44 3 46 1 47-1 44-3 37-5 29-7 18-8 6-8 M633 390l6 8 17 8 28 6 36 5 41 3 45 1 45-1 42-3 36-5 28-6 17-8 6-8 M642 406l6 8 16 7 27 7 34 4 40 3 43 1 43-1 40-3 35-4 26-7 17-7 6-8 M651 423l6 8 16 6 25 6 33 5 38 3 41 1 41-1 39-3 33-5 25-6 16-6 5-8 M654 429l6 7 15 7 25 6 33 4 37 3 41 1 41-1 37-3 33-4 25-6 15-7 6-7 M670 457l5 7 15 6 23 6 30 4 35 2 37 1 37-1 35-2 30-4 23-6 15-6 5-7 M677 475l5 6 14 6 22 5 29 4 34 3 36 1 36-1 34-3 29-4 23-5 14-6 4-6 M677 480l5 7 14 6 22 5 29 4 34 3 36 1 36-1 34-3 29-4 22-5 14-6 5-7 M678 486l4 7 14 6 22 5 29 4 34 2 36 1 36-1 33-2 29-4 22-5 14-6 5-7 M678 528l5 7 14 6 22 5 28 4 33 2 36 1 35-1 34-2 28-4 22-5 14-6 4-7 M679 553l4 6 14 6 22 5 29 4 33 3 35 1 36-1 33-3 29-4 22-5 13-6 5-6 M679 559l4 6 14 6 22 6 29 4 33 2 36 1 35-1 34-2 28-4 22-6 14-6 5-6 M681 572l5 6 13 6 22 5 29 4 33 2 35 1 36-1 33-2 28-4 22-5 14-6 5-6 M681 597l4 6 14 7 23 5 29 4 34 2 36 1 36-1 34-2 29-4 23-5 14-7 5-6 M679 623l5 7 14 6 23 5 30 4 34 3 37 1 38-1 34-3 30-4 23-5 14-6 5-7 M669 704l5 7 15 6 24 6 31 4 36 3 39 1 39-1 36-3 31-4 24-6 15-6 5-7 M665 732l6 7 15 6 24 6 32 4 36 3 40 1 39-1 37-3 31-4 25-6 15-6 5-7 M671 208l-8 5-5 4-5 5-5 5-5 5-2 4-2 5-2 5-2 5-2 4-1 5-1 5-1 4-1 5-1 5-1 4-1 5-1 5 0 5-1 4 1 5-1 5 0 5 0 5-1 5 0 5 1 5 1 5 0 6 1 5 1 5 0 6 1 5 1 6 0 5 1 6 3 5 3 6 3 6 3 5 4 6 3 6 3 6 3 5 3 6 3 6 4 6 3 6 4 5 3 6 3 6 1 6 0 6 0 6 0 6 0 6 1 6 0 6 0 6 0 6 0 6 0 7 1 6 0 6 0 6 0 7 2 6 1 7 1 6 0 6-1 7 0 7 0 6-1 7 0 6 0 7-1 6-1 7 0 6-1 7 0 6-2 7-1 6-2 7-1 6-2 7-1 6-1 7-2 7-1 6 M683 205l-9 5-8 5-6 5-4 5-5 5-5 5-2 4-2 5-2 5-2 5-2 4-1 5-2 5-1 4-1 5-1 5-1 5-2 4 0 5 0 5 0 5-1 5-1 4 0 5-1 5 1 5 0 5 0 5 1 6 0 5 1 5 0 5 2 6 0 5 0 6 2 5 0 6 3 5 4 6 3 5 3 6 3 6 3 5 4 6 3 6 3 6 4 5 3 6 3 6 3 6 4 5 3 6 1 6 0 6 0 6 1 6 0 6 0 6 0 6 0 6 1 6 0 6 0 7 0 6 1 6 0 6 0 7 1 6 M737 181l-12 5-11 5-12 6-10 5-7 5-8 5-9 5-5 4-5 5-5 5-5 5-2 5-2 5-2 4-2 5-2 5-1 5-1 4-2 5-1 5-1 4-2 5-1 5 0 5-1 5 0 4-1 5 0 5-1 5 0 5 0 5 0 5 0 5 1 5 0 5 1 6 0 5 1 5 1 6 1 5 1 5 0 6 3 5 3 6 4 6 3 5 3 6 4 6 3 5 3 6 3 6 4 5 3 6 4 6 3 6 4 5 2 6 1 6 0 6 1 6 0 6 0 6 0 6 0 6 1 6 0 6 0 6 0 7 1 6 0 6 0 6 1 7 1 6 1 7 2 6 0 7-1 6 0 7 0 6-1 7 0 6 0 7-1 6-1 7 0 6-1 7 0 6-2 7-2 6-1 7-2 6-1 7-2 7-2 6-1 7-2 7-1 6 0 7-1 7-1 7-1 7-1 7-1 7 M709 200l-9 5-8 5-8 5-8 5-5 5-5 5-4 5-5 5-2 5-3 5-2 5-2 5-2 4-1 5-1 5-2 5-1 4-2 5-2 5-1 5-1 4 0 5-1 5 0 5-1 5-1 5 0 5-1 5 0 5 1 5 0 5 1 5 1 5 0 5 1 6 0 5 1 5 1 6 1 5 2 5 4 6 3 5 3 6 4 5 3 6 3 6 4 5 3 6 3 6 4 5 3 6 4 6 3 6 3 5 1 6 0 6 0 6 0 6 1 6 0 6 0 6 1 6 0 6 0 6 1 6 0 7 1 6 0 6 0 7 1 6 2 6 1 7 0 6 0 7 0 6 0 7 0 7-1 6 0 7-1 6 0 7-1 6-1 7-1 6-1 7-2 6-2 7-2 7-1 6-3 7-1 6-2 7-1 7-1 7-2 7 0 6-1 7-1 7-1 7-1 7 M762 159l-1 5-3 6-4 5-5 5-4 5-11 5-11 6-12 5-8 5-8 5-8 5-8 6-5 5-5 5-5 5-4 5-2 4-2 5-3 5-2 5-2 5-1 5-1 4-2 5-1 5-2 5-1 4-1 5-1 5-1 5-1 5 0 4-2 5 0 5 0 5-1 5-1 5 1 5 1 5 0 6 1 5 0 5 1 5 0 5 2 6 0 5 1 5 3 5 3 6 4 5 2 6 4 6 3 5 4 6 3 5 3 6 4 6 3 5 3 6 4 6 4 6 2 5 1 6 0 6 1 6 0 6 0 6 1 6 0 6 0 6 0 6 1 6 0 6 0 7 1 6 1 6 0 7 1 6 2 6 1 7 0 6 0 7 0 6 0 7 0 7-1 6 0 7-1 6 0 7-1 6-1 7-1 6-2 7-1 6-2 7-2 7-2 6-2 7-1 7-3 6-1 7-1 7-1 7-1 6-1 7-1 7-1 7 0 7 M766 55l1 5 0 5 0 4 0 5 0 5-1 4 0 5 0 5 0 4 0 5 0 5 0 4 1 5 0 5 0 5 0 4 1 5 0 5 1 5 0 5-1 6-1 5-3 5-2 5-4 5-3 5-5 6-11 5-10 5-11 6-9 5-7 5-8 6-7 5-5 5-5 5-5 5-4 5-2 5-2 5-3 5-2 5-2 5-1 4-2 5-1 5-2 5-1 5-2 4-1 5-2 5 0 5-1 5-1 5 0 4-1 5-1 5-1 5 0 5 0 5 1 5 0 6 1 5 0 5 1 5 0 5 1 5 1 6 0 5 3 5 3 5 4 6 3 5 3 6 4 5 3 6 4 6 3 5 4 6 3 5 3 6 3 6 3 5 4 6 0 6 1 6 0 6 0 6 1 6 0 6 0 6 1 6 0 6 0 6 1 6 0 6 0 7 1 6 1 6 1 7 1 6 2 7 0 6 0 7 0 6 0 7 0 6 0 7-1 6 0 7-1 7-1 6-1 7-1 6-2 7-1 6-2 7-2 7-2 6-2 7-2 7-2 6-2 7-1 7-1 7-1 7-1 6-1 7-1 7 0 7 M685 230l-4 5-5 5-4 5-2 5-2 5-2 5-2 5-3 5-1 5-1 5-2 4-2 5-1 5-2 5-1 5-2 4 0 5-1 5-1 5-1 5 0 5-1 5-1 5-1 5 1 5 0 5 1 5 0 5 1 5 0 5 1 5 1 6 0 5 1 5 2 5 3 5 4 6 3 5 4 6 3 6 3 5 3 6 4 5 3 6 4 5 3 6 4 6 3 5 3 6 0 6 1 6 0 6 0 6 0 6 1 6 0 6 1 6 0 6 1 6 0 6 0 6 1 7 0 6 1 6 1 7 1 6 2 6 0 7 1 7-1 6 1 7 0 6-1 7 0 6-1 7 0 6-2 7 0 7-1 6-2 7-2 6-2 7-2 7-2 6-2 7-2 7-2 6-2 7-1 7-1 7-1 7-1 7-1 6-1 7-1 7 M690 238l-4 5-4 5-3 5-2 5-2 5-2 5-2 4-1 5-2 5-2 5-1 5-2 5-2 5-1 4-1 5-1 5-1 5-1 5-1 5-1 5-1 5-1 5 0 5 0 5 1 5 0 5 0 5 1 5 0 5 1 5 0 5 0 5 1 5 2 5 3 6 4 5 3 6 3 5 4 6 3 5 4 6 3 5 3 6 3 5 4 6 3 6 3 5 3 6 1 6 0 6 1 5 0 6 1 6 0 6 0 6 0 6 1 6 0 7 0 6 1 6 1 6 0 7 1 6 1 6 2 7 1 6 1 7 0 6 0 7 0 6 0 7 M772 56l0 5 1 5 0 5 0 4 0 5-1 5 0 4 0 5 0 5 0 4 1 5 0 5 1 5 0 4 0 5 1 5 0 5 1 5 1 5 0 6 0 5-1 5-1 5-1 6-4 5-3 5-4 6-10 5-10 6-9 6-9 5-6 6-8 5-7 5-4 6-5 5-4 5-5 5-1 5-2 5-2 5-3 5-2 5-1 5-2 4-1 5-2 5-2 5-1 5-2 5-1 5-2 4 0 5-1 5-1 5-1 5-1 5-1 5-1 5 1 5 0 5 0 5 1 5 0 5 1 5 0 5 0 5 0 5 1 5 2 5 3 6 4 5 3 6 4 5 2 6 4 5 3 6 4 5 3 6 3 5 3 6 4 5 3 6 3 6 1 6 0 5 1 6 0 6 0 6 0 6 1 6 0 6 0 6 1 6 1 7 0 6 0 6 1 6 1 7 1 6 2 6 1 7 0 6 1 7 0 6 0 7 0 7 0 6-1 7 0 6-1 7-1 7-1 6-1 7-2 6-2 7-2 7-2 6-2 7-2 7-2 6-3 7-1 7-2 7-1 7-1 7-1 6-1 7-1 7-1 7 M783 193l-9 6-8 6-9 6-7 5-6 6-6 5-6 6-4 5-4 6-4 5-4 5-1 5-2 5-3 5-2 5-2 5-1 5-2 5-1 5-2 5-2 5-1 5-2 5-1 5-2 5-1 5-1 4-1 5-2 5 0 6-2 4-1 5 0 5 0 5 0 5 1 5-1 5 0 5 1 5-1 5 0 5 0 5 1 4 4 6 3 5 3 5 3 6 3 5 4 6 3 5 3 5 3 6 3 5 3 6 3 5 3 6 2 5 1 6 0 6 1 6 0 6 1 6 0 6 0 6 1 6 0 6 1 6 0 6 1 6 0 7 2 6 0 6 2 6 1 7 2 6 0 7 1 6 1 7 0 7 0 6 0 7 0 6-1 7-1 6-1 7-1 7-1 6-2 7-2 7-3 6-2 7-2 7-3 7-2 6-2 7 M795 166l0 5-1 6-2 5-2 6-3 5-8 6-8 6-9 6-6 6-6 6-6 5-6 6-4 5-4 5-4 6-3 5-2 5-2 5-1 5-3 5-2 5-1 5-2 5-1 5-2 5-2 5-2 5-2 5-1 5-1 5-2 5-1 5-1 5-1 5-1 5-1 5-1 5 0 5 0 5 0 5 0 5-1 4 0 5 0 5 0 5 0 5-1 5 2 4 3 6 3 5 3 5 3 6 4 5 3 5 3 6 3 5 3 6 3 5 3 5 3 6 3 5 2 6 1 6 0 6 1 6 0 5 0 6 1 6 0 6 0 6 1 6 0 7 1 6 1 6 0 6 1 6 1 7 2 6 1 6 2 7 1 6 0 7 1 6 0 7 0 7 0 6-1 7 0 6-1 7 0 7-2 6-1 7-2 7-2 6-3 7-2 7-2 7-3 6-2 7-2 7-2 7-2 7-1 7-1 7-2 7-1 7-1 7 0 7 M765 248l-3 5-4 6-1 5-1 5-2 5-2 5-2 5-1 5-2 5-1 5-2 5-2 5-2 5-1 5-1 5-2 5-2 5-1 5-1 5-2 5 0 6-2 4-1 5-1 5 0 5 0 5-1 5-1 5-1 5 0 5-1 4-1 5-1 5 0 4 3 5 3 6 3 5 3 5 3 5 2 6 3 5 3 5 3 6 3 5 2 5 2 6 3 5 3 6 0 6 0 5 1 6 0 6 1 6-1 6 1 6 1 6 0 6 1 6 0 6 1 6 1 7 1 6 1 6 1 6 2 7 1 6 M822 191l-1 5-6 7-6 6-6 6-5 6-4 6-5 5-4 6-3 5-3 6-3 5-2 6-1 5-2 5-1 5-2 5-2 5-1 5-1 6-2 5-2 5-1 5-3 5-1 5-2 5-1 5-1 5-2 5-2 5 0 5-2 5-1 5-1 5-1 5-1 5 0 5 0 5-2 4-1 5-1 5-1 5-1 4-2 5 0 4 3 5 3 6 2 5 3 5 3 5 2 6 3 5 3 5 2 6 3 5 3 5 2 6 2 5 2 6 1 5 0 6 1 6 0 6 0 6 1 6 0 6 0 6 1 6 0 6 1 6 0 6 1 6 2 7 1 6 1 6 2 6 1 7 1 6 1 7 1 6 1 7 0 7 1 6-1 7 0 6-1 7-1 7-1 6-1 7-2 7-3 7-2 6-2 7-3 7-2 7-2 7-3 7-2 7-2 7-1 7-1 7-2 7-1 7-1 7-1 7 M854 163l4 6 4 6 3 5 1 6 2 6 1 5-3 7-3 6-2 6-3 6-2 6-2 6-2 6-1 5-2 6-1 5-1 6 0 5-1 5-1 5-2 6 0 5-2 5-1 5-1 5-1 5-1 6-2 5-1 5-2 5-1 5-2 5-2 5 0 6-2 5-1 5-2 5-2 5-1 5-1 5-1 5-1 5-3 4-3 5-2 4-3 5-3 5-3 4-2 4 1 5 2 5 2 5 2 5 2 6 2 5 2 5 1 5 2 5 2 6 2 5 1 5 2 6 2 5 0 6 0 6 0 5 0 6 0 6 1 6 0 6 0 6 1 6 1 6 0 6 1 6 1 6 1 6 1 7 2 6 1 6 2 6 1 7 1 6 2 7 1 7 1 6 0 7 0 6 0 7-1 7-1 7-1 6-1 7-2 7-2 7-2 7-2 7-3 7-2 7-2 7-2 7-2 7-2 7-1 7-2 7-1 7-1 7-1 7 0 7 M903 190l2 6 0 6 0 6 0 6-1 6 0 6 0 6-1 6 0 5 0 6 0 5 0 6 0 5 0 5 0 5 0 6-1 5 0 5-1 5-1 6-1 5-1 5-1 5-1 6-1 5-2 5-1 5-1 5-2 6-1 5-1 5-2 5-2 5-2 5-1 5-2 5-2 5-4 5-3 4-4 5-3 4-6 5-5 4-4 4 1 5 1 5 2 5 1 5 1 6 1 5 1 5 1 5 1 5 1 5 1 6 1 5 1 5 1 6 0 6 0 5 0 6 0 6 0 6 0 6 1 5 0 6 0 6 1 6 0 6 1 7 1 6 1 6 1 6 2 6 1 6 2 7 1 6 2 7 1 6 2 7 1 6 0 7 0 7 0 6 0 7-1 7-1 6-1 7-2 7-1 7-2 7-2 7-2 7-2 7-2 8-2 7-2 7 M900 179l4 5 3 6 4 6-1 6 1 6 0 6 0 6 0 6 0 5-1 6 0 6 1 5 0 6-1 5 2 5-1 6 0 5-1 5 0 5 0 6-1 5 0 5-1 5-1 6-1 5-1 5-2 5-1 6-1 5-2 5-1 5-1 6-1 5-2 5-3 5-1 5-2 5-1 5-2 5-4 4-4 5-4 4-3 5-6 4-5 5-5 4 1 5 1 5 1 5 1 5 1 5 1 5 1 5 2 6 0 5 1 5 1 5 0 6 1 5 1 5 1 6 0 6-1 6 0 5 0 6 1 6 0 6 0 6 1 6 0 6 1 6 0 6 1 6 1 6 2 7 1 6 1 6 2 6 2 7 1 6 2 7 1 6 1 7 1 6-1 7 0 7 0 6-1 7 0 7-1 7-2 7-2 7-1 7-2 7-2 7-2 7-2 7-2 7-1 8-2 7-1 7-1 7-1 7-1 7-1 7 0 7 M847 56l5 5 2 5 1 4 1 5 0 5 1 4 0 5 0 5 1 4 2 5 1 5 3 4 2 5 3 5 3 5 4 5 5 5 8 5 9 5 9 5 8 6 9 5 7 5 6 6 6 5 6 6 5 5 3 6 3 5 4 6 2 6 2 5 2 6 2 5 1 6 2 5 2 5 1 6 2 5 1 5 1 6 0 5 0 5 1 5 0 6 1 5-1 5 0 6 0 5 0 5-1 6-1 5-1 5-1 6-1 5 0 5-1 5-3 6-2 5-2 5-3 5-1 5-4 5-5 4-6 5-5 5-5 5-8 4-8 5-7 4 0 5 0 5-1 5 0 5 1 5 0 5 0 5-1 6 0 5 0 5-1 5 0 6 0 5 1 6 0 5-1 6 0 6 0 6-1 5 0 6 0 6 1 6 0 6 0 6 0 6 1 6 1 6 1 6 1 7 1 6 1 6 1 6 2 6 2 7 2 6 1 7 2 6 1 7 0 6-1 7 0 7 0 7 0 6-1 7-1 7-1 7-1 7-1 8-2 7-1 7-1 7-1 8-1 7-1 7-1 7-1 7 0 8-1 7-1 7 1 7 M852 55l5 5 2 4 1 5 1 5 1 4 0 5 1 4 0 5 1 5 2 4 2 5 1 5 3 5 4 4 3 5 5 5 4 5 8 5 11 5 9 5 9 6 8 5 8 5 7 5 7 5 7 6 5 5 4 5 5 6 4 6 3 5 2 5 3 6 2 5 3 5 2 6 2 5 2 5 2 5 1 6 1 5 1 5 1 5 1 6 1 5 0 5 0 6 0 5 0 5 0 6 0 5 0 5-1 6-1 5-1 5 0 6-1 5-3 5-2 5-3 5-1 5-2 6-4 5-6 4-6 5-7 5-5 5-8 4-9 5-9 4 0 5 0 5-1 5-1 6 0 5 0 5-1 5 0 5-1 6 0 5-1 5-1 6 0 5 0 6 0 5-1 6 0 6-1 5 0 6 0 6 0 6 0 6 0 6 0 6 0 6 1 6 1 6 1 6 1 6 1 6 1 6 1 7 2 6 1 6 2 7 2 6 2 7 0 6 1 7-1 7 0 6 0 7 0 7-1 7 0 7-1 7 0 7-1 7-2 7 0 8-1 7-1 7-1 7-1 8-1 7 0 7 0 7-1 7 0 8 0 7 M910 144l9 5 9 5 10 5 8 6 7 5 7 5 7 5 6 5 4 6 5 5 4 6 4 5 3 5 2 6 3 5 3 5 2 5 3 5 1 6 3 5 2 5 1 5 0 6 2 5 0 5 2 5 0 6 1 5-1 5 1 6 0 5 0 5-1 6 0 5-1 5 0 6-1 5-1 5-2 6-3 5-2 5-2 5-2 5-4 5-7 5-6 5-6 5-6 4-9 5-9 5-8 4-1 5-1 5-1 5 0 6-1 5-1 5 0 5-1 5-1 6 0 5-2 5 0 6 0 5-1 6 0 5-1 6 0 6 0 6-1 6 0 5 0 6 0 6 0 6 0 6 0 6 1 6 0 6 2 6 0 6 1 6 1 7 2 6 2 6 1 6 2 7 1 6 2 7 1 6 0 7 0 7 0 6 0 7 0 7 0 7-1 7 0 7-1 7-1 7-1 7-1 8 0 7-1 7-1 8-1 7 0 7-1 7 0 7 0 8-1 7 1 7 M1005 214l3 5 3 5 2 5 3 6 3 5 2 5 2 5 1 5 2 5 1 6 1 5 1 5 1 5 1 6 0 5 1 5 0 6 0 5 0 6-1 5 0 5-1 6 0 5-1 5-2 5-3 6-2 5-2 5-2 5-4 5-7 5-7 5-6 5-7 5-9 4-10 5-9 5-1 5-1 5-1 5-1 5-1 6-1 5-1 5 0 5-2 6-1 5-1 5-1 6 0 5 0 6-1 6-1 5 0 6-1 6 0 6-1 6 0 5 1 6-1 6 1 6 0 6 0 6 1 6 1 6 0 7 M1016 222l3 5 3 5 2 5 3 5 2 5 1 5 1 6 2 5 1 5 2 5 0 5 1 6 1 5 1 5 0 6 1 5-1 6 0 5 0 5-1 6 0 5 0 5-3 6-2 5-3 5-2 5-2 5-4 5-8 5-6 5-7 5-7 5-9 5-10 5-10 5-1 5-1 5-1 5-1 5-1 5-2 6-1 5-1 5-1 5-1 6-1 5-2 6 0 5 0 6-1 6 0 5-1 6-1 6-1 6 0 6 0 6 1 5 0 6-1 6 0 6 1 6 0 6 1 6 1 7 1 6 0 6 2 6 1 6 2 7 2 6 1 6 2 7 1 6 0 7 0 7 1 6 0 7-1 7 1 7-1 7 0 7 0 7 0 7-1 7 0 8-1 7 0 7-1 8 0 7 0 7-1 7 M859 52l5 5 2 4 1 5 1 4 1 5 0 5 0 4 1 5 1 5 2 4 2 5 2 4 3 5 4 5 3 5 5 4 5 5 9 5 11 5 10 5 10 4 9 5 9 5 8 5 7 5 8 5 6 5 5 5 6 5 6 5 3 5 4 5 4 5 3 5 3 5 3 5 3 5 2 6 3 5 2 5 1 5 2 5 2 5 1 5 2 6 0 5 1 5 1 6 1 5 1 5 0 6 0 5-1 5 0 6 0 5 0 6-1 5-2 5-3 5-2 6-2 5-3 5-4 5-7 5-7 5-7 5-6 5-10 5-10 5-10 4-1 5-1 6-1 5-2 5-1 5-1 5-1 6-2 5-1 5-1 6-1 5-2 6 0 5 0 6-1 6-1 5 0 6-1 6 0 6-1 6 0 6 0 5 0 6 0 6 0 6 0 6 1 6 1 6 0 7 1 6 1 6 1 6 1 6 2 7 2 6 2 6 1 7 1 6 1 7 0 6 0 7 0 7 0 7 0 7 0 7 0 7 0 7-1 7 0 7 0 8-1 7 0 7 0 7-1 8 0 7 0 7 0 7-1 7 1 8 0 7 M972 168l8 5 6 5 6 5 6 5 5 5 4 5 4 5 3 5 4 5 3 5 3 5 3 5 3 5 3 5 2 5 1 5 2 5 2 5 1 5 2 6 1 5 1 5 1 6 1 5 1 5 1 6-1 5 0 5 0 6 0 5 0 5-1 6-2 5-3 5-2 6-2 5-2 5-5 5-7 5-7 5-7 5-7 5-10 5-10 5-10 5-2 5-1 5-1 5-2 6-1 5-1 5-2 5-1 6-1 5-2 6-1 5-2 6 0 5-1 6-1 6 0 5 0 6-1 6-1 6-1 6 1 5 0 6 0 6-1 6 0 6 0 6 1 6 1 6 0 6 1 7 0 6 2 6 1 6 2 6 2 7 2 6 1 7 1 6 0 7 1 6 0 7 0 7 0 7 0 7 0 7 1 7-1 7 0 7 0 7 0 7-1 8 1 7-1 7 0 8 0 7 0 7 0 7 0 7 0 7 0 7 M981 170l7 5 5 5 6 5 6 4 5 5 3 5 4 5 3 5 4 4 3 5 3 5 3 5 3 5 2 5 2 5 2 5 1 6 2 5 2 5 1 5 2 6 1 5 1 5 1 5 1 6 0 5 0 6 0 5 0 5 0 6 0 5-2 5-3 6-2 5-2 5-3 5-4 6-7 5-8 5-7 5-7 5-10 5-10 5-11 5-2 5-2 5-1 6-1 5-2 5-2 6-1 5-2 5-1 6-2 5-1 6-2 5 0 6-2 6 0 5-1 6-1 6 0 6-1 6 0 6 0 5 0 6-1 6 0 6 0 6 0 6 1 6 0 6 1 6 0 6 1 7 1 6 1 6 2 6 1 7 2 6 1 6 2 7 0 6 0 7 1 7 0 7 0 6 0 7 1 7 0 7 0 7 0 8 0 7 1 7-1 7 0 8 1 7-1 7 1 7 0 8-1 7 1 7 0 7 0 7 M981 168l7 5 5 5 6 4 5 5 5 5 4 4 4 5 4 5 3 5 3 5 3 4 3 5 4 5 2 5 2 5 1 5 2 6 2 5 2 5 2 5 1 5 1 6 1 5 2 5 1 6 0 5 0 5 0 6 1 5 0 5 0 6-3 5-2 5-2 6-3 5-2 5-4 5-8 6-7 5-8 5-7 5-10 5-11 5-10 5-2 6-2 5-2 5-1 5-2 6-2 5-1 6-2 5-2 6-1 5-2 6-2 5 0 6-1 6 0 5-2 6 0 6-1 6-1 6 0 5 0 6 M758 57l2 1 5 2 9 1 11 1 13 0 14 0 14 0 13 0 12-1 8-1 6-2 2-1 M750 154l3 2 11 3 16 2 21 1 25 1 26 1 26-1 25-1 21-1 16-2 10-3 4-2 M747 158l4 3 11 2 17 3 22 1 26 1 27 1 28-1 26-1 22-1 17-3 11-2 4-3 M725 177l4 3 14 3 21 3 27 2 32 1 35 1 34-1 32-1 28-2 21-3 13-3 5-3 M713 181l5 4 14 3 22 3 30 3 34 1 37 0 36 0 34-1 30-3 22-3 15-3 4-4 M653 214l6 5 19 5 29 4 39 2 45 2 48 1 48-1 45-2 39-2 29-4 19-5 6-5 M629 263l7 5 21 5 34 5 43 3 51 2 54 1 54-1 51-2 43-3 34-5 21-5 7-5 M623 329l7 5 22 6 34 4 45 3 52 3 56 0 55 0 52-3 45-3 34-4 22-6 7-5 M624 334l7 5 21 6 34 4 45 4 51 2 56 0 55 0 52-2 44-4 34-4 22-6 7-5 M625 344l7 6 21 5 34 4 43 4 51 2 55 1 55-1 51-2 44-4 33-4 21-5 7-6 M758 52l0 5 0 5 0 4-1 5 0 4 0 5 0 5-1 4 0 5 0 4 0 5 1 5-1 4 0 5 0 5 0 4 0 5 0 4 0 5-2 5-2 4-2 5-3 4-4 5-5 5-4 4-9 5-12 5-12 4-12 5-8 5-8 5-8 4-8 5-4 5-5 5-5 5-3 4-2 5-2 5-2 5-2 5-1 5-1 5-1 5-1 4-1 5 0 5-2 5 0 5 0 6 M760 54l0 4 0 5 0 5 0 4-1 5 0 4-1 5 0 5 0 4 0 5 1 5 0 4 0 5 0 5 0 4 0 5 0 5 0 4 0 5-2 5-1 5-2 4-3 5-3 5-5 5-4 4-9 5-12 5-11 5-11 5-8 5-8 5-8 5-7 5-5 5-5 4-4 5-4 5-1 5-2 5-2 5-2 5-1 5-1 5-1 5-1 5 0 5-1 5-1 5 0 5-1 5 0 5 0 5 0 5 M765 55l0 5 0 4 1 5-1 5 0 4 0 5 0 4-1 5 0 5 1 4 0 5 0 5 0 4 1 5 0 5 0 4 0 5 1 5 0 5-1 5-1 5-1 5-2 5-3 4-4 5-4 5-8 5-10 6-11 5-10 5-8 5-7 5-8 5-6 5-5 5-4 5-4 5-3 5-1 5-2 5-2 5-2 5 0 5-1 5-1 5-1 5 0 5-1 5-1 5 0 5 0 5-1 5 0 5 0 5 0 5 0 5 M781 57l1 4 0 5 0 5 0 4 0 5 0 5 0 4-1 5 1 5 0 4 1 5 0 5 1 4 1 5 1 5 1 5 1 5 3 5 1 5 1 5 1 5 0 5 0 5-1 5-3 5-1 5-6 6-8 5-8 5-8 6-5 5-6 5-6 5-5 6-3 5-3 5-3 5-2 5-1 5-1 5-1 5-1 5 0 5 0 5-1 5-1 5 0 5 0 5-1 6 0 5 0 5 0 5 0 5 M786 57l2 5 0 4 0 5 0 5 0 4 0 5-1 5 0 4 1 5 0 5 1 4 1 5 1 5 1 5 1 4 1 5 2 5 3 5 3 5 1 5 2 5 1 6 0 5-1 5-2 5-1 5-5 5-6 6-8 5-7 6-5 5-5 5-5 6-4 5-3 5-2 5-3 5-1 5-1 5-1 5-1 5-1 5 0 5 0 6 0 5 0 5-1 5 0 5-1 5 1 5 0 5-1 5 1 5-1 5 0 6 0 5-1 5 0 5 M808 57l3 5 0 5 1 5 0 4 0 5 0 5 0 4 0 5 1 5 1 4 1 5 1 5 2 4 1 5 3 5 2 5 3 5 5 5 5 5 4 5 4 5 4 6 2 5 2 5 1 5 2 6-3 5-3 5-3 6-4 6-2 5-2 5-3 6-2 5-1 5-1 5-1 5 0 5 1 6-1 5 0 5 0 5 1 5 0 5 1 5 0 5 0 5 0 5 0 5 1 5 M843 56l5 5 1 5 1 4 1 5 0 5 0 4 0 5 1 4 2 5 1 5 2 4 2 5 3 5 3 5 3 4 5 5 4 5 10 5 9 5 8 5 7 5 8 5 6 5 6 5 6 5 6 5 3 6 3 5 2 5 3 6 1 5 2 5 2 5 1 5 3 5 1 5 2 5 2 6 2 5 1 5 1 5 2 5 1 5 2 5 1 5 1 5 1 5 1 5 1 5 1 5 0 5 M848 56l5 4 1 5 1 5 0 4 1 5 0 5 1 4 0 5 2 5 1 4 2 5 2 5 3 4 3 5 5 5 3 5 5 4 11 5 9 5 9 5 8 5 8 5 7 5 6 5 7 5 6 5 3 5 4 6 4 5 3 5 2 5 2 5 3 6 2 5 2 5 2 5 2 5 2 5 3 5 1 5 2 5 1 5 1 5 2 5 2 5 1 5 1 5 1 5 1 5 1 5 0 5 1 5 0 5 0 5 0 6 M850 55l5 5 1 5 1 4 1 5 0 5 0 4 1 5 0 5 2 4 2 5 1 5 3 4 3 5 3 5 4 4 4 5 5 5 11 5 9 5 9 5 9 5 8 5 7 5 7 5 6 5 7 5 4 5 4 5 4 5 3 5 3 5 3 6 2 5 2 5 2 5 3 5 2 5 2 5 3 5 1 5 1 5 2 5 2 5 1 5 2 5 1 5 1 5 1 5 1 5 1 5 1 5 0 5 1 5 0 5 0 6 0 5-1 5-2 5-2 5 M852 55l5 5 1 5 1 4 1 5 0 4 1 5 0 5 0 4 2 5 2 5 1 4 3 5 3 5 4 4 4 5 4 5 5 5 11 5 10 4 9 5 8 5 9 5 7 5 7 5 6 5 7 5 5 5 4 5 4 5 4 6 3 5 3 5 2 5 3 5 2 5 3 5 2 5 3 5 2 5 2 5 1 5 2 5 1 5 2 5 1 5 2 5 1 5 1 5 1 5 2 5 0 5 M859 53l6 5 2 5 1 4 0 5 0 5 1 4 0 5 1 4 2 5 1 5 2 4 3 5 4 4 3 5 5 5 4 4 6 5 11 5 11 5 10 4 10 5 10 5 8 4 7 5 7 5 8 5 6 5 5 4 5 5 6 5 3 5 4 5 4 5 3 5 3 4 3 5 3 5 3 5 3 5 2 5 1 5 2 5 3 5 1 4 2 5 1 5 1 5 2 5 1 5 2 6 0 5 M624 296l1 2 2 1 4 2 5 1 5 2 7 2 6 1 6 1 5 0 4 1 3-1 1-1 M623 315l1 1 2 1 4 2 5 2 6 2 7 1 7 2 6 1 5 0 5 1 3-1 1-1 M622 324l1 1 3 2 4 1 5 2 6 2 7 2 7 1 7 1 5 1 5 0 2 0 2-1 M619 369l0 2 3 1 5 2 6 3 7 2 8 2 8 2 8 1 6 1 5 0 4-1 1-1 M616 387l1 2 3 1 4 3 7 2 7 2 8 2 8 2 8 2 7 0 5 1 4-1 1-1 M607 422l1 2 3 2 5 3 7 2 8 3 10 3 9 2 8 1 8 2 6 0 3 0 2-2 M603 435l1 2 3 3 6 2 7 3 9 3 9 3 10 2 9 2 8 1 6 0 4 0 2-1 M594 456l1 2 4 3 6 3 7 3 10 3 10 3 10 2 10 2 8 2 6 0 5 0 1-1 M592 461l1 1 4 3 6 3 7 3 10 3 10 3 10 3 10 2 8 1 6 1 5-1 2-1 M590 465l1 1 4 3 6 3 7 3 10 3 10 3 10 3 10 2 8 1 7 1 4 0 2-1 M582 481l1 2 4 3 6 3 8 3 9 4 11 3 10 3 10 2 9 1 7 1 4 0 2-1 M572 501l1 2 3 3 7 3 8 4 10 4 11 4 11 3 10 2 9 2 7 1 5-1 2-1 M566 513l1 3 3 2 7 4 8 4 10 4 11 3 11 4 11 2 9 2 7 1 5 0 1-1 M558 530l0 2 4 3 7 4 8 4 10 4 12 4 11 3 10 3 10 2 7 1 5 0 2-1 M556 534l0 2 4 3 7 4 8 4 10 4 12 4 11 3 11 3 9 2 7 1 5 0 2-1 M551 542l1 2 4 3 7 4 8 4 10 4 12 4 11 4 11 3 9 2 7 1 5 0 2-1 M547 550l1 2 4 3 7 4 8 4 10 5 12 4 11 3 11 3 9 3 7 1 5 0 2-2 M522 618l1 2 3 3 6 4 7 4 9 4 10 4 10 3 9 3 8 2 7 1 4 0 2-1 M519 627l1 2 3 3 5 3 8 4 8 4 10 4 10 3 9 3 8 2 6 1 4 0 2 0 M510 653l1 2 3 2 4 3 7 3 7 3 8 3 8 3 8 2 7 2 5 1 4 0 1-1 M492 690l1 1 2 2 4 2 5 2 6 2 6 3 7 2 6 1 5 1 5 1 3 0 1-1 M476 722l1 1 1 1 3 1 4 2 5 2 5 1 5 1 5 1 4 1 3 0 3 0 0 0 M639 230l-1 4-2 5-2 4-2 4-1 5-1 4 0 4-1 5-1 4-1 5-1 4-1 5 0 4 0 5-1 4 0 5 0 5-1 4 0 5 0 4-1 5 0 4 0 5-1 4 0 5 0 4-1 5 0 5 0 4-1 5 0 4-1 5 0 4-1 5-1 4-1 5-1 4-1 4-1 5-2 4-1 5-1 4-1 4-2 5-1 4-1 4-1 5-2 4-2 4-1 4-3 4-2 5-2 4-2 4-2 4-2 4-2 4-2 4-2 4-2 4-2 4-2 4-2 4-2 4-2 4-2 5-2 4-3 4-2 4-1 4-2 4-2 4-2 4-3 4-2 4-2 4-1 5-2 4-1 4-2 4-2 5-1 4-1 4-2 5-1 4-2 4-2 4-1 5-2 4-1 4-2 5-1 4-1 4-2 5-1 4-2 4-1 5-2 4-1 4-2 4-2 4-3 4-1 4-3 5-2 4-1 4-3 4-1 4-3 4-2 4-3 4-2 4-2 3-3 4 0 5 1 4 M637 235l-1 4-2 4-2 4-1 5 0 4-1 5-1 4-1 5-1 4 0 5-2 4 0 5-1 4 1 5-1 4 0 5-1 5 0 4 0 5-1 4 0 5 0 4 0 5-1 4-1 5 0 5 0 4-1 5 0 4 0 5-1 4 0 5-1 4-1 5-1 4-1 5-1 4-1 4-1 5-1 4-2 5-1 4-2 4-1 5-1 4-1 5-2 4-2 4-1 4-3 4-1 4-3 4-2 4-2 5-2 4-2 4-2 4-2 4-2 4-2 4-2 4-2 4-2 4-2 4-2 4-2 4-2 4-2 5-3 4-1 4-3 4-2 4-2 4-2 4-1 4-2 4-2 5-1 4-1 4-2 5-2 4-1 4-2 4-1 5-2 4-1 4-2 4-2 5-1 4-1 4-2 5-1 4-2 4-1 5-2 4-1 4-1 5-2 4-2 4-2 4-2 4-2 4-2 4-2 4-2 4-3 4-2 4-2 4-2 4-2 4-3 4-2 4-2 4-1 4 1 4 M634 254l-1 4-1 5 0 4-1 5-1 4-1 5 0 5-1 4 0 5 0 4-1 5 0 5 0 4 0 5 0 4 0 5-1 5 0 4 0 5-1 4 0 5-1 4 0 5 0 5-1 4 0 5 0 4-1 5-1 4 0 5-1 4-2 5-1 4-1 5 0 4-2 5-1 4-1 5-2 4-1 5-1 4-1 5-1 4-2 4-2 4-2 4-2 5-2 4-2 4-2 4-2 4-3 4-1 4-3 4-1 5-2 4-2 4-2 4-2 4-2 4-3 4-2 4-2 5-2 4-2 4-2 4-1 4-3 4-2 4-2 4-2 4-1 5-2 4-2 4-1 5-2 4-1 4-2 4-1 4-2 5-1 4-2 4-2 4-1 5-2 4-1 4-2 4-2 5-1 4-2 4-1 4-2 4-1 4-2 4-2 4-2 4-3 4-2 4-2 4-2 4-2 4-2 4-2 4-3 4-2 4-2 4-3 3-2 4-3 4 0 4 1 4 M644 300l-1 5 1 4-1 5 0 5 1 4 0 5 0 5 0 4 0 5-1 5 0 4 0 5 0 5 0 5 0 4 0 5 0 5 0 4-1 5 0 4-1 5-1 5-1 4 0 5-1 5-1 4-1 5 0 4-1 5-1 5-1 4-1 5-1 5-1 4-1 5-2 4-2 4-2 4-2 4-2 5-2 4-1 4-2 5-2 4-2 4-2 5-2 4-1 4-3 4-2 5-1 4-2 4-2 4-2 5-2 4-2 4-2 4-2 5-2 4-2 4-2 4-2 4-2 5-1 4-2 4-2 5-2 4-1 4-3 4-1 4-2 4-2 4-2 5-2 4-2 4-2 4-2 4-2 4-1 4-3 4-2 4-2 3-2 4-2 4-3 4-2 3-3 4-2 4-3 3-2 4-3 4-3 4-2 3-2 4-3 4-3 3-3 4-2 3-3 4-3 3-1 4-1 4 M656 241l1 5 0 5 0 5 0 4 0 5 1 5 0 5 0 4 0 5 1 5 0 5 0 4 1 5 0 5 0 5 1 4 0 5 0 5 0 5 1 4 0 5 0 5 0 5 1 4 0 5 0 5 0 5 0 4 1 5 0 5-1 4 0 5 0 5-1 5 0 4-1 5 0 5-1 5 0 4-1 5 0 5-1 4 0 5 0 5-1 5 0 4-1 5 0 5-3 4-2 4-1 5-2 4-2 5-2 4-1 5-2 4-1 4-2 5-2 4-1 5-2 4-2 5-2 4-1 4-3 5-1 4-2 5-2 4-2 4-2 5-2 4-1 4-2 4-2 5-3 4-1 4-2 5-2 4-2 4-2 4-2 4-2 5-3 4-2 4-2 4-2 4-2 4-2 4-3 4-2 4-2 4-3 4-3 3-2 4-4 3-2 4-3 3-3 4-3 3-3 4-3 3-3 3-3 4-3 3-3 4-3 3-3 4-3 3-3 4-3 3-3 3-3 4-4 3-2 3-2 4 M662 266l1 4 0 5 1 5 0 5 1 5 0 4 1 5 0 5 0 5 1 4 1 5 0 5 0 5 0 4 1 5 0 5 0 5 1 4 0 5 1 5 0 5 0 4 1 5 0 5 0 5 0 4 0 5-1 5 0 5 0 4-1 5 0 5-1 5 0 4-1 5 0 5 0 5 0 5-1 4 0 5 0 5 0 5-1 4-2 5-2 4-2 4-1 5-2 4-1 5-2 4-2 5-1 4-2 5-1 4-2 5-2 4-1 5-2 4-2 5-2 4-1 4-2 5-2 4-1 5-2 4-2 4-2 5-2 4-2 4-2 5-2 4-2 4-2 5-2 4-2 4-3 4-2 4-2 4-3 4-2 4-2 4-3 5-2 4-2 4-2 4-3 4-3 3-3 4-3 3-3 3-3 4-3 3-3 4-3 3-4 3-3 4-3 3-3 3-3 4-4 3-3 4-3 3-3 3-4 4-3 3-3 3-4 4-3 3-3 3-2 4 M1040 239l-1 1-2 1-3 1-4 2-4 1-5 2-6 1-4 1-5 1-3 0-2 0-1-1 M1045 252l-1 1-2 1-3 2-5 1-5 2-6 2-6 1-5 1-5 1-4 0-2 0-1-1 M1048 260l0 2-3 1-3 2-5 1-6 2-6 2-6 1-6 1-5 1-4 0-3 0-1-1 M1054 283l0 1-3 2-4 1-6 2-6 2-7 2-8 1-7 2-5 0-5 0-3 0-1-1 M1058 296l-1 2-3 1-4 2-7 2-7 2-8 2-8 1-8 1-7 1-5 0-3-1-2-1 M1070 341l-1 2-4 2-7 2-8 3-11 2-11 2-11 1-10 1-9 0-7 0-5-1-2-2 M1075 354l-2 2-4 2-7 3-10 2-11 3-12 2-12 1-11 1-10 0-7 0-5-1-2-2 M1076 359l-1 2-5 2-7 2-10 3-11 2-12 2-13 2-11 0-10 1-8-1-5-1-1-1 M1082 376l-1 2-5 3-8 2-10 3-11 2-13 2-13 1-12 1-10 0-8 0-5-1-2-2 M1086 389l-1 2-5 3-7 2-10 2-11 3-13 1-12 2-12 0-10 1-8-1-5-1-1-2 M1091 403l-2 2-4 2-7 2-10 2-11 2-12 2-12 1-12 1-10 0-7-1-5-1-2-1 M1103 443l-2 1-4 2-7 2-9 2-10 2-11 1-12 1-10 0-9 0-7-1-5-1-2-1 M1104 447l-1 2-5 2-6 2-9 2-11 1-11 2-11 0-11 1-9 0-7-1-5-1-1-2 M1108 460l-1 2-5 2-6 2-9 2-11 2-11 1-11 1-11 0-9 0-7-1-4-1-2-2 M1111 469l-2 2-4 2-7 2-8 2-11 1-11 2-11 1-11 0-9 0-7-1-5-1-1-2 M1116 487l-1 2-4 2-7 2-9 2-10 1-12 1-11 1-10 0-9 0-8 0-4-2-2-1 M1122 514l-1 2-4 2-7 2-8 1-11 2-10 1-11 1-10 0-9 0-7-1-4-1-2-2 M1123 519l-1 1-4 2-7 2-8 2-10 1-11 1-11 1-10 0-9 0-7-1-4-1-1-1 M1127 537l-2 2-4 1-6 2-8 2-10 1-11 1-10 1-10 0-8-1-7 0-4-1-2-2 M1134 568l-1 2-4 2-6 1-8 2-10 1-10 1-10 1-10 0-8-1-6-1-4-1-2-1 M1136 573l-2 1-4 2-6 2-8 1-9 2-11 1-10 0-9 0-9 0-6-1-4-1-1-2 M1142 605l-1 1-4 2-6 1-8 2-9 1-10 1-10 0-9 0-8 0-7-1-4-1-1-1 M1145 618l-1 2-4 1-6 2-8 1-9 2-10 0-10 1-9 0-8-1-6-1-4-1-1-1 M1146 623l-1 1-4 2-6 2-8 1-9 1-10 1-10 0-9 0-8 0-6-1-4-1-1-2 M1147 627l-1 2-4 2-6 1-8 1-9 2-10 0-10 1-9 0-8-1-6-1-4-1-1-1 M1149 641l-1 2-4 1-6 2-7 1-9 1-9 0-10 1-9 0-7-1-6-1-4-1-1-1 M1151 660l-1 1-4 1-5 2-7 1-8 0-9 1-9 0-8 0-7-1-6-1-3-1-1-1 M1156 715l-1 1-3 1-5 1-6 1-7 0-8 1-8 0-7-1-6 0-5-1-3-1-1-2 M1157 729l-1 1-3 1-4 1-6 1-8 0-7 0-8 0-7 0-6-1-5-1-2-1-1-1 M1158 733l-1 2-3 1-5 1-6 0-7 1-8 0-7 0-7-1-6 0-5-1-3-1-1-1 M1158 738l-1 1-3 1-4 1-6 1-7 0-8 1-7-1-7 0-6-1-5-1-3-1-1-1 M1159 752l-1 1-2 1-5 1-6 1-7 0-7 0-8 0-7 0-6-1-4-1-3-1-1-1 M1020 208l3 4 2 4 3 4 2 4 3 4 2 4 2 4 2 4 1 4 2 5 2 4 1 5 2 4 1 4 1 5 1 4 2 5 1 4 1 5 2 5 0 4 2 5 1 4 1 5 1 4 1 5 1 4 2 5 1 4 1 5 1 4 1 5 2 4 1 5 1 4 2 5 1 4 2 5 2 4 1 4 1 5 2 4 1 4 2 5 1 4 1 5 2 4 1 5 2 4 1 4 1 5 1 4 2 5 1 4 2 4 1 5 1 4 2 5 1 4 1 5 2 4 1 4 1 5 2 4 1 5 1 4 1 5 1 4 1 5 1 4 1 5 0 5 1 4 2 5 0 4 2 5 1 4 1 5 1 4 1 5 1 4 1 5 1 4 1 5 2 4 0 5 1 4 1 5 1 4 1 5 1 4 1 5 1 4 1 5 1 4 0 5 1 5 1 4 0 5 1 4 0 5 0 4 1 5 1 5 0 4 1 5 0 4 0 5 1 4 0 5 1 5 0 4 1 5 0 5 0 4 1 5 0 4 1 5 0 5 1 4 0 5 0 4 1 5 1 5 0 4 1 5 0 4 M1041 249l2 5 1 4 2 5 1 4 1 5 1 4 2 5 1 4 1 5 1 4 1 5 1 4 1 5 2 5 1 4 1 5 1 4 0 5 2 4 1 5 1 4 1 5 2 4 1 5 1 4 2 5 1 4 2 5 1 4 2 4 1 5 1 4 3 4 1 5 1 4 1 5 2 4 1 4 2 5 1 4 1 5 1 4 2 5 1 4 1 4 2 5 1 4 1 5 2 4 1 5 2 4 1 4 1 5 2 4 1 5 1 4 1 5 1 4 1 5 1 4 1 5 0 4 1 5 2 4 0 5 2 4 0 5 2 4 1 5 1 4 1 5 2 4 0 5 1 4 2 5 1 4 1 5 0 4 1 5 1 4 1 5 1 5 1 4 1 5 1 4 1 5 0 4 1 5 1 4 0 5 1 4 0 5 1 5 0 4 1 5 0 4 1 5 0 4 1 5 0 5 0 4 1 5 0 4 1 5 0 5 0 4 1 5 1 4 0 5 0 5 1 4 0 5 1 4 1 5 0 5 0 4 1 5 M1024 216l2 4 2 4 3 5 2 4 3 4 1 4 1 5 2 4 2 4 1 5 2 4 1 5 1 4 1 5 1 4 1 5 1 5 1 4 2 5 1 4 0 5 2 4 0 5 2 5 0 4 1 5 1 4 2 5 1 4 1 5 1 4 1 5 2 4 1 5 1 4 2 5 2 4 1 5 1 4 2 4 1 5 2 4 2 4 1 5 1 4 2 4 1 5 1 4 2 5 1 4 2 4 1 5 1 4 2 5 1 4 1 5 2 4 1 4 1 5 2 4 1 5 1 4 2 5 1 4 1 5 1 4 0 5 2 4 0 5 1 4 1 5 1 4 1 5 1 4 1 5 2 4 1 5 1 4 1 5 1 4 2 5 0 4 1 5 1 4 1 5 1 4 1 5 1 4 1 5 1 4 1 5 1 4 0 5 1 4 2 5 0 4 0 5 1 5 1 4 0 5 1 4 0 5 1 4 0 5 1 4 1 5 0 4 0 5 0 5 1 4 1 5 0 4 1 5 0 5 0 4 1 5 0 5 0 4 1 5 0 4 1 5 1 5 0 4 1 5 0 4 M1017 214l1 5 2 4 2 4 2 4 2 5 1 4 1 5 2 4 1 5 1 4 1 5 1 4 1 5 1 4 1 5 1 5 0 4 1 5 1 5 0 4 1 5 0 4 1 5 0 5 1 4 0 5 0 5 1 4 1 5 0 5 1 4 1 5 0 4 2 5 1 5 0 4 2 4 1 5 2 4 2 4 1 4 2 5 2 4 1 4 1 5 2 4 2 4 1 5 2 4 1 4 2 4 1 5 2 4 1 4 2 5 1 4 1 5 2 4 1 5 2 4 1 4 1 5 1 4 2 5 1 4 1 5 1 4 1 5 1 4 1 4 1 5 2 4 0 5 1 4 2 5 1 4 1 5 1 4 1 5 2 4 1 4 1 5 1 4 1 5 1 4 1 5 1 4 1 5 1 4 1 5 1 4 1 5 1 4 1 5 1 4 1 5 1 4 1 5 1 4 0 5 2 4 0 4 1 5 1 4 0 5 1 4 1 5 0 4 1 5 0 5 1 4 1 5 0 4 0 5 1 4 1 5 0 5 0 4 1 5 0 4 1 5 1 5 0 4 1 5 0 4 1 5 M1013 239l2 5 0 4 1 5 0 4 1 5 0 5 1 4 1 5 0 5 0 4 1 5 0 5-1 4 0 5 0 5-1 4 0 5 0 5 0 4-1 5 0 4 0 5-1 5 0 4 0 5 0 5 0 4 0 5 0 5 0 4 0 5 2 4 2 4 2 5 2 4 1 4 3 4 1 4 2 4 2 5 2 4 2 4 1 4 2 4 2 4 2 5 1 4 2 4 2 5 1 4 1 4 2 5 1 4 1 5 2 4 1 4 1 5 2 4 1 5 1 4 2 4 1 5 1 4 2 5 1 4 1 4 1 5 1 4 2 5 1 4 1 5 2 4 1 4 1 5 2 4 1 5 1 4 1 5 2 4 0 4 2 5 1 4 1 5 1 4 1 5 1 4 1 5 1 4 2 5 1 4 1 4 1 5 2 4 0 4 2 5 1 4 1 4 2 5 1 4 1 4 1 5 1 4 0 5 1 4 1 5 0 4 1 5 1 5 0 4 1 5 1 4 0 5 1 4 0 5 1 4 1 5 0 5 1 4 0 5 0 5 1 4 M1008 268l0 5 0 5 0 4 1 5 0 5-1 4 0 5-1 4-1 5-1 5-1 4 0 5-1 4-1 5-1 5 0 4-1 5-1 4 0 5-1 5 0 4-1 5 0 5 0 4-1 5 2 4 2 4 2 4 2 4 2 5 2 4 2 4 2 4 2 4 2 4 2 4 2 4 2 5 2 4 1 4 2 4 3 4 1 5 2 4 1 4 1 5 1 4 2 5 2 4 1 5 1 4 2 4 1 5 1 4 2 5 1 4 2 4 1 5 1 4 2 4 1 5 1 4 2 5 1 4 1 4 1 5 2 4 1 5 2 4 1 4 1 5 1 4 2 5 1 4 1 5 1 4 1 5 2 4 1 4 1 5 1 4 1 5 1 4 1 5 2 4 2 4 1 5 2 4 1 4 2 4 1 5 1 4 2 4 1 5 2 4 1 4 0 5 1 4 0 5 2 5 0 4 1 5 0 4 1 5 1 4 1 5 0 4 1 5 0 5 1 4 0 5 1 4 0 5 1 5 0 4 M1002 245l0 5 0 4 1 5 0 5 0 4 0 5 0 5 0 4 0 5 0 5-1 4-1 5-1 4-1 5-1 4-1 5-1 5-1 4-1 5-1 4-1 5-1 4-1 5-1 5 0 4-1 5 0 4-1 5-1 5 0 4 2 4 2 5 2 4 2 4 2 4 2 4 2 4 3 4 1 4 2 4 2 4 2 5 2 4 3 4 2 4 2 4 2 4 1 5 1 4 2 4 1 5 1 4 2 5 1 4 2 5 1 4 1 4 2 5 1 4 1 5 2 4 1 4 2 5 1 4 1 4 2 5 1 4 2 4 2 5 0 4 2 5 1 4 2 4 1 5 2 4 1 5 1 4 1 5 1 4 1 5 2 4 1 4 2 5 1 4 1 5 1 4 1 5 1 4 2 5 1 4 2 4 1 4 2 5 1 4 2 4 2 4 1 5 2 4 2 4 1 5 1 4 1 5 1 4 0 5 1 4 1 5 1 4 0 5 1 5 1 4 1 5 0 4 1 5 1 4 0 5 1 5 0 4 0 5 1 4 0 5 M1001 277l0 5 0 5 0 4-1 5-1 4-1 5-1 4-1 5-2 4-1 5-1 4-1 5-1 5-1 4-1 5-1 4-1 5-1 4-1 5 0 4-1 5-1 5 0 4 2 4 2 4 2 5 2 4 2 4 2 4 2 4 3 4 1 4 3 4 2 4 1 5 3 4 2 4 2 4 2 4 2 4 1 5 1 4 2 4 1 5 2 4 1 5 1 4 2 4 1 5 2 4 1 5 2 4 1 4 1 5 2 4 1 5 1 4 2 4 2 5 1 4 2 4 1 5 1 4 2 5 1 4 2 4 1 5 2 4 0 5 2 4 1 5 1 4 2 4 1 5 1 4 1 5 1 4 2 5 1 4 1 5 1 4 2 4 1 5 2 4 1 4 2 5 2 4 2 4 1 4 2 5 2 4 1 4 2 5 1 4 1 5 0 4 1 5 0 4 2 5 0 5 1 4 0 5 1 4 1 5 1 4 1 5 0 4 1 5 0 5 1 4 0 5 0 4 1 5" stroke="#34f696" stroke-width="1.5"/></g><path d="M754 83l-11 6 7 11 1 10 0 11 0 12-2 9-5 10-6 8-8 8-9 4-11 4-10 5-12 4-10 6-10 6-11 6-9 8-9 9-6 11-5 11-3 12-2 12-2 11-2 12-1 12 0 12-1 11-1 12-1 12-1 11-1 12-1 11-3 11-3 11-3 11-3 11-3 12-4 10-6 10-5 10-5 11-5 10-6 11-5 10-5 11-5 10-5 10-6 11-4 11-4 11-4 11-4 11-4 11-4 11-4 11-3 12-4 10-5 10-5 11-5 10-5 11-6 9-6 11 0 17 13 5 11 4 14 3 13-6 8-10 7-9 8-8 9-8 8-8 8-8 8-9 9-8 8-9 7-10 6-10 6-10 6-10 6-11 5-11 5-10 4-11 5-11 4-11 4-11 4-11 4-11 4-11 4-11 3-11 4-10-6-5 0 11 0 11 1 12 0 11 0 12 0 12 0 11 1 13 2 11 0 11-1 11-1 12-1 12 0 11-1 12-1 11-2 11-2 12-2 11-2 12-2 12-1 11-2 12-1 12 4 15 14 1 12 0 12 0 11 0 12 0 12 0 11 0 12 0 12 0 11 0 12 0 12 0 11 0 12 0 12 0 11 0 12 0 12 0 11 0 12 0 12 0 11 0 12 0 12 0 11 0 14-1 7-13 0-12 0-11-1-12 0-12 0-11-1-12 0-12-1-11 0-12-1-12 0-11-1-13-3-11-3-12-3-11-1-11-1-11-1-12 0-11 0-12 0-11 1-12 1-11 2-12 1-11 3-11 3-11 3-11 3-12 3-11 3-11 1-9-3 5 5 10 5 11 6 10 5 10 5 11 5 10 3 11 4 11 3 11 4 11 3 11 4 11 4 11 3 11 4 12 4 11 3 11 3 11 3 11 3 11 3 12 3 11 4 11 5 11 4 11 4 11 4 10 2 11 2 12 1 11 2 12 2 11 1 12 11 10 12 1 12 0 12 0 13-1 8-12 0-12-1-12-1-11-1-12-1-12-2-11-1-12-1-12-1-11-1-12-2-12-3-11-2-12-2-11-2-12-3-11-3-12-3-11-3-11-2-11-2-12-2-11-3-12-4-11-3-12-3-11-4-11-3-11-3-11-4-11-3-12-4-11-3-11-4-11-4-11-4-11-3-11-3-11-3-11-3-12-3-11-3-11-3-12-4-11-5-11-4-11-7-11-6-9-7-10-8-9-8-9-10-8-9-7-10-6-10-6-11-6-11-5-10-5-11-5-11-5-10-4-7-7-7-8-7-9-4-10-2-10-1-12-3-13-13-10-12 9-9 7-9 5-10 4-11 2-11 2-11-1-11 1-7-6-16-4-2 15 M753 80l-13 10 7 11 1 9 0 11 0 11-2 9-4 10-6 7-8 7-8 4-11 5-10 4-12 4-11 6-10 6-11 6-9 9-9 9-7 12-4 11-4 13-2 11-2 12-2 12-1 12 0 12-1 11-1 12-1 11-1 12-1 12-1 10-3 11-3 11-3 11-3 12-3 11-4 9-5 11-6 10-5 10-5 11-5 10-5 11-6 10-5 11-5 10-5 11-5 11-4 11-4 11-4 11-4 11-4 11-3 11-4 12-4 10-4 10-5 11-6 10-5 10-6 10-6 11 1 20 14 6 12 4 14 3 15-7 8-10 7-9 8-8 9-8 8-8 8-8 8-9 9-8 9-9 6-11 6-10 6-10 6-10 7-10 5-11 4-11 5-11 5-11 4-11 4-11 4-11 4-11 4-11 3-11 4-11 4-10-12-5 0 10 0 11 1 12 0 11 0 12 0 12 0 12 1 12 2 11 0 10-1 12-1 12-1 11 0 12-1 12-1 11-2 11-2 11-2 12-2 12-1 11-2 12-2 11-1 13 5 17 16 1 12 0 12 0 11 0 12 0 12 0 11 0 12 0 12 0 11 0 12 0 12 0 11 0 12 0 12 0 11 0 12 0 12 0 11 0 12 0 12 0 11 0 12 0 12 0 11 0 15 0 9-16 0-12 0-11-1-12 0-12 0-11-1-12 0-12-1-12 0-11-1-12 0-12-1-12-3-12-3-11-3-11-1-11-1-12-1-11 0-11 0-12 0-11 1-11 1-12 2-11 1-12 3-10 3-11 3-11 3-12 3-11 3-11 0-8-8 4 5 11 6 10 5 10 5 11 5 10 5 10 3 11 4 11 3 11 4 11 3 11 4 11 4 11 4 11 3 11 4 12 3 10 3 12 3 11 3 11 3 11 4 12 4 11 4 11 4 11 4 11 4 10 2 11 2 11 2 12 1 11 2 12 2 12 12 12 13 0 12 0 12 0 14 0 10-15 0-12-1-12-1-12-1-11-1-12-2-12-1-11-1-12-1-12-1-11-2-12-3-12-2-11-2-12-3-11-2-12-3-11-3-12-3-11-2-11-2-11-2-12-3-12-4-11-3-11-4-12-3-11-3-11-4-11-3-11-3-12-4-11-4-11-3-11-4-11-4-11-3-11-3-11-3-11-3-11-3-12-3-11-3-11-4-12-5-11-4-12-7-10-7-10-7-10-7-9-9-10-10-7-9-8-11-6-10-6-10-6-11-5-11-5-11-5-11-5-9-3-7-7-7-8-6-8-4-10-2-9-1-12-3-14-17-11-13 9-9 7-8 4-10 5-11 1-10 2-11 0-10 0-6-5-20-5-3 18" fill="none" stroke="#34f696" stroke-width="1.2" shape-rendering="crispEdges"/><path d="M818 80 L840 70 L856 57 L866 58 L870 80 L868 98 L850 100 L826 92 Z" fill="#108e96"/><path d="M826 60 L828 100 M832 62 L834 100 M837 63 L839 100 M842 64 L844 100 M848 66 L850 100 M854 68 L856 100 M859 69 L861 100 M864 70 L866 100 M815 78 Q845 66 872 62 M815 83 Q845 71 872 67 M815 88 Q845 76 872 72 M815 93 Q845 81 872 77 M815 98 Q845 86 872 82 M815 103 Q845 91 872 87 M815 108 Q845 96 872 92" fill="none" stroke="#34f696" stroke-width="1.4" shape-rendering="crispEdges"/><path d="M818 96 Q845 88 872 84 M822 86 Q848 76 870 70" fill="none" stroke="#fafafb" stroke-width="1.5" shape-rendering="crispEdges"/><path d="M747 87 Q770 90 800 84" fill="none" stroke="#34f696" stroke-width="3"/><path d="M755.6,88.0 C754.1,91.0 747.6,86.1 746.8,86.5 C746.0,86.9 749.5,88.2 751.0,90.5 C752.5,92.8 755.1,96.4 756.0,100.0 C756.9,103.6 756.4,105.5 756.4,112.0 C756.4,118.5 756.9,132.3 756.0,139.0 C755.1,145.7 752.5,148.5 750.8,152.0 C749.1,155.5 749.2,156.3 746.0,160.0 C742.8,163.7 740.7,169.0 731.5,174.0 C722.3,179.0 702.8,184.3 690.7,190.0 C678.6,195.7 667.3,202.0 659.0,208.0 C650.7,214.0 645.3,219.2 640.8,226.0 C636.2,232.8 634.3,239.0 631.7,248.8 C629.1,258.6 626.5,273.0 625.0,285.0 C623.5,297.0 623.6,308.5 622.7,321.0 C621.8,333.5 620.3,350.2 619.5,360.0 C618.7,369.8 619.3,371.7 617.8,380.0 C616.3,388.3 613.3,398.9 610.4,409.6 C607.5,420.3 605.0,432.5 600.5,444.0 C596.0,455.5 589.9,465.4 583.3,478.5 C576.7,491.6 567.6,509.7 561.0,522.8 C554.4,535.9 550.0,542.5 543.9,557.3 C537.8,572.1 530.0,595.1 524.2,611.5 C518.5,627.9 515.1,641.8 509.4,655.8 C503.6,669.8 495.3,684.7 489.7,695.2 C484.1,705.7 477.6,713.9 475.5,719.0 C473.4,724.1 472.9,723.5 477.0,726.0 C481.1,728.5 494.8,732.2 500.0,734.0 C505.2,735.8 504.9,736.4 508.0,736.5 C511.1,736.6 514.5,737.9 518.5,734.5 C522.5,731.1 526.4,722.9 532.3,716.4 C538.2,709.9 543.6,705.3 553.7,695.2 C563.8,685.1 581.6,670.6 593.1,655.8 C604.6,641.0 614.5,622.2 622.7,606.6 C630.9,591.0 636.6,576.2 642.4,562.2 C648.1,548.2 652.8,535.6 657.2,522.8 C661.7,510.0 665.9,494.6 669.1,485.5 C672.3,476.4 675.2,468.0 676.6,468.0 C678.0,468.0 677.3,470.2 677.7,485.5 C678.1,500.8 678.1,544.8 678.8,560.0 C679.5,575.2 682.1,561.0 681.8,577.0 C681.5,593.0 679.4,632.8 676.9,655.8 C674.4,678.8 669.5,699.4 667.0,714.9 C664.5,730.4 662.8,741.5 662.0,749.0 C661.2,756.5 610.5,758.2 662.0,760.0 C713.5,761.8 919.5,761.8 971.0,760.0 C1022.5,758.2 971.5,764.5 971.0,749.0 C970.5,733.5 969.1,690.0 968.2,667.3 C967.3,644.6 967.5,628.1 965.5,612.7 C963.5,597.3 958.1,587.1 956.0,575.0 C953.9,562.9 953.3,552.5 953.0,540.0 C952.7,527.5 952.9,513.8 954.0,500.0 C955.1,486.2 957.0,470.2 959.7,457.0 C962.4,443.8 966.6,433.5 970.0,420.8 C973.4,408.1 975.9,382.9 980.0,381.0 C984.1,379.1 989.0,397.8 994.9,409.4 C1000.8,420.9 1009.3,435.2 1015.3,450.3 C1021.3,465.4 1025.9,484.2 1031.0,500.0 C1036.1,515.8 1041.9,532.6 1046.0,545.0 C1050.1,557.4 1051.2,559.6 1055.5,574.5 C1059.8,589.4 1065.9,616.3 1071.8,634.5 C1077.7,652.7 1086.0,664.5 1091.0,683.6 C1096.0,702.7 1100.0,736.3 1101.8,749.0 C1103.6,761.7 1092.5,758.2 1102.0,760.0 C1111.5,761.8 1149.5,761.8 1159.0,760.0 C1168.5,758.2 1159.9,760.8 1159.0,749.0 C1158.1,737.2 1155.4,708.1 1153.6,689.0 C1151.8,669.9 1150.9,652.7 1148.2,634.5 C1145.5,616.3 1140.9,596.4 1137.3,580.0 C1133.7,563.6 1129.6,550.9 1126.4,536.4 C1123.2,521.9 1121.7,507.3 1118.0,492.7 C1114.3,478.1 1109.2,464.4 1104.5,449.0 C1099.8,433.6 1094.1,413.2 1090.0,400.0 C1085.9,386.8 1083.2,379.3 1080.0,370.0 C1076.8,360.7 1073.7,352.7 1071.0,344.0 C1068.3,335.3 1066.5,327.3 1064.0,318.0 C1061.5,308.7 1058.7,297.7 1056.0,288.0 C1053.3,278.3 1051.2,269.3 1048.0,260.0 C1044.8,250.7 1041.5,240.8 1037.0,232.0 C1032.5,223.2 1025.7,214.0 1020.7,207.0 C1015.7,200.0 1013.0,195.8 1007.0,190.0 C1001.0,184.2 993.7,178.0 985.0,172.0 C976.3,166.0 965.8,159.7 955.0,154.0 C944.2,148.3 929.7,142.1 920.5,138.0 C911.3,133.9 905.6,133.2 900.0,129.7 C894.4,126.2 890.8,121.3 887.0,117.0 C883.2,112.7 880.1,108.8 877.4,104.0 C874.7,99.2 872.3,93.9 871.0,88.0 C869.7,82.1 870.2,74.3 869.4,68.8 C868.6,63.3 867.8,58.1 866.2,55.2 C864.6,52.3 862.2,51.1 859.8,51.5 C857.4,51.9 855.3,54.7 851.8,57.6 C848.3,60.5 844.4,65.6 839.0,68.8 C833.6,72.0 826.1,75.0 819.7,76.9 C813.3,78.8 808.4,79.5 800.5,80.0 C792.6,80.5 779.6,82.1 772.5,80.0 C765.4,77.9 760.8,69.1 758.0,67.2 C755.2,65.3 756.0,65.3 755.6,68.8 C755.2,72.3 757.1,85.0 755.6,88.0 Z" fill="none" stroke="#34f696" stroke-width="7"/></g><path d="M755.6,88.0 C754.1,91.0 747.6,86.1 746.8,86.5 C746.0,86.9 749.5,88.2 751.0,90.5 C752.5,92.8 755.1,96.4 756.0,100.0 C756.9,103.6 756.4,105.5 756.4,112.0 C756.4,118.5 756.9,132.3 756.0,139.0 C755.1,145.7 752.5,148.5 750.8,152.0 C749.1,155.5 749.2,156.3 746.0,160.0 C742.8,163.7 740.7,169.0 731.5,174.0 C722.3,179.0 702.8,184.3 690.7,190.0 C678.6,195.7 667.3,202.0 659.0,208.0 C650.7,214.0 645.3,219.2 640.8,226.0 C636.2,232.8 634.3,239.0 631.7,248.8 C629.1,258.6 626.5,273.0 625.0,285.0 C623.5,297.0 623.6,308.5 622.7,321.0 C621.8,333.5 620.3,350.2 619.5,360.0 C618.7,369.8 619.3,371.7 617.8,380.0 C616.3,388.3 613.3,398.9 610.4,409.6 C607.5,420.3 605.0,432.5 600.5,444.0 C596.0,455.5 589.9,465.4 583.3,478.5 C576.7,491.6 567.6,509.7 561.0,522.8 C554.4,535.9 550.0,542.5 543.9,557.3 C537.8,572.1 530.0,595.1 524.2,611.5 C518.5,627.9 515.1,641.8 509.4,655.8 C503.6,669.8 495.3,684.7 489.7,695.2 C484.1,705.7 477.6,713.9 475.5,719.0 C473.4,724.1 472.9,723.5 477.0,726.0 C481.1,728.5 494.8,732.2 500.0,734.0 C505.2,735.8 504.9,736.4 508.0,736.5 C511.1,736.6 514.5,737.9 518.5,734.5 C522.5,731.1 526.4,722.9 532.3,716.4 C538.2,709.9 543.6,705.3 553.7,695.2 C563.8,685.1 581.6,670.6 593.1,655.8 C604.6,641.0 614.5,622.2 622.7,606.6 C630.9,591.0 636.6,576.2 642.4,562.2 C648.1,548.2 652.8,535.6 657.2,522.8 C661.7,510.0 665.9,494.6 669.1,485.5 C672.3,476.4 675.2,468.0 676.6,468.0 C678.0,468.0 677.3,470.2 677.7,485.5 C678.1,500.8 678.1,544.8 678.8,560.0 C679.5,575.2 682.1,561.0 681.8,577.0 C681.5,593.0 679.4,632.8 676.9,655.8 C674.4,678.8 669.5,699.4 667.0,714.9 C664.5,730.4 662.8,741.5 662.0,749.0 C661.2,756.5 610.5,758.2 662.0,760.0 C713.5,761.8 919.5,761.8 971.0,760.0 C1022.5,758.2 971.5,764.5 971.0,749.0 C970.5,733.5 969.1,690.0 968.2,667.3 C967.3,644.6 967.5,628.1 965.5,612.7 C963.5,597.3 958.1,587.1 956.0,575.0 C953.9,562.9 953.3,552.5 953.0,540.0 C952.7,527.5 952.9,513.8 954.0,500.0 C955.1,486.2 957.0,470.2 959.7,457.0 C962.4,443.8 966.6,433.5 970.0,420.8 C973.4,408.1 975.9,382.9 980.0,381.0 C984.1,379.1 989.0,397.8 994.9,409.4 C1000.8,420.9 1009.3,435.2 1015.3,450.3 C1021.3,465.4 1025.9,484.2 1031.0,500.0 C1036.1,515.8 1041.9,532.6 1046.0,545.0 C1050.1,557.4 1051.2,559.6 1055.5,574.5 C1059.8,589.4 1065.9,616.3 1071.8,634.5 C1077.7,652.7 1086.0,664.5 1091.0,683.6 C1096.0,702.7 1100.0,736.3 1101.8,749.0 C1103.6,761.7 1092.5,758.2 1102.0,760.0 C1111.5,761.8 1149.5,761.8 1159.0,760.0 C1168.5,758.2 1159.9,760.8 1159.0,749.0 C1158.1,737.2 1155.4,708.1 1153.6,689.0 C1151.8,669.9 1150.9,652.7 1148.2,634.5 C1145.5,616.3 1140.9,596.4 1137.3,580.0 C1133.7,563.6 1129.6,550.9 1126.4,536.4 C1123.2,521.9 1121.7,507.3 1118.0,492.7 C1114.3,478.1 1109.2,464.4 1104.5,449.0 C1099.8,433.6 1094.1,413.2 1090.0,400.0 C1085.9,386.8 1083.2,379.3 1080.0,370.0 C1076.8,360.7 1073.7,352.7 1071.0,344.0 C1068.3,335.3 1066.5,327.3 1064.0,318.0 C1061.5,308.7 1058.7,297.7 1056.0,288.0 C1053.3,278.3 1051.2,269.3 1048.0,260.0 C1044.8,250.7 1041.5,240.8 1037.0,232.0 C1032.5,223.2 1025.7,214.0 1020.7,207.0 C1015.7,200.0 1013.0,195.8 1007.0,190.0 C1001.0,184.2 993.7,178.0 985.0,172.0 C976.3,166.0 965.8,159.7 955.0,154.0 C944.2,148.3 929.7,142.1 920.5,138.0 C911.3,133.9 905.6,133.2 900.0,129.7 C894.4,126.2 890.8,121.3 887.0,117.0 C883.2,112.7 880.1,108.8 877.4,104.0 C874.7,99.2 872.3,93.9 871.0,88.0 C869.7,82.1 870.2,74.3 869.4,68.8 C868.6,63.3 867.8,58.1 866.2,55.2 C864.6,52.3 862.2,51.1 859.8,51.5 C857.4,51.9 855.3,54.7 851.8,57.6 C848.3,60.5 844.4,65.6 839.0,68.8 C833.6,72.0 826.1,75.0 819.7,76.9 C813.3,78.8 808.4,79.5 800.5,80.0 C792.6,80.5 779.6,82.1 772.5,80.0 C765.4,77.9 760.8,69.1 758.0,67.2 C755.2,65.3 756.0,65.3 755.6,68.8 C755.2,72.3 757.1,85.0 755.6,88.0 Z" fill="none" stroke="#34f696" stroke-width="1.2"/><path d="M773 81 L773 74 L776 70 L779 69 L781 66 L784 67 L786 63 L790 64 L792 67 L795 69 L797 73 L799 76 L800 81 Z" fill="#f4f2f6"/><path d="M790 72 L793 76 M787 75 L789 79" stroke="#b89cc8" stroke-width="1"/></svg><svg class="b" style="left:1730px;top:60px" width="80" height="65" viewBox="1730 60 80 65"><defs><filter id="bl" x="-10%" y="-30%" width="120%" height="160%"><feGaussianBlur stdDeviation="0.35"/></filter><linearGradient id="cg" x1="0" y1="0" x2="0" y2="1"><stop offset="0" stop-color="#aeaeae"/><stop offset="1" stop-color="#9b9b9b"/></linearGradient></defs><polygon points="1740.4,73 1782,67.8 1782,117.7 1739.7,117.7" fill="url(#cg)"/><polygon points="1783.8,69.1 1799.4,76.9 1799.8,118 1783.8,118" fill="url(#cg)"/><text x="1760.5" y="97.6" font-family="Liberation Sans" font-weight="bold" font-size="9" fill="#505050" filter="url(#bl)" text-anchor="middle" transform="rotate(-3 1760 94)">FRONT</text><text x="1791.5" y="97.6" font-family="Liberation Sans" font-weight="bold" font-size="8" fill="#555" filter="url(#bl)" text-anchor="middle" transform="translate(1791.5 94) scale(0.5 1) translate(-1791.5 -94)">RIGHT</text></svg><svg class="b" style="left:10px;top:695px" width="40" height="35" viewBox="10 695 40 35"><line x1="26.4" y1="710" x2="26.4" y2="723" stroke="#00e000" stroke-width="1.2"/><line x1="26.4" y1="723.3" x2="37" y2="723.3" stroke="#ff1a1a" stroke-width="1.2"/><line x1="37" y1="722.6" x2="39" y2="722.6" stroke="#ff1a1a" stroke-width="1"/><line x1="23" y1="723.3" x2="26.4" y2="723.3" stroke="#1a1aff" stroke-width="1.2"/><line x1="20" y1="722.5" x2="23" y2="722.5" stroke="#1a1aff" stroke-width="1"/><text x="26.6" y="706" font-family="Liberation Sans" font-weight="bold" font-size="8.5" fill="#00e000" text-anchor="middle">y</text><text x="40" y="721" font-family="Liberation Sans" font-weight="bold" font-size="8.5" fill="#ff1a1a" text-anchor="middle">x</text><text x="19.5" y="720" font-family="Liberation Sans" font-weight="bold" font-size="8.5" fill="#1a1aff" text-anchor="middle">z</text></svg>
<div class="b" style="left:0.0px;top:0.0px;width:1829.0px;height:39.0px;background:#444444"></div><div class="t" style="left:9.2px;top:4.27px;font-size:11.5px;color:#c4c4c4;">View</div><div class="t" style="left:49.4px;top:4.27px;font-size:11.5px;color:#c4c4c4;">Shading</div><div class="t" style="left:107.6px;top:4.27px;font-size:11.5px;color:#c4c4c4;">Lighting</div><div class="t" style="left:165.3px;top:4.27px;font-size:11.5px;color:#c4c4c4;">Show</div><div class="t" style="left:209.5px;top:4.27px;font-size:11.5px;color:#c4c4c4;">Renderer</div><div class="t" style="left:271.2px;top:4.27px;font-size:11.5px;color:#c4c4c4;">Panels</div><div class="b" style="left:5.0px;top:20.0px;width:1.0px;height:16.0px;background:#7a7a7a"></div><div class="b" style="left:4.0px;top:24.0px;width:3.0px;height:8.0px;background:#8a8a8a;border-radius:1px"></div><div class="b" style="left:109.9px;top:20.0px;width:1.0px;height:16.0px;background:#7a7a7a"></div><div class="b" style="left:108.9px;top:24.0px;width:3.0px;height:8.0px;background:#8a8a8a;border-radius:1px"></div><div class="b" style="left:254.1px;top:20.0px;width:1.0px;height:16.0px;background:#7a7a7a"></div><div class="b" style="left:253.1px;top:24.0px;width:3.0px;height:8.0px;background:#8a8a8a;border-radius:1px"></div><div class="b" style="left:398.1px;top:20.0px;width:1.0px;height:16.0px;background:#7a7a7a"></div><div class="b" style="left:397.1px;top:24.0px;width:3.0px;height:8.0px;background:#8a8a8a;border-radius:1px"></div><div class="b" style="left:542.0px;top:20.0px;width:1.0px;height:16.0px;background:#7a7a7a"></div><div class="b" style="left:541.0px;top:24.0px;width:3.0px;height:8.0px;background:#8a8a8a;border-radius:1px"></div><div class="b" style="left:628.9px;top:20.0px;width:1.0px;height:16.0px;background:#7a7a7a"></div><div class="b" style="left:627.9px;top:24.0px;width:3.0px;height:8.0px;background:#8a8a8a;border-radius:1px"></div><div class="b" style="left:658.7px;top:20.0px;width:1.0px;height:16.0px;background:#7a7a7a"></div><div class="b" style="left:657.7px;top:24.0px;width:3.0px;height:8.0px;background:#8a8a8a;border-radius:1px"></div><div class="b" style="left:726.5px;top:20.0px;width:1.0px;height:16.0px;background:#7a7a7a"></div><div class="b" style="left:725.5px;top:24.0px;width:3.0px;height:8.0px;background:#8a8a8a;border-radius:1px"></div><svg class="b" style="left:0;top:0" width="1829" height="38" viewBox="0 0 1829 38"><rect x="12" y="20" width="2.5" height="14" fill="#7cc9e6"/><rect x="14" y="20" width="13" height="13" fill="#3aa3d0"/><rect x="13" y="33" width="15" height="3" fill="#3b81a3"/><rect x="27" y="21" width="1" height="13" fill="#3b6f8a"/><text x="20.5" y="31" font-family="Liberation Sans" font-weight="bold" font-size="10" fill="#fff" text-anchor="middle">A</text><rect x="33.5" y="23" width="10.5" height="10.5" fill="none" stroke="#9a9a9a" stroke-width="1.2"/><rect x="35" y="24.5" width="7.6" height="7.6" fill="#3ea8b8"/><circle cx="33.4" cy="22.8" r="1.2" fill="#aaaaaa"/><circle cx="44.1" cy="22.8" r="1.2" fill="#aaaaaa"/><circle cx="33.4" cy="33.5" r="1.2" fill="#aaaaaa"/><circle cx="44.1" cy="33.5" r="1.2" fill="#aaaaaa"/><rect x="51" y="21" width="14" height="13" fill="#4b535b"/><path d="M51 26 H60 V34" fill="none" stroke="#2e3338" stroke-width="0.8" stroke-dasharray="1 1"/><circle cx="77" cy="28" r="6.5" fill="#555555"/><path d="M77 28 L71.5 31.5 A6.5 6.5 0 0 1 82 24 Z" fill="#4d5060"/><rect x="92" y="21" width="11.5" height="9" fill="#4a5a4c"/><rect x="90" y="23" width="11.5" height="9" fill="#5a4a4a"/><rect x="89" y="25" width="11.5" height="9" fill="#4a4e62"/><rect x="88.5" y="27" width="11.5" height="8" fill="#4c5860"/><path d="M90 34 L93 31 L95 33 L97 30 L99 34 Z" fill="#6a6a6a"/><rect x="118.7" y="24.8" width="9.5" height="6.1" fill="#c8c8c8" rx="0.5"/><path d="M129 28 L133 24 V32 Z" fill="#c8c8c8"/><rect x="137.7" y="22.9" width="9.3" height="5.7" fill="#c8c8c8"/><path d="M147.7 26 L152.3 21.7 V30.2 Z" fill="#c8c8c8"/><rect x="137.5" y="29.2" width="7" height="5" fill="#3fb0c0"/><path d="M139 29.5 V27.8 A2 2 0 0 1 143 27.8 V29.5" fill="none" stroke="#3fb0c0" stroke-width="1.3"/><rect x="140.5" y="31" width="1" height="1.5" fill="#444"/><rect x="156.9" y="22.9" width="9.1" height="5.7" fill="#c8c8c8"/><path d="M167 26 L171 21.7 V30.2 Z" fill="#c8c8c8"/><circle cx="161" cy="30.2" r="3.2" fill="none" stroke="#3fb0c0" stroke-width="2"/><circle cx="161" cy="30.2" r="4.1" fill="none" stroke="#3fb0c0" stroke-width="1.2" stroke-dasharray="1.2 1"/><path d="M179.8 22 H186 V33.2 L183 30.5 L179.8 33.2 Z" fill="#c8c8c8"/><path d="M200 26 L205 21.5 V31 L200 34 Z" fill="#3fb0c0"/><path d="M195 34.5 L199 30.5 L209 30.5 L205 34.5 Z" fill="none" stroke="#c8c8c8" stroke-width="0.9"/><path d="M216.5 27.2 H220.6 V23" fill="none" stroke="#c8c8c8" stroke-width="1.3"/><path d="M214.2 27.2 L217.2 24.8 V29.6 Z M220.6 20.8 L218.3 23.6 H222.9 Z" fill="#c8c8c8"/><circle cx="224.4" cy="29.2" r="2.9" fill="none" stroke="#3fb0c0" stroke-width="1.4"/><path d="M222.3 31.3 L219.6 34.2" stroke="#3fb0c0" stroke-width="1.6"/><path d="M235 33.2 L236 30 L244 22.5 Q246 22 246 24 L238 31.8 Z" fill="#3fb0c0"/><path d="M236 30.5 L238 32" stroke="#c8c8c8" stroke-width="0.8"/><rect x="265.2" y="23.4" width="9.6" height="9.6" fill="none" stroke="#c8c8c8" stroke-width="1.2"/><path d="M268.4 23 V33 M271.6 23 V33 M265 26.6 H275 M265 29.8 H275" stroke="#c8c8c8" stroke-width="1.1"/><rect x="282.5" y="22.6" width="13" height="11" fill="none" stroke="#c8c8c8" stroke-width="1.1"/><path d="M283 24.5 H295 M283 31.8 H295" stroke="#c8c8c8" stroke-width="1.4" stroke-dasharray="1.5 1"/><rect x="301.5" y="22.6" width="13" height="11" fill="none" stroke="#c8c8c8" stroke-width="1.1"/><circle cx="307.9" cy="27.9" r="3.2" fill="#3fb0c0"/><rect x="318.5" y="19.5" width="17.5" height="17" fill="#3c3c3c" stroke="#333" stroke-width="1"/><rect x="320" y="22" width="14" height="12" fill="#525252"/><circle cx="327" cy="27.9" r="3.8" fill="#3e3e3e"/><rect x="339.5" y="22.6" width="13" height="11" fill="none" stroke="#c8c8c8" stroke-width="1.1"/><path d="M340 28 H352" stroke="#3fb0c0" stroke-width="1.2" stroke-dasharray="1 1"/><path d="M346 23 V33" stroke="#3fb0c0" stroke-width="1.2" stroke-dasharray="1 1.2"/><rect x="358.5" y="22.6" width="13" height="11" fill="none" stroke="#c8c8c8" stroke-width="1.1"/><circle cx="367.8" cy="26" r="2" fill="#3fb0c0"/><path d="M360 32.5 L362.7 28.5 L365.3 32.5 Z" fill="#3fb0c0"/><rect x="377.5" y="22.6" width="13" height="11" fill="none" stroke="#c8c8c8" stroke-width="1.1"/><text x="384" y="32" font-family="Liberation Serif" font-weight="bold" font-size="10" fill="#3fb0c0" text-anchor="middle">T</text><polygon points="414.40,21.30 420.12,24.60 420.12,31.20 414.40,34.50 408.68,31.20 408.68,24.60" fill="none" stroke="#c8c8c8" stroke-width="1.0" stroke-linejoin="round"/><polyline points="408.68,24.60 414.40,27.90 420.12,24.60" fill="none" stroke="#c8c8c8" stroke-width="1.0"/><line x1="414.4" y1="27.9" x2="414.4" y2="34.5" stroke="#c8c8c8" stroke-width="1.0"/><rect x="424" y="19" width="18" height="18" fill="#5285a6"/><polygon points="433.30,20.70 439.54,24.30 433.30,27.90 427.06,24.30" fill="#80d8e6"/><polygon points="427.06,24.30 433.30,27.90 433.30,35.10 427.06,31.50" fill="#3db2c4"/><polygon points="433.30,27.90 439.54,24.30 439.54,31.50 433.30,35.10" fill="#5cc6d6"/><polygon points="433.30,20.70 439.54,24.30 439.54,31.50 433.30,35.10 427.06,31.50 427.06,24.30" fill="none" stroke="#2a3a40" stroke-width="0.9" stroke-linejoin="round"/><polyline points="427.06,24.30 433.30,27.90 439.54,24.30" fill="none" stroke="#2a3a40" stroke-width="0.9"/><line x1="433.3" y1="27.9" x2="433.3" y2="35.1" stroke="#2a3a40" stroke-width="0.9"/><defs><pattern id="chk" x="0" y="0" width="4" height="4" patternUnits="userSpaceOnUse"><rect width="4" height="4" fill="#151515"/><rect width="2" height="2" fill="#e0e0e0"/><rect x="2" y="2" width="2" height="2" fill="#e0e0e0"/></pattern></defs><circle cx="452" cy="28" r="6.2" fill="url(#chk)"/><path d="M452 21.8 A6.2 6.2 0 0 0 452 34.2 Z" fill="#c8c8c8"/><polygon points="471.50,21.30 477.22,24.60 477.22,31.20 471.50,34.50 465.78,31.20 465.78,24.60" fill="none" stroke="#c8c8c8" stroke-width="1.0" stroke-linejoin="round"/><polyline points="465.78,24.60 471.50,27.90 477.22,24.60" fill="none" stroke="#c8c8c8" stroke-width="1.0"/><line x1="471.5" y1="27.9" x2="471.5" y2="34.5" stroke="#c8c8c8" stroke-width="1.0"/><polygon points="471.5,22.8 475,24.8 471.5,26.6 468,24.8" fill="#6fd3e0"/><polygon points="466.9,26.7 470.6,28.6 470.6,32.6 466.9,30.7" fill="#3db2c4"/><polygon points="476.1,26.7 472.4,28.6 472.4,32.6 476.1,30.7" fill="#3db2c4"/><circle cx="490" cy="28" r="6.2" fill="url(#chk)"/><path d="M506.5 33 V30.5 Q504.5 28.5 504.5 26.5 A4 4 0 0 1 512.5 26.5 Q512.5 28.5 510.5 30.5 V33 Z" fill="#c8c8c8"/><rect x="507" y="33.5" width="3" height="1.6" fill="#c8c8c8"/><path d="M502 28 H503.5 M514 28 H515.8 M508.5 20.5 V22 M503.5 23 L504.5 24 M513.5 23 L512.5 24" stroke="#c8c8c8" stroke-width="1.1"/><circle cx="530.6" cy="27.5" r="4.6" fill="#3fb0c0"/><path d="M521.5 30 L525 28 M522.5 32 L526 30 M524 33.5 L527 32" stroke="#c8c8c8" stroke-width="1"/><circle cx="558" cy="25.6" r="5" fill="#c8c8c8" stroke="#333" stroke-width="0.6"/><path d="M551.5 31.5 L558 35 L564.5 31.5" fill="none" stroke="#3fb0c0" stroke-width="1.2" stroke-dasharray="1 0.8"/><circle cx="572" cy="32" r="3.8" fill="#505050"/><circle cx="576" cy="28.5" r="3.8" fill="#737373"/><circle cx="580" cy="24.8" r="4" fill="#c8c8c8" stroke="#333" stroke-width="0.5"/><rect x="587" y="19" width="18" height="18" fill="#5285a6"/><path d="M595.5 21.5 A6.3 6.3 0 0 0 595.5 34.3" fill="none" stroke="#3fb0c0" stroke-width="2.2"/><path d="M596 21.5 A6.3 6.3 0 0 1 596 34.3" fill="none" stroke="#eee" stroke-width="2" stroke-dasharray="1.6 0.8"/><rect x="606.5" y="19.5" width="17.5" height="17" fill="#3c3c3c" stroke="#303030" stroke-width="1"/><rect x="609" y="22" width="5.5" height="5.5" fill="#3f4c50"/><rect x="612.8" y="26" width="8.4" height="8" fill="#43545a"/><rect x="639" y="22" width="8" height="8" fill="none" stroke="#3fb0c0" stroke-width="1.1" stroke-dasharray="2 1.2"/><path d="M645.5 26 L651.5 31.5 L648.5 31.8 L650 34.5 L648.8 35 L647.3 32.3 L645.5 34 Z" fill="#c8c8c8"/><rect x="666.5" y="19.5" width="17" height="17" fill="#333" stroke="#5a9ac8" stroke-width="1"/><rect x="670" y="25.5" width="7.5" height="7.5" fill="#c8c8c8"/><rect x="673.5" y="22.5" width="7" height="7" fill="none" stroke="#c8c8c8" stroke-width="1.8"/><rect x="686.3" y="20.2" width="15.7" height="15.3" fill="#3f3f3f"/><rect x="687.8" y="26.3" width="8.5" height="7.7" fill="#c8c8c8"/><path d="M693 22.5 H700 V29.7 H697" fill="none" stroke="#c8c8c8" stroke-width="1.1"/><rect x="705" y="20.2" width="15.8" height="15.3" fill="#3f3f3f"/><rect x="707.5" y="22.5" width="11.5" height="11" fill="none" stroke="#c8c8c8" stroke-width="1.1"/><path d="M710.5 25.5 L716 31.5" stroke="#c8c8c8" stroke-width="1.3"/><circle cx="710.5" cy="25.3" r="1.2" fill="#c8c8c8"/><circle cx="744.1" cy="27.9" r="5.8" fill="#c8c8c8"/><circle cx="744.1" cy="27.9" r="2" fill="#444"/><path d="M744.1 22 L745 26 M749.5 26 L746 27.5 M747 32.5 L744.5 30 M740 32 L742.5 29 M738.5 26.5 L742 27" stroke="#444" stroke-width="0.9"/><path d="M804.5 23.5 A4.3 4.3 0 0 0 804.5 32.3 Z" fill="#c8c8c8"/><rect x="806" y="22" width="4.2" height="12.5" fill="#c8c8c8"/><rect x="857" y="19" width="18" height="17.6" fill="#5285a6"/><circle cx="866" cy="27.8" r="6.6" fill="#3cb8c6" stroke="#2a3a40" stroke-width="1"/><text x="866" y="30" font-family="Liberation Sans" font-weight="bold" font-size="5.6" fill="#1f2f33" text-anchor="middle">ON</text></svg><div class="b" style="left:755.2px;top:20.2px;width:37.5px;height:13.8px;background:#2b2b2b;border-radius:3px"></div><div class="t" style="left:760.2px;top:23.04px;font-size:10.7px;color:#d8d8d8;">0.00</div><div class="b" style="left:816.0px;top:20.2px;width:37.7px;height:13.8px;background:#2b2b2b;border-radius:3px"></div><div class="t" style="left:821.0px;top:23.04px;font-size:10.7px;color:#d8d8d8;">1.00</div><div class="b" style="left:878.0px;top:19.2px;width:197.7px;height:16.5px;background:#5b5b5b;border-radius:3px"></div><div class="b" style="left:1055.4px;top:19.2px;width:1.4px;height:16.5px;background:#4c4c4c"></div><svg class="b" style="left:1060px;top:24px" width="14" height="8"><path d="M2 1 L11.5 1 L6.75 6.5 Z" fill="#c8c8c8"/></svg><div class="t" style="left:881.5px;top:23.92px;font-size:10.25px;color:#d0d0d0;">ACES 1.0 SDR-video (sRGB)</div><div class="b" style="left:1283px;top:70px;width:395px;height:562.5px;border-radius:8px;box-shadow:0 9px 34px 6px rgba(0,0,0,0.24)"></div><div class="b" style="left:1283px;top:70px;width:395px;height:562.5px;border-radius:8px;background:#444444;box-shadow:inset 0 0 0 1px #5c5c5c;overflow:hidden"></div><div class="b" style="left:1283px;top:70px;width:395px;height:30px;border-radius:8px 8px 0 0;background:#f3f3f3"></div><div class="b" style="left:1283.0px;top:99.5px;width:395.0px;height:1.0px;background:#3a3a3a"></div><svg class="b" style="left:1290px;top:75px" width="18" height="18" viewBox="1290 75 18 18"><rect x="1291.4" y="77" width="2.4" height="11" fill="#7cc5e3"/><rect x="1293.6" y="76" width="11.6" height="11.2" fill="#2f9fcc"/><rect x="1305.2" y="78" width="1.3" height="13" fill="#2a5f7a"/><rect x="1293.1" y="87" width="13.3" height="4.7" fill="#2d6d8d"/><path d="M1296 85 V78.5 H1297.6 L1299.4 82 L1301.2 78.5 H1302.8 V85 H1301.6 V80.8 L1299.9 84 H1298.9 L1297.2 80.8 V85 Z" fill="#ffffff"/><rect x="1296.5" y="89" width="6" height="0.9" fill="#b8d4e0"/></svg><div class="t" style="left:1313.0px;top:78.90px;font-size:11.7px;color:#8c8c8c;">Create new AdnFat</div><div class="b" style="left:1559.0px;top:84.0px;width:10.0px;height:1.0px;background:#7a7a7a"></div><div class="b" style="left:1604.3px;top:79.0px;width:9.7px;height:9.8px;border:1px solid #7a7a7a;border-radius:1.5px;box-sizing:border-box"></div><svg class="b" style="left:1648px;top:77px" width="14" height="14" viewBox="1648 77 14 14"><path d="M1650 79 L1660 89 M1660 79 L1650 89" stroke="#7a7a7a" stroke-width="1.1"/></svg><div class="t" style="left:1292.6px;top:105.43px;font-size:11.3px;color:#bdbdbd;">Help</div><div class="t" style="left:1292.6px;top:133.59px;font-size:11.0px;color:#bdbdbd;">Custom Name:</div><div class="b" style="left:1371.8px;top:128.8px;width:296.8px;height:18.0px;background:#2b2b2b;border-radius:3px;box-shadow:inset 0 0 0 1px #383838"></div><div class="t" style="left:1375.1px;top:133.33px;font-size:11.3px;color:#dcdcdc;">AdnFat</div><div class="b" style="left:1292.0px;top:164.7px;width:376.6px;height:100.6px;background:#4a4a4a;border-radius:2px"></div><div class="b" style="left:1299.7px;top:163.7px;width:88.0px;height:7.5px;background:#474747"></div><div class="t" style="left:1301.4px;top:160.87px;font-size:11.5px;color:#c8c8c8;">Solver Attributes</div><div class="t" style="right:426.5px;top:188.07px;font-size:11.5px;color:#bdbdbd;">Iterations:</div><div class="b" style="left:1408.3px;top:183.5px;width:64.4px;height:18.2px;background:#2b2b2b;border-radius:3.5px;box-shadow:inset 0 0 0 1px #202020, inset 0 0 0 2px #383838"></div><div class="t" style="left:1414.3px;top:189.23px;font-size:11.3px;color:#dcdcdc;">5</div><div class="b" style="left:1480.0px;top:190.0px;width:150.0px;height:4.0px;background:#2c2c2c;border-radius:2px"></div><div class="b" style="left:1545.0px;top:185.5px;width:7.2px;height:13.0px;background:#c9c9c9;border-radius:3px"></div><div class="t" style="right:426.5px;top:215.07px;font-size:11.5px;color:#bdbdbd;">Material:</div><div class="b" style="left:1410.1px;top:209.2px;width:247.8px;height:18.6px;background:#5b5b5b;border-radius:2px"></div><div class="b" style="left:1637.0px;top:209.2px;width:2.0px;height:18.6px;background:#545454"></div><svg class="b" style="left:1642px;top:214px" width="14" height="9"><path d="M1.7 1.9 L11 1.9 L6.35 7.3 Z" fill="#c8c8c8"/></svg><div class="t" style="left:1413.5px;top:215.27px;font-size:11.5px;color:#dcdcdc;">Fat</div><div class="t" style="right:426.5px;top:240.81px;font-size:11.8px;color:#bdbdbd;">Stiffness Multiplier:</div><div class="b" style="left:1408.3px;top:236.6px;width:64.4px;height:18.0px;background:#2b2b2b;border-radius:3.5px;box-shadow:inset 0 0 0 1px #202020, inset 0 0 0 2px #383838"></div><div class="t" style="left:1414.3px;top:242.13px;font-size:11.3px;color:#dcdcdc;">1.000</div><div class="b" style="left:1480.0px;top:243.0px;width:150.0px;height:4.0px;background:#2c2c2c;border-radius:2px"></div><div class="b" style="left:1553.0px;top:238.5px;width:7.2px;height:13.0px;background:#c9c9c9;border-radius:3px"></div><div class="b" style="left:1292.0px;top:282.7px;width:376.6px;height:74.0px;background:#4a4a4a;border-radius:2px"></div><div class="b" style="left:1299.7px;top:281.7px;width:79.0px;height:7.5px;background:#474747"></div><div class="t" style="left:1301.4px;top:278.87px;font-size:11.5px;color:#c8c8c8;">Time Attributes</div><div class="t" style="right:436.8px;top:306.20px;font-size:11.1px;color:#bdbdbd;">Preroll Start Time:</div><div class="b" style="left:1398.3px;top:301.4px;width:64.1px;height:17.9px;background:#2b2b2b;border-radius:3.5px;box-shadow:inset 0 0 0 1px #202020, inset 0 0 0 2px #383838"></div><div class="t" style="left:1404.3px;top:306.83px;font-size:11.3px;color:#dcdcdc;">-10</div><div class="t" style="right:436.8px;top:331.90px;font-size:11.1px;color:#bdbdbd;">Start Time:</div><div class="b" style="left:1398.3px;top:327.3px;width:64.1px;height:18.2px;background:#2b2b2b;border-radius:3.5px;box-shadow:inset 0 0 0 1px #202020, inset 0 0 0 2px #383838"></div><div class="t" style="left:1404.3px;top:333.03px;font-size:11.3px;color:#dcdcdc;">-10</div><div class="b" style="left:1292.0px;top:374.3px;width:376.6px;height:72.7px;background:#4a4a4a;border-radius:2px"></div><div class="b" style="left:1299.7px;top:373.3px;width:80.0px;height:7.5px;background:#474747"></div><div class="t" style="left:1301.4px;top:370.47px;font-size:11.5px;color:#c8c8c8;">Scale Attributes</div><div class="t" style="right:464.6px;top:397.34px;font-size:10.7px;color:#bdbdbd;">Time Scale:</div><div class="b" style="left:1370.8px;top:392.2px;width:63.6px;height:17.9px;background:#2b2b2b;border-radius:3.5px;box-shadow:inset 0 0 0 1px #202020, inset 0 0 0 2px #383838"></div><div class="t" style="left:1376.8px;top:397.63px;font-size:11.3px;color:#dcdcdc;">1.000</div><div class="b" style="left:1442.0px;top:399.0px;width:149.7px;height:4.0px;background:#2c2c2c;border-radius:2px"></div><div class="b" style="left:1458.0px;top:394.5px;width:7.2px;height:13.0px;background:#c9c9c9;border-radius:3px"></div><div class="t" style="right:464.6px;top:423.44px;font-size:10.7px;color:#bdbdbd;">Space Scale:</div><div class="b" style="left:1370.8px;top:418.4px;width:63.6px;height:17.9px;background:#2b2b2b;border-radius:3.5px;box-shadow:inset 0 0 0 1px #202020, inset 0 0 0 2px #383838"></div><div class="t" style="left:1376.8px;top:423.83px;font-size:11.3px;color:#dcdcdc;">1.000</div><div class="b" style="left:1442.0px;top:425.0px;width:149.7px;height:4.0px;background:#2c2c2c;border-radius:2px"></div><div class="b" style="left:1445.0px;top:420.5px;width:7.2px;height:13.0px;background:#c9c9c9;border-radius:3px"></div><div class="b" style="left:1292.0px;top:465.5px;width:376.6px;height:125.3px;background:#4a4a4a;border-radius:2px"></div><div class="b" style="left:1299.7px;top:464.5px;width:99.0px;height:7.5px;background:#474747"></div><div class="t" style="left:1301.4px;top:462.00px;font-size:11.1px;color:#c8c8c8;">Dynamic Properties</div><div class="t" style="right:400.8px;top:488.79px;font-size:11.0px;color:#bdbdbd;">Gravity:</div><div class="b" style="left:1434.4px;top:483.4px;width:64.1px;height:17.9px;background:#2b2b2b;border-radius:3.5px;box-shadow:inset 0 0 0 1px #202020, inset 0 0 0 2px #383838"></div><div class="t" style="left:1440.4px;top:488.83px;font-size:11.3px;color:#dcdcdc;">0.000</div><div class="b" style="left:1506.5px;top:490.0px;width:149.3px;height:4.0px;background:#2c2c2c;border-radius:2px"></div><div class="b" style="left:1507.6px;top:485.5px;width:7.2px;height:13.0px;background:#c9c9c9;border-radius:3px"></div><div class="t" style="right:400.8px;top:514.13px;font-size:11.3px;color:#bdbdbd;">Gravity Direction:</div><div class="b" style="left:1434.4px;top:509.3px;width:64.1px;height:18.2px;background:#2b2b2b;border-radius:3.5px;box-shadow:inset 0 0 0 1px #202020, inset 0 0 0 2px #383838"></div><div class="t" style="left:1440.4px;top:515.03px;font-size:11.3px;color:#dcdcdc;">0.000</div><div class="b" style="left:1506.5px;top:509.3px;width:64.1px;height:18.2px;background:#2b2b2b;border-radius:3.5px;box-shadow:inset 0 0 0 1px #202020, inset 0 0 0 2px #383838"></div><div class="t" style="left:1512.5px;top:515.03px;font-size:11.3px;color:#dcdcdc;">-1.000</div><div class="b" style="left:1578.3px;top:509.3px;width:64.1px;height:18.2px;background:#2b2b2b;border-radius:3.5px;box-shadow:inset 0 0 0 1px #202020, inset 0 0 0 2px #383838"></div><div class="t" style="left:1584.3px;top:515.03px;font-size:11.3px;color:#dcdcdc;">0.000</div><div class="t" style="right:400.8px;top:539.65px;font-size:11.75px;color:#bdbdbd;">Global Damp. Multiplier:</div><div class="b" style="left:1434.4px;top:535.5px;width:64.1px;height:17.9px;background:#2b2b2b;border-radius:3.5px;box-shadow:inset 0 0 0 1px #202020, inset 0 0 0 2px #383838"></div><div class="t" style="left:1440.4px;top:540.93px;font-size:11.3px;color:#dcdcdc;">0.100</div><div class="b" style="left:1506.5px;top:542.5px;width:149.3px;height:4.0px;background:#2c2c2c;border-radius:2px"></div><div class="b" style="left:1507.6px;top:538.0px;width:7.2px;height:13.0px;background:#c9c9c9;border-radius:3px"></div><div class="t" style="right:400.8px;top:565.93px;font-size:11.3px;color:#bdbdbd;">Inertia Damper:</div><div class="b" style="left:1434.4px;top:561.6px;width:64.1px;height:17.9px;background:#2b2b2b;border-radius:3.5px;box-shadow:inset 0 0 0 1px #202020, inset 0 0 0 2px #383838"></div><div class="t" style="left:1440.4px;top:567.03px;font-size:11.3px;color:#dcdcdc;">0.000</div><div class="b" style="left:1506.5px;top:568.5px;width:149.3px;height:4.0px;background:#2c2c2c;border-radius:2px"></div><div class="b" style="left:1507.6px;top:564.0px;width:7.2px;height:13.0px;background:#c9c9c9;border-radius:3px"></div><div class="b" style="left:1292.0px;top:600.0px;width:183.8px;height:22.8px;background:#5b5b5b"></div><div class="t" style="left:1183.9px;width:400px;text-align:center;top:606.69px;font-size:11.0px;color:#dadada;">Cancel</div><div class="b" style="left:1485.9px;top:600.0px;width:182.7px;height:22.8px;background:#5b5b5b"></div><div class="t" style="left:1377.2px;width:400px;text-align:center;top:606.69px;font-size:11.0px;color:#dadada;">Create</div>
<div class="b" style="left:0;top:0;width:1px;height:749px;background:#8a8a8a"></div>
</body></html>
